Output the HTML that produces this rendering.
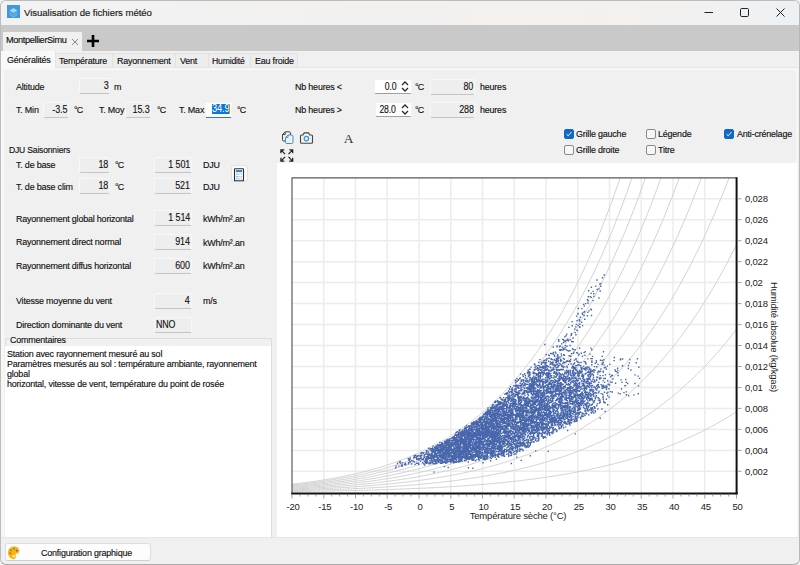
<!DOCTYPE html>
<html><head><meta charset="utf-8">
<style>
html,body{margin:0;padding:0}
body{width:800px;height:565px;overflow:hidden;position:relative;background:#f0f0f0;font-family:"Liberation Sans",sans-serif;color:#1c1c1c}
.a{position:absolute}
.t{position:absolute;font-size:9.5px;line-height:11px;height:11px;letter-spacing:-0.2px;white-space:nowrap;color:#111;-webkit-text-stroke:0.15px #111;transform:scaleX(.94);transform-origin:0 50%}
.ro i,.ed i{display:inline-block;font-style:normal;transform:scaleX(.87);transform-origin:100% 50%}
.ro{position:absolute;box-sizing:border-box;background:#eeeeee;border:1px solid #f8f8f8;border-bottom:1.5px solid #c4c4c4;border-radius:2px;font-size:10.3px;line-height:13px;letter-spacing:-0.1px;text-align:right;padding-right:0.5px;padding-top:0px;white-space:nowrap;color:#111;-webkit-text-stroke:0.12px #111}
.ed{position:absolute;box-sizing:border-box;background:#fff;border:1px solid #f2f2f2;border-bottom:1px solid #a0a0a0;border-radius:2px;font-size:10px;line-height:13.5px;letter-spacing:-0.2px;text-align:right;white-space:nowrap;color:#111;-webkit-text-stroke:0.12px #111}
.tab{position:absolute;top:52.5px;height:15px;box-sizing:border-box;background:#ededed;border:1px solid #e2e2e2;border-bottom:none}
.cb{position:absolute;box-sizing:border-box;width:10px;height:10px;border:1px solid #8a8a8a;border-radius:2px;background:#f6f6f6}
.cbk{background:#0f68c4;border-color:#0f68c4}
</style></head><body>
<!-- window frame -->
<div class="a" style="left:0;top:0;width:800px;height:565px;box-sizing:border-box;border:1px solid #bcbcbc;border-right-color:#b8b8b8;border-bottom-color:#ababab;border-radius:6px 6px 6px 6px"></div>
<!-- title bar -->
<div class="a" style="left:1px;top:1px;width:798px;height:24px;background:linear-gradient(90deg,#f2f2f2 0%,#f2f1f0 40%,#f4f0ed 75%,#f1f1f1 90%,#edf1f4 100%);border-radius:5px 5px 0 0"></div>
<div class="a" style="left:7px;top:5px;width:13px;height:13px;background:#3b9ae0">
<svg width="13" height="13" viewBox="0 0 13 13"><path d="M6.5 2 L10.5 4.5 L6.5 7 L2.5 4.5Z" fill="#a9d3f3"/><path d="M2.5 6.5 L6.5 9 L10.5 6.5 M2.5 8.5 L6.5 11 L10.5 8.5" fill="none" stroke="#8cc4ef" stroke-width="0.8"/></svg>
</div>
<div class="t" style="left:24px;top:7px;font-size:9.6px;letter-spacing:-0.05px;color:#1a1a1a;transform:none">Visualisation de fichiers météo</div>
<!-- caption buttons -->
<svg class="a" style="left:700px;top:5px" width="100" height="16" viewBox="0 0 100 16">
<line x1="4.5" y1="7.5" x2="13" y2="7.5" stroke="#222" stroke-width="1"/>
<rect x="40.5" y="3.5" width="8" height="8" rx="1.2" fill="none" stroke="#222" stroke-width="1"/>
<path d="M76.5 3.5 L84.5 11.5 M84.5 3.5 L76.5 11.5" stroke="#222" stroke-width="1"/>
</svg>
<!-- tab strip -->
<div class="a" style="left:1px;top:25px;width:798px;height:26px;background:#c9c9c9"></div>
<div class="a" style="left:3px;top:32px;width:79px;height:19px;background:#f0f0f0"></div>
<div class="t" style="left:6px;top:35px;font-size:9.2px;letter-spacing:-0.35px;transform:none">MontpellierSimu</div>
<svg class="a" style="left:71px;top:38px" width="8" height="8" viewBox="0 0 8 8"><path d="M1 1 L7 7 M7 1 L1 7" stroke="#7a7a7a" stroke-width="0.9"/></svg>
<svg class="a" style="left:86px;top:34px" width="14" height="14" viewBox="0 0 14 14"><path d="M7 1 V13 M1 7 H13" stroke="#000" stroke-width="2.6"/></svg>
<!-- inner tabs -->
<div class="a" style="left:1px;top:51px;width:798px;height:18px;background:#f0f0f0"></div>
<div class="tab" style="left:55px;width:58px"></div>
<div class="tab" style="left:112px;width:64px"></div>
<div class="tab" style="left:175px;width:34px"></div>
<div class="tab" style="left:208px;width:43px"></div>
<div class="tab" style="left:250px;width:48px"></div>
<div class="a" style="left:1px;top:66.5px;width:798px;height:1px;background:#e6e6e6"></div>
<div class="a" style="left:1px;top:67.5px;width:797px;height:2.5px;background:#f7f7f7"></div>
<div class="a" style="left:1px;top:67.5px;width:3px;height:470px;background:#f7f7f7"></div>
<div class="a" style="left:796px;top:67.5px;width:2px;height:470px;background:#f7f7f7"></div>
<div class="a" style="left:1px;top:51px;width:55px;height:17px;background:#f9f9f9;border-right:1px solid #e4e4e4;box-sizing:border-box"></div>
<div class="t" style="left:7px;top:53.5px">Généralités</div>
<div class="t" style="left:59px;top:55px">Température</div>
<div class="t" style="left:117px;top:55px">Rayonnement</div>
<div class="t" style="left:180px;top:55px">Vent</div>
<div class="t" style="left:212px;top:55px;transform:scaleX(.91)">Humidité</div>
<div class="t" style="left:254.5px;top:55px">Eau froide</div>

<!-- top fields -->
<div class="t" style="left:16px;top:81px">Altitude</div>
<div class="ro" style="left:79px;top:78px;width:31px;height:16px"><i>3</i></div>
<div class="t" style="left:114px;top:81px">m</div>

<div class="t" style="left:16px;top:104px">T. Min</div>
<div class="ro" style="left:43px;top:102px;width:26px;height:16px"><i>-3.5</i></div>
<div class="t" style="left:74px;top:104px"><span style="letter-spacing:-1px">°</span>C</div>
<div class="t" style="left:99px;top:104px">T. Moy</div>
<div class="ro" style="left:125px;top:102px;width:26px;height:16px"><i>15.3</i></div>
<div class="t" style="left:156.5px;top:104px"><span style="letter-spacing:-1px">°</span>C</div>
<div class="t" style="left:178.5px;top:104px">T. Max</div>
<div class="a" style="left:204.5px;top:102px;width:27px;height:16px;box-sizing:border-box;background:#fff;border:1px solid #f4f4f4;border-bottom:1.6px solid #3573b5;border-radius:2px"></div>
<div class="a" style="left:212px;top:103.6px;width:17.3px;height:10.4px;background:#0b77d6"></div>
<div class="t" style="left:211.8px;top:103.3px;color:#fff;-webkit-text-stroke:0;font-size:10.4px;transform:scaleX(.9)">34.9</div>
<div class="a" style="left:229.2px;top:103.6px;width:1px;height:10.4px;background:#d98a3a"></div>
<div class="t" style="left:237px;top:104px"><span style="letter-spacing:-1px">°</span>C</div>

<div class="t" style="left:295px;top:81px">Nb heures &lt;</div>
<div class="ed" style="left:374px;top:79px;width:38px;height:15px;padding-right:15px"><i>0.0</i></div>
<svg class="a" style="left:400px;top:80px" width="10" height="13" viewBox="0 0 10 13"><path d="M2 5 L5 2 L8 5 M2 8 L5 11 L8 8" fill="none" stroke="#2a2a2a" stroke-width="1.25"/></svg>
<div class="t" style="left:415px;top:81px"><span style="letter-spacing:-1px">°</span>C</div>
<div class="ro" style="left:430px;top:79px;width:45px;height:16px"><i>80</i></div>
<div class="t" style="left:479.5px;top:81px">heures</div>

<div class="t" style="left:295px;top:104px">Nb heures &gt;</div>
<div class="ed" style="left:375px;top:102px;width:37px;height:15px;padding-right:15px"><i>28.0</i></div>
<svg class="a" style="left:400px;top:103px" width="10" height="13" viewBox="0 0 10 13"><path d="M2 5 L5 2 L8 5 M2 8 L5 11 L8 8" fill="none" stroke="#2a2a2a" stroke-width="1.25"/></svg>
<div class="t" style="left:415px;top:104px"><span style="letter-spacing:-1px">°</span>C</div>
<div class="ro" style="left:430px;top:102px;width:45px;height:16px"><i>288</i></div>
<div class="t" style="left:479.5px;top:104px">heures</div>

<!-- DJU -->
<div class="t" style="left:9px;top:143.5px;transform:scaleX(.9)">DJU Saisonniers</div>
<div class="t" style="left:16px;top:158.5px">T. de base</div>
<div class="ro" style="left:79px;top:157px;width:31px;height:16px"><i>18</i></div>
<div class="t" style="left:114.5px;top:158.5px"><span style="letter-spacing:-1px">°</span>C</div>
<div class="ro" style="left:153.5px;top:157px;width:38px;height:16px"><i>1 501</i></div>
<div class="t" style="left:203px;top:158.5px">DJU</div>
<div class="t" style="left:16px;top:180.5px">T. de base clim</div>
<div class="ro" style="left:79px;top:178px;width:31px;height:16px"><i>18</i></div>
<div class="t" style="left:114.5px;top:180.5px"><span style="letter-spacing:-1px">°</span>C</div>
<div class="ro" style="left:153.5px;top:178px;width:38px;height:16px"><i>521</i></div>
<div class="t" style="left:203px;top:180.5px">DJU</div>
<div class="a" style="left:230.5px;top:165px;width:17px;height:17px;box-sizing:border-box;background:#fbfbfb;border:1px solid #e2e2e2;border-radius:3px"></div>
<svg class="a" style="left:233px;top:167.5px" width="12" height="14" viewBox="0 0 12 14"><rect x="1.5" y="0.8" width="9" height="12" rx="0.4" fill="#fff" stroke="#2e2e2e" stroke-width="1.1"/><rect x="2.8" y="2" width="6.4" height="2.2" fill="#3b87cc"/><g fill="#8fbde6"><rect x="2.8" y="5.6" width="2" height="1.2"/><rect x="5.3" y="5.6" width="1.3" height="1.2"/><rect x="7.6" y="5.6" width="1.3" height="1.2"/><rect x="2.8" y="8" width="2" height="1.2"/><rect x="5.3" y="8" width="1.3" height="1.2"/><rect x="7.6" y="8" width="1.3" height="1.2"/><rect x="2.8" y="10.2" width="2" height="1.2"/><rect x="5.3" y="10.2" width="1.3" height="1.2"/><rect x="7.6" y="10.2" width="1.3" height="1.2"/></g></svg>

<div class="t" style="left:16px;top:212.5px">Rayonnement global horizontal</div>
<div class="ro" style="left:153.5px;top:210px;width:38px;height:16px"><i>1 514</i></div>
<div class="t" style="left:202.5px;top:212.5px">kWh/m².an</div>
<div class="t" style="left:16px;top:236px">Rayonnement direct normal</div>
<div class="ro" style="left:153.5px;top:234px;width:38px;height:16px"><i>914</i></div>
<div class="t" style="left:202.5px;top:236.5px">kWh/m².an</div>
<div class="t" style="left:16px;top:260px">Rayonnement diffus horizontal</div>
<div class="ro" style="left:153.5px;top:257.5px;width:38px;height:16px"><i>600</i></div>
<div class="t" style="left:202.5px;top:260px">kWh/m².an</div>

<div class="t" style="left:16px;top:295px">Vitesse moyenne du vent</div>
<div class="ro" style="left:153.5px;top:292.5px;width:38px;height:16px"><i>4</i></div>
<div class="t" style="left:202.5px;top:295px">m/s</div>
<div class="t" style="left:16px;top:318.5px">Direction dominante du vent</div>
<div class="ro" style="left:153.5px;top:316.5px;width:38px;height:16px;text-align:left;padding-left:1px"><i style="transform:scaleX(.86);transform-origin:0 50%">NNO</i></div>

<!-- Commentaires group -->
<div class="a" style="left:4.5px;top:337.5px;width:267.5px;height:201px;box-sizing:border-box;border:1px solid #dcdcdc;border-bottom:none;border-radius:2px"></div>
<div class="a" style="left:9px;top:333px;width:56px;height:10px;background:#f0f0f0"></div>
<div class="t" style="left:10px;top:334px">Commentaires</div>
<div class="a" style="left:5px;top:346px;width:265.5px;height:190.5px;background:#fff"></div>
<div class="t" style="left:6.5px;top:348.5px;line-height:10px">Station avec rayonnement mesuré au sol<br>Paramètres mesurés au sol : température ambiante, rayonnement<br>global<br>horizontal, vitesse de vent, température du point de rosée</div>

<!-- chart toolbar -->
<svg class="a" style="left:280px;top:130px" width="80" height="34" viewBox="0 0 80 34">
<path d="M2.5 4.5 L5.2 1.8 H9.3 Q10.5 1.8 10.5 3 V5.5 M5.5 11 H3.7 Q2.5 11 2.5 9.8 V4.5 M5.2 1.8 V4.5 H2.5" fill="none" stroke="#454545" stroke-width="1"/>
<path d="M5.5 7.5 L8 5 H11.8 Q13 5 13 6.2 V12.3 Q13 13.5 11.8 13.5 H6.7 Q5.5 13.5 5.5 12.3 Z" fill="#f0f0f0" stroke="#3a93d3" stroke-width="1"/>
<path d="M8 5 V7.5 H5.5" fill="none" stroke="#3a93d3" stroke-width="0.9"/>
<path d="M20.5 6 Q20.5 5 21.5 5 H23 L24.2 2.9 H28.6 L29.8 5 H31.5 Q32.5 5 32.5 6 V12.3 Q32.5 13.3 31.5 13.3 H21.5 Q20.5 13.3 20.5 12.3 Z" fill="none" stroke="#454545" stroke-width="1.1"/>
<circle cx="26.4" cy="8.6" r="2.2" fill="none" stroke="#3a93d3" stroke-width="1.2"/>
<text x="68.5" y="13.2" font-family="Liberation Serif" font-size="13.5" fill="#333" text-anchor="middle">A</text>
<path d="M0.9 23.3 V19.9 H4.3 M0.9 19.9 L5.1 24.1 M12.7 23.3 V19.9 H9.3 M12.7 19.9 L8.5 24.1 M0.9 27.7 V31.1 H4.3 M0.9 31.1 L5.1 26.9 M12.7 27.7 V31.1 H9.3 M12.7 31.1 L8.5 26.9" fill="none" stroke="#1e1e1e" stroke-width="1.2"/>
</svg>

<!-- checkboxes -->
<div class="cb cbk" style="left:564px;top:128.5px"><svg width="8" height="8" viewBox="0 0 8 8" style="position:absolute;left:0;top:0"><path d="M1.5 4.2 L3.2 5.8 L6.5 2" fill="none" stroke="#fff" stroke-width="0.9"/></svg></div>
<div class="t" style="left:576px;top:128px">Grille gauche</div>
<div class="cb" style="left:564px;top:144.5px"></div>
<div class="t" style="left:576px;top:144px">Grille droite</div>
<div class="cb" style="left:645.5px;top:128.5px"></div>
<div class="t" style="left:657.5px;top:128px">Légende</div>
<div class="cb" style="left:645.5px;top:144.5px"></div>
<div class="t" style="left:657.5px;top:144px">Titre</div>
<div class="cb cbk" style="left:724px;top:128.5px"><svg width="8" height="8" viewBox="0 0 8 8" style="position:absolute;left:0;top:0"><path d="M1.5 4.2 L3.2 5.8 L6.5 2" fill="none" stroke="#fff" stroke-width="0.9"/></svg></div>
<div class="t" style="left:736.5px;top:128px">Anti-crénelage</div>

<svg style="position:absolute;left:277px;top:163px" width="520" height="374" viewBox="277 163 520 374"><defs><clipPath id="fr"><rect x="292" y="177.8" width="444.6" height="315.5"/></clipPath></defs><rect x="277" y="163" width="520" height="374" fill="#fff"/><line x1="323.8" y1="177.8" x2="323.8" y2="493" stroke="#ececec" stroke-width="1.5"/><line x1="355.5" y1="177.8" x2="355.5" y2="493" stroke="#ececec" stroke-width="1.5"/><line x1="387.2" y1="177.8" x2="387.2" y2="493" stroke="#ececec" stroke-width="1.5"/><line x1="419" y1="177.8" x2="419" y2="493" stroke="#ececec" stroke-width="1.5"/><line x1="450.8" y1="177.8" x2="450.8" y2="493" stroke="#ececec" stroke-width="1.5"/><line x1="482.5" y1="177.8" x2="482.5" y2="493" stroke="#ececec" stroke-width="1.5"/><line x1="514.2" y1="177.8" x2="514.2" y2="493" stroke="#ececec" stroke-width="1.5"/><line x1="546" y1="177.8" x2="546" y2="493" stroke="#ececec" stroke-width="1.5"/><line x1="577.8" y1="177.8" x2="577.8" y2="493" stroke="#ececec" stroke-width="1.5"/><line x1="609.5" y1="177.8" x2="609.5" y2="493" stroke="#ececec" stroke-width="1.5"/><line x1="641.2" y1="177.8" x2="641.2" y2="493" stroke="#ececec" stroke-width="1.5"/><line x1="673" y1="177.8" x2="673" y2="493" stroke="#ececec" stroke-width="1.5"/><line x1="704.8" y1="177.8" x2="704.8" y2="493" stroke="#ececec" stroke-width="1.5"/><line x1="292" y1="471.3" x2="736" y2="471.3" stroke="#ececec" stroke-width="1.5"/><line x1="292" y1="450.4" x2="736" y2="450.4" stroke="#ececec" stroke-width="1.5"/><line x1="292" y1="429.4" x2="736" y2="429.4" stroke="#ececec" stroke-width="1.5"/><line x1="292" y1="408.4" x2="736" y2="408.4" stroke="#ececec" stroke-width="1.5"/><line x1="292" y1="387.5" x2="736" y2="387.5" stroke="#ececec" stroke-width="1.5"/><line x1="292" y1="366.5" x2="736" y2="366.5" stroke="#ececec" stroke-width="1.5"/><line x1="292" y1="345.5" x2="736" y2="345.5" stroke="#ececec" stroke-width="1.5"/><line x1="292" y1="324.6" x2="736" y2="324.6" stroke="#ececec" stroke-width="1.5"/><line x1="292" y1="303.6" x2="736" y2="303.6" stroke="#ececec" stroke-width="1.5"/><line x1="292" y1="282.6" x2="736" y2="282.6" stroke="#ececec" stroke-width="1.5"/><line x1="292" y1="261.7" x2="736" y2="261.7" stroke="#ececec" stroke-width="1.5"/><line x1="292" y1="240.7" x2="736" y2="240.7" stroke="#ececec" stroke-width="1.5"/><line x1="292" y1="219.7" x2="736" y2="219.7" stroke="#ececec" stroke-width="1.5"/><line x1="292" y1="198.8" x2="736" y2="198.8" stroke="#ececec" stroke-width="1.5"/><g clip-path="url(#fr)"><path d="M292 491.5 L293.6 491.5 L295.2 491.5 L296.8 491.4 L298.4 491.4 L299.9 491.4 L301.5 491.4 L303.1 491.4 L304.7 491.3 L306.3 491.3 L307.9 491.3 L309.5 491.3 L311.1 491.3 L312.6 491.2 L314.2 491.2 L315.8 491.2 L317.4 491.2 L319 491.1 L320.6 491.1 L322.2 491.1 L323.8 491.1 L325.3 491 L326.9 491 L328.5 491 L330.1 491 L331.7 490.9 L333.3 490.9 L334.9 490.9 L336.4 490.8 L338 490.8 L339.6 490.8 L341.2 490.8 L342.8 490.7 L344.4 490.7 L346 490.7 L347.6 490.6 L349.1 490.6 L350.7 490.6 L352.3 490.5 L353.9 490.5 L355.5 490.5 L357.1 490.4 L358.7 490.4 L360.3 490.3 L361.9 490.3 L363.4 490.3 L365 490.2 L366.6 490.2 L368.2 490.1 L369.8 490.1 L371.4 490.1 L373 490 L374.6 490 L376.1 489.9 L377.7 489.9 L379.3 489.8 L380.9 489.8 L382.5 489.7 L384.1 489.7 L385.7 489.6 L387.2 489.6 L388.8 489.5 L390.4 489.5 L392 489.4 L393.6 489.4 L395.2 489.3 L396.8 489.3 L398.4 489.2 L399.9 489.1 L401.5 489.1 L403.1 489 L404.7 489 L406.3 488.9 L407.9 488.8 L409.5 488.8 L411.1 488.7 L412.6 488.6 L414.2 488.6 L415.8 488.5 L417.4 488.4 L419 488.4 L420.6 488.3 L422.2 488.2 L423.8 488.1 L425.4 488.1 L426.9 488 L428.5 487.9 L430.1 487.8 L431.7 487.8 L433.3 487.7 L434.9 487.6 L436.5 487.5 L438 487.4 L439.6 487.3 L441.2 487.2 L442.8 487.2 L444.4 487.1 L446 487 L447.6 486.9 L449.2 486.8 L450.8 486.7 L452.3 486.6 L453.9 486.5 L455.5 486.4 L457.1 486.3 L458.7 486.2 L460.3 486.1 L461.9 486 L463.4 485.9 L465 485.7 L466.6 485.6 L468.2 485.5 L469.8 485.4 L471.4 485.3 L473 485.2 L474.6 485 L476.1 484.9 L477.7 484.8 L479.3 484.7 L480.9 484.5 L482.5 484.4 L484.1 484.3 L485.7 484.1 L487.3 484 L488.9 483.9 L490.4 483.7 L492 483.6 L493.6 483.4 L495.2 483.3 L496.8 483.1 L498.4 483 L500 482.8 L501.5 482.7 L503.1 482.5 L504.7 482.3 L506.3 482.2 L507.9 482 L509.5 481.8 L511.1 481.7 L512.7 481.5 L514.2 481.3 L515.8 481.2 L517.4 481 L519 480.8 L520.6 480.6 L522.2 480.4 L523.8 480.2 L525.4 480 L527 479.8 L528.5 479.6 L530.1 479.4 L531.7 479.2 L533.3 479 L534.9 478.8 L536.5 478.6 L538.1 478.4 L539.6 478.2 L541.2 477.9 L542.8 477.7 L544.4 477.5 L546 477.2 L547.6 477 L549.2 476.8 L550.8 476.5 L552.3 476.3 L553.9 476 L555.5 475.8 L557.1 475.5 L558.7 475.3 L560.3 475 L561.9 474.7 L563.5 474.5 L565 474.2 L566.6 473.9 L568.2 473.7 L569.8 473.4 L571.4 473.1 L573 472.8 L574.6 472.5 L576.2 472.2 L577.8 471.9 L579.3 471.6 L580.9 471.3 L582.5 471 L584.1 470.6 L585.7 470.3 L587.3 470 L588.9 469.7 L590.5 469.3 L592 469 L593.6 468.6 L595.2 468.3 L596.8 467.9 L598.4 467.6 L600 467.2 L601.6 466.8 L603.1 466.5 L604.7 466.1 L606.3 465.7 L607.9 465.3 L609.5 464.9 L611.1 464.5 L612.7 464.1 L614.3 463.7 L615.8 463.3 L617.4 462.9 L619 462.5 L620.6 462 L622.2 461.6 L623.8 461.2 L625.4 460.7 L627 460.3 L628.5 459.8 L630.1 459.3 L631.7 458.9 L633.3 458.4 L634.9 457.9 L636.5 457.4 L638.1 456.9 L639.7 456.5 L641.2 455.9 L642.8 455.4 L644.4 454.9 L646 454.4 L647.6 453.9 L649.2 453.3 L650.8 452.8 L652.4 452.2 L654 451.7 L655.5 451.1 L657.1 450.6 L658.7 450 L660.3 449.4 L661.9 448.8 L663.5 448.2 L665.1 447.6 L666.6 447 L668.2 446.4 L669.8 445.8 L671.4 445.1 L673 444.5 L674.6 443.8 L676.2 443.2 L677.8 442.5 L679.3 441.9 L680.9 441.2 L682.5 440.5 L684.1 439.8 L685.7 439.1 L687.3 438.4 L688.9 437.7 L690.5 436.9 L692 436.2 L693.6 435.5 L695.2 434.7 L696.8 433.9 L698.4 433.2 L700 432.4 L701.6 431.6 L703.2 430.8 L704.8 430 L706.3 429.2 L707.9 428.4 L709.5 427.5 L711.1 426.7 L712.7 425.8 L714.3 425 L715.9 424.1 L717.5 423.2 L719 422.3 L720.6 421.4 L722.2 420.5 L723.8 419.6 L725.4 418.6 L727 417.7 L728.6 416.7 L730.1 415.8 L731.7 414.8 L733.3 413.8 L734.9 412.8 L736.5 411.8" fill="none" stroke="#cdcdcd" stroke-width="0.9"/><path d="M292 490.7 L293.6 490.6 L295.2 490.6 L296.8 490.6 L298.4 490.5 L299.9 490.5 L301.5 490.5 L303.1 490.4 L304.7 490.4 L306.3 490.3 L307.9 490.3 L309.5 490.3 L311.1 490.2 L312.6 490.2 L314.2 490.1 L315.8 490.1 L317.4 490 L319 490 L320.6 489.9 L322.2 489.9 L323.8 489.8 L325.3 489.8 L326.9 489.7 L328.5 489.7 L330.1 489.6 L331.7 489.6 L333.3 489.5 L334.9 489.5 L336.4 489.4 L338 489.3 L339.6 489.3 L341.2 489.2 L342.8 489.2 L344.4 489.1 L346 489 L347.6 489 L349.1 488.9 L350.7 488.8 L352.3 488.8 L353.9 488.7 L355.5 488.6 L357.1 488.5 L358.7 488.5 L360.3 488.4 L361.9 488.3 L363.4 488.2 L365 488.1 L366.6 488.1 L368.2 488 L369.8 487.9 L371.4 487.8 L373 487.7 L374.6 487.6 L376.1 487.5 L377.7 487.5 L379.3 487.4 L380.9 487.3 L382.5 487.2 L384.1 487.1 L385.7 487 L387.2 486.9 L388.8 486.8 L390.4 486.7 L392 486.5 L393.6 486.4 L395.2 486.3 L396.8 486.2 L398.4 486.1 L399.9 486 L401.5 485.9 L403.1 485.7 L404.7 485.6 L406.3 485.5 L407.9 485.4 L409.5 485.2 L411.1 485.1 L412.6 485 L414.2 484.8 L415.8 484.7 L417.4 484.6 L419 484.4 L420.6 484.3 L422.2 484.1 L423.8 484 L425.4 483.8 L426.9 483.7 L428.5 483.5 L430.1 483.4 L431.7 483.2 L433.3 483 L434.9 482.9 L436.5 482.7 L438 482.5 L439.6 482.4 L441.2 482.2 L442.8 482 L444.4 481.8 L446 481.6 L447.6 481.4 L449.2 481.3 L450.8 481.1 L452.3 480.9 L453.9 480.7 L455.5 480.5 L457.1 480.3 L458.7 480 L460.3 479.8 L461.9 479.6 L463.4 479.4 L465 479.2 L466.6 478.9 L468.2 478.7 L469.8 478.5 L471.4 478.2 L473 478 L474.6 477.8 L476.1 477.5 L477.7 477.3 L479.3 477 L480.9 476.7 L482.5 476.5 L484.1 476.2 L485.7 475.9 L487.3 475.7 L488.9 475.4 L490.4 475.1 L492 474.8 L493.6 474.5 L495.2 474.2 L496.8 473.9 L498.4 473.6 L500 473.3 L501.5 473 L503.1 472.7 L504.7 472.4 L506.3 472 L507.9 471.7 L509.5 471.4 L511.1 471 L512.7 470.7 L514.2 470.3 L515.8 470 L517.4 469.6 L519 469.2 L520.6 468.9 L522.2 468.5 L523.8 468.1 L525.4 467.7 L527 467.3 L528.5 466.9 L530.1 466.5 L531.7 466.1 L533.3 465.7 L534.9 465.3 L536.5 464.8 L538.1 464.4 L539.6 464 L541.2 463.5 L542.8 463.1 L544.4 462.6 L546 462.1 L547.6 461.7 L549.2 461.2 L550.8 460.7 L552.3 460.2 L553.9 459.7 L555.5 459.2 L557.1 458.7 L558.7 458.2 L560.3 457.6 L561.9 457.1 L563.5 456.6 L565 456 L566.6 455.5 L568.2 454.9 L569.8 454.3 L571.4 453.7 L573 453.2 L574.6 452.6 L576.2 452 L577.8 451.4 L579.3 450.7 L580.9 450.1 L582.5 449.5 L584.1 448.8 L585.7 448.2 L587.3 447.5 L588.9 446.8 L590.5 446.2 L592 445.5 L593.6 444.8 L595.2 444.1 L596.8 443.4 L598.4 442.6 L600 441.9 L601.6 441.2 L603.1 440.4 L604.7 439.7 L606.3 438.9 L607.9 438.1 L609.5 437.3 L611.1 436.5 L612.7 435.7 L614.3 434.9 L615.8 434 L617.4 433.2 L619 432.3 L620.6 431.5 L622.2 430.6 L623.8 429.7 L625.4 428.8 L627 427.9 L628.5 427 L630.1 426.1 L631.7 425.1 L633.3 424.2 L634.9 423.2 L636.5 422.2 L638.1 421.2 L639.7 420.2 L641.2 419.2 L642.8 418.2 L644.4 417.1 L646 416.1 L647.6 415 L649.2 413.9 L650.8 412.8 L652.4 411.7 L654 410.6 L655.5 409.4 L657.1 408.3 L658.7 407.1 L660.3 405.9 L661.9 404.8 L663.5 403.5 L665.1 402.3 L666.6 401.1 L668.2 399.8 L669.8 398.6 L671.4 397.3 L673 396 L674.6 394.7 L676.2 393.3 L677.8 392 L679.3 390.6 L680.9 389.3 L682.5 387.9 L684.1 386.4 L685.7 385 L687.3 383.6 L688.9 382.1 L690.5 380.6 L692 379.1 L693.6 377.6 L695.2 376.1 L696.8 374.5 L698.4 373 L700 371.4 L701.6 369.8 L703.2 368.1 L704.8 366.5 L706.3 364.8 L707.9 363.1 L709.5 361.4 L711.1 359.7 L712.7 358 L714.3 356.2 L715.9 354.4 L717.5 352.6 L719 350.8 L720.6 348.9 L722.2 347.1 L723.8 345.2 L725.4 343.3 L727 341.3 L728.6 339.4 L730.1 337.4 L731.7 335.4 L733.3 333.4 L734.9 331.3 L736.5 329.2" fill="none" stroke="#cdcdcd" stroke-width="0.9"/><path d="M292 489.9 L293.6 489.8 L295.2 489.8 L296.8 489.7 L298.4 489.7 L299.9 489.6 L301.5 489.5 L303.1 489.5 L304.7 489.4 L306.3 489.4 L307.9 489.3 L309.5 489.2 L311.1 489.2 L312.6 489.1 L314.2 489 L315.8 489 L317.4 488.9 L319 488.8 L320.6 488.7 L322.2 488.7 L323.8 488.6 L325.3 488.5 L326.9 488.4 L328.5 488.4 L330.1 488.3 L331.7 488.2 L333.3 488.1 L334.9 488 L336.4 487.9 L338 487.9 L339.6 487.8 L341.2 487.7 L342.8 487.6 L344.4 487.5 L346 487.4 L347.6 487.3 L349.1 487.2 L350.7 487.1 L352.3 487 L353.9 486.9 L355.5 486.8 L357.1 486.6 L358.7 486.5 L360.3 486.4 L361.9 486.3 L363.4 486.2 L365 486.1 L366.6 485.9 L368.2 485.8 L369.8 485.7 L371.4 485.6 L373 485.4 L374.6 485.3 L376.1 485.2 L377.7 485 L379.3 484.9 L380.9 484.7 L382.5 484.6 L384.1 484.4 L385.7 484.3 L387.2 484.1 L388.8 484 L390.4 483.8 L392 483.7 L393.6 483.5 L395.2 483.3 L396.8 483.2 L398.4 483 L399.9 482.8 L401.5 482.6 L403.1 482.5 L404.7 482.3 L406.3 482.1 L407.9 481.9 L409.5 481.7 L411.1 481.5 L412.6 481.3 L414.2 481.1 L415.8 480.9 L417.4 480.7 L419 480.5 L420.6 480.3 L422.2 480 L423.8 479.8 L425.4 479.6 L426.9 479.4 L428.5 479.1 L430.1 478.9 L431.7 478.7 L433.3 478.4 L434.9 478.2 L436.5 477.9 L438 477.6 L439.6 477.4 L441.2 477.1 L442.8 476.8 L444.4 476.6 L446 476.3 L447.6 476 L449.2 475.7 L450.8 475.4 L452.3 475.1 L453.9 474.8 L455.5 474.5 L457.1 474.2 L458.7 473.9 L460.3 473.6 L461.9 473.3 L463.4 472.9 L465 472.6 L466.6 472.2 L468.2 471.9 L469.8 471.6 L471.4 471.2 L473 470.8 L474.6 470.5 L476.1 470.1 L477.7 469.7 L479.3 469.3 L480.9 468.9 L482.5 468.5 L484.1 468.1 L485.7 467.7 L487.3 467.3 L488.9 466.9 L490.4 466.5 L492 466 L493.6 465.6 L495.2 465.2 L496.8 464.7 L498.4 464.2 L500 463.8 L501.5 463.3 L503.1 462.8 L504.7 462.3 L506.3 461.9 L507.9 461.4 L509.5 460.8 L511.1 460.3 L512.7 459.8 L514.2 459.3 L515.8 458.7 L517.4 458.2 L519 457.6 L520.6 457.1 L522.2 456.5 L523.8 455.9 L525.4 455.3 L527 454.8 L528.5 454.2 L530.1 453.5 L531.7 452.9 L533.3 452.3 L534.9 451.7 L536.5 451 L538.1 450.4 L539.6 449.7 L541.2 449 L542.8 448.3 L544.4 447.6 L546 446.9 L547.6 446.2 L549.2 445.5 L550.8 444.8 L552.3 444 L553.9 443.3 L555.5 442.5 L557.1 441.7 L558.7 441 L560.3 440.2 L561.9 439.4 L563.5 438.5 L565 437.7 L566.6 436.9 L568.2 436 L569.8 435.2 L571.4 434.3 L573 433.4 L574.6 432.5 L576.2 431.6 L577.8 430.7 L579.3 429.8 L580.9 428.8 L582.5 427.8 L584.1 426.9 L585.7 425.9 L587.3 424.9 L588.9 423.9 L590.5 422.9 L592 421.8 L593.6 420.8 L595.2 419.7 L596.8 418.6 L598.4 417.5 L600 416.4 L601.6 415.3 L603.1 414.2 L604.7 413 L606.3 411.8 L607.9 410.7 L609.5 409.5 L611.1 408.3 L612.7 407 L614.3 405.8 L615.8 404.5 L617.4 403.2 L619 402 L620.6 400.6 L622.2 399.3 L623.8 398 L625.4 396.6 L627 395.2 L628.5 393.8 L630.1 392.4 L631.7 391 L633.3 389.5 L634.9 388.1 L636.5 386.6 L638.1 385.1 L639.7 383.6 L641.2 382 L642.8 380.5 L644.4 378.9 L646 377.3 L647.6 375.6 L649.2 374 L650.8 372.3 L652.4 370.7 L654 368.9 L655.5 367.2 L657.1 365.5 L658.7 363.7 L660.3 361.9 L661.9 360.1 L663.5 358.3 L665.1 356.4 L666.6 354.5 L668.2 352.6 L669.8 350.7 L671.4 348.7 L673 346.7 L674.6 344.7 L676.2 342.7 L677.8 340.7 L679.3 338.6 L680.9 336.5 L682.5 334.4 L684.1 332.2 L685.7 330 L687.3 327.8 L688.9 325.6 L690.5 323.3 L692 321.1 L693.6 318.7 L695.2 316.4 L696.8 314 L698.4 311.6 L700 309.2 L701.6 306.7 L703.2 304.3 L704.8 301.7 L706.3 299.2 L707.9 296.6 L709.5 294 L711.1 291.4 L712.7 288.7 L714.3 286 L715.9 283.3 L717.5 280.5 L719 277.7 L720.6 274.9 L722.2 272 L723.8 269.1 L725.4 266.2 L727 263.2 L728.6 260.2 L730.1 257.1 L731.7 254.1 L733.3 250.9 L734.9 247.8 L736.5 244.6" fill="none" stroke="#cdcdcd" stroke-width="0.9"/><path d="M292 489.1 L293.6 489 L295.2 488.9 L296.8 488.8 L298.4 488.8 L299.9 488.7 L301.5 488.6 L303.1 488.5 L304.7 488.5 L306.3 488.4 L307.9 488.3 L309.5 488.2 L311.1 488.1 L312.6 488 L314.2 487.9 L315.8 487.8 L317.4 487.8 L319 487.7 L320.6 487.6 L322.2 487.5 L323.8 487.4 L325.3 487.3 L326.9 487.2 L328.5 487 L330.1 486.9 L331.7 486.8 L333.3 486.7 L334.9 486.6 L336.4 486.5 L338 486.4 L339.6 486.2 L341.2 486.1 L342.8 486 L344.4 485.9 L346 485.7 L347.6 485.6 L349.1 485.5 L350.7 485.3 L352.3 485.2 L353.9 485.1 L355.5 484.9 L357.1 484.8 L358.7 484.6 L360.3 484.5 L361.9 484.3 L363.4 484.1 L365 484 L366.6 483.8 L368.2 483.7 L369.8 483.5 L371.4 483.3 L373 483.1 L374.6 483 L376.1 482.8 L377.7 482.6 L379.3 482.4 L380.9 482.2 L382.5 482 L384.1 481.8 L385.7 481.6 L387.2 481.4 L388.8 481.2 L390.4 481 L392 480.8 L393.6 480.6 L395.2 480.3 L396.8 480.1 L398.4 479.9 L399.9 479.7 L401.5 479.4 L403.1 479.2 L404.7 478.9 L406.3 478.7 L407.9 478.4 L409.5 478.2 L411.1 477.9 L412.6 477.6 L414.2 477.4 L415.8 477.1 L417.4 476.8 L419 476.5 L420.6 476.2 L422.2 476 L423.8 475.7 L425.4 475.4 L426.9 475 L428.5 474.7 L430.1 474.4 L431.7 474.1 L433.3 473.8 L434.9 473.4 L436.5 473.1 L438 472.7 L439.6 472.4 L441.2 472 L442.8 471.7 L444.4 471.3 L446 470.9 L447.6 470.6 L449.2 470.2 L450.8 469.8 L452.3 469.4 L453.9 469 L455.5 468.6 L457.1 468.2 L458.7 467.7 L460.3 467.3 L461.9 466.9 L463.4 466.4 L465 466 L466.6 465.5 L468.2 465.1 L469.8 464.6 L471.4 464.1 L473 463.6 L474.6 463.2 L476.1 462.7 L477.7 462.2 L479.3 461.6 L480.9 461.1 L482.5 460.6 L484.1 460.1 L485.7 459.5 L487.3 459 L488.9 458.4 L490.4 457.8 L492 457.2 L493.6 456.7 L495.2 456.1 L496.8 455.5 L498.4 454.8 L500 454.2 L501.5 453.6 L503.1 452.9 L504.7 452.3 L506.3 451.6 L507.9 451 L509.5 450.3 L511.1 449.6 L512.7 448.9 L514.2 448.2 L515.8 447.5 L517.4 446.7 L519 446 L520.6 445.3 L522.2 444.5 L523.8 443.7 L525.4 442.9 L527 442.1 L528.5 441.3 L530.1 440.5 L531.7 439.7 L533.3 438.8 L534.9 438 L536.5 437.1 L538.1 436.3 L539.6 435.4 L541.2 434.5 L542.8 433.5 L544.4 432.6 L546 431.7 L547.6 430.7 L549.2 429.8 L550.8 428.8 L552.3 427.8 L553.9 426.8 L555.5 425.8 L557.1 424.7 L558.7 423.7 L560.3 422.6 L561.9 421.5 L563.5 420.4 L565 419.3 L566.6 418.2 L568.2 417.1 L569.8 415.9 L571.4 414.7 L573 413.5 L574.6 412.3 L576.2 411.1 L577.8 409.9 L579.3 408.6 L580.9 407.4 L582.5 406.1 L584.1 404.8 L585.7 403.5 L587.3 402.1 L588.9 400.8 L590.5 399.4 L592 398 L593.6 396.6 L595.2 395.1 L596.8 393.7 L598.4 392.2 L600 390.7 L601.6 389.2 L603.1 387.7 L604.7 386.2 L606.3 384.6 L607.9 383 L609.5 381.4 L611.1 379.8 L612.7 378.1 L614.3 376.4 L615.8 374.7 L617.4 373 L619 371.3 L620.6 369.5 L622.2 367.7 L623.8 365.9 L625.4 364.1 L627 362.2 L628.5 360.4 L630.1 358.5 L631.7 356.5 L633.3 354.6 L634.9 352.6 L636.5 350.6 L638.1 348.6 L639.7 346.5 L641.2 344.4 L642.8 342.3 L644.4 340.2 L646 338 L647.6 335.8 L649.2 333.6 L650.8 331.4 L652.4 329.1 L654 326.8 L655.5 324.5 L657.1 322.1 L658.7 319.7 L660.3 317.3 L661.9 314.8 L663.5 312.3 L665.1 309.8 L666.6 307.3 L668.2 304.7 L669.8 302.1 L671.4 299.5 L673 296.8 L674.6 294.1 L676.2 291.3 L677.8 288.5 L679.3 285.7 L680.9 282.9 L682.5 280 L684.1 277.1 L685.7 274.1 L687.3 271.1 L688.9 268.1 L690.5 265.1 L692 262 L693.6 258.8 L695.2 255.6 L696.8 252.4 L698.4 249.2 L700 245.9 L701.6 242.5 L703.2 239.1 L704.8 235.7 L706.3 232.3 L707.9 228.8 L709.5 225.2 L711.1 221.6 L712.7 218 L714.3 214.3 L715.9 210.6 L717.5 206.8 L719 203 L720.6 199.1 L722.2 195.2 L723.8 191.3 L725.4 187.2 L727 183.2 L728.6 179.1 L729.1 177.8" fill="none" stroke="#cdcdcd" stroke-width="0.9"/><path d="M292 488.3 L293.6 488.2 L295.2 488.1 L296.8 488 L298.4 487.9 L299.9 487.8 L301.5 487.7 L303.1 487.6 L304.7 487.5 L306.3 487.4 L307.9 487.3 L309.5 487.2 L311.1 487.1 L312.6 487 L314.2 486.9 L315.8 486.7 L317.4 486.6 L319 486.5 L320.6 486.4 L322.2 486.3 L323.8 486.1 L325.3 486 L326.9 485.9 L328.5 485.7 L330.1 485.6 L331.7 485.5 L333.3 485.3 L334.9 485.2 L336.4 485 L338 484.9 L339.6 484.7 L341.2 484.6 L342.8 484.4 L344.4 484.3 L346 484.1 L347.6 483.9 L349.1 483.8 L350.7 483.6 L352.3 483.4 L353.9 483.2 L355.5 483.1 L357.1 482.9 L358.7 482.7 L360.3 482.5 L361.9 482.3 L363.4 482.1 L365 481.9 L366.6 481.7 L368.2 481.5 L369.8 481.3 L371.4 481.1 L373 480.8 L374.6 480.6 L376.1 480.4 L377.7 480.2 L379.3 479.9 L380.9 479.7 L382.5 479.5 L384.1 479.2 L385.7 479 L387.2 478.7 L388.8 478.4 L390.4 478.2 L392 477.9 L393.6 477.6 L395.2 477.4 L396.8 477.1 L398.4 476.8 L399.9 476.5 L401.5 476.2 L403.1 475.9 L404.7 475.6 L406.3 475.3 L407.9 475 L409.5 474.6 L411.1 474.3 L412.6 474 L414.2 473.6 L415.8 473.3 L417.4 472.9 L419 472.6 L420.6 472.2 L422.2 471.9 L423.8 471.5 L425.4 471.1 L426.9 470.7 L428.5 470.3 L430.1 469.9 L431.7 469.5 L433.3 469.1 L434.9 468.7 L436.5 468.3 L438 467.8 L439.6 467.4 L441.2 467 L442.8 466.5 L444.4 466 L446 465.6 L447.6 465.1 L449.2 464.6 L450.8 464.1 L452.3 463.6 L453.9 463.1 L455.5 462.6 L457.1 462.1 L458.7 461.6 L460.3 461 L461.9 460.5 L463.4 459.9 L465 459.4 L466.6 458.8 L468.2 458.2 L469.8 457.6 L471.4 457 L473 456.4 L474.6 455.8 L476.1 455.2 L477.7 454.6 L479.3 453.9 L480.9 453.3 L482.5 452.6 L484.1 451.9 L485.7 451.3 L487.3 450.6 L488.9 449.9 L490.4 449.1 L492 448.4 L493.6 447.7 L495.2 446.9 L496.8 446.2 L498.4 445.4 L500 444.6 L501.5 443.8 L503.1 443 L504.7 442.2 L506.3 441.4 L507.9 440.6 L509.5 439.7 L511.1 438.8 L512.7 438 L514.2 437.1 L515.8 436.2 L517.4 435.3 L519 434.3 L520.6 433.4 L522.2 432.4 L523.8 431.5 L525.4 430.5 L527 429.5 L528.5 428.5 L530.1 427.4 L531.7 426.4 L533.3 425.3 L534.9 424.3 L536.5 423.2 L538.1 422.1 L539.6 421 L541.2 419.8 L542.8 418.7 L544.4 417.5 L546 416.3 L547.6 415.1 L549.2 413.9 L550.8 412.7 L552.3 411.5 L553.9 410.2 L555.5 408.9 L557.1 407.6 L558.7 406.3 L560.3 404.9 L561.9 403.6 L563.5 402.2 L565 400.8 L566.6 399.4 L568.2 398 L569.8 396.5 L571.4 395 L573 393.6 L574.6 392 L576.2 390.5 L577.8 389 L579.3 387.4 L580.9 385.8 L582.5 384.2 L584.1 382.5 L585.7 380.9 L587.3 379.2 L588.9 377.5 L590.5 375.7 L592 374 L593.6 372.2 L595.2 370.4 L596.8 368.6 L598.4 366.7 L600 364.9 L601.6 363 L603.1 361 L604.7 359.1 L606.3 357.1 L607.9 355.1 L609.5 353.1 L611.1 351 L612.7 348.9 L614.3 346.8 L615.8 344.7 L617.4 342.5 L619 340.3 L620.6 338.1 L622.2 335.8 L623.8 333.6 L625.4 331.2 L627 328.9 L628.5 326.5 L630.1 324.1 L631.7 321.7 L633.3 319.2 L634.9 316.7 L636.5 314.2 L638.1 311.6 L639.7 309 L641.2 306.4 L642.8 303.7 L644.4 301 L646 298.3 L647.6 295.5 L649.2 292.7 L650.8 289.9 L652.4 287 L654 284.1 L655.5 281.1 L657.1 278.1 L658.7 275.1 L660.3 272 L661.9 268.9 L663.5 265.8 L665.1 262.6 L666.6 259.4 L668.2 256.1 L669.8 252.8 L671.4 249.4 L673 246.1 L674.6 242.6 L676.2 239.1 L677.8 235.6 L679.3 232 L680.9 228.4 L682.5 224.8 L684.1 221.1 L685.7 217.3 L687.3 213.5 L688.9 209.6 L690.5 205.8 L692 201.8 L693.6 197.8 L695.2 193.8 L696.8 189.7 L698.4 185.5 L700 181.3 L701.6 177.1 L701.6 177.8" fill="none" stroke="#cdcdcd" stroke-width="0.9"/><path d="M292 487.4 L293.6 487.3 L295.2 487.2 L296.8 487.1 L298.4 487 L299.9 486.9 L301.5 486.8 L303.1 486.7 L304.7 486.5 L306.3 486.4 L307.9 486.3 L309.5 486.2 L311.1 486 L312.6 485.9 L314.2 485.8 L315.8 485.6 L317.4 485.5 L319 485.3 L320.6 485.2 L322.2 485 L323.8 484.9 L325.3 484.7 L326.9 484.6 L328.5 484.4 L330.1 484.3 L331.7 484.1 L333.3 483.9 L334.9 483.8 L336.4 483.6 L338 483.4 L339.6 483.2 L341.2 483 L342.8 482.8 L344.4 482.7 L346 482.5 L347.6 482.3 L349.1 482.1 L350.7 481.8 L352.3 481.6 L353.9 481.4 L355.5 481.2 L357.1 481 L358.7 480.8 L360.3 480.5 L361.9 480.3 L363.4 480.1 L365 479.8 L366.6 479.6 L368.2 479.3 L369.8 479.1 L371.4 478.8 L373 478.6 L374.6 478.3 L376.1 478 L377.7 477.7 L379.3 477.5 L380.9 477.2 L382.5 476.9 L384.1 476.6 L385.7 476.3 L387.2 476 L388.8 475.7 L390.4 475.3 L392 475 L393.6 474.7 L395.2 474.4 L396.8 474 L398.4 473.7 L399.9 473.3 L401.5 473 L403.1 472.6 L404.7 472.2 L406.3 471.9 L407.9 471.5 L409.5 471.1 L411.1 470.7 L412.6 470.3 L414.2 469.9 L415.8 469.5 L417.4 469.1 L419 468.6 L420.6 468.2 L422.2 467.7 L423.8 467.3 L425.4 466.8 L426.9 466.4 L428.5 465.9 L430.1 465.4 L431.7 464.9 L433.3 464.5 L434.9 464 L436.5 463.4 L438 462.9 L439.6 462.4 L441.2 461.9 L442.8 461.3 L444.4 460.8 L446 460.2 L447.6 459.6 L449.2 459.1 L450.8 458.5 L452.3 457.9 L453.9 457.3 L455.5 456.7 L457.1 456 L458.7 455.4 L460.3 454.8 L461.9 454.1 L463.4 453.4 L465 452.8 L466.6 452.1 L468.2 451.4 L469.8 450.7 L471.4 450 L473 449.2 L474.6 448.5 L476.1 447.7 L477.7 447 L479.3 446.2 L480.9 445.4 L482.5 444.6 L484.1 443.8 L485.7 443 L487.3 442.2 L488.9 441.3 L490.4 440.4 L492 439.6 L493.6 438.7 L495.2 437.8 L496.8 436.9 L498.4 436 L500 435 L501.5 434.1 L503.1 433.1 L504.7 432.1 L506.3 431.1 L507.9 430.1 L509.5 429.1 L511.1 428 L512.7 427 L514.2 425.9 L515.8 424.8 L517.4 423.7 L519 422.6 L520.6 421.5 L522.2 420.3 L523.8 419.2 L525.4 418 L527 416.8 L528.5 415.6 L530.1 414.3 L531.7 413.1 L533.3 411.8 L534.9 410.5 L536.5 409.2 L538.1 407.9 L539.6 406.5 L541.2 405.2 L542.8 403.8 L544.4 402.4 L546 400.9 L547.6 399.5 L549.2 398 L550.8 396.5 L552.3 395 L553.9 393.5 L555.5 392 L557.1 390.4 L558.7 388.8 L560.3 387.2 L561.9 385.6 L563.5 383.9 L565 382.2 L566.6 380.5 L568.2 378.8 L569.8 377 L571.4 375.2 L573 373.4 L574.6 371.6 L576.2 369.8 L577.8 367.9 L579.3 366 L580.9 364.1 L582.5 362.1 L584.1 360.1 L585.7 358.1 L587.3 356.1 L588.9 354 L590.5 351.9 L592 349.8 L593.6 347.7 L595.2 345.5 L596.8 343.3 L598.4 341 L600 338.8 L601.6 336.5 L603.1 334.1 L604.7 331.8 L606.3 329.4 L607.9 327 L609.5 324.5 L611.1 322 L612.7 319.5 L614.3 316.9 L615.8 314.4 L617.4 311.7 L619 309.1 L620.6 306.4 L622.2 303.6 L623.8 300.9 L625.4 298.1 L627 295.2 L628.5 292.4 L630.1 289.4 L631.7 286.5 L633.3 283.5 L634.9 280.5 L636.5 277.4 L638.1 274.3 L639.7 271.1 L641.2 267.9 L642.8 264.7 L644.4 261.4 L646 258.1 L647.6 254.7 L649.2 251.3 L650.8 247.9 L652.4 244.4 L654 240.8 L655.5 237.2 L657.1 233.6 L658.7 229.9 L660.3 226.2 L661.9 222.4 L663.5 218.6 L665.1 214.7 L666.6 210.8 L668.2 206.8 L669.8 202.8 L671.4 198.7 L673 194.6 L674.6 190.4 L676.2 186.1 L677.8 181.8 L679.3 177.5 L679.3 177.8" fill="none" stroke="#cdcdcd" stroke-width="0.9"/><path d="M292 486.6 L293.6 486.5 L295.2 486.4 L296.8 486.3 L298.4 486.1 L299.9 486 L301.5 485.9 L303.1 485.7 L304.7 485.6 L306.3 485.4 L307.9 485.3 L309.5 485.1 L311.1 485 L312.6 484.8 L314.2 484.7 L315.8 484.5 L317.4 484.3 L319 484.2 L320.6 484 L322.2 483.8 L323.8 483.7 L325.3 483.5 L326.9 483.3 L328.5 483.1 L330.1 482.9 L331.7 482.7 L333.3 482.5 L334.9 482.3 L336.4 482.1 L338 481.9 L339.6 481.7 L341.2 481.5 L342.8 481.3 L344.4 481 L346 480.8 L347.6 480.6 L349.1 480.3 L350.7 480.1 L352.3 479.9 L353.9 479.6 L355.5 479.4 L357.1 479.1 L358.7 478.8 L360.3 478.6 L361.9 478.3 L363.4 478 L365 477.7 L366.6 477.5 L368.2 477.2 L369.8 476.9 L371.4 476.6 L373 476.3 L374.6 475.9 L376.1 475.6 L377.7 475.3 L379.3 475 L380.9 474.6 L382.5 474.3 L384.1 473.9 L385.7 473.6 L387.2 473.2 L388.8 472.9 L390.4 472.5 L392 472.1 L393.6 471.7 L395.2 471.4 L396.8 471 L398.4 470.6 L399.9 470.1 L401.5 469.7 L403.1 469.3 L404.7 468.9 L406.3 468.4 L407.9 468 L409.5 467.5 L411.1 467.1 L412.6 466.6 L414.2 466.1 L415.8 465.7 L417.4 465.2 L419 464.7 L420.6 464.2 L422.2 463.6 L423.8 463.1 L425.4 462.6 L426.9 462 L428.5 461.5 L430.1 460.9 L431.7 460.4 L433.3 459.8 L434.9 459.2 L436.5 458.6 L438 458 L439.6 457.4 L441.2 456.8 L442.8 456.1 L444.4 455.5 L446 454.8 L447.6 454.2 L449.2 453.5 L450.8 452.8 L452.3 452.1 L453.9 451.4 L455.5 450.7 L457.1 449.9 L458.7 449.2 L460.3 448.5 L461.9 447.7 L463.4 446.9 L465 446.1 L466.6 445.3 L468.2 444.5 L469.8 443.7 L471.4 442.8 L473 442 L474.6 441.1 L476.1 440.2 L477.7 439.4 L479.3 438.5 L480.9 437.5 L482.5 436.6 L484.1 435.7 L485.7 434.7 L487.3 433.7 L488.9 432.7 L490.4 431.7 L492 430.7 L493.6 429.7 L495.2 428.6 L496.8 427.5 L498.4 426.5 L500 425.4 L501.5 424.3 L503.1 423.1 L504.7 422 L506.3 420.8 L507.9 419.6 L509.5 418.4 L511.1 417.2 L512.7 416 L514.2 414.7 L515.8 413.4 L517.4 412.2 L519 410.8 L520.6 409.5 L522.2 408.2 L523.8 406.8 L525.4 405.4 L527 404 L528.5 402.6 L530.1 401.1 L531.7 399.7 L533.3 398.2 L534.9 396.7 L536.5 395.1 L538.1 393.6 L539.6 392 L541.2 390.4 L542.8 388.8 L544.4 387.1 L546 385.5 L547.6 383.8 L549.2 382.1 L550.8 380.3 L552.3 378.6 L553.9 376.8 L555.5 374.9 L557.1 373.1 L558.7 371.2 L560.3 369.3 L561.9 367.4 L563.5 365.5 L565 363.5 L566.6 361.5 L568.2 359.5 L569.8 357.4 L571.4 355.3 L573 353.2 L574.6 351.1 L576.2 348.9 L577.8 346.7 L579.3 344.5 L580.9 342.2 L582.5 339.9 L584.1 337.6 L585.7 335.2 L587.3 332.8 L588.9 330.4 L590.5 327.9 L592 325.4 L593.6 322.9 L595.2 320.4 L596.8 317.8 L598.4 315.1 L600 312.5 L601.6 309.8 L603.1 307 L604.7 304.3 L606.3 301.4 L607.9 298.6 L609.5 295.7 L611.1 292.8 L612.7 289.8 L614.3 286.8 L615.8 283.7 L617.4 280.7 L619 277.5 L620.6 274.4 L622.2 271.1 L623.8 267.9 L625.4 264.6 L627 261.2 L628.5 257.8 L630.1 254.4 L631.7 250.9 L633.3 247.4 L634.9 243.8 L636.5 240.2 L638.1 236.5 L639.7 232.8 L641.2 229 L642.8 225.2 L644.4 221.3 L646 217.4 L647.6 213.4 L649.2 209.4 L650.8 205.3 L652.4 201.2 L654 197 L655.5 192.8 L657.1 188.5 L658.7 184.1 L660.3 179.7 L661 177.8" fill="none" stroke="#cdcdcd" stroke-width="0.9"/><path d="M292 485.8 L293.6 485.7 L295.2 485.5 L296.8 485.4 L298.4 485.2 L299.9 485.1 L301.5 484.9 L303.1 484.8 L304.7 484.6 L306.3 484.4 L307.9 484.3 L309.5 484.1 L311.1 483.9 L312.6 483.8 L314.2 483.6 L315.8 483.4 L317.4 483.2 L319 483 L320.6 482.8 L322.2 482.6 L323.8 482.4 L325.3 482.2 L326.9 482 L328.5 481.8 L330.1 481.6 L331.7 481.4 L333.3 481.1 L334.9 480.9 L336.4 480.7 L338 480.4 L339.6 480.2 L341.2 479.9 L342.8 479.7 L344.4 479.4 L346 479.2 L347.6 478.9 L349.1 478.6 L350.7 478.4 L352.3 478.1 L353.9 477.8 L355.5 477.5 L357.1 477.2 L358.7 476.9 L360.3 476.6 L361.9 476.3 L363.4 476 L365 475.7 L366.6 475.3 L368.2 475 L369.8 474.7 L371.4 474.3 L373 474 L374.6 473.6 L376.1 473.2 L377.7 472.9 L379.3 472.5 L380.9 472.1 L382.5 471.7 L384.1 471.3 L385.7 470.9 L387.2 470.5 L388.8 470.1 L390.4 469.7 L392 469.2 L393.6 468.8 L395.2 468.4 L396.8 467.9 L398.4 467.4 L399.9 467 L401.5 466.5 L403.1 466 L404.7 465.5 L406.3 465 L407.9 464.5 L409.5 464 L411.1 463.5 L412.6 462.9 L414.2 462.4 L415.8 461.8 L417.4 461.3 L419 460.7 L420.6 460.1 L422.2 459.5 L423.8 458.9 L425.4 458.3 L426.9 457.7 L428.5 457.1 L430.1 456.4 L431.7 455.8 L433.3 455.1 L434.9 454.4 L436.5 453.8 L438 453.1 L439.6 452.4 L441.2 451.7 L442.8 450.9 L444.4 450.2 L446 449.4 L447.6 448.7 L449.2 447.9 L450.8 447.1 L452.3 446.3 L453.9 445.5 L455.5 444.7 L457.1 443.9 L458.7 443 L460.3 442.1 L461.9 441.3 L463.4 440.4 L465 439.5 L466.6 438.6 L468.2 437.6 L469.8 436.7 L471.4 435.7 L473 434.7 L474.6 433.7 L476.1 432.7 L477.7 431.7 L479.3 430.7 L480.9 429.6 L482.5 428.6 L484.1 427.5 L485.7 426.4 L487.3 425.3 L488.9 424.1 L490.4 423 L492 421.8 L493.6 420.6 L495.2 419.4 L496.8 418.2 L498.4 417 L500 415.7 L501.5 414.4 L503.1 413.1 L504.7 411.8 L506.3 410.5 L507.9 409.1 L509.5 407.7 L511.1 406.3 L512.7 404.9 L514.2 403.5 L515.8 402 L517.4 400.5 L519 399 L520.6 397.5 L522.2 396 L523.8 394.4 L525.4 392.8 L527 391.2 L528.5 389.6 L530.1 387.9 L531.7 386.2 L533.3 384.5 L534.9 382.8 L536.5 381 L538.1 379.2 L539.6 377.4 L541.2 375.6 L542.8 373.7 L544.4 371.8 L546 369.9 L547.6 368 L549.2 366 L550.8 364 L552.3 362 L553.9 359.9 L555.5 357.8 L557.1 355.7 L558.7 353.6 L560.3 351.4 L561.9 349.2 L563.5 347 L565 344.7 L566.6 342.4 L568.2 340.1 L569.8 337.7 L571.4 335.3 L573 332.9 L574.6 330.4 L576.2 327.9 L577.8 325.4 L579.3 322.8 L580.9 320.2 L582.5 317.5 L584.1 314.9 L585.7 312.2 L587.3 309.4 L588.9 306.6 L590.5 303.8 L592 300.9 L593.6 298 L595.2 295.1 L596.8 292.1 L598.4 289 L600 286 L601.6 282.9 L603.1 279.7 L604.7 276.5 L606.3 273.3 L607.9 270 L609.5 266.6 L611.1 263.3 L612.7 259.8 L614.3 256.4 L615.8 252.9 L617.4 249.3 L619 245.7 L620.6 242 L622.2 238.3 L623.8 234.6 L625.4 230.7 L627 226.9 L628.5 223 L630.1 219 L631.7 215 L633.3 210.9 L634.9 206.8 L636.5 202.6 L638.1 198.3 L639.7 194 L641.2 189.7 L642.8 185.3 L644.4 180.8 L646 176.3 L646 177.8" fill="none" stroke="#cdcdcd" stroke-width="0.9"/><path d="M292 485 L293.6 484.8 L295.2 484.7 L296.8 484.5 L298.4 484.4 L299.9 484.2 L301.5 484 L303.1 483.8 L304.7 483.6 L306.3 483.5 L307.9 483.3 L309.5 483.1 L311.1 482.9 L312.6 482.7 L314.2 482.5 L315.8 482.3 L317.4 482.1 L319 481.9 L320.6 481.6 L322.2 481.4 L323.8 481.2 L325.3 480.9 L326.9 480.7 L328.5 480.5 L330.1 480.2 L331.7 480 L333.3 479.7 L334.9 479.5 L336.4 479.2 L338 478.9 L339.6 478.7 L341.2 478.4 L342.8 478.1 L344.4 477.8 L346 477.5 L347.6 477.2 L349.1 476.9 L350.7 476.6 L352.3 476.3 L353.9 476 L355.5 475.6 L357.1 475.3 L358.7 475 L360.3 474.6 L361.9 474.3 L363.4 473.9 L365 473.6 L366.6 473.2 L368.2 472.8 L369.8 472.4 L371.4 472.1 L373 471.7 L374.6 471.3 L376.1 470.8 L377.7 470.4 L379.3 470 L380.9 469.6 L382.5 469.1 L384.1 468.7 L385.7 468.2 L387.2 467.8 L388.8 467.3 L390.4 466.8 L392 466.3 L393.6 465.8 L395.2 465.3 L396.8 464.8 L398.4 464.3 L399.9 463.8 L401.5 463.3 L403.1 462.7 L404.7 462.2 L406.3 461.6 L407.9 461 L409.5 460.4 L411.1 459.8 L412.6 459.2 L414.2 458.6 L415.8 458 L417.4 457.4 L419 456.7 L420.6 456.1 L422.2 455.4 L423.8 454.7 L425.4 454 L426.9 453.3 L428.5 452.6 L430.1 451.9 L431.7 451.2 L433.3 450.4 L434.9 449.7 L436.5 448.9 L438 448.1 L439.6 447.3 L441.2 446.5 L442.8 445.7 L444.4 444.9 L446 444 L447.6 443.2 L449.2 442.3 L450.8 441.4 L452.3 440.5 L453.9 439.6 L455.5 438.7 L457.1 437.7 L458.7 436.8 L460.3 435.8 L461.9 434.8 L463.4 433.8 L465 432.8 L466.6 431.8 L468.2 430.7 L469.8 429.7 L471.4 428.6 L473 427.5 L474.6 426.4 L476.1 425.2 L477.7 424.1 L479.3 422.9 L480.9 421.7 L482.5 420.5 L484.1 419.3 L485.7 418 L487.3 416.8 L488.9 415.5 L490.4 414.2 L492 412.9 L493.6 411.6 L495.2 410.2 L496.8 408.8 L498.4 407.4 L500 406 L501.5 404.5 L503.1 403.1 L504.7 401.6 L506.3 400.1 L507.9 398.6 L509.5 397 L511.1 395.4 L512.7 393.8 L514.2 392.2 L515.8 390.6 L517.4 388.9 L519 387.2 L520.6 385.5 L522.2 383.7 L523.8 382 L525.4 380.2 L527 378.3 L528.5 376.5 L530.1 374.6 L531.7 372.7 L533.3 370.8 L534.9 368.8 L536.5 366.8 L538.1 364.8 L539.6 362.8 L541.2 360.7 L542.8 358.6 L544.4 356.5 L546 354.3 L547.6 352.1 L549.2 349.9 L550.8 347.6 L552.3 345.3 L553.9 343 L555.5 340.6 L557.1 338.2 L558.7 335.8 L560.3 333.4 L561.9 330.9 L563.5 328.3 L565 325.8 L566.6 323.2 L568.2 320.5 L569.8 317.8 L571.4 315.1 L573 312.4 L574.6 309.6 L576.2 306.8 L577.8 303.9 L579.3 301 L580.9 298 L582.5 295 L584.1 292 L585.7 288.9 L587.3 285.8 L588.9 282.7 L590.5 279.4 L592 276.2 L593.6 272.9 L595.2 269.6 L596.8 266.2 L598.4 262.7 L600 259.3 L601.6 255.7 L603.1 252.1 L604.7 248.5 L606.3 244.8 L607.9 241.1 L609.5 237.3 L611.1 233.5 L612.7 229.6 L614.3 225.7 L615.8 221.7 L617.4 217.6 L619 213.5 L620.6 209.4 L622.2 205.2 L623.8 200.9 L625.4 196.6 L627 192.2 L628.5 187.7 L630.1 183.2 L631.7 178.6 L632 177.8" fill="none" stroke="#cdcdcd" stroke-width="0.9"/><path d="M292 484.2 L293.6 484 L295.2 483.8 L296.8 483.7 L298.4 483.5 L299.9 483.3 L301.5 483.1 L303.1 482.9 L304.7 482.7 L306.3 482.5 L307.9 482.3 L309.5 482.1 L311.1 481.8 L312.6 481.6 L314.2 481.4 L315.8 481.2 L317.4 480.9 L319 480.7 L320.6 480.4 L322.2 480.2 L323.8 479.9 L325.3 479.7 L326.9 479.4 L328.5 479.2 L330.1 478.9 L331.7 478.6 L333.3 478.3 L334.9 478 L336.4 477.7 L338 477.4 L339.6 477.1 L341.2 476.8 L342.8 476.5 L344.4 476.2 L346 475.9 L347.6 475.5 L349.1 475.2 L350.7 474.9 L352.3 474.5 L353.9 474.2 L355.5 473.8 L357.1 473.4 L358.7 473 L360.3 472.7 L361.9 472.3 L363.4 471.9 L365 471.5 L366.6 471.1 L368.2 470.6 L369.8 470.2 L371.4 469.8 L373 469.4 L374.6 468.9 L376.1 468.5 L377.7 468 L379.3 467.5 L380.9 467 L382.5 466.5 L384.1 466.1 L385.7 465.5 L387.2 465 L388.8 464.5 L390.4 464 L392 463.4 L393.6 462.9 L395.2 462.3 L396.8 461.8 L398.4 461.2 L399.9 460.6 L401.5 460 L403.1 459.4 L404.7 458.8 L406.3 458.2 L407.9 457.5 L409.5 456.9 L411.1 456.2 L412.6 455.5 L414.2 454.9 L415.8 454.2 L417.4 453.5 L419 452.7 L420.6 452 L422.2 451.3 L423.8 450.5 L425.4 449.8 L426.9 449 L428.5 448.2 L430.1 447.4 L431.7 446.6 L433.3 445.8 L434.9 444.9 L436.5 444.1 L438 443.2 L439.6 442.3 L441.2 441.4 L442.8 440.5 L444.4 439.6 L446 438.6 L447.6 437.7 L449.2 436.7 L450.8 435.7 L452.3 434.7 L453.9 433.7 L455.5 432.7 L457.1 431.6 L458.7 430.6 L460.3 429.5 L461.9 428.4 L463.4 427.3 L465 426.1 L466.6 425 L468.2 423.8 L469.8 422.6 L471.4 421.4 L473 420.2 L474.6 418.9 L476.1 417.7 L477.7 416.4 L479.3 415.1 L480.9 413.8 L482.5 412.4 L484.1 411.1 L485.7 409.7 L487.3 408.3 L488.9 406.9 L490.4 405.4 L492 403.9 L493.6 402.5 L495.2 400.9 L496.8 399.4 L498.4 397.8 L500 396.3 L501.5 394.7 L503.1 393 L504.7 391.4 L506.3 389.7 L507.9 388 L509.5 386.3 L511.1 384.5 L512.7 382.7 L514.2 380.9 L515.8 379.1 L517.4 377.2 L519 375.3 L520.6 373.4 L522.2 371.5 L523.8 369.5 L525.4 367.5 L527 365.4 L528.5 363.4 L530.1 361.3 L531.7 359.2 L533.3 357 L534.9 354.8 L536.5 352.6 L538.1 350.3 L539.6 348.1 L541.2 345.7 L542.8 343.4 L544.4 341 L546 338.6 L547.6 336.1 L549.2 333.7 L550.8 331.1 L552.3 328.6 L553.9 326 L555.5 323.3 L557.1 320.7 L558.7 318 L560.3 315.2 L561.9 312.4 L563.5 309.6 L565 306.7 L566.6 303.8 L568.2 300.9 L569.8 297.9 L571.4 294.9 L573 291.8 L574.6 288.7 L576.2 285.5 L577.8 282.3 L579.3 279 L580.9 275.7 L582.5 272.4 L584.1 269 L585.7 265.5 L587.3 262.1 L588.9 258.5 L590.5 254.9 L592 251.3 L593.6 247.6 L595.2 243.9 L596.8 240.1 L598.4 236.2 L600 232.3 L601.6 228.4 L603.1 224.4 L604.7 220.3 L606.3 216.2 L607.9 212 L609.5 207.8 L611.1 203.5 L612.7 199.1 L614.3 194.7 L615.8 190.2 L617.4 185.7 L619 181.1 L620.6 176.4 L620.6 177.8" fill="none" stroke="#cdcdcd" stroke-width="0.9"/></g><path d="M527.3 391.3h1.4v1.4h-1.4zM472.4 434.7h1.4v1.4h-1.4zM446.1 440.2h1.4v1.4h-1.4zM468.9 442.1h1.4v1.4h-1.4zM519.8 414.6h1.4v1.4h-1.4zM503.8 414.1h1.4v1.4h-1.4zM537.2 413.5h1.4v1.4h-1.4zM509.7 437.1h1.4v1.4h-1.4zM535 414.4h1.4v1.4h-1.4zM528 388.7h1.4v1.4h-1.4zM586 397h1.4v1.4h-1.4zM511.9 424.4h1.4v1.4h-1.4zM562.1 365.4h1.4v1.4h-1.4zM482.8 418.9h1.4v1.4h-1.4zM542.8 360.4h1.4v1.4h-1.4zM549.6 383.4h1.4v1.4h-1.4zM472.2 467.6h1.4v1.4h-1.4zM479 442.7h1.4v1.4h-1.4zM544 412h1.4v1.4h-1.4zM481.5 427.6h1.4v1.4h-1.4zM521.5 445.4h1.4v1.4h-1.4zM502.9 455h1.4v1.4h-1.4zM438 450.2h1.4v1.4h-1.4zM474.4 436.3h1.4v1.4h-1.4zM438.8 455.4h1.4v1.4h-1.4zM492 445.8h1.4v1.4h-1.4zM547.3 379.8h1.4v1.4h-1.4zM503.5 405.1h1.4v1.4h-1.4zM451.8 457h1.4v1.4h-1.4zM590 395.4h1.4v1.4h-1.4zM519.4 441.5h1.4v1.4h-1.4zM468.3 432.2h1.4v1.4h-1.4zM424.9 460.3h1.4v1.4h-1.4zM448.7 451.3h1.4v1.4h-1.4zM522.9 399.7h1.4v1.4h-1.4zM433.9 451.5h1.4v1.4h-1.4zM553 409h1.4v1.4h-1.4zM539.5 379.6h1.4v1.4h-1.4zM498.3 433.8h1.4v1.4h-1.4zM524.1 416.1h1.4v1.4h-1.4zM439.3 452.2h1.4v1.4h-1.4zM582.4 383h1.4v1.4h-1.4zM506 406.6h1.4v1.4h-1.4zM487.2 418.8h1.4v1.4h-1.4zM500.2 426.8h1.4v1.4h-1.4zM538.4 384.1h1.4v1.4h-1.4zM536 405.1h1.4v1.4h-1.4zM530.5 439.9h1.4v1.4h-1.4zM604.5 402.1h1.4v1.4h-1.4zM492.2 405.7h1.4v1.4h-1.4zM566 411h1.4v1.4h-1.4zM425.1 457.8h1.4v1.4h-1.4zM546.9 402.1h1.4v1.4h-1.4zM539.8 397.3h1.4v1.4h-1.4zM547.9 390.9h1.4v1.4h-1.4zM436.4 444.7h1.4v1.4h-1.4zM586.7 384.6h1.4v1.4h-1.4zM506 426.6h1.4v1.4h-1.4zM477.8 437.2h1.4v1.4h-1.4zM527.7 419.7h1.4v1.4h-1.4zM455.8 452.9h1.4v1.4h-1.4zM542.7 388.3h1.4v1.4h-1.4zM487.7 433.4h1.4v1.4h-1.4zM520.8 442.1h1.4v1.4h-1.4zM503.7 451.3h1.4v1.4h-1.4zM522.7 416.9h1.4v1.4h-1.4zM578.5 405.1h1.4v1.4h-1.4zM538.5 399.7h1.4v1.4h-1.4zM585.2 367.5h1.4v1.4h-1.4zM504.9 414.9h1.4v1.4h-1.4zM539.5 376.9h1.4v1.4h-1.4zM526.5 381.3h1.4v1.4h-1.4zM566.2 392.2h1.4v1.4h-1.4zM555 406.5h1.4v1.4h-1.4zM465.7 458.9h1.4v1.4h-1.4zM459.7 445.8h1.4v1.4h-1.4zM527.3 386.8h1.4v1.4h-1.4zM493.7 442.6h1.4v1.4h-1.4zM443.7 452.4h1.4v1.4h-1.4zM466.3 444.8h1.4v1.4h-1.4zM558 387.6h1.4v1.4h-1.4zM480.2 447.5h1.4v1.4h-1.4zM518.7 421.5h1.4v1.4h-1.4zM577.3 408.9h1.4v1.4h-1.4zM477.9 424.4h1.4v1.4h-1.4zM534.6 403.7h1.4v1.4h-1.4zM448.2 455.5h1.4v1.4h-1.4zM530.3 378.2h1.4v1.4h-1.4zM538.1 380.9h1.4v1.4h-1.4zM568.9 410.5h1.4v1.4h-1.4zM534.2 363.7h1.4v1.4h-1.4zM558.2 382.7h1.4v1.4h-1.4zM537.8 397h1.4v1.4h-1.4zM556.3 384.5h1.4v1.4h-1.4zM560.5 422.5h1.4v1.4h-1.4zM571.7 391.8h1.4v1.4h-1.4zM487.4 433.3h1.4v1.4h-1.4zM440.8 445.5h1.4v1.4h-1.4zM545.1 363.7h1.4v1.4h-1.4zM519.3 427.1h1.4v1.4h-1.4zM446 441.2h1.4v1.4h-1.4zM514.5 424.2h1.4v1.4h-1.4zM489.5 440.7h1.4v1.4h-1.4zM450.7 448.3h1.4v1.4h-1.4zM488.6 422.9h1.4v1.4h-1.4zM517.6 425h1.4v1.4h-1.4zM476.8 442.9h1.4v1.4h-1.4zM458.8 447.6h1.4v1.4h-1.4zM564.4 392.2h1.4v1.4h-1.4zM531.5 405.4h1.4v1.4h-1.4zM529.3 385.5h1.4v1.4h-1.4zM508.2 413.4h1.4v1.4h-1.4zM588.4 404.9h1.4v1.4h-1.4zM495.5 426.4h1.4v1.4h-1.4zM579.8 411.6h1.4v1.4h-1.4zM552.8 395.7h1.4v1.4h-1.4zM493.9 417h1.4v1.4h-1.4zM521.2 433.1h1.4v1.4h-1.4zM524.1 416.1h1.4v1.4h-1.4zM484.3 431.9h1.4v1.4h-1.4zM544.3 397h1.4v1.4h-1.4zM547.9 398.6h1.4v1.4h-1.4zM481.1 430.4h1.4v1.4h-1.4zM475.1 449.1h1.4v1.4h-1.4zM471.6 457.7h1.4v1.4h-1.4zM482.3 424.7h1.4v1.4h-1.4zM542.9 386.9h1.4v1.4h-1.4zM578.6 375h1.4v1.4h-1.4zM492.3 407.8h1.4v1.4h-1.4zM571.1 410.4h1.4v1.4h-1.4zM500.8 402.2h1.4v1.4h-1.4zM560.9 387.5h1.4v1.4h-1.4zM505.8 420.8h1.4v1.4h-1.4zM602.2 385.2h1.4v1.4h-1.4zM498.6 405.8h1.4v1.4h-1.4zM463.1 438.8h1.4v1.4h-1.4zM434.8 448.7h1.4v1.4h-1.4zM462.7 454.5h1.4v1.4h-1.4zM518.2 387.7h1.4v1.4h-1.4zM471.2 434.5h1.4v1.4h-1.4zM584.3 391.9h1.4v1.4h-1.4zM442.2 446.9h1.4v1.4h-1.4zM544.6 409.6h1.4v1.4h-1.4zM508.8 443h1.4v1.4h-1.4zM445.9 439.7h1.4v1.4h-1.4zM548.5 411.2h1.4v1.4h-1.4zM544.5 414.7h1.4v1.4h-1.4zM554.1 365.4h1.4v1.4h-1.4zM582.7 406.7h1.4v1.4h-1.4zM561.2 392h1.4v1.4h-1.4zM514.8 437.7h1.4v1.4h-1.4zM510 418.1h1.4v1.4h-1.4zM456 450.9h1.4v1.4h-1.4zM559.2 397.8h1.4v1.4h-1.4zM484.5 434.6h1.4v1.4h-1.4zM450 453.1h1.4v1.4h-1.4zM564.9 397.8h1.4v1.4h-1.4zM524.3 445.6h1.4v1.4h-1.4zM549.7 419.7h1.4v1.4h-1.4zM521.3 393.6h1.4v1.4h-1.4zM489.6 434.4h1.4v1.4h-1.4zM596 378.7h1.4v1.4h-1.4zM513.8 403.7h1.4v1.4h-1.4zM514.1 427.5h1.4v1.4h-1.4zM575.7 420.5h1.4v1.4h-1.4zM562.6 379.1h1.4v1.4h-1.4zM482.1 422.8h1.4v1.4h-1.4zM455.9 455.2h1.4v1.4h-1.4zM482.4 444.7h1.4v1.4h-1.4zM493.1 430.8h1.4v1.4h-1.4zM483.5 428.4h1.4v1.4h-1.4zM551.1 384.9h1.4v1.4h-1.4zM526.3 410.8h1.4v1.4h-1.4zM465.7 441h1.4v1.4h-1.4zM467.8 447.6h1.4v1.4h-1.4zM491.8 436.1h1.4v1.4h-1.4zM520.2 396.7h1.4v1.4h-1.4zM501.4 443.5h1.4v1.4h-1.4zM465.6 448.3h1.4v1.4h-1.4zM588.7 382.6h1.4v1.4h-1.4zM540.1 399.6h1.4v1.4h-1.4zM505.8 444.1h1.4v1.4h-1.4zM533.1 422.4h1.4v1.4h-1.4zM491.8 445.8h1.4v1.4h-1.4zM470.8 429.1h1.4v1.4h-1.4zM493.9 439.6h1.4v1.4h-1.4zM536.1 408h1.4v1.4h-1.4zM567.1 411.6h1.4v1.4h-1.4zM567.2 410.9h1.4v1.4h-1.4zM509.9 438.7h1.4v1.4h-1.4zM487.9 432h1.4v1.4h-1.4zM477.8 445.7h1.4v1.4h-1.4zM526.9 411.8h1.4v1.4h-1.4zM523.5 442.4h1.4v1.4h-1.4zM533.8 383.6h1.4v1.4h-1.4zM467.2 446.9h1.4v1.4h-1.4zM569 388.1h1.4v1.4h-1.4zM526.9 386.9h1.4v1.4h-1.4zM485.9 412.7h1.4v1.4h-1.4zM495.4 408.6h1.4v1.4h-1.4zM459.4 446.8h1.4v1.4h-1.4zM494.9 412.3h1.4v1.4h-1.4zM570.8 398.3h1.4v1.4h-1.4zM528.4 402.6h1.4v1.4h-1.4zM568 350.3h1.4v1.4h-1.4zM499.2 413.1h1.4v1.4h-1.4zM541.3 428.4h1.4v1.4h-1.4zM568.2 413.6h1.4v1.4h-1.4zM515.3 428.6h1.4v1.4h-1.4zM497 447.6h1.4v1.4h-1.4zM547 427.8h1.4v1.4h-1.4zM580.2 361.7h1.4v1.4h-1.4zM437.9 447.3h1.4v1.4h-1.4zM514.8 419.5h1.4v1.4h-1.4zM537.4 410.2h1.4v1.4h-1.4zM440.1 450.7h1.4v1.4h-1.4zM485.2 416h1.4v1.4h-1.4zM522.1 442.5h1.4v1.4h-1.4zM495.5 436.2h1.4v1.4h-1.4zM474.5 449.6h1.4v1.4h-1.4zM491.1 420.3h1.4v1.4h-1.4zM548.2 412.6h1.4v1.4h-1.4zM439.5 451.3h1.4v1.4h-1.4zM564.2 406.8h1.4v1.4h-1.4zM518.5 441.8h1.4v1.4h-1.4zM564.8 421h1.4v1.4h-1.4zM439.4 452.5h1.4v1.4h-1.4zM531.7 382.6h1.4v1.4h-1.4zM491 444.2h1.4v1.4h-1.4zM447.5 440.7h1.4v1.4h-1.4zM559.7 373.9h1.4v1.4h-1.4zM445.1 458.7h1.4v1.4h-1.4zM487 438.9h1.4v1.4h-1.4zM518.3 436.5h1.4v1.4h-1.4zM538 401h1.4v1.4h-1.4zM541.1 393.4h1.4v1.4h-1.4zM563.6 418.7h1.4v1.4h-1.4zM538.9 426.3h1.4v1.4h-1.4zM514 428.9h1.4v1.4h-1.4zM455.7 456.8h1.4v1.4h-1.4zM500.9 408.8h1.4v1.4h-1.4zM559 415.1h1.4v1.4h-1.4zM461 439.2h1.4v1.4h-1.4zM531.5 399.7h1.4v1.4h-1.4zM510.6 437.5h1.4v1.4h-1.4zM536.3 392.6h1.4v1.4h-1.4zM552.7 389.2h1.4v1.4h-1.4zM534.8 403.2h1.4v1.4h-1.4zM534.6 393.8h1.4v1.4h-1.4zM539.9 415.7h1.4v1.4h-1.4zM518.9 377.9h1.4v1.4h-1.4zM468.3 442.4h1.4v1.4h-1.4zM527.2 379.7h1.4v1.4h-1.4zM526.7 403.2h1.4v1.4h-1.4zM464.7 444.1h1.4v1.4h-1.4zM527.7 422.3h1.4v1.4h-1.4zM478.4 440.7h1.4v1.4h-1.4zM572.7 352.7h1.4v1.4h-1.4zM423.8 464.3h1.4v1.4h-1.4zM554.9 379.6h1.4v1.4h-1.4zM525.8 412.5h1.4v1.4h-1.4zM498.9 415.5h1.4v1.4h-1.4zM592 391.3h1.4v1.4h-1.4zM514.6 446.3h1.4v1.4h-1.4zM468.6 441h1.4v1.4h-1.4zM549 407.4h1.4v1.4h-1.4zM435.1 454.3h1.4v1.4h-1.4zM531 419.1h1.4v1.4h-1.4zM447.7 439.4h1.4v1.4h-1.4zM543.2 381h1.4v1.4h-1.4zM488.8 437.9h1.4v1.4h-1.4zM585.1 369.7h1.4v1.4h-1.4zM545.9 409.9h1.4v1.4h-1.4zM539.3 387.5h1.4v1.4h-1.4zM485.3 425.9h1.4v1.4h-1.4zM428.7 453.6h1.4v1.4h-1.4zM549.2 431.9h1.4v1.4h-1.4zM479.1 430.5h1.4v1.4h-1.4zM491 414h1.4v1.4h-1.4zM538.7 404.9h1.4v1.4h-1.4zM550.4 400.3h1.4v1.4h-1.4zM467.5 452.1h1.4v1.4h-1.4zM582.9 378.6h1.4v1.4h-1.4zM520.3 405.8h1.4v1.4h-1.4zM564 362h1.4v1.4h-1.4zM533 415.4h1.4v1.4h-1.4zM479.8 431.9h1.4v1.4h-1.4zM542.6 387.3h1.4v1.4h-1.4zM507.5 432.5h1.4v1.4h-1.4zM458.1 433.1h1.4v1.4h-1.4zM464.8 454.9h1.4v1.4h-1.4zM492.6 433.5h1.4v1.4h-1.4zM591.1 388.4h1.4v1.4h-1.4zM521.9 435.9h1.4v1.4h-1.4zM455.5 447.5h1.4v1.4h-1.4zM514.9 425.9h1.4v1.4h-1.4zM603 385h1.4v1.4h-1.4zM460.7 452h1.4v1.4h-1.4zM474.7 453.4h1.4v1.4h-1.4zM504.6 414h1.4v1.4h-1.4zM460.6 438.5h1.4v1.4h-1.4zM590.2 357.9h1.4v1.4h-1.4zM440.3 460.4h1.4v1.4h-1.4zM535.8 401.7h1.4v1.4h-1.4zM490.3 420h1.4v1.4h-1.4zM474.7 442.7h1.4v1.4h-1.4zM472.9 422.4h1.4v1.4h-1.4zM503.6 450.1h1.4v1.4h-1.4zM474.9 440.8h1.4v1.4h-1.4zM487.4 451.6h1.4v1.4h-1.4zM506.3 430.6h1.4v1.4h-1.4zM503.6 436.4h1.4v1.4h-1.4zM525.6 399.1h1.4v1.4h-1.4zM574.4 390.8h1.4v1.4h-1.4zM425.3 462.8h1.4v1.4h-1.4zM453.3 455.9h1.4v1.4h-1.4zM469.7 443h1.4v1.4h-1.4zM516.6 413.4h1.4v1.4h-1.4zM489.5 457h1.4v1.4h-1.4zM500.6 446.3h1.4v1.4h-1.4zM555.6 390.6h1.4v1.4h-1.4zM535.3 368.5h1.4v1.4h-1.4zM436.1 462.7h1.4v1.4h-1.4zM470 429.6h1.4v1.4h-1.4zM507.3 438h1.4v1.4h-1.4zM468.8 432.8h1.4v1.4h-1.4zM532.6 389.4h1.4v1.4h-1.4zM483 436.5h1.4v1.4h-1.4zM497 420.4h1.4v1.4h-1.4zM517.1 450.4h1.4v1.4h-1.4zM465.7 452.8h1.4v1.4h-1.4zM585.3 412.2h1.4v1.4h-1.4zM559.7 392.4h1.4v1.4h-1.4zM472.2 443.7h1.4v1.4h-1.4zM533.1 413.3h1.4v1.4h-1.4zM497 440.9h1.4v1.4h-1.4zM572.4 377.3h1.4v1.4h-1.4zM490.9 426.9h1.4v1.4h-1.4zM458.2 445.4h1.4v1.4h-1.4zM537.7 391.1h1.4v1.4h-1.4zM522.5 397.7h1.4v1.4h-1.4zM562.7 385.9h1.4v1.4h-1.4zM447.5 466.8h1.4v1.4h-1.4zM568.9 400h1.4v1.4h-1.4zM533.2 433h1.4v1.4h-1.4zM479.7 419.5h1.4v1.4h-1.4zM473.7 428.8h1.4v1.4h-1.4zM520.5 426.8h1.4v1.4h-1.4zM564.5 385h1.4v1.4h-1.4zM522.6 424.9h1.4v1.4h-1.4zM516.3 445.4h1.4v1.4h-1.4zM572.4 418.6h1.4v1.4h-1.4zM573 375.3h1.4v1.4h-1.4zM573 372.8h1.4v1.4h-1.4zM543.8 393.6h1.4v1.4h-1.4zM583.7 379.4h1.4v1.4h-1.4zM490.1 451.6h1.4v1.4h-1.4zM567.7 383.1h1.4v1.4h-1.4zM480.9 431.2h1.4v1.4h-1.4zM515.8 426.3h1.4v1.4h-1.4zM479.4 439.1h1.4v1.4h-1.4zM537.8 436.5h1.4v1.4h-1.4zM577.5 385.2h1.4v1.4h-1.4zM507.1 430.6h1.4v1.4h-1.4zM446.5 450.2h1.4v1.4h-1.4zM488.7 426.3h1.4v1.4h-1.4zM557.3 378h1.4v1.4h-1.4zM465.8 453.5h1.4v1.4h-1.4zM499 449.9h1.4v1.4h-1.4zM560.8 376.9h1.4v1.4h-1.4zM539.1 418.6h1.4v1.4h-1.4zM547 432.2h1.4v1.4h-1.4zM444.9 451.7h1.4v1.4h-1.4zM563 391.4h1.4v1.4h-1.4zM616.1 370.9h1.4v1.4h-1.4zM437.3 457.4h1.4v1.4h-1.4zM438.2 446.7h1.4v1.4h-1.4zM505.9 453.7h1.4v1.4h-1.4zM524.3 446.1h1.4v1.4h-1.4zM568.9 397.5h1.4v1.4h-1.4zM459.8 436.7h1.4v1.4h-1.4zM425.8 450.1h1.4v1.4h-1.4zM502.6 452.9h1.4v1.4h-1.4zM520.4 436.8h1.4v1.4h-1.4zM492.4 434.8h1.4v1.4h-1.4zM536.7 386h1.4v1.4h-1.4zM432.3 448.1h1.4v1.4h-1.4zM489.2 436.2h1.4v1.4h-1.4zM586.8 408.8h1.4v1.4h-1.4zM531.4 378.5h1.4v1.4h-1.4zM476.8 453.6h1.4v1.4h-1.4zM520 443.7h1.4v1.4h-1.4zM494.7 430.9h1.4v1.4h-1.4zM558.4 400.9h1.4v1.4h-1.4zM527.1 403.7h1.4v1.4h-1.4zM469 425.6h1.4v1.4h-1.4zM438.9 458.7h1.4v1.4h-1.4zM489 440.5h1.4v1.4h-1.4zM482.8 428.1h1.4v1.4h-1.4zM514.9 453.2h1.4v1.4h-1.4zM497.2 412.7h1.4v1.4h-1.4zM559.8 363.3h1.4v1.4h-1.4zM496.8 447.5h1.4v1.4h-1.4zM499.6 434.7h1.4v1.4h-1.4zM415.1 456.4h1.4v1.4h-1.4zM520 442.8h1.4v1.4h-1.4zM462.6 448.8h1.4v1.4h-1.4zM553.3 413.4h1.4v1.4h-1.4zM544 404.4h1.4v1.4h-1.4zM536.2 431.1h1.4v1.4h-1.4zM591.6 357.9h1.4v1.4h-1.4zM447.9 439.7h1.4v1.4h-1.4zM519.5 410.7h1.4v1.4h-1.4zM465.3 433.8h1.4v1.4h-1.4zM546.5 409.9h1.4v1.4h-1.4zM533.6 388h1.4v1.4h-1.4zM506.4 392h1.4v1.4h-1.4zM445.2 451.3h1.4v1.4h-1.4zM533.2 373.1h1.4v1.4h-1.4zM561.2 397.1h1.4v1.4h-1.4zM521.4 413.1h1.4v1.4h-1.4zM482.3 428.9h1.4v1.4h-1.4zM551.5 421.9h1.4v1.4h-1.4zM440.6 454.8h1.4v1.4h-1.4zM471.1 426.4h1.4v1.4h-1.4zM546 403.1h1.4v1.4h-1.4zM546.2 372.5h1.4v1.4h-1.4zM495.5 428.6h1.4v1.4h-1.4zM542.6 366.9h1.4v1.4h-1.4zM581.2 400.5h1.4v1.4h-1.4zM487.9 444.2h1.4v1.4h-1.4zM455.5 441h1.4v1.4h-1.4zM503.3 410.6h1.4v1.4h-1.4zM468.2 456.2h1.4v1.4h-1.4zM470 448h1.4v1.4h-1.4zM536.9 392.5h1.4v1.4h-1.4zM573.5 408.1h1.4v1.4h-1.4zM555 381.3h1.4v1.4h-1.4zM560.9 420h1.4v1.4h-1.4zM472.2 437.4h1.4v1.4h-1.4zM492.9 432.8h1.4v1.4h-1.4zM501.5 408h1.4v1.4h-1.4zM549.6 388h1.4v1.4h-1.4zM442.8 445.2h1.4v1.4h-1.4zM561.1 398.8h1.4v1.4h-1.4zM537.4 415.8h1.4v1.4h-1.4zM496.1 418.4h1.4v1.4h-1.4zM503.1 453h1.4v1.4h-1.4zM471.4 452h1.4v1.4h-1.4zM461.3 447.4h1.4v1.4h-1.4zM433.5 459.5h1.4v1.4h-1.4zM465.8 438.7h1.4v1.4h-1.4zM574.5 395.7h1.4v1.4h-1.4zM516.3 410.7h1.4v1.4h-1.4zM489.9 453.7h1.4v1.4h-1.4zM566.9 410.3h1.4v1.4h-1.4zM565.9 383.7h1.4v1.4h-1.4zM579.4 394.1h1.4v1.4h-1.4zM454.8 453.7h1.4v1.4h-1.4zM512.1 435.7h1.4v1.4h-1.4zM513.5 406.1h1.4v1.4h-1.4zM518.5 410.5h1.4v1.4h-1.4zM530.6 391.2h1.4v1.4h-1.4zM602.4 397.1h1.4v1.4h-1.4zM542.1 381.9h1.4v1.4h-1.4zM525.2 439.6h1.4v1.4h-1.4zM457.7 450.4h1.4v1.4h-1.4zM602.6 398.7h1.4v1.4h-1.4zM511.6 443.7h1.4v1.4h-1.4zM551 376.9h1.4v1.4h-1.4zM552.5 380.1h1.4v1.4h-1.4zM475.7 448h1.4v1.4h-1.4zM519.1 431.4h1.4v1.4h-1.4zM538.8 404.8h1.4v1.4h-1.4zM470.3 438.4h1.4v1.4h-1.4zM534.2 390.1h1.4v1.4h-1.4zM505.2 405.4h1.4v1.4h-1.4zM514.9 441h1.4v1.4h-1.4zM465.4 440h1.4v1.4h-1.4zM511.3 425.8h1.4v1.4h-1.4zM554.9 387.3h1.4v1.4h-1.4zM513.8 408.2h1.4v1.4h-1.4zM493.3 454.2h1.4v1.4h-1.4zM478.3 431.2h1.4v1.4h-1.4zM491.4 452.1h1.4v1.4h-1.4zM534.7 377.7h1.4v1.4h-1.4zM509.4 431h1.4v1.4h-1.4zM470.8 450.8h1.4v1.4h-1.4zM552.1 430.3h1.4v1.4h-1.4zM426.1 459.8h1.4v1.4h-1.4zM512.8 451.5h1.4v1.4h-1.4zM558.9 348.9h1.4v1.4h-1.4zM486.2 421.6h1.4v1.4h-1.4zM541 397.1h1.4v1.4h-1.4zM543 391.9h1.4v1.4h-1.4zM555.9 419h1.4v1.4h-1.4zM525.3 442.4h1.4v1.4h-1.4zM544.9 362h1.4v1.4h-1.4zM434.7 448.3h1.4v1.4h-1.4zM466.2 433.5h1.4v1.4h-1.4zM465.7 449.6h1.4v1.4h-1.4zM519.5 399h1.4v1.4h-1.4zM479.5 451.4h1.4v1.4h-1.4zM567.9 409.3h1.4v1.4h-1.4zM574.4 420.5h1.4v1.4h-1.4zM584 388.5h1.4v1.4h-1.4zM591.1 370.8h1.4v1.4h-1.4zM576.6 380.4h1.4v1.4h-1.4zM473.8 424.2h1.4v1.4h-1.4zM506.1 428h1.4v1.4h-1.4zM426.8 455.9h1.4v1.4h-1.4zM572.9 400.8h1.4v1.4h-1.4zM511.5 391.6h1.4v1.4h-1.4zM479.3 448.2h1.4v1.4h-1.4zM526.1 380.2h1.4v1.4h-1.4zM454.7 434.6h1.4v1.4h-1.4zM447.1 444.1h1.4v1.4h-1.4zM559.4 379.1h1.4v1.4h-1.4zM555.5 359.8h1.4v1.4h-1.4zM484.8 439.7h1.4v1.4h-1.4zM570 386.8h1.4v1.4h-1.4zM568.4 419h1.4v1.4h-1.4zM486.8 426.8h1.4v1.4h-1.4zM473.3 455.3h1.4v1.4h-1.4zM500.1 421.7h1.4v1.4h-1.4zM514.6 402.6h1.4v1.4h-1.4zM484.9 434.4h1.4v1.4h-1.4zM523.4 389.5h1.4v1.4h-1.4zM590.8 407.2h1.4v1.4h-1.4zM459.9 450.9h1.4v1.4h-1.4zM448.5 438.6h1.4v1.4h-1.4zM504.7 429.8h1.4v1.4h-1.4zM481.2 416.9h1.4v1.4h-1.4zM461.5 453.9h1.4v1.4h-1.4zM441.6 447.3h1.4v1.4h-1.4zM545.1 436.9h1.4v1.4h-1.4zM532.7 387h1.4v1.4h-1.4zM482.2 456.1h1.4v1.4h-1.4zM424.7 461.5h1.4v1.4h-1.4zM458.2 439.6h1.4v1.4h-1.4zM408.1 459h1.4v1.4h-1.4zM489.8 424.7h1.4v1.4h-1.4zM560.5 375.2h1.4v1.4h-1.4zM488.5 412.4h1.4v1.4h-1.4zM492.9 447.6h1.4v1.4h-1.4zM490.6 422.2h1.4v1.4h-1.4zM488.7 409.6h1.4v1.4h-1.4zM603.4 364.2h1.4v1.4h-1.4zM430.4 458.2h1.4v1.4h-1.4zM576.7 388.1h1.4v1.4h-1.4zM515.3 444.3h1.4v1.4h-1.4zM547.9 416.3h1.4v1.4h-1.4zM494 441h1.4v1.4h-1.4zM449.5 437.9h1.4v1.4h-1.4zM559.6 402.8h1.4v1.4h-1.4zM545 381.3h1.4v1.4h-1.4zM478.4 432.9h1.4v1.4h-1.4zM508.6 424.9h1.4v1.4h-1.4zM469.2 455.7h1.4v1.4h-1.4zM582.4 402.1h1.4v1.4h-1.4zM479 417.5h1.4v1.4h-1.4zM524 437.3h1.4v1.4h-1.4zM541.8 384.7h1.4v1.4h-1.4zM540.9 402.2h1.4v1.4h-1.4zM538.8 380.6h1.4v1.4h-1.4zM449.9 451.7h1.4v1.4h-1.4zM528.9 400.8h1.4v1.4h-1.4zM499.1 453.5h1.4v1.4h-1.4zM493.7 437.1h1.4v1.4h-1.4zM503.5 403.3h1.4v1.4h-1.4zM475.3 429.6h1.4v1.4h-1.4zM563.6 378.8h1.4v1.4h-1.4zM511.8 388.9h1.4v1.4h-1.4zM494.3 428.2h1.4v1.4h-1.4zM519.9 408.8h1.4v1.4h-1.4zM465.7 447.4h1.4v1.4h-1.4zM552.7 377.2h1.4v1.4h-1.4zM560.6 388.9h1.4v1.4h-1.4zM536.6 399.5h1.4v1.4h-1.4zM460.4 450.8h1.4v1.4h-1.4zM534.1 406.9h1.4v1.4h-1.4zM444.4 445.4h1.4v1.4h-1.4zM450.5 454.5h1.4v1.4h-1.4zM491.4 442.2h1.4v1.4h-1.4zM469.4 457h1.4v1.4h-1.4zM559.1 377.8h1.4v1.4h-1.4zM591.6 380.4h1.4v1.4h-1.4zM493.7 416.1h1.4v1.4h-1.4zM544.9 406.3h1.4v1.4h-1.4zM503 418.8h1.4v1.4h-1.4zM564.5 403.1h1.4v1.4h-1.4zM567.2 418.6h1.4v1.4h-1.4zM547.7 423h1.4v1.4h-1.4zM451.2 460.7h1.4v1.4h-1.4zM460 446.1h1.4v1.4h-1.4zM498.5 433.6h1.4v1.4h-1.4zM457.8 447.7h1.4v1.4h-1.4zM545.3 424.7h1.4v1.4h-1.4zM572.6 367.1h1.4v1.4h-1.4zM536.9 427.8h1.4v1.4h-1.4zM445.3 449.8h1.4v1.4h-1.4zM477.2 433.5h1.4v1.4h-1.4zM527.8 402.7h1.4v1.4h-1.4zM574 380.7h1.4v1.4h-1.4zM522.7 409.3h1.4v1.4h-1.4zM571.5 395.9h1.4v1.4h-1.4zM516.6 414.4h1.4v1.4h-1.4zM563 373.9h1.4v1.4h-1.4zM496 433h1.4v1.4h-1.4zM463.5 428.8h1.4v1.4h-1.4zM456.7 439.1h1.4v1.4h-1.4zM576 351.9h1.4v1.4h-1.4zM477.1 425.3h1.4v1.4h-1.4zM442.8 446.2h1.4v1.4h-1.4zM530.6 416.3h1.4v1.4h-1.4zM496.7 407.9h1.4v1.4h-1.4zM519.1 414h1.4v1.4h-1.4zM576.7 371.1h1.4v1.4h-1.4zM479.5 421.9h1.4v1.4h-1.4zM490.6 422.4h1.4v1.4h-1.4zM540.6 397.1h1.4v1.4h-1.4zM509.8 425.6h1.4v1.4h-1.4zM495.3 420h1.4v1.4h-1.4zM500.5 414.4h1.4v1.4h-1.4zM543.1 362.1h1.4v1.4h-1.4zM516.6 394.7h1.4v1.4h-1.4zM476.5 423.6h1.4v1.4h-1.4zM451.2 448.6h1.4v1.4h-1.4zM524.2 424.4h1.4v1.4h-1.4zM482.9 437.9h1.4v1.4h-1.4zM498.7 439.5h1.4v1.4h-1.4zM553.3 364.8h1.4v1.4h-1.4zM586.3 379.1h1.4v1.4h-1.4zM463.1 438.6h1.4v1.4h-1.4zM415.8 462.5h1.4v1.4h-1.4zM492.1 431.3h1.4v1.4h-1.4zM519.5 440.9h1.4v1.4h-1.4zM570.3 395.5h1.4v1.4h-1.4zM488.5 422.4h1.4v1.4h-1.4zM480 431.2h1.4v1.4h-1.4zM459.5 452.7h1.4v1.4h-1.4zM455.3 445.4h1.4v1.4h-1.4zM495.7 447.9h1.4v1.4h-1.4zM502.4 431.3h1.4v1.4h-1.4zM594 406.3h1.4v1.4h-1.4zM523.9 420.6h1.4v1.4h-1.4zM487.6 426.2h1.4v1.4h-1.4zM510.2 427.1h1.4v1.4h-1.4zM504.3 404h1.4v1.4h-1.4zM490.3 450.1h1.4v1.4h-1.4zM593.8 380.2h1.4v1.4h-1.4zM478 425.9h1.4v1.4h-1.4zM536.4 401.4h1.4v1.4h-1.4zM466.1 430.1h1.4v1.4h-1.4zM588.4 397.6h1.4v1.4h-1.4zM492.3 413.5h1.4v1.4h-1.4zM504.3 445.4h1.4v1.4h-1.4zM490.1 434.4h1.4v1.4h-1.4zM467.9 453.8h1.4v1.4h-1.4zM573.9 408.9h1.4v1.4h-1.4zM556 393.2h1.4v1.4h-1.4zM590.5 409.3h1.4v1.4h-1.4zM497.7 423.6h1.4v1.4h-1.4zM472.8 448.9h1.4v1.4h-1.4zM596.1 389.3h1.4v1.4h-1.4zM488 417.9h1.4v1.4h-1.4zM552.5 404.8h1.4v1.4h-1.4zM466.5 448h1.4v1.4h-1.4zM505.6 435.5h1.4v1.4h-1.4zM444.2 440.5h1.4v1.4h-1.4zM521.2 428.7h1.4v1.4h-1.4zM507.6 419.9h1.4v1.4h-1.4zM534 369.3h1.4v1.4h-1.4zM547.5 373.4h1.4v1.4h-1.4zM532 425h1.4v1.4h-1.4zM484.9 425.5h1.4v1.4h-1.4zM516.3 413.2h1.4v1.4h-1.4zM510.3 429.8h1.4v1.4h-1.4zM527.9 430.2h1.4v1.4h-1.4zM585.9 403.7h1.4v1.4h-1.4zM463.5 434.4h1.4v1.4h-1.4zM575.4 383.2h1.4v1.4h-1.4zM561.2 416.8h1.4v1.4h-1.4zM521 384.3h1.4v1.4h-1.4zM536.8 400.6h1.4v1.4h-1.4zM546 414.9h1.4v1.4h-1.4zM576.7 384.4h1.4v1.4h-1.4zM486.6 417h1.4v1.4h-1.4zM585.2 362.5h1.4v1.4h-1.4zM515.8 421.9h1.4v1.4h-1.4zM548.3 377.4h1.4v1.4h-1.4zM437.3 452h1.4v1.4h-1.4zM522.9 419.8h1.4v1.4h-1.4zM463.1 447.6h1.4v1.4h-1.4zM533.4 403.1h1.4v1.4h-1.4zM597.1 371.6h1.4v1.4h-1.4zM521.5 434.3h1.4v1.4h-1.4zM467.7 441.6h1.4v1.4h-1.4zM423.2 451.9h1.4v1.4h-1.4zM517.3 437.6h1.4v1.4h-1.4zM546.8 409.3h1.4v1.4h-1.4zM466.5 426.5h1.4v1.4h-1.4zM597 387h1.4v1.4h-1.4zM484.4 435.2h1.4v1.4h-1.4zM570.6 393.3h1.4v1.4h-1.4zM560 390.7h1.4v1.4h-1.4zM454.7 443.8h1.4v1.4h-1.4zM509.7 419.8h1.4v1.4h-1.4zM437.4 452.6h1.4v1.4h-1.4zM498.8 408.4h1.4v1.4h-1.4zM577.1 412.2h1.4v1.4h-1.4zM530 415.1h1.4v1.4h-1.4zM516.4 391.6h1.4v1.4h-1.4zM518.3 399h1.4v1.4h-1.4zM467.9 434.8h1.4v1.4h-1.4zM510.5 451.3h1.4v1.4h-1.4zM498 431.8h1.4v1.4h-1.4zM507.9 402.1h1.4v1.4h-1.4zM584.2 414.9h1.4v1.4h-1.4zM519.6 421.2h1.4v1.4h-1.4zM480.4 433.4h1.4v1.4h-1.4zM465.5 450.7h1.4v1.4h-1.4zM445.6 448.8h1.4v1.4h-1.4zM492.5 453h1.4v1.4h-1.4zM494.4 452.4h1.4v1.4h-1.4zM429.2 462h1.4v1.4h-1.4zM568.1 397.8h1.4v1.4h-1.4zM493.4 444.3h1.4v1.4h-1.4zM431.8 456.4h1.4v1.4h-1.4zM474.5 448h1.4v1.4h-1.4zM564.4 386.3h1.4v1.4h-1.4zM537.1 426.7h1.4v1.4h-1.4zM455.8 447.9h1.4v1.4h-1.4zM542.1 401h1.4v1.4h-1.4zM451.4 455.2h1.4v1.4h-1.4zM462.5 454.9h1.4v1.4h-1.4zM582.3 393.1h1.4v1.4h-1.4zM426.3 457.4h1.4v1.4h-1.4zM499.8 449h1.4v1.4h-1.4zM492 413.4h1.4v1.4h-1.4zM473.4 432.6h1.4v1.4h-1.4zM489 427h1.4v1.4h-1.4zM461.8 435.2h1.4v1.4h-1.4zM535.7 419.5h1.4v1.4h-1.4zM490 434.4h1.4v1.4h-1.4zM585.6 404.7h1.4v1.4h-1.4zM457.4 457.2h1.4v1.4h-1.4zM558.2 418h1.4v1.4h-1.4zM575 381.2h1.4v1.4h-1.4zM455.4 454.2h1.4v1.4h-1.4zM528.7 416.4h1.4v1.4h-1.4zM450.3 439.6h1.4v1.4h-1.4zM524.7 374.7h1.4v1.4h-1.4zM496.5 425.2h1.4v1.4h-1.4zM540.6 401.7h1.4v1.4h-1.4zM532.4 385.3h1.4v1.4h-1.4zM486.8 412h1.4v1.4h-1.4zM543.7 417.4h1.4v1.4h-1.4zM508.2 454.5h1.4v1.4h-1.4zM542.6 391.8h1.4v1.4h-1.4zM587.9 394.4h1.4v1.4h-1.4zM527.8 404.1h1.4v1.4h-1.4zM529.6 443.3h1.4v1.4h-1.4zM535.7 393.9h1.4v1.4h-1.4zM489.3 412.3h1.4v1.4h-1.4zM539.2 358.9h1.4v1.4h-1.4zM594.6 387.2h1.4v1.4h-1.4zM524.3 428.6h1.4v1.4h-1.4zM474 432.8h1.4v1.4h-1.4zM535.7 428.5h1.4v1.4h-1.4zM576.3 369.8h1.4v1.4h-1.4zM501.6 416h1.4v1.4h-1.4zM507.1 418.5h1.4v1.4h-1.4zM489.6 436.4h1.4v1.4h-1.4zM489.3 452.6h1.4v1.4h-1.4zM528.1 417.8h1.4v1.4h-1.4zM524 430.8h1.4v1.4h-1.4zM519.6 419.3h1.4v1.4h-1.4zM484.1 427.1h1.4v1.4h-1.4zM541.4 392.7h1.4v1.4h-1.4zM499.8 431.4h1.4v1.4h-1.4zM454.9 443.1h1.4v1.4h-1.4zM582.6 380.8h1.4v1.4h-1.4zM483.4 428.4h1.4v1.4h-1.4zM528.2 390.7h1.4v1.4h-1.4zM535.6 410.2h1.4v1.4h-1.4zM475.1 422.2h1.4v1.4h-1.4zM529.3 436.3h1.4v1.4h-1.4zM469.1 428.3h1.4v1.4h-1.4zM587.2 402.1h1.4v1.4h-1.4zM428.9 454.4h1.4v1.4h-1.4zM589.4 398h1.4v1.4h-1.4zM498.8 432.5h1.4v1.4h-1.4zM565.6 379.3h1.4v1.4h-1.4zM539.2 383.2h1.4v1.4h-1.4zM470.2 456h1.4v1.4h-1.4zM590.2 390.4h1.4v1.4h-1.4zM537.9 407.5h1.4v1.4h-1.4zM525.5 417.7h1.4v1.4h-1.4zM528.8 386.2h1.4v1.4h-1.4zM480.6 439h1.4v1.4h-1.4zM429.8 461.6h1.4v1.4h-1.4zM514.7 424h1.4v1.4h-1.4zM456.7 431h1.4v1.4h-1.4zM489.8 448.4h1.4v1.4h-1.4zM571.4 396.8h1.4v1.4h-1.4zM570.7 409.5h1.4v1.4h-1.4zM502.3 425.9h1.4v1.4h-1.4zM480.7 425h1.4v1.4h-1.4zM495.5 435h1.4v1.4h-1.4zM558.6 375.2h1.4v1.4h-1.4zM592.5 393.4h1.4v1.4h-1.4zM463.3 433.9h1.4v1.4h-1.4zM485.6 432h1.4v1.4h-1.4zM472 446.9h1.4v1.4h-1.4zM520.9 420.6h1.4v1.4h-1.4zM456.4 460.9h1.4v1.4h-1.4zM506.2 419.3h1.4v1.4h-1.4zM542 391.9h1.4v1.4h-1.4zM470.6 439.6h1.4v1.4h-1.4zM554 371.3h1.4v1.4h-1.4zM481.1 425.1h1.4v1.4h-1.4zM563.3 396.2h1.4v1.4h-1.4zM524.8 409.4h1.4v1.4h-1.4zM515.1 414h1.4v1.4h-1.4zM562.4 415.1h1.4v1.4h-1.4zM474.8 433.4h1.4v1.4h-1.4zM479.4 442.9h1.4v1.4h-1.4zM466.3 453.9h1.4v1.4h-1.4zM458.5 440h1.4v1.4h-1.4zM475.1 454.3h1.4v1.4h-1.4zM475.9 452.5h1.4v1.4h-1.4zM456 435.5h1.4v1.4h-1.4zM573.5 404.9h1.4v1.4h-1.4zM517 391.6h1.4v1.4h-1.4zM493.5 409.9h1.4v1.4h-1.4zM453.9 447.5h1.4v1.4h-1.4zM531.3 428.8h1.4v1.4h-1.4zM553.4 386h1.4v1.4h-1.4zM505.4 436h1.4v1.4h-1.4zM520.7 448.5h1.4v1.4h-1.4zM562.1 406.5h1.4v1.4h-1.4zM458.9 448.9h1.4v1.4h-1.4zM562.4 387h1.4v1.4h-1.4zM580.8 402.6h1.4v1.4h-1.4zM515 409.3h1.4v1.4h-1.4zM490.5 442.1h1.4v1.4h-1.4zM520.1 417.4h1.4v1.4h-1.4zM577.1 361.3h1.4v1.4h-1.4zM549.5 415.1h1.4v1.4h-1.4zM460.2 434.1h1.4v1.4h-1.4zM480.9 430.9h1.4v1.4h-1.4zM550.1 390.3h1.4v1.4h-1.4zM444.2 443h1.4v1.4h-1.4zM561.3 369h1.4v1.4h-1.4zM522.3 374.1h1.4v1.4h-1.4zM542.6 383.9h1.4v1.4h-1.4zM516.3 415.3h1.4v1.4h-1.4zM532.8 401.1h1.4v1.4h-1.4zM557.9 417.7h1.4v1.4h-1.4zM533.6 426.4h1.4v1.4h-1.4zM540.3 366.8h1.4v1.4h-1.4zM436.7 457.3h1.4v1.4h-1.4zM468.9 444h1.4v1.4h-1.4zM459.9 454.3h1.4v1.4h-1.4zM596.8 402.9h1.4v1.4h-1.4zM575 401.4h1.4v1.4h-1.4zM543.6 405.4h1.4v1.4h-1.4zM590.3 374.4h1.4v1.4h-1.4zM547.8 395.9h1.4v1.4h-1.4zM554.9 420.1h1.4v1.4h-1.4zM487.4 434.7h1.4v1.4h-1.4zM554.9 417.2h1.4v1.4h-1.4zM473.4 432.3h1.4v1.4h-1.4zM466.2 446.3h1.4v1.4h-1.4zM492.5 425.9h1.4v1.4h-1.4zM497.5 433.5h1.4v1.4h-1.4zM484.9 422.7h1.4v1.4h-1.4zM530.4 421.2h1.4v1.4h-1.4zM496 440.6h1.4v1.4h-1.4zM559.7 377.7h1.4v1.4h-1.4zM607 380h1.4v1.4h-1.4zM493.1 431.8h1.4v1.4h-1.4zM486.4 449.8h1.4v1.4h-1.4zM543.6 427.2h1.4v1.4h-1.4zM530.3 407.3h1.4v1.4h-1.4zM487.2 439.2h1.4v1.4h-1.4zM454 457h1.4v1.4h-1.4zM484 444.1h1.4v1.4h-1.4zM458.8 452.9h1.4v1.4h-1.4zM433.7 459.6h1.4v1.4h-1.4zM495.6 440.1h1.4v1.4h-1.4zM504.3 404.8h1.4v1.4h-1.4zM478.7 422.1h1.4v1.4h-1.4zM558 420.3h1.4v1.4h-1.4zM451.7 456h1.4v1.4h-1.4zM538 400.5h1.4v1.4h-1.4zM461.4 455.9h1.4v1.4h-1.4zM475.7 437.1h1.4v1.4h-1.4zM463.2 432.8h1.4v1.4h-1.4zM555 412.8h1.4v1.4h-1.4zM492.9 404h1.4v1.4h-1.4zM503.8 410.3h1.4v1.4h-1.4zM584.5 387h1.4v1.4h-1.4zM573 366.1h1.4v1.4h-1.4zM491.6 423.4h1.4v1.4h-1.4zM505.8 449.6h1.4v1.4h-1.4zM489 445.5h1.4v1.4h-1.4zM443.6 442.6h1.4v1.4h-1.4zM445.2 451.5h1.4v1.4h-1.4zM519.7 443h1.4v1.4h-1.4zM476.2 444.6h1.4v1.4h-1.4zM467.1 435.9h1.4v1.4h-1.4zM521.2 442.3h1.4v1.4h-1.4zM509.2 444.6h1.4v1.4h-1.4zM545.4 384.6h1.4v1.4h-1.4zM432.5 457.6h1.4v1.4h-1.4zM543.1 369.9h1.4v1.4h-1.4zM524.8 407.5h1.4v1.4h-1.4zM499.1 450.8h1.4v1.4h-1.4zM521.5 436.3h1.4v1.4h-1.4zM559.1 394.1h1.4v1.4h-1.4zM587.5 375.7h1.4v1.4h-1.4zM520.2 432.7h1.4v1.4h-1.4zM508.5 393.4h1.4v1.4h-1.4zM492.5 413.1h1.4v1.4h-1.4zM445.7 448.3h1.4v1.4h-1.4zM500.5 398.5h1.4v1.4h-1.4zM464.5 439.2h1.4v1.4h-1.4zM534.7 408.4h1.4v1.4h-1.4zM442.9 461.2h1.4v1.4h-1.4zM550.7 385.6h1.4v1.4h-1.4zM482.4 455.7h1.4v1.4h-1.4zM519.4 443.4h1.4v1.4h-1.4zM539.5 375.6h1.4v1.4h-1.4zM541.4 366.5h1.4v1.4h-1.4zM475.4 429h1.4v1.4h-1.4zM501.6 446.9h1.4v1.4h-1.4zM476.7 450.1h1.4v1.4h-1.4zM546 391.4h1.4v1.4h-1.4zM458.3 447.3h1.4v1.4h-1.4zM428.4 457h1.4v1.4h-1.4zM436.5 454.4h1.4v1.4h-1.4zM499 426.1h1.4v1.4h-1.4zM508.9 436.1h1.4v1.4h-1.4zM469.6 453.3h1.4v1.4h-1.4zM574.9 381.2h1.4v1.4h-1.4zM534.2 412.4h1.4v1.4h-1.4zM530.8 426h1.4v1.4h-1.4zM532.5 416h1.4v1.4h-1.4zM467.5 450.6h1.4v1.4h-1.4zM444.4 441.2h1.4v1.4h-1.4zM465.9 456.6h1.4v1.4h-1.4zM493.6 423.7h1.4v1.4h-1.4zM493.5 417.6h1.4v1.4h-1.4zM487 458.1h1.4v1.4h-1.4zM548.2 405.9h1.4v1.4h-1.4zM499 421.2h1.4v1.4h-1.4zM488.3 423.7h1.4v1.4h-1.4zM493.3 408h1.4v1.4h-1.4zM465.6 457.2h1.4v1.4h-1.4zM567 388.7h1.4v1.4h-1.4zM490.8 450.9h1.4v1.4h-1.4zM498.3 439.2h1.4v1.4h-1.4zM603.6 367h1.4v1.4h-1.4zM492.7 412.9h1.4v1.4h-1.4zM527.1 418.2h1.4v1.4h-1.4zM559.3 427.4h1.4v1.4h-1.4zM469.1 453.2h1.4v1.4h-1.4zM515 438.9h1.4v1.4h-1.4zM517.4 416.1h1.4v1.4h-1.4zM579.9 393.1h1.4v1.4h-1.4zM441.5 444.5h1.4v1.4h-1.4zM554 355.6h1.4v1.4h-1.4zM466.8 449.9h1.4v1.4h-1.4zM471.1 423.5h1.4v1.4h-1.4zM569.5 413.5h1.4v1.4h-1.4zM569.5 410.9h1.4v1.4h-1.4zM605.7 387h1.4v1.4h-1.4zM463.8 428h1.4v1.4h-1.4zM592.7 374.5h1.4v1.4h-1.4zM486.4 429.5h1.4v1.4h-1.4zM549.5 380.3h1.4v1.4h-1.4zM507.9 423.7h1.4v1.4h-1.4zM521.9 415.4h1.4v1.4h-1.4zM558.1 418.1h1.4v1.4h-1.4zM436.8 447.3h1.4v1.4h-1.4zM494.5 410.1h1.4v1.4h-1.4zM569.5 422.4h1.4v1.4h-1.4zM569.2 407.2h1.4v1.4h-1.4zM464.8 454.6h1.4v1.4h-1.4zM432.8 454.8h1.4v1.4h-1.4zM535.2 394.2h1.4v1.4h-1.4zM557.5 385.7h1.4v1.4h-1.4zM456.4 439.6h1.4v1.4h-1.4zM581.8 403.4h1.4v1.4h-1.4zM492.2 451.4h1.4v1.4h-1.4zM594.1 386.3h1.4v1.4h-1.4zM463.1 452.2h1.4v1.4h-1.4zM540 412.4h1.4v1.4h-1.4zM606.3 386.2h1.4v1.4h-1.4zM464.6 427.4h1.4v1.4h-1.4zM586.2 403.4h1.4v1.4h-1.4zM490.8 425h1.4v1.4h-1.4zM527.6 403.6h1.4v1.4h-1.4zM525.2 403.7h1.4v1.4h-1.4zM490.1 413.7h1.4v1.4h-1.4zM555 416.9h1.4v1.4h-1.4zM549.9 418h1.4v1.4h-1.4zM522.5 391.8h1.4v1.4h-1.4zM468.2 455.9h1.4v1.4h-1.4zM477 421.9h1.4v1.4h-1.4zM544.5 435.9h1.4v1.4h-1.4zM485.8 431.7h1.4v1.4h-1.4zM511.1 447.8h1.4v1.4h-1.4zM540.4 427.1h1.4v1.4h-1.4zM451.1 452.2h1.4v1.4h-1.4zM532.9 371.6h1.4v1.4h-1.4zM533.5 441.3h1.4v1.4h-1.4zM484.7 428.3h1.4v1.4h-1.4zM576.8 390.4h1.4v1.4h-1.4zM556.2 414.6h1.4v1.4h-1.4zM491.1 440.8h1.4v1.4h-1.4zM472.1 430.4h1.4v1.4h-1.4zM533.9 384.3h1.4v1.4h-1.4zM524 397.7h1.4v1.4h-1.4zM414.4 463.7h1.4v1.4h-1.4zM561.6 409.3h1.4v1.4h-1.4zM539 419.9h1.4v1.4h-1.4zM528.4 411.5h1.4v1.4h-1.4zM475.7 430.9h1.4v1.4h-1.4zM554.5 376.6h1.4v1.4h-1.4zM518 442.3h1.4v1.4h-1.4zM594.2 392.2h1.4v1.4h-1.4zM507 432.7h1.4v1.4h-1.4zM546.2 390.5h1.4v1.4h-1.4zM545.3 427h1.4v1.4h-1.4zM478.4 426.1h1.4v1.4h-1.4zM510.9 439.8h1.4v1.4h-1.4zM487 411.1h1.4v1.4h-1.4zM453.1 455.7h1.4v1.4h-1.4zM556.9 380.2h1.4v1.4h-1.4zM484.2 420.5h1.4v1.4h-1.4zM536.9 404.5h1.4v1.4h-1.4zM549.3 382h1.4v1.4h-1.4zM550.9 384.6h1.4v1.4h-1.4zM555.7 368.8h1.4v1.4h-1.4zM521.1 428.2h1.4v1.4h-1.4zM469.6 446h1.4v1.4h-1.4zM520 432.8h1.4v1.4h-1.4zM551.8 381.9h1.4v1.4h-1.4zM567.4 406.9h1.4v1.4h-1.4zM561.3 388h1.4v1.4h-1.4zM463.8 446.4h1.4v1.4h-1.4zM458.6 457.5h1.4v1.4h-1.4zM545.9 388.9h1.4v1.4h-1.4zM507.2 443.1h1.4v1.4h-1.4zM565.8 377.4h1.4v1.4h-1.4zM519 446.2h1.4v1.4h-1.4zM495.4 419.3h1.4v1.4h-1.4zM567.3 407.7h1.4v1.4h-1.4zM499.3 421.2h1.4v1.4h-1.4zM521.5 439.3h1.4v1.4h-1.4zM439.3 453.4h1.4v1.4h-1.4zM446.9 451.4h1.4v1.4h-1.4zM459.3 443.7h1.4v1.4h-1.4zM535.2 430.4h1.4v1.4h-1.4zM470.4 431.4h1.4v1.4h-1.4zM555.2 405.6h1.4v1.4h-1.4zM535.1 400.3h1.4v1.4h-1.4zM599.2 399.3h1.4v1.4h-1.4zM527.7 439h1.4v1.4h-1.4zM482.7 435.4h1.4v1.4h-1.4zM562.7 391.3h1.4v1.4h-1.4zM527.5 401.6h1.4v1.4h-1.4zM488.1 435.3h1.4v1.4h-1.4zM498.2 428.3h1.4v1.4h-1.4zM501.8 427.8h1.4v1.4h-1.4zM519.4 417.4h1.4v1.4h-1.4zM452.5 436.6h1.4v1.4h-1.4zM436.3 455.3h1.4v1.4h-1.4zM488 439.5h1.4v1.4h-1.4zM545.6 414h1.4v1.4h-1.4zM546.3 358.1h1.4v1.4h-1.4zM538.1 424.8h1.4v1.4h-1.4zM434.8 451.1h1.4v1.4h-1.4zM517.3 444.8h1.4v1.4h-1.4zM482.4 426.8h1.4v1.4h-1.4zM472.3 431.3h1.4v1.4h-1.4zM486.1 421.4h1.4v1.4h-1.4zM465.3 441.5h1.4v1.4h-1.4zM496.3 454.2h1.4v1.4h-1.4zM487.9 447.9h1.4v1.4h-1.4zM460.2 448.2h1.4v1.4h-1.4zM569.1 392.9h1.4v1.4h-1.4zM529 386.3h1.4v1.4h-1.4zM592.2 400.2h1.4v1.4h-1.4zM498.1 422.4h1.4v1.4h-1.4zM574.6 408.3h1.4v1.4h-1.4zM589.8 395.5h1.4v1.4h-1.4zM514.5 421.5h1.4v1.4h-1.4zM535.5 417.2h1.4v1.4h-1.4zM439.9 450h1.4v1.4h-1.4zM535.3 365.5h1.4v1.4h-1.4zM557.4 421.2h1.4v1.4h-1.4zM453 450.9h1.4v1.4h-1.4zM423.8 453.9h1.4v1.4h-1.4zM526.1 391.6h1.4v1.4h-1.4zM545.3 374.2h1.4v1.4h-1.4zM522.7 423.2h1.4v1.4h-1.4zM548.5 391.8h1.4v1.4h-1.4zM592.7 402.2h1.4v1.4h-1.4zM457.5 441.1h1.4v1.4h-1.4zM513.4 414.1h1.4v1.4h-1.4zM515.8 423.5h1.4v1.4h-1.4zM561 397.2h1.4v1.4h-1.4zM565 410h1.4v1.4h-1.4zM515 403.6h1.4v1.4h-1.4zM505.5 396.9h1.4v1.4h-1.4zM537.6 430.2h1.4v1.4h-1.4zM541.3 406.3h1.4v1.4h-1.4zM573.3 400.8h1.4v1.4h-1.4zM488.8 440.2h1.4v1.4h-1.4zM457.9 449.1h1.4v1.4h-1.4zM468.2 431.1h1.4v1.4h-1.4zM519.3 437h1.4v1.4h-1.4zM546.4 426.6h1.4v1.4h-1.4zM465.7 426.6h1.4v1.4h-1.4zM491.4 416.9h1.4v1.4h-1.4zM548.1 412.6h1.4v1.4h-1.4zM518.3 426.3h1.4v1.4h-1.4zM496.3 424.5h1.4v1.4h-1.4zM576.4 379.5h1.4v1.4h-1.4zM505.8 401.6h1.4v1.4h-1.4zM569 393.6h1.4v1.4h-1.4zM526.2 423.3h1.4v1.4h-1.4zM527 442.9h1.4v1.4h-1.4zM500.8 415.9h1.4v1.4h-1.4zM468.6 457.7h1.4v1.4h-1.4zM441.9 458.1h1.4v1.4h-1.4zM574.1 400.6h1.4v1.4h-1.4zM532.1 418.1h1.4v1.4h-1.4zM476.8 422.1h1.4v1.4h-1.4zM477.2 455.1h1.4v1.4h-1.4zM453.2 442h1.4v1.4h-1.4zM515.3 402.6h1.4v1.4h-1.4zM444.6 451.3h1.4v1.4h-1.4zM482.2 433.5h1.4v1.4h-1.4zM521 420.7h1.4v1.4h-1.4zM461 439.1h1.4v1.4h-1.4zM520.8 380.3h1.4v1.4h-1.4zM529.5 416.6h1.4v1.4h-1.4zM515.2 405.6h1.4v1.4h-1.4zM524 400.5h1.4v1.4h-1.4zM449.6 442h1.4v1.4h-1.4zM456.5 445.3h1.4v1.4h-1.4zM504.7 407.9h1.4v1.4h-1.4zM519.4 428.4h1.4v1.4h-1.4zM483.4 424.4h1.4v1.4h-1.4zM568 387.1h1.4v1.4h-1.4zM464.2 449.4h1.4v1.4h-1.4zM485.8 450.7h1.4v1.4h-1.4zM510 419h1.4v1.4h-1.4zM527.9 416.5h1.4v1.4h-1.4zM480.6 456.8h1.4v1.4h-1.4zM510.9 416.8h1.4v1.4h-1.4zM462.7 451.8h1.4v1.4h-1.4zM544 389.3h1.4v1.4h-1.4zM545.8 399.9h1.4v1.4h-1.4zM591.1 397.7h1.4v1.4h-1.4zM483 435.1h1.4v1.4h-1.4zM482.8 436.5h1.4v1.4h-1.4zM503 425.2h1.4v1.4h-1.4zM556.6 415.6h1.4v1.4h-1.4zM494.8 436.9h1.4v1.4h-1.4zM564.1 393h1.4v1.4h-1.4zM461.7 450.7h1.4v1.4h-1.4zM480.6 442.7h1.4v1.4h-1.4zM455.1 452.7h1.4v1.4h-1.4zM487 455.5h1.4v1.4h-1.4zM439.2 455.9h1.4v1.4h-1.4zM562.3 425.2h1.4v1.4h-1.4zM495.3 415.9h1.4v1.4h-1.4zM587.3 396.6h1.4v1.4h-1.4zM470.7 448.5h1.4v1.4h-1.4zM548.9 370.2h1.4v1.4h-1.4zM518.7 414.8h1.4v1.4h-1.4zM479.1 417.4h1.4v1.4h-1.4zM525.7 426h1.4v1.4h-1.4zM487.2 420.4h1.4v1.4h-1.4zM480.3 421.8h1.4v1.4h-1.4zM526.5 386.8h1.4v1.4h-1.4zM481.2 418.7h1.4v1.4h-1.4zM495.4 417.8h1.4v1.4h-1.4zM511.3 396.8h1.4v1.4h-1.4zM446.9 444.4h1.4v1.4h-1.4zM522.2 392.9h1.4v1.4h-1.4zM561.4 395.4h1.4v1.4h-1.4zM459 448.5h1.4v1.4h-1.4zM588.9 391.5h1.4v1.4h-1.4zM569.2 391.6h1.4v1.4h-1.4zM480.2 433.2h1.4v1.4h-1.4zM467.7 442.4h1.4v1.4h-1.4zM492.1 411h1.4v1.4h-1.4zM447.5 448.2h1.4v1.4h-1.4zM566 405.3h1.4v1.4h-1.4zM472.1 433.7h1.4v1.4h-1.4zM568.9 406h1.4v1.4h-1.4zM523.3 426.3h1.4v1.4h-1.4zM513 401.6h1.4v1.4h-1.4zM546 392.1h1.4v1.4h-1.4zM527.6 441.1h1.4v1.4h-1.4zM472.1 436h1.4v1.4h-1.4zM574.3 418.6h1.4v1.4h-1.4zM452.4 444.2h1.4v1.4h-1.4zM493.3 442.5h1.4v1.4h-1.4zM478.2 444.8h1.4v1.4h-1.4zM541.1 400.6h1.4v1.4h-1.4zM514.7 434.5h1.4v1.4h-1.4zM481.5 424.4h1.4v1.4h-1.4zM443.8 454.7h1.4v1.4h-1.4zM441 453.5h1.4v1.4h-1.4zM546.1 424.4h1.4v1.4h-1.4zM524.4 379.5h1.4v1.4h-1.4zM570.9 381h1.4v1.4h-1.4zM434 460.3h1.4v1.4h-1.4zM538 372h1.4v1.4h-1.4zM573.4 388.9h1.4v1.4h-1.4zM448.3 445.6h1.4v1.4h-1.4zM492 433.4h1.4v1.4h-1.4zM514.8 385.6h1.4v1.4h-1.4zM465.2 445.3h1.4v1.4h-1.4zM497.1 439.8h1.4v1.4h-1.4zM458 461.4h1.4v1.4h-1.4zM609.9 381.4h1.4v1.4h-1.4zM447 442.3h1.4v1.4h-1.4zM557.8 425.7h1.4v1.4h-1.4zM506.1 411.7h1.4v1.4h-1.4zM470.9 434.1h1.4v1.4h-1.4zM541.5 361.4h1.4v1.4h-1.4zM435.1 455.9h1.4v1.4h-1.4zM548 428.1h1.4v1.4h-1.4zM503 408h1.4v1.4h-1.4zM527.3 399.2h1.4v1.4h-1.4zM538.3 390.6h1.4v1.4h-1.4zM530.7 424.6h1.4v1.4h-1.4zM439.9 444.4h1.4v1.4h-1.4zM558.9 373.2h1.4v1.4h-1.4zM537.5 414.4h1.4v1.4h-1.4zM489.5 451.3h1.4v1.4h-1.4zM526.5 426h1.4v1.4h-1.4zM575.5 379.6h1.4v1.4h-1.4zM547.7 421.5h1.4v1.4h-1.4zM547.1 384.2h1.4v1.4h-1.4zM517.7 384.8h1.4v1.4h-1.4zM520.9 444.5h1.4v1.4h-1.4zM476.3 428.5h1.4v1.4h-1.4zM451.7 440.4h1.4v1.4h-1.4zM517.3 426.4h1.4v1.4h-1.4zM574.5 416.2h1.4v1.4h-1.4zM501.9 435.3h1.4v1.4h-1.4zM490.4 436.8h1.4v1.4h-1.4zM523.3 428.8h1.4v1.4h-1.4zM551.7 403.5h1.4v1.4h-1.4zM525.7 403.1h1.4v1.4h-1.4zM542.7 423.6h1.4v1.4h-1.4zM586.1 412.7h1.4v1.4h-1.4zM583.5 407.4h1.4v1.4h-1.4zM461.7 455.7h1.4v1.4h-1.4zM478.3 448.5h1.4v1.4h-1.4zM511.1 447.5h1.4v1.4h-1.4zM506.5 407h1.4v1.4h-1.4zM473.4 444.2h1.4v1.4h-1.4zM438.3 454.8h1.4v1.4h-1.4zM544.7 362.4h1.4v1.4h-1.4zM480.7 432.7h1.4v1.4h-1.4zM453.2 457.2h1.4v1.4h-1.4zM546.3 395.5h1.4v1.4h-1.4zM506.3 424.1h1.4v1.4h-1.4zM520.9 400h1.4v1.4h-1.4zM518.9 398.8h1.4v1.4h-1.4zM518.1 433h1.4v1.4h-1.4zM469 439.7h1.4v1.4h-1.4zM491.7 438.7h1.4v1.4h-1.4zM484 457h1.4v1.4h-1.4zM500.1 446.3h1.4v1.4h-1.4zM436 456.3h1.4v1.4h-1.4zM541.5 414.1h1.4v1.4h-1.4zM573.6 363.1h1.4v1.4h-1.4zM504.5 403.9h1.4v1.4h-1.4zM538.6 403.2h1.4v1.4h-1.4zM563.1 387.8h1.4v1.4h-1.4zM549.6 413.3h1.4v1.4h-1.4zM490.7 446.6h1.4v1.4h-1.4zM455.5 451.6h1.4v1.4h-1.4zM485.3 422.9h1.4v1.4h-1.4zM544.6 404.4h1.4v1.4h-1.4zM585.2 363.3h1.4v1.4h-1.4zM533.1 432.1h1.4v1.4h-1.4zM471.4 456.3h1.4v1.4h-1.4zM540.7 433h1.4v1.4h-1.4zM535 387.5h1.4v1.4h-1.4zM435 461.5h1.4v1.4h-1.4zM510.8 414.6h1.4v1.4h-1.4zM533.9 383.4h1.4v1.4h-1.4zM546.2 375.3h1.4v1.4h-1.4zM520.4 432.7h1.4v1.4h-1.4zM546.4 403.9h1.4v1.4h-1.4zM520.9 419.1h1.4v1.4h-1.4zM489 426.7h1.4v1.4h-1.4zM502.5 454.3h1.4v1.4h-1.4zM464.2 452h1.4v1.4h-1.4zM491.5 440.9h1.4v1.4h-1.4zM564.3 379.4h1.4v1.4h-1.4zM494.9 449h1.4v1.4h-1.4zM508.5 399.4h1.4v1.4h-1.4zM500.5 408.6h1.4v1.4h-1.4zM569.3 401.6h1.4v1.4h-1.4zM542.3 382h1.4v1.4h-1.4zM474.4 432.8h1.4v1.4h-1.4zM497.7 441.9h1.4v1.4h-1.4zM545.3 412.1h1.4v1.4h-1.4zM489.5 432.5h1.4v1.4h-1.4zM490.3 441.1h1.4v1.4h-1.4zM577.2 397.4h1.4v1.4h-1.4zM452.7 440.1h1.4v1.4h-1.4zM472.6 436.2h1.4v1.4h-1.4zM573.3 382.4h1.4v1.4h-1.4zM502.9 404.9h1.4v1.4h-1.4zM512.2 414.4h1.4v1.4h-1.4zM518.7 396.6h1.4v1.4h-1.4zM473.1 449.6h1.4v1.4h-1.4zM576.4 415.8h1.4v1.4h-1.4zM520 413.5h1.4v1.4h-1.4zM558.4 428h1.4v1.4h-1.4zM502.6 443.1h1.4v1.4h-1.4zM467.9 433.7h1.4v1.4h-1.4zM504.3 438.3h1.4v1.4h-1.4zM453 444.1h1.4v1.4h-1.4zM493.3 438.6h1.4v1.4h-1.4zM565.1 402.1h1.4v1.4h-1.4zM506.1 447.3h1.4v1.4h-1.4zM526.1 390.5h1.4v1.4h-1.4zM433.7 463.1h1.4v1.4h-1.4zM470.1 439.9h1.4v1.4h-1.4zM522.9 419.4h1.4v1.4h-1.4zM424.3 460.9h1.4v1.4h-1.4zM481.1 423.6h1.4v1.4h-1.4zM481.7 415.7h1.4v1.4h-1.4zM533.4 386.8h1.4v1.4h-1.4zM455.4 451.5h1.4v1.4h-1.4zM514.9 384.6h1.4v1.4h-1.4zM480 426.9h1.4v1.4h-1.4zM476.6 445.2h1.4v1.4h-1.4zM510.9 445.6h1.4v1.4h-1.4zM569.1 407.3h1.4v1.4h-1.4zM538.7 429.2h1.4v1.4h-1.4zM486.6 429.4h1.4v1.4h-1.4zM520.6 433.6h1.4v1.4h-1.4zM525.5 446.8h1.4v1.4h-1.4zM535.5 374.9h1.4v1.4h-1.4zM498.3 428.3h1.4v1.4h-1.4zM475.1 431h1.4v1.4h-1.4zM559.9 408h1.4v1.4h-1.4zM571.1 376.3h1.4v1.4h-1.4zM590.6 397.4h1.4v1.4h-1.4zM464.8 447.6h1.4v1.4h-1.4zM507.4 435.9h1.4v1.4h-1.4zM551.6 419h1.4v1.4h-1.4zM551.5 394.3h1.4v1.4h-1.4zM552.4 392.2h1.4v1.4h-1.4zM574.9 394h1.4v1.4h-1.4zM542.1 403.9h1.4v1.4h-1.4zM556.1 413.8h1.4v1.4h-1.4zM464.9 428.3h1.4v1.4h-1.4zM525.2 407.6h1.4v1.4h-1.4zM491.2 442.2h1.4v1.4h-1.4zM504.1 442.3h1.4v1.4h-1.4zM589.9 404.4h1.4v1.4h-1.4zM528.5 430.9h1.4v1.4h-1.4zM526.5 380h1.4v1.4h-1.4zM461.5 438.2h1.4v1.4h-1.4zM540.4 426.5h1.4v1.4h-1.4zM472.3 438.5h1.4v1.4h-1.4zM552 418.3h1.4v1.4h-1.4zM474.5 442.8h1.4v1.4h-1.4zM515.5 435.7h1.4v1.4h-1.4zM502 406.8h1.4v1.4h-1.4zM461.6 431.5h1.4v1.4h-1.4zM582.7 382.8h1.4v1.4h-1.4zM529.2 442.1h1.4v1.4h-1.4zM509.2 423.7h1.4v1.4h-1.4zM500.4 407.9h1.4v1.4h-1.4zM524.7 422.9h1.4v1.4h-1.4zM487.2 438.3h1.4v1.4h-1.4zM525.1 429.2h1.4v1.4h-1.4zM512 420.1h1.4v1.4h-1.4zM510.6 427.6h1.4v1.4h-1.4zM478.3 425.1h1.4v1.4h-1.4zM472.1 458.7h1.4v1.4h-1.4zM498.1 438.1h1.4v1.4h-1.4zM554.2 376.2h1.4v1.4h-1.4zM524.6 401.9h1.4v1.4h-1.4zM460.1 439.2h1.4v1.4h-1.4zM525.9 445.6h1.4v1.4h-1.4zM505.4 439.3h1.4v1.4h-1.4zM550.4 419.2h1.4v1.4h-1.4zM475.1 443.7h1.4v1.4h-1.4zM562.2 393.3h1.4v1.4h-1.4zM511.6 424.5h1.4v1.4h-1.4zM468.6 437.3h1.4v1.4h-1.4zM432.9 455.9h1.4v1.4h-1.4zM569.4 424.4h1.4v1.4h-1.4zM526.5 405.3h1.4v1.4h-1.4zM564.2 418.7h1.4v1.4h-1.4zM481.9 436.9h1.4v1.4h-1.4zM473.3 439h1.4v1.4h-1.4zM533 420.2h1.4v1.4h-1.4zM518.5 426.2h1.4v1.4h-1.4zM564 379.3h1.4v1.4h-1.4zM574.5 393.9h1.4v1.4h-1.4zM547.2 387.3h1.4v1.4h-1.4zM432.6 458.3h1.4v1.4h-1.4zM488.6 443.6h1.4v1.4h-1.4zM467.7 434.3h1.4v1.4h-1.4zM496.4 434.7h1.4v1.4h-1.4zM512.3 421.2h1.4v1.4h-1.4zM451.1 437.5h1.4v1.4h-1.4zM571.1 374.4h1.4v1.4h-1.4zM432 455.6h1.4v1.4h-1.4zM526 400.6h1.4v1.4h-1.4zM509.8 390.8h1.4v1.4h-1.4zM535.8 415.8h1.4v1.4h-1.4zM498.9 447.8h1.4v1.4h-1.4zM488.1 447.6h1.4v1.4h-1.4zM470.3 443.8h1.4v1.4h-1.4zM486.5 433.5h1.4v1.4h-1.4zM518.7 436.3h1.4v1.4h-1.4zM480.6 454.1h1.4v1.4h-1.4zM501.2 420.7h1.4v1.4h-1.4zM443.4 453.3h1.4v1.4h-1.4zM480.5 423.5h1.4v1.4h-1.4zM484.9 439h1.4v1.4h-1.4zM470.5 435.2h1.4v1.4h-1.4zM535.1 409.7h1.4v1.4h-1.4zM464.3 433.8h1.4v1.4h-1.4zM502.4 443.3h1.4v1.4h-1.4zM603.5 386.5h1.4v1.4h-1.4zM535.5 401.6h1.4v1.4h-1.4zM526.6 383.7h1.4v1.4h-1.4zM467.6 444.1h1.4v1.4h-1.4zM492.5 426.5h1.4v1.4h-1.4zM489.4 455.3h1.4v1.4h-1.4zM524.5 398.1h1.4v1.4h-1.4zM505.4 404.3h1.4v1.4h-1.4zM546.6 417h1.4v1.4h-1.4zM494.8 407.4h1.4v1.4h-1.4zM595.9 388.3h1.4v1.4h-1.4zM526.7 425.1h1.4v1.4h-1.4zM440.7 450.5h1.4v1.4h-1.4zM450.5 443h1.4v1.4h-1.4zM541.5 418.4h1.4v1.4h-1.4zM478.9 420.3h1.4v1.4h-1.4zM562.9 414.2h1.4v1.4h-1.4zM528.1 386.4h1.4v1.4h-1.4zM452.9 450.5h1.4v1.4h-1.4zM494.7 443.6h1.4v1.4h-1.4zM464.3 438.3h1.4v1.4h-1.4zM578.8 383.9h1.4v1.4h-1.4zM441.1 450.1h1.4v1.4h-1.4zM552.3 399.4h1.4v1.4h-1.4zM472.6 445.9h1.4v1.4h-1.4zM558.6 376h1.4v1.4h-1.4zM478.7 452.8h1.4v1.4h-1.4zM587.2 374.3h1.4v1.4h-1.4zM523.4 427.1h1.4v1.4h-1.4zM502.7 437.1h1.4v1.4h-1.4zM488.8 426.2h1.4v1.4h-1.4zM500.6 441.1h1.4v1.4h-1.4zM484.2 455.3h1.4v1.4h-1.4zM479.2 428.4h1.4v1.4h-1.4zM463.3 438.9h1.4v1.4h-1.4zM539.2 400.8h1.4v1.4h-1.4zM440.1 448h1.4v1.4h-1.4zM466.7 448.7h1.4v1.4h-1.4zM460.2 444h1.4v1.4h-1.4zM561.4 401.8h1.4v1.4h-1.4zM555.1 418.9h1.4v1.4h-1.4zM502.4 426.2h1.4v1.4h-1.4zM470.2 454.9h1.4v1.4h-1.4zM491.2 450.1h1.4v1.4h-1.4zM448.9 454h1.4v1.4h-1.4zM455.9 455.1h1.4v1.4h-1.4zM454.1 453.9h1.4v1.4h-1.4zM549.7 363.7h1.4v1.4h-1.4zM514.2 427.1h1.4v1.4h-1.4zM574.1 414.2h1.4v1.4h-1.4zM504.7 412.6h1.4v1.4h-1.4zM556.9 422.1h1.4v1.4h-1.4zM579.3 395.5h1.4v1.4h-1.4zM527.3 446.7h1.4v1.4h-1.4zM536 426.1h1.4v1.4h-1.4zM495.3 446.1h1.4v1.4h-1.4zM420 454.9h1.4v1.4h-1.4zM557.9 360.1h1.4v1.4h-1.4zM466.6 458.3h1.4v1.4h-1.4zM466.2 435.5h1.4v1.4h-1.4zM480.5 457.1h1.4v1.4h-1.4zM522.6 412.9h1.4v1.4h-1.4zM563.4 379.2h1.4v1.4h-1.4zM581.6 391.5h1.4v1.4h-1.4zM459.2 458.1h1.4v1.4h-1.4zM540.3 409.7h1.4v1.4h-1.4zM478.6 439.1h1.4v1.4h-1.4zM480.4 446.6h1.4v1.4h-1.4zM568.3 388.1h1.4v1.4h-1.4zM533.3 422.1h1.4v1.4h-1.4zM485.4 457.6h1.4v1.4h-1.4zM539.1 391.3h1.4v1.4h-1.4zM454.4 452.2h1.4v1.4h-1.4zM587.9 392.6h1.4v1.4h-1.4zM519.3 417.9h1.4v1.4h-1.4zM569 408.4h1.4v1.4h-1.4zM546 372.2h1.4v1.4h-1.4zM456.1 439.9h1.4v1.4h-1.4zM452.2 449h1.4v1.4h-1.4zM536.6 380.2h1.4v1.4h-1.4zM511.2 399.3h1.4v1.4h-1.4zM529.1 437.6h1.4v1.4h-1.4zM577.7 402h1.4v1.4h-1.4zM522.1 426h1.4v1.4h-1.4zM503.9 428.4h1.4v1.4h-1.4zM486.3 410.9h1.4v1.4h-1.4zM578.7 395.1h1.4v1.4h-1.4zM580.6 393.2h1.4v1.4h-1.4zM530.1 433.3h1.4v1.4h-1.4zM566.9 429.8h1.4v1.4h-1.4zM491.9 438.2h1.4v1.4h-1.4zM504.3 425.5h1.4v1.4h-1.4zM577.5 403.5h1.4v1.4h-1.4zM505 401.1h1.4v1.4h-1.4zM567.7 372h1.4v1.4h-1.4zM568 380h1.4v1.4h-1.4zM518.4 411.7h1.4v1.4h-1.4zM563 396.4h1.4v1.4h-1.4zM496 412.4h1.4v1.4h-1.4zM518.6 398h1.4v1.4h-1.4zM512.6 446.3h1.4v1.4h-1.4zM461.1 442.7h1.4v1.4h-1.4zM488.1 432.8h1.4v1.4h-1.4zM478 429.9h1.4v1.4h-1.4zM453.3 454.3h1.4v1.4h-1.4zM587 400.2h1.4v1.4h-1.4zM560.6 353.3h1.4v1.4h-1.4zM578.1 382.7h1.4v1.4h-1.4zM506.8 403.9h1.4v1.4h-1.4zM464.3 457h1.4v1.4h-1.4zM552.2 386h1.4v1.4h-1.4zM444.5 446.6h1.4v1.4h-1.4zM476.6 429.9h1.4v1.4h-1.4zM504.1 404.9h1.4v1.4h-1.4zM431 457.9h1.4v1.4h-1.4zM546 429.1h1.4v1.4h-1.4zM489.6 433.4h1.4v1.4h-1.4zM472.1 455.1h1.4v1.4h-1.4zM484.6 430.6h1.4v1.4h-1.4zM509.1 437.7h1.4v1.4h-1.4zM506.4 424.7h1.4v1.4h-1.4zM546.8 377.1h1.4v1.4h-1.4zM530.5 385.3h1.4v1.4h-1.4zM462 438h1.4v1.4h-1.4zM554.2 416.2h1.4v1.4h-1.4zM542.9 367.7h1.4v1.4h-1.4zM545.6 423.7h1.4v1.4h-1.4zM544.7 362.8h1.4v1.4h-1.4zM519.6 399.9h1.4v1.4h-1.4zM556.1 359.1h1.4v1.4h-1.4zM537.6 411.4h1.4v1.4h-1.4zM560.5 410.3h1.4v1.4h-1.4zM559.8 403.4h1.4v1.4h-1.4zM523.3 419.6h1.4v1.4h-1.4zM442.3 455.8h1.4v1.4h-1.4zM456.5 441h1.4v1.4h-1.4zM500.3 454.1h1.4v1.4h-1.4zM530.8 419.5h1.4v1.4h-1.4zM529.9 427.4h1.4v1.4h-1.4zM448.3 458.7h1.4v1.4h-1.4zM473.3 426h1.4v1.4h-1.4zM478.1 427.9h1.4v1.4h-1.4zM537.2 429.1h1.4v1.4h-1.4zM514.6 439.6h1.4v1.4h-1.4zM491.2 448.1h1.4v1.4h-1.4zM521.2 422.1h1.4v1.4h-1.4zM507.2 446.6h1.4v1.4h-1.4zM551.9 419.9h1.4v1.4h-1.4zM471.2 426.6h1.4v1.4h-1.4zM439.2 455.8h1.4v1.4h-1.4zM514.2 414.5h1.4v1.4h-1.4zM513.6 435.3h1.4v1.4h-1.4zM512.4 431.3h1.4v1.4h-1.4zM537.4 424.1h1.4v1.4h-1.4zM516.1 456.4h1.4v1.4h-1.4zM483.7 438.3h1.4v1.4h-1.4zM585.8 388.3h1.4v1.4h-1.4zM498.9 429.9h1.4v1.4h-1.4zM506.1 435.3h1.4v1.4h-1.4zM485.4 442.6h1.4v1.4h-1.4zM584 391.8h1.4v1.4h-1.4zM494.7 400.5h1.4v1.4h-1.4zM505.4 436.5h1.4v1.4h-1.4zM558.4 372h1.4v1.4h-1.4zM491.5 451h1.4v1.4h-1.4zM588.8 386.9h1.4v1.4h-1.4zM528.1 400.6h1.4v1.4h-1.4zM576.1 419.1h1.4v1.4h-1.4zM513.9 419.4h1.4v1.4h-1.4zM560.9 425.5h1.4v1.4h-1.4zM458.9 450.9h1.4v1.4h-1.4zM560.2 399.1h1.4v1.4h-1.4zM582.1 373.5h1.4v1.4h-1.4zM569.9 412.8h1.4v1.4h-1.4zM487.1 408.9h1.4v1.4h-1.4zM553.1 384h1.4v1.4h-1.4zM496.7 408.2h1.4v1.4h-1.4zM543.6 365.5h1.4v1.4h-1.4zM447.6 455.2h1.4v1.4h-1.4zM489.5 432.5h1.4v1.4h-1.4zM594.3 381.1h1.4v1.4h-1.4zM595.6 395h1.4v1.4h-1.4zM521.9 419.7h1.4v1.4h-1.4zM547 375.3h1.4v1.4h-1.4zM465.8 443.9h1.4v1.4h-1.4zM570.9 415h1.4v1.4h-1.4zM562.8 412.9h1.4v1.4h-1.4zM469 444.5h1.4v1.4h-1.4zM542.8 428.6h1.4v1.4h-1.4zM496.7 414.7h1.4v1.4h-1.4zM461.4 450h1.4v1.4h-1.4zM484.7 417h1.4v1.4h-1.4zM472.7 423.7h1.4v1.4h-1.4zM573.4 367.9h1.4v1.4h-1.4zM431.6 461.5h1.4v1.4h-1.4zM457.8 453h1.4v1.4h-1.4zM519.3 392.5h1.4v1.4h-1.4zM561.6 394.6h1.4v1.4h-1.4zM525.1 422.8h1.4v1.4h-1.4zM557.1 389.7h1.4v1.4h-1.4zM523.1 422.6h1.4v1.4h-1.4zM483.4 419.9h1.4v1.4h-1.4zM509.8 429.7h1.4v1.4h-1.4zM577 410h1.4v1.4h-1.4zM497.1 422.2h1.4v1.4h-1.4zM535.5 423.9h1.4v1.4h-1.4zM469.6 438.6h1.4v1.4h-1.4zM499.2 408.5h1.4v1.4h-1.4zM487.9 426.5h1.4v1.4h-1.4zM468.4 444.8h1.4v1.4h-1.4zM547.8 375h1.4v1.4h-1.4zM475.6 420.9h1.4v1.4h-1.4zM546.6 434h1.4v1.4h-1.4zM582.8 406.4h1.4v1.4h-1.4zM499.7 417.8h1.4v1.4h-1.4zM484.2 434.5h1.4v1.4h-1.4zM484 432.4h1.4v1.4h-1.4zM576.4 411.9h1.4v1.4h-1.4zM503.9 437.1h1.4v1.4h-1.4zM459.3 440.2h1.4v1.4h-1.4zM574.7 388.3h1.4v1.4h-1.4zM533.5 413.2h1.4v1.4h-1.4zM482.3 452.6h1.4v1.4h-1.4zM466.6 432h1.4v1.4h-1.4zM498.7 450.4h1.4v1.4h-1.4zM423.4 455.6h1.4v1.4h-1.4zM470.8 444.6h1.4v1.4h-1.4zM462.2 449.3h1.4v1.4h-1.4zM524.7 434h1.4v1.4h-1.4zM588.2 366.5h1.4v1.4h-1.4zM539.2 409.3h1.4v1.4h-1.4zM463.7 445.3h1.4v1.4h-1.4zM493.5 438.7h1.4v1.4h-1.4zM486.2 450.3h1.4v1.4h-1.4zM469.3 432.8h1.4v1.4h-1.4zM487.3 445.9h1.4v1.4h-1.4zM521.3 404.5h1.4v1.4h-1.4zM487.5 423.5h1.4v1.4h-1.4zM491.8 456.3h1.4v1.4h-1.4zM503.9 434.8h1.4v1.4h-1.4zM476.3 427h1.4v1.4h-1.4zM504.4 431.6h1.4v1.4h-1.4zM556.6 404h1.4v1.4h-1.4zM483.8 450.7h1.4v1.4h-1.4zM552.5 421.2h1.4v1.4h-1.4zM523.2 422.2h1.4v1.4h-1.4zM549.3 422.1h1.4v1.4h-1.4zM485.7 418.8h1.4v1.4h-1.4zM510.8 430.3h1.4v1.4h-1.4zM532.6 438.3h1.4v1.4h-1.4zM512.4 438.7h1.4v1.4h-1.4zM479.1 430.8h1.4v1.4h-1.4zM460.8 452h1.4v1.4h-1.4zM459.4 433.5h1.4v1.4h-1.4zM591.6 403.6h1.4v1.4h-1.4zM574.1 396.1h1.4v1.4h-1.4zM535.8 373.1h1.4v1.4h-1.4zM561.3 384h1.4v1.4h-1.4zM459.4 456.9h1.4v1.4h-1.4zM515 416.6h1.4v1.4h-1.4zM586.1 386.2h1.4v1.4h-1.4zM533.4 429.4h1.4v1.4h-1.4zM477.1 446.1h1.4v1.4h-1.4zM507.7 423.7h1.4v1.4h-1.4zM449.6 449.7h1.4v1.4h-1.4zM534.2 422.2h1.4v1.4h-1.4zM467.5 430.5h1.4v1.4h-1.4zM490.7 407h1.4v1.4h-1.4zM542.9 408.5h1.4v1.4h-1.4zM488.8 414.8h1.4v1.4h-1.4zM563.8 418.4h1.4v1.4h-1.4zM585 393.8h1.4v1.4h-1.4zM430.3 449.2h1.4v1.4h-1.4zM513.9 398.5h1.4v1.4h-1.4zM498.7 448.4h1.4v1.4h-1.4zM574 362.2h1.4v1.4h-1.4zM546.3 397.6h1.4v1.4h-1.4zM573.8 385.4h1.4v1.4h-1.4zM475.9 433h1.4v1.4h-1.4zM466.9 435.3h1.4v1.4h-1.4zM541.2 372.2h1.4v1.4h-1.4zM515.2 399.2h1.4v1.4h-1.4zM494.9 414.3h1.4v1.4h-1.4zM559.5 419.7h1.4v1.4h-1.4zM505.2 417.8h1.4v1.4h-1.4zM503.7 419.5h1.4v1.4h-1.4zM500.4 405.9h1.4v1.4h-1.4zM578.5 389.8h1.4v1.4h-1.4zM531.7 404.6h1.4v1.4h-1.4zM580.3 402.2h1.4v1.4h-1.4zM470.2 425.9h1.4v1.4h-1.4zM574.4 411.9h1.4v1.4h-1.4zM532.8 410.3h1.4v1.4h-1.4zM573.9 366.9h1.4v1.4h-1.4zM611.6 391.3h1.4v1.4h-1.4zM487.2 428.4h1.4v1.4h-1.4zM551.7 386.7h1.4v1.4h-1.4zM424.8 461.1h1.4v1.4h-1.4zM576.4 420.1h1.4v1.4h-1.4zM516.1 417.2h1.4v1.4h-1.4zM466.4 455.2h1.4v1.4h-1.4zM488.1 427.8h1.4v1.4h-1.4zM483.9 446.8h1.4v1.4h-1.4zM501.6 412.9h1.4v1.4h-1.4zM500.4 413.9h1.4v1.4h-1.4zM522.8 443.4h1.4v1.4h-1.4zM543.9 392.1h1.4v1.4h-1.4zM476.9 424.7h1.4v1.4h-1.4zM554.7 388.8h1.4v1.4h-1.4zM484.9 451h1.4v1.4h-1.4zM461.3 453.5h1.4v1.4h-1.4zM464.4 435.7h1.4v1.4h-1.4zM528.1 381.3h1.4v1.4h-1.4zM478.6 443h1.4v1.4h-1.4zM539.7 390.1h1.4v1.4h-1.4zM461.9 440.1h1.4v1.4h-1.4zM569.1 388.2h1.4v1.4h-1.4zM552.5 367.1h1.4v1.4h-1.4zM485.7 430.8h1.4v1.4h-1.4zM478.5 443.9h1.4v1.4h-1.4zM579.7 399.3h1.4v1.4h-1.4zM537.7 367.5h1.4v1.4h-1.4zM539.4 380.1h1.4v1.4h-1.4zM480.1 457.5h1.4v1.4h-1.4zM548 414.2h1.4v1.4h-1.4zM527.9 439.4h1.4v1.4h-1.4zM442.8 447.5h1.4v1.4h-1.4zM533.1 429.3h1.4v1.4h-1.4zM576.6 395.3h1.4v1.4h-1.4zM507 436.2h1.4v1.4h-1.4zM479.6 431.9h1.4v1.4h-1.4zM531.1 405h1.4v1.4h-1.4zM497.7 409.6h1.4v1.4h-1.4zM444.9 460.4h1.4v1.4h-1.4zM471.2 436.7h1.4v1.4h-1.4zM574.8 416.5h1.4v1.4h-1.4zM489.3 418.7h1.4v1.4h-1.4zM485.4 411.6h1.4v1.4h-1.4zM570.1 382.9h1.4v1.4h-1.4zM455 441.2h1.4v1.4h-1.4zM578.4 361.9h1.4v1.4h-1.4zM573.9 409.4h1.4v1.4h-1.4zM475.9 444h1.4v1.4h-1.4zM508.2 397.6h1.4v1.4h-1.4zM488.6 442.2h1.4v1.4h-1.4zM517.9 402.6h1.4v1.4h-1.4zM597.9 370.6h1.4v1.4h-1.4zM427.1 455.7h1.4v1.4h-1.4zM431.3 453.5h1.4v1.4h-1.4zM546.5 426.6h1.4v1.4h-1.4zM477 421.4h1.4v1.4h-1.4zM460 436.4h1.4v1.4h-1.4zM532.9 434.2h1.4v1.4h-1.4zM493.4 450.3h1.4v1.4h-1.4zM515.3 445.9h1.4v1.4h-1.4zM512.6 438.7h1.4v1.4h-1.4zM466.1 447.7h1.4v1.4h-1.4zM447.6 445.8h1.4v1.4h-1.4zM525.3 403.3h1.4v1.4h-1.4zM542.4 393.6h1.4v1.4h-1.4zM425.4 461.4h1.4v1.4h-1.4zM574.7 368.2h1.4v1.4h-1.4zM431.5 453.8h1.4v1.4h-1.4zM484.1 454.6h1.4v1.4h-1.4zM566.8 412.2h1.4v1.4h-1.4zM558.9 369h1.4v1.4h-1.4zM603.1 377.8h1.4v1.4h-1.4zM531.4 430.8h1.4v1.4h-1.4zM491.8 445.3h1.4v1.4h-1.4zM574 400.9h1.4v1.4h-1.4zM497.6 454.8h1.4v1.4h-1.4zM512.1 411.3h1.4v1.4h-1.4zM571.7 396h1.4v1.4h-1.4zM498.8 421.9h1.4v1.4h-1.4zM428.9 454.3h1.4v1.4h-1.4zM476.3 431.1h1.4v1.4h-1.4zM515 425.2h1.4v1.4h-1.4zM559.9 396.1h1.4v1.4h-1.4zM506.4 431.4h1.4v1.4h-1.4zM539.5 415.8h1.4v1.4h-1.4zM557.6 407.1h1.4v1.4h-1.4zM500.1 427.3h1.4v1.4h-1.4zM519.1 415.5h1.4v1.4h-1.4zM541.1 386h1.4v1.4h-1.4zM440 446.7h1.4v1.4h-1.4zM546.4 413.4h1.4v1.4h-1.4zM477.9 421.9h1.4v1.4h-1.4zM477.7 451.6h1.4v1.4h-1.4zM492.2 404h1.4v1.4h-1.4zM453.9 451.6h1.4v1.4h-1.4zM423.9 460.4h1.4v1.4h-1.4zM497.7 424.2h1.4v1.4h-1.4zM563.6 406.5h1.4v1.4h-1.4zM515 382h1.4v1.4h-1.4zM563.8 422.7h1.4v1.4h-1.4zM578.3 411.9h1.4v1.4h-1.4zM462.1 440.6h1.4v1.4h-1.4zM569.6 388.2h1.4v1.4h-1.4zM433.6 454.8h1.4v1.4h-1.4zM484.1 421.1h1.4v1.4h-1.4zM539.6 392.4h1.4v1.4h-1.4zM452.6 436h1.4v1.4h-1.4zM534.4 401.9h1.4v1.4h-1.4zM504.9 405h1.4v1.4h-1.4zM526.3 409.4h1.4v1.4h-1.4zM555 419h1.4v1.4h-1.4zM478.1 434.5h1.4v1.4h-1.4zM547.7 424.9h1.4v1.4h-1.4zM533.7 393.6h1.4v1.4h-1.4zM475.8 434.4h1.4v1.4h-1.4zM554.5 428.3h1.4v1.4h-1.4zM545.7 412.6h1.4v1.4h-1.4zM502.7 404.8h1.4v1.4h-1.4zM551.4 432.8h1.4v1.4h-1.4zM508.8 414.3h1.4v1.4h-1.4zM535.1 407.6h1.4v1.4h-1.4zM484.3 434.8h1.4v1.4h-1.4zM480.6 441.8h1.4v1.4h-1.4zM476.2 428.3h1.4v1.4h-1.4zM434 452.8h1.4v1.4h-1.4zM477.6 423.5h1.4v1.4h-1.4zM543 372.2h1.4v1.4h-1.4zM537.5 385h1.4v1.4h-1.4zM486.6 454.1h1.4v1.4h-1.4zM500.8 438.5h1.4v1.4h-1.4zM472.1 448h1.4v1.4h-1.4zM472.9 448.6h1.4v1.4h-1.4zM505.6 427.8h1.4v1.4h-1.4zM466.9 453h1.4v1.4h-1.4zM529.4 385.1h1.4v1.4h-1.4zM562.5 413.1h1.4v1.4h-1.4zM513.1 385.1h1.4v1.4h-1.4zM431.9 455.5h1.4v1.4h-1.4zM517.9 438.6h1.4v1.4h-1.4zM486.6 410.4h1.4v1.4h-1.4zM461.4 440.4h1.4v1.4h-1.4zM472.8 431.6h1.4v1.4h-1.4zM459.2 443h1.4v1.4h-1.4zM462.6 453.9h1.4v1.4h-1.4zM587.5 380.6h1.4v1.4h-1.4zM528.3 419.3h1.4v1.4h-1.4zM443.1 448.5h1.4v1.4h-1.4zM568 403.4h1.4v1.4h-1.4zM533.7 432.6h1.4v1.4h-1.4zM501.7 406.2h1.4v1.4h-1.4zM525.9 424.5h1.4v1.4h-1.4zM576.1 392.3h1.4v1.4h-1.4zM472.1 447.1h1.4v1.4h-1.4zM513.5 425.9h1.4v1.4h-1.4zM501.8 418.1h1.4v1.4h-1.4zM490.1 436.1h1.4v1.4h-1.4zM540.3 426.3h1.4v1.4h-1.4zM458 446.2h1.4v1.4h-1.4zM501.7 409.6h1.4v1.4h-1.4zM435.3 455.2h1.4v1.4h-1.4zM481.4 434.3h1.4v1.4h-1.4zM494.5 443.6h1.4v1.4h-1.4zM492.1 453.1h1.4v1.4h-1.4zM532.1 437.7h1.4v1.4h-1.4zM508.7 408.7h1.4v1.4h-1.4zM582.9 365.7h1.4v1.4h-1.4zM467 446.3h1.4v1.4h-1.4zM594.1 369.6h1.4v1.4h-1.4zM517.6 435h1.4v1.4h-1.4zM551.5 422.8h1.4v1.4h-1.4zM518.2 409.9h1.4v1.4h-1.4zM432 455.2h1.4v1.4h-1.4zM504.6 399.6h1.4v1.4h-1.4zM563.8 420.4h1.4v1.4h-1.4zM487.8 422h1.4v1.4h-1.4zM526.7 428.2h1.4v1.4h-1.4zM507.5 399.9h1.4v1.4h-1.4zM521.9 431h1.4v1.4h-1.4zM527.4 440.2h1.4v1.4h-1.4zM541.7 408.3h1.4v1.4h-1.4zM585.1 387.7h1.4v1.4h-1.4zM500 429h1.4v1.4h-1.4zM526.7 396.4h1.4v1.4h-1.4zM503.4 422.5h1.4v1.4h-1.4zM458.2 457.8h1.4v1.4h-1.4zM486.2 425.5h1.4v1.4h-1.4zM479.5 442.1h1.4v1.4h-1.4zM507.7 418.7h1.4v1.4h-1.4zM529.1 379.1h1.4v1.4h-1.4zM507.1 422.9h1.4v1.4h-1.4zM530.4 422.7h1.4v1.4h-1.4zM522.8 418.4h1.4v1.4h-1.4zM522.6 438h1.4v1.4h-1.4zM450 452.8h1.4v1.4h-1.4zM534.1 364.1h1.4v1.4h-1.4zM456.7 442.9h1.4v1.4h-1.4zM547.2 391.6h1.4v1.4h-1.4zM464.3 436h1.4v1.4h-1.4zM475.7 440.4h1.4v1.4h-1.4zM455.5 453.7h1.4v1.4h-1.4zM467.1 437.8h1.4v1.4h-1.4zM521.1 404.4h1.4v1.4h-1.4zM564.9 423.1h1.4v1.4h-1.4zM500 407.2h1.4v1.4h-1.4zM480.4 443.1h1.4v1.4h-1.4zM536.1 416.6h1.4v1.4h-1.4zM484.3 433.8h1.4v1.4h-1.4zM507.1 416.8h1.4v1.4h-1.4zM532.2 384.5h1.4v1.4h-1.4zM609.8 390.9h1.4v1.4h-1.4zM495.9 409h1.4v1.4h-1.4zM548.6 432h1.4v1.4h-1.4zM517.6 413h1.4v1.4h-1.4zM545.1 381.4h1.4v1.4h-1.4zM551.7 406.8h1.4v1.4h-1.4zM514.3 438.3h1.4v1.4h-1.4zM456.5 451h1.4v1.4h-1.4zM435.4 453.9h1.4v1.4h-1.4zM483.5 424.5h1.4v1.4h-1.4zM523.8 411.1h1.4v1.4h-1.4zM512.9 400.9h1.4v1.4h-1.4zM516.9 405.8h1.4v1.4h-1.4zM483.8 458.7h1.4v1.4h-1.4zM520.5 380.8h1.4v1.4h-1.4zM578.8 381.8h1.4v1.4h-1.4zM540.6 392.3h1.4v1.4h-1.4zM543.2 393.8h1.4v1.4h-1.4zM500 414.6h1.4v1.4h-1.4zM492.1 431.9h1.4v1.4h-1.4zM562.3 416.6h1.4v1.4h-1.4zM500 401.4h1.4v1.4h-1.4zM516.2 418.5h1.4v1.4h-1.4zM482.4 421.3h1.4v1.4h-1.4zM458.4 431.2h1.4v1.4h-1.4zM456.7 450.4h1.4v1.4h-1.4zM568.4 355.1h1.4v1.4h-1.4zM526.3 404.6h1.4v1.4h-1.4zM489.2 452.4h1.4v1.4h-1.4zM536.2 408.7h1.4v1.4h-1.4zM514.6 431.7h1.4v1.4h-1.4zM581.4 400.5h1.4v1.4h-1.4zM502 410.2h1.4v1.4h-1.4zM544.4 368.5h1.4v1.4h-1.4zM498.1 431.4h1.4v1.4h-1.4zM485.4 418.1h1.4v1.4h-1.4zM566.4 423.6h1.4v1.4h-1.4zM443.7 448.7h1.4v1.4h-1.4zM512.8 393.1h1.4v1.4h-1.4zM528.2 384.4h1.4v1.4h-1.4zM548.6 372.6h1.4v1.4h-1.4zM471.3 453.4h1.4v1.4h-1.4zM528.5 398.4h1.4v1.4h-1.4zM479.5 452.6h1.4v1.4h-1.4zM581.1 399.4h1.4v1.4h-1.4zM477.3 421.4h1.4v1.4h-1.4zM515.2 449.9h1.4v1.4h-1.4zM511.9 407.2h1.4v1.4h-1.4zM499.1 417.2h1.4v1.4h-1.4zM436.3 445.9h1.4v1.4h-1.4zM568.2 421.8h1.4v1.4h-1.4zM589.6 378.9h1.4v1.4h-1.4zM523 406.9h1.4v1.4h-1.4zM510.6 440.9h1.4v1.4h-1.4zM530.5 403.7h1.4v1.4h-1.4zM587.6 382.6h1.4v1.4h-1.4zM535.7 380.7h1.4v1.4h-1.4zM485.7 427.3h1.4v1.4h-1.4zM509.6 429.8h1.4v1.4h-1.4zM465.2 459.8h1.4v1.4h-1.4zM539.6 393.2h1.4v1.4h-1.4zM488 442.7h1.4v1.4h-1.4zM481.7 443.3h1.4v1.4h-1.4zM457.7 444.3h1.4v1.4h-1.4zM538.1 414.2h1.4v1.4h-1.4zM504.7 434.6h1.4v1.4h-1.4zM588.5 384h1.4v1.4h-1.4zM541.3 394h1.4v1.4h-1.4zM469.1 427.9h1.4v1.4h-1.4zM470.9 436.3h1.4v1.4h-1.4zM491.4 405.5h1.4v1.4h-1.4zM486.7 416.6h1.4v1.4h-1.4zM507.7 449.8h1.4v1.4h-1.4zM510.1 426.2h1.4v1.4h-1.4zM576.5 389.8h1.4v1.4h-1.4zM549.1 416.5h1.4v1.4h-1.4zM560.6 419.8h1.4v1.4h-1.4zM476.9 454.8h1.4v1.4h-1.4zM471.9 434.1h1.4v1.4h-1.4zM455.1 443.5h1.4v1.4h-1.4zM514.5 420.7h1.4v1.4h-1.4zM532.6 419.3h1.4v1.4h-1.4zM535.2 390.6h1.4v1.4h-1.4zM501.9 407.9h1.4v1.4h-1.4zM574.3 389.5h1.4v1.4h-1.4zM575.2 379.4h1.4v1.4h-1.4zM505.7 422.8h1.4v1.4h-1.4zM472 442.7h1.4v1.4h-1.4zM543.4 398.5h1.4v1.4h-1.4zM519.6 444.4h1.4v1.4h-1.4zM490.7 424.7h1.4v1.4h-1.4zM482.4 421h1.4v1.4h-1.4zM498.4 422.6h1.4v1.4h-1.4zM499.4 397.2h1.4v1.4h-1.4zM465.1 437.3h1.4v1.4h-1.4zM548.7 378.3h1.4v1.4h-1.4zM517.8 430.3h1.4v1.4h-1.4zM462.8 440.7h1.4v1.4h-1.4zM526.6 402h1.4v1.4h-1.4zM459.8 432.5h1.4v1.4h-1.4zM454 458.9h1.4v1.4h-1.4zM477.1 429.6h1.4v1.4h-1.4zM518 413.7h1.4v1.4h-1.4zM607.4 383.9h1.4v1.4h-1.4zM543.3 386.8h1.4v1.4h-1.4zM542.7 419.4h1.4v1.4h-1.4zM529.6 424.4h1.4v1.4h-1.4zM590.8 380.5h1.4v1.4h-1.4zM464.2 454.5h1.4v1.4h-1.4zM516.1 442.9h1.4v1.4h-1.4zM521.4 427.2h1.4v1.4h-1.4zM461.7 453.1h1.4v1.4h-1.4zM480.1 442.4h1.4v1.4h-1.4zM583 404.7h1.4v1.4h-1.4zM507.1 416.3h1.4v1.4h-1.4zM584.6 367.2h1.4v1.4h-1.4zM586.9 371.6h1.4v1.4h-1.4zM543 372.6h1.4v1.4h-1.4zM557.2 387.8h1.4v1.4h-1.4zM466.5 448.1h1.4v1.4h-1.4zM536.7 389h1.4v1.4h-1.4zM528.5 429.1h1.4v1.4h-1.4zM439.3 444.9h1.4v1.4h-1.4zM529.3 372.1h1.4v1.4h-1.4zM453.2 458.4h1.4v1.4h-1.4zM509.7 432h1.4v1.4h-1.4zM497.4 414.6h1.4v1.4h-1.4zM510.8 390.9h1.4v1.4h-1.4zM476.1 440.9h1.4v1.4h-1.4zM494.4 437.7h1.4v1.4h-1.4zM616.9 367.6h1.4v1.4h-1.4zM536.5 394.9h1.4v1.4h-1.4zM518.6 435h1.4v1.4h-1.4zM488.1 425.2h1.4v1.4h-1.4zM447.2 441.2h1.4v1.4h-1.4zM522.1 405.4h1.4v1.4h-1.4zM462.2 439.5h1.4v1.4h-1.4zM518 415.8h1.4v1.4h-1.4zM475.8 459.2h1.4v1.4h-1.4zM544.5 408.4h1.4v1.4h-1.4zM541.1 393.3h1.4v1.4h-1.4zM494.4 414h1.4v1.4h-1.4zM445 457.3h1.4v1.4h-1.4zM473.5 435.3h1.4v1.4h-1.4zM481.4 449.6h1.4v1.4h-1.4zM573.6 402.2h1.4v1.4h-1.4zM476.2 433.5h1.4v1.4h-1.4zM446.8 448.3h1.4v1.4h-1.4zM441.7 444.4h1.4v1.4h-1.4zM574.8 395.6h1.4v1.4h-1.4zM543.3 395.3h1.4v1.4h-1.4zM565.5 361h1.4v1.4h-1.4zM489.1 414.9h1.4v1.4h-1.4zM514.8 438h1.4v1.4h-1.4zM472.1 426.9h1.4v1.4h-1.4zM553 385.1h1.4v1.4h-1.4zM583.8 386.1h1.4v1.4h-1.4zM516.5 441.8h1.4v1.4h-1.4zM542.5 427.7h1.4v1.4h-1.4zM547.3 408h1.4v1.4h-1.4zM484.5 423.7h1.4v1.4h-1.4zM542.5 399.6h1.4v1.4h-1.4zM521.3 383.6h1.4v1.4h-1.4zM477.6 441.4h1.4v1.4h-1.4zM495.5 406.9h1.4v1.4h-1.4zM561.4 395.6h1.4v1.4h-1.4zM513.8 433.1h1.4v1.4h-1.4zM497.7 428.3h1.4v1.4h-1.4zM597 384.8h1.4v1.4h-1.4zM426.2 449.9h1.4v1.4h-1.4zM516.7 408.7h1.4v1.4h-1.4zM560 423.7h1.4v1.4h-1.4zM556.2 369.6h1.4v1.4h-1.4zM513.8 422.9h1.4v1.4h-1.4zM542.9 425.6h1.4v1.4h-1.4zM468 430.5h1.4v1.4h-1.4zM498.6 439.6h1.4v1.4h-1.4zM535.2 421h1.4v1.4h-1.4zM542.4 378.6h1.4v1.4h-1.4zM489.8 442.8h1.4v1.4h-1.4zM540.5 415.4h1.4v1.4h-1.4zM501.3 451.6h1.4v1.4h-1.4zM524 384.2h1.4v1.4h-1.4zM487.2 416.8h1.4v1.4h-1.4zM538.8 406h1.4v1.4h-1.4zM464.6 449h1.4v1.4h-1.4zM529.8 385.1h1.4v1.4h-1.4zM456.6 434h1.4v1.4h-1.4zM467.6 449h1.4v1.4h-1.4zM446.7 459.2h1.4v1.4h-1.4zM548.2 411.4h1.4v1.4h-1.4zM518.8 415.2h1.4v1.4h-1.4zM548.6 372.2h1.4v1.4h-1.4zM495 415.8h1.4v1.4h-1.4zM464.1 431.7h1.4v1.4h-1.4zM582.5 415.5h1.4v1.4h-1.4zM550.1 372.7h1.4v1.4h-1.4zM523.4 425.3h1.4v1.4h-1.4zM581.5 383h1.4v1.4h-1.4zM572.4 413.3h1.4v1.4h-1.4zM516.8 409h1.4v1.4h-1.4zM533.2 396.2h1.4v1.4h-1.4zM485.8 440.9h1.4v1.4h-1.4zM533.4 387.6h1.4v1.4h-1.4zM530.7 429.4h1.4v1.4h-1.4zM566 415.3h1.4v1.4h-1.4zM488.6 449.3h1.4v1.4h-1.4zM439.2 443.5h1.4v1.4h-1.4zM558.4 375.4h1.4v1.4h-1.4zM528.7 417.5h1.4v1.4h-1.4zM499.6 401.4h1.4v1.4h-1.4zM578.9 347.6h1.4v1.4h-1.4zM522.9 438.6h1.4v1.4h-1.4zM541.7 423.9h1.4v1.4h-1.4zM497.3 433.8h1.4v1.4h-1.4zM593.8 400h1.4v1.4h-1.4zM515.2 435.8h1.4v1.4h-1.4zM542.7 400.4h1.4v1.4h-1.4zM468.6 435.4h1.4v1.4h-1.4zM500.9 414.3h1.4v1.4h-1.4zM455.9 447.7h1.4v1.4h-1.4zM504.5 417.1h1.4v1.4h-1.4zM489.6 418.7h1.4v1.4h-1.4zM497 399.9h1.4v1.4h-1.4zM497 448.5h1.4v1.4h-1.4zM495 433.8h1.4v1.4h-1.4zM522.5 408h1.4v1.4h-1.4zM462.4 443.6h1.4v1.4h-1.4zM590.7 409.5h1.4v1.4h-1.4zM607.2 391.6h1.4v1.4h-1.4zM479.3 445.6h1.4v1.4h-1.4zM446.2 453.4h1.4v1.4h-1.4zM596.1 404.8h1.4v1.4h-1.4zM528.7 371.9h1.4v1.4h-1.4zM537.8 378.3h1.4v1.4h-1.4zM479.6 430.8h1.4v1.4h-1.4zM524.1 407.2h1.4v1.4h-1.4zM552.1 419.8h1.4v1.4h-1.4zM452.8 438.4h1.4v1.4h-1.4zM491.4 439h1.4v1.4h-1.4zM552.7 408.4h1.4v1.4h-1.4zM544.9 399.9h1.4v1.4h-1.4zM506.2 443.1h1.4v1.4h-1.4zM485.6 451h1.4v1.4h-1.4zM511.3 408.1h1.4v1.4h-1.4zM503.3 437h1.4v1.4h-1.4zM517.8 408.3h1.4v1.4h-1.4zM549.7 383.6h1.4v1.4h-1.4zM564.3 381.8h1.4v1.4h-1.4zM527.4 391.7h1.4v1.4h-1.4zM502.3 410.8h1.4v1.4h-1.4zM531.2 421.5h1.4v1.4h-1.4zM532.6 437.4h1.4v1.4h-1.4zM482.7 425.5h1.4v1.4h-1.4zM508.2 415.8h1.4v1.4h-1.4zM536.7 410.1h1.4v1.4h-1.4zM548.7 392.3h1.4v1.4h-1.4zM597.4 397h1.4v1.4h-1.4zM564.5 415.6h1.4v1.4h-1.4zM482.4 448.7h1.4v1.4h-1.4zM533.6 369.1h1.4v1.4h-1.4zM529.4 389.2h1.4v1.4h-1.4zM521.7 416.7h1.4v1.4h-1.4zM500.9 441.3h1.4v1.4h-1.4zM525.1 407.3h1.4v1.4h-1.4zM531.9 408.4h1.4v1.4h-1.4zM427.3 457.5h1.4v1.4h-1.4zM514.8 448.1h1.4v1.4h-1.4zM570.9 416.7h1.4v1.4h-1.4zM433.1 448.9h1.4v1.4h-1.4zM518.9 396h1.4v1.4h-1.4zM504.7 436.8h1.4v1.4h-1.4zM586.4 368.3h1.4v1.4h-1.4zM525.1 423.4h1.4v1.4h-1.4zM579.7 386.6h1.4v1.4h-1.4zM457.5 441.9h1.4v1.4h-1.4zM546.1 381.8h1.4v1.4h-1.4zM447.1 446.6h1.4v1.4h-1.4zM516 412.4h1.4v1.4h-1.4zM487.7 409.7h1.4v1.4h-1.4zM529.9 391.3h1.4v1.4h-1.4zM477.4 451.8h1.4v1.4h-1.4zM438.1 461.5h1.4v1.4h-1.4zM437.9 461.4h1.4v1.4h-1.4zM562.6 366.8h1.4v1.4h-1.4zM464.5 435.6h1.4v1.4h-1.4zM587.3 380.7h1.4v1.4h-1.4zM459.5 440.9h1.4v1.4h-1.4zM456.2 451.5h1.4v1.4h-1.4zM572.8 384.4h1.4v1.4h-1.4zM501.4 427.1h1.4v1.4h-1.4zM533.5 411.7h1.4v1.4h-1.4zM493.4 422.9h1.4v1.4h-1.4zM519.5 382.6h1.4v1.4h-1.4zM557.9 423.3h1.4v1.4h-1.4zM481.7 437.9h1.4v1.4h-1.4zM446.2 439.9h1.4v1.4h-1.4zM535.5 406.7h1.4v1.4h-1.4zM558.2 420.1h1.4v1.4h-1.4zM457.6 435.2h1.4v1.4h-1.4zM451 443.7h1.4v1.4h-1.4zM435.7 452.8h1.4v1.4h-1.4zM456.7 450.8h1.4v1.4h-1.4zM538.6 422.6h1.4v1.4h-1.4zM531.7 381.9h1.4v1.4h-1.4zM527.7 375.5h1.4v1.4h-1.4zM495.9 409.8h1.4v1.4h-1.4zM468.7 439.5h1.4v1.4h-1.4zM471.2 422.2h1.4v1.4h-1.4zM541 370h1.4v1.4h-1.4zM470.6 437.4h1.4v1.4h-1.4zM579 406.5h1.4v1.4h-1.4zM486.3 443.4h1.4v1.4h-1.4zM450.2 461.9h1.4v1.4h-1.4zM456.1 440.6h1.4v1.4h-1.4zM481.9 431.5h1.4v1.4h-1.4zM462.5 431.6h1.4v1.4h-1.4zM561.2 404.8h1.4v1.4h-1.4zM519.8 424.3h1.4v1.4h-1.4zM581.6 413.1h1.4v1.4h-1.4zM549.5 411.1h1.4v1.4h-1.4zM445.8 450.6h1.4v1.4h-1.4zM551.1 415.6h1.4v1.4h-1.4zM436 447.5h1.4v1.4h-1.4zM445.2 460.3h1.4v1.4h-1.4zM442.6 455.2h1.4v1.4h-1.4zM441.8 460.5h1.4v1.4h-1.4zM509.8 433.2h1.4v1.4h-1.4zM590.5 389.6h1.4v1.4h-1.4zM524.4 428.6h1.4v1.4h-1.4zM455.1 437.1h1.4v1.4h-1.4zM536.8 381.3h1.4v1.4h-1.4zM594.6 391.7h1.4v1.4h-1.4zM509.2 425.3h1.4v1.4h-1.4zM544.5 426.4h1.4v1.4h-1.4zM497.1 426h1.4v1.4h-1.4zM599.3 377.5h1.4v1.4h-1.4zM531.7 427.4h1.4v1.4h-1.4zM434.5 447.3h1.4v1.4h-1.4zM472.4 433.2h1.4v1.4h-1.4zM499.7 431h1.4v1.4h-1.4zM543.5 406.2h1.4v1.4h-1.4zM453.8 441.8h1.4v1.4h-1.4zM502.4 440.4h1.4v1.4h-1.4zM477.6 432.8h1.4v1.4h-1.4zM424 454.1h1.4v1.4h-1.4zM477.7 440.5h1.4v1.4h-1.4zM484.7 431.7h1.4v1.4h-1.4zM582.2 412.9h1.4v1.4h-1.4zM542.9 390.4h1.4v1.4h-1.4zM567 371.7h1.4v1.4h-1.4zM507.4 445.7h1.4v1.4h-1.4zM531.9 387.3h1.4v1.4h-1.4zM522.6 379.5h1.4v1.4h-1.4zM490.7 422.9h1.4v1.4h-1.4zM504.6 429.2h1.4v1.4h-1.4zM476.4 450.6h1.4v1.4h-1.4zM578.9 382.5h1.4v1.4h-1.4zM429.7 447.9h1.4v1.4h-1.4zM521.1 442.5h1.4v1.4h-1.4zM567.2 397.5h1.4v1.4h-1.4zM508.6 407.8h1.4v1.4h-1.4zM514.4 426.3h1.4v1.4h-1.4zM425.5 456h1.4v1.4h-1.4zM469.3 427.9h1.4v1.4h-1.4zM443.2 452.9h1.4v1.4h-1.4zM498.3 416.1h1.4v1.4h-1.4zM520.2 386.1h1.4v1.4h-1.4zM503.2 402.2h1.4v1.4h-1.4zM583.2 367.9h1.4v1.4h-1.4zM527.4 427.3h1.4v1.4h-1.4zM591 404.3h1.4v1.4h-1.4zM561 355.2h1.4v1.4h-1.4zM418 462.8h1.4v1.4h-1.4zM463.7 443.3h1.4v1.4h-1.4zM438.7 444.4h1.4v1.4h-1.4zM573 390.2h1.4v1.4h-1.4zM461.6 453.1h1.4v1.4h-1.4zM480.8 438.9h1.4v1.4h-1.4zM453.9 441.6h1.4v1.4h-1.4zM493.1 443.3h1.4v1.4h-1.4zM484.4 449.7h1.4v1.4h-1.4zM511.2 388.3h1.4v1.4h-1.4zM527 435.6h1.4v1.4h-1.4zM590.7 382.4h1.4v1.4h-1.4zM583.7 397.1h1.4v1.4h-1.4zM474.9 446.9h1.4v1.4h-1.4zM522.3 414.7h1.4v1.4h-1.4zM480.7 454.7h1.4v1.4h-1.4zM548.5 377.9h1.4v1.4h-1.4zM533.9 403.5h1.4v1.4h-1.4zM470.3 439.4h1.4v1.4h-1.4zM538.9 411.6h1.4v1.4h-1.4zM557.1 385.3h1.4v1.4h-1.4zM489 435.9h1.4v1.4h-1.4zM566 369.6h1.4v1.4h-1.4zM577.5 373.4h1.4v1.4h-1.4zM531.8 403.5h1.4v1.4h-1.4zM443.6 446.7h1.4v1.4h-1.4zM564 406.8h1.4v1.4h-1.4zM559.1 401.6h1.4v1.4h-1.4zM449.3 452.3h1.4v1.4h-1.4zM584.5 409.4h1.4v1.4h-1.4zM549.9 420.6h1.4v1.4h-1.4zM454.3 449.2h1.4v1.4h-1.4zM550.5 358h1.4v1.4h-1.4zM498.7 409.6h1.4v1.4h-1.4zM505.8 392.8h1.4v1.4h-1.4zM546.5 415.7h1.4v1.4h-1.4zM501.7 409.3h1.4v1.4h-1.4zM464.6 450.1h1.4v1.4h-1.4zM597 384h1.4v1.4h-1.4zM522.8 381.3h1.4v1.4h-1.4zM522.4 449.8h1.4v1.4h-1.4zM582.4 395.2h1.4v1.4h-1.4zM554.1 384.9h1.4v1.4h-1.4zM490.4 407.2h1.4v1.4h-1.4zM580.5 371.8h1.4v1.4h-1.4zM522.5 428.3h1.4v1.4h-1.4zM444.9 461h1.4v1.4h-1.4zM509.2 396.1h1.4v1.4h-1.4zM600.5 392.9h1.4v1.4h-1.4zM512.4 413.2h1.4v1.4h-1.4zM416.3 458.9h1.4v1.4h-1.4zM521.9 412.2h1.4v1.4h-1.4zM522.7 396.3h1.4v1.4h-1.4zM511.6 449.3h1.4v1.4h-1.4zM540.6 420.6h1.4v1.4h-1.4zM530.1 439.5h1.4v1.4h-1.4zM588 405.6h1.4v1.4h-1.4zM473.7 458.2h1.4v1.4h-1.4zM479.2 456.9h1.4v1.4h-1.4zM519.6 385.2h1.4v1.4h-1.4zM445.1 440.9h1.4v1.4h-1.4zM459.5 440.8h1.4v1.4h-1.4zM547.9 369.3h1.4v1.4h-1.4zM451.8 450.8h1.4v1.4h-1.4zM590.3 347.4h1.4v1.4h-1.4zM480.6 430.8h1.4v1.4h-1.4zM580.7 393.8h1.4v1.4h-1.4zM569.7 386h1.4v1.4h-1.4zM509.5 403.1h1.4v1.4h-1.4zM504.6 418.6h1.4v1.4h-1.4zM498.7 437.9h1.4v1.4h-1.4zM461.5 460.7h1.4v1.4h-1.4zM543 382.3h1.4v1.4h-1.4zM471.5 423.7h1.4v1.4h-1.4zM586.1 381.4h1.4v1.4h-1.4zM511.6 393.8h1.4v1.4h-1.4zM498.2 436.7h1.4v1.4h-1.4zM458.5 456.3h1.4v1.4h-1.4zM502.5 410.8h1.4v1.4h-1.4zM583.6 381.1h1.4v1.4h-1.4zM487.7 430.5h1.4v1.4h-1.4zM560.5 422.5h1.4v1.4h-1.4zM476.3 430.6h1.4v1.4h-1.4zM488.8 415.5h1.4v1.4h-1.4zM538.5 375.5h1.4v1.4h-1.4zM544.6 382.4h1.4v1.4h-1.4zM535.3 398.4h1.4v1.4h-1.4zM496.3 417.6h1.4v1.4h-1.4zM479.3 439.4h1.4v1.4h-1.4zM562.3 410.2h1.4v1.4h-1.4zM492.9 449.1h1.4v1.4h-1.4zM505.3 425.3h1.4v1.4h-1.4zM549.9 412.7h1.4v1.4h-1.4zM469.2 450.3h1.4v1.4h-1.4zM478.2 445.5h1.4v1.4h-1.4zM576.8 383.4h1.4v1.4h-1.4zM469.1 425.3h1.4v1.4h-1.4zM475 435.9h1.4v1.4h-1.4zM516.5 440.2h1.4v1.4h-1.4zM524.2 426.9h1.4v1.4h-1.4zM534.3 366.8h1.4v1.4h-1.4zM515.3 408.8h1.4v1.4h-1.4zM487.5 442.8h1.4v1.4h-1.4zM546.1 387.1h1.4v1.4h-1.4zM514 432.4h1.4v1.4h-1.4zM523.1 444.3h1.4v1.4h-1.4zM528 418.7h1.4v1.4h-1.4zM475.6 432.9h1.4v1.4h-1.4zM458.8 440.8h1.4v1.4h-1.4zM488.4 452.7h1.4v1.4h-1.4zM581.5 388h1.4v1.4h-1.4zM475.1 442h1.4v1.4h-1.4zM459 461h1.4v1.4h-1.4zM533.3 391h1.4v1.4h-1.4zM494.4 430.9h1.4v1.4h-1.4zM447.6 445.3h1.4v1.4h-1.4zM449.6 452.4h1.4v1.4h-1.4zM523.4 410.4h1.4v1.4h-1.4zM477.3 431.6h1.4v1.4h-1.4zM575.4 403.4h1.4v1.4h-1.4zM515.3 400.1h1.4v1.4h-1.4zM514.5 390.3h1.4v1.4h-1.4zM528.7 445.8h1.4v1.4h-1.4zM489 441.9h1.4v1.4h-1.4zM465.7 448.7h1.4v1.4h-1.4zM512.5 393.9h1.4v1.4h-1.4zM577.2 372.2h1.4v1.4h-1.4zM567.8 363.7h1.4v1.4h-1.4zM544.2 378.7h1.4v1.4h-1.4zM525.3 413.6h1.4v1.4h-1.4zM549.2 410.6h1.4v1.4h-1.4zM507.4 426h1.4v1.4h-1.4zM547.1 400.6h1.4v1.4h-1.4zM461.5 435.3h1.4v1.4h-1.4zM575.2 389h1.4v1.4h-1.4zM459 451.3h1.4v1.4h-1.4zM442.1 446.2h1.4v1.4h-1.4zM485.6 435.7h1.4v1.4h-1.4zM530.8 441.6h1.4v1.4h-1.4zM459.3 440.3h1.4v1.4h-1.4zM533.7 415.6h1.4v1.4h-1.4zM531.4 396.9h1.4v1.4h-1.4zM524.3 403h1.4v1.4h-1.4zM557.7 365.7h1.4v1.4h-1.4zM479.4 451.7h1.4v1.4h-1.4zM519.3 449.2h1.4v1.4h-1.4zM489.5 412.8h1.4v1.4h-1.4zM517.7 425.9h1.4v1.4h-1.4zM577.7 407.6h1.4v1.4h-1.4zM504.5 421.2h1.4v1.4h-1.4zM450.5 446.9h1.4v1.4h-1.4zM589 384.3h1.4v1.4h-1.4zM484.5 424.3h1.4v1.4h-1.4zM500.6 438.9h1.4v1.4h-1.4zM484.4 459.1h1.4v1.4h-1.4zM511.7 422.9h1.4v1.4h-1.4zM557 386.8h1.4v1.4h-1.4zM530.4 396.9h1.4v1.4h-1.4zM518.9 437.9h1.4v1.4h-1.4zM466 429.4h1.4v1.4h-1.4zM563 392.1h1.4v1.4h-1.4zM544.3 394.2h1.4v1.4h-1.4zM485.9 432h1.4v1.4h-1.4zM527.9 422.9h1.4v1.4h-1.4zM529.8 421.1h1.4v1.4h-1.4zM574.1 410.9h1.4v1.4h-1.4zM578.4 385.6h1.4v1.4h-1.4zM569.7 398h1.4v1.4h-1.4zM516.9 436h1.4v1.4h-1.4zM538.1 424.6h1.4v1.4h-1.4zM551.8 390.7h1.4v1.4h-1.4zM533.6 363.2h1.4v1.4h-1.4zM524.2 394.9h1.4v1.4h-1.4zM545.4 418.3h1.4v1.4h-1.4zM537.8 438.8h1.4v1.4h-1.4zM521.4 389.1h1.4v1.4h-1.4zM579.1 406h1.4v1.4h-1.4zM548.4 403.2h1.4v1.4h-1.4zM508.1 430.4h1.4v1.4h-1.4zM521.7 404.6h1.4v1.4h-1.4zM577.3 363.9h1.4v1.4h-1.4zM524.4 431.6h1.4v1.4h-1.4zM450.9 440h1.4v1.4h-1.4zM554.9 412.6h1.4v1.4h-1.4zM531.1 393h1.4v1.4h-1.4zM609 384.4h1.4v1.4h-1.4zM478.8 431.2h1.4v1.4h-1.4zM504.1 393.4h1.4v1.4h-1.4zM513.5 436h1.4v1.4h-1.4zM538.4 424h1.4v1.4h-1.4zM507.3 396.1h1.4v1.4h-1.4zM477 448h1.4v1.4h-1.4zM492.3 435.8h1.4v1.4h-1.4zM543.4 432.1h1.4v1.4h-1.4zM551 417h1.4v1.4h-1.4zM504.7 400.1h1.4v1.4h-1.4zM498.8 445.4h1.4v1.4h-1.4zM543.2 391.7h1.4v1.4h-1.4zM558 394.4h1.4v1.4h-1.4zM453.2 455.7h1.4v1.4h-1.4zM569.3 413.6h1.4v1.4h-1.4zM540.3 427.6h1.4v1.4h-1.4zM485.1 451.6h1.4v1.4h-1.4zM548.6 406.6h1.4v1.4h-1.4zM478.6 434.4h1.4v1.4h-1.4zM480.3 423.1h1.4v1.4h-1.4zM457.5 445.4h1.4v1.4h-1.4zM461.3 452.8h1.4v1.4h-1.4zM543.8 400.7h1.4v1.4h-1.4zM598.9 402.3h1.4v1.4h-1.4zM537.4 440.2h1.4v1.4h-1.4zM577.8 390.3h1.4v1.4h-1.4zM530.4 438.8h1.4v1.4h-1.4zM448.1 450.8h1.4v1.4h-1.4zM489.6 435.5h1.4v1.4h-1.4zM500.2 426.9h1.4v1.4h-1.4zM495.2 420.7h1.4v1.4h-1.4zM486.2 440.8h1.4v1.4h-1.4zM510.8 445h1.4v1.4h-1.4zM491.7 423h1.4v1.4h-1.4zM578.7 397.9h1.4v1.4h-1.4zM493.9 442.5h1.4v1.4h-1.4zM456.9 447.4h1.4v1.4h-1.4zM445.7 444.7h1.4v1.4h-1.4zM492.5 432.4h1.4v1.4h-1.4zM531.2 438.7h1.4v1.4h-1.4zM525.1 380.6h1.4v1.4h-1.4zM506 408.8h1.4v1.4h-1.4zM571.5 403.2h1.4v1.4h-1.4zM508.5 436.1h1.4v1.4h-1.4zM558.1 357.8h1.4v1.4h-1.4zM489.5 415.8h1.4v1.4h-1.4zM544.2 407.3h1.4v1.4h-1.4zM528.7 402h1.4v1.4h-1.4zM520 444.9h1.4v1.4h-1.4zM446.2 449.6h1.4v1.4h-1.4zM563.3 380.6h1.4v1.4h-1.4zM557.3 411.4h1.4v1.4h-1.4zM489.7 422h1.4v1.4h-1.4zM468.3 427.5h1.4v1.4h-1.4zM569.1 361.2h1.4v1.4h-1.4zM485 425.9h1.4v1.4h-1.4zM507.6 396.4h1.4v1.4h-1.4zM488.3 437.8h1.4v1.4h-1.4zM486.4 451.7h1.4v1.4h-1.4zM504.2 412.7h1.4v1.4h-1.4zM484.4 439.1h1.4v1.4h-1.4zM560.3 412.3h1.4v1.4h-1.4zM471.3 429.6h1.4v1.4h-1.4zM486.5 422.9h1.4v1.4h-1.4zM444.6 441.6h1.4v1.4h-1.4zM554.4 402.1h1.4v1.4h-1.4zM445.3 450.9h1.4v1.4h-1.4zM485.1 414.4h1.4v1.4h-1.4zM528.2 387.7h1.4v1.4h-1.4zM536.7 423.3h1.4v1.4h-1.4zM519.1 410.9h1.4v1.4h-1.4zM519.7 442.4h1.4v1.4h-1.4zM484.7 412h1.4v1.4h-1.4zM560.9 378.1h1.4v1.4h-1.4zM487 413.2h1.4v1.4h-1.4zM477.6 454h1.4v1.4h-1.4zM491 424.5h1.4v1.4h-1.4zM439.4 448.4h1.4v1.4h-1.4zM581.9 385.1h1.4v1.4h-1.4zM516.9 421.3h1.4v1.4h-1.4zM527.6 439.7h1.4v1.4h-1.4zM451.5 455.2h1.4v1.4h-1.4zM534.1 378.8h1.4v1.4h-1.4zM468.3 425h1.4v1.4h-1.4zM578.5 412.6h1.4v1.4h-1.4zM578.8 395.5h1.4v1.4h-1.4zM473.6 445h1.4v1.4h-1.4zM489.6 410.6h1.4v1.4h-1.4zM498.7 450.3h1.4v1.4h-1.4zM466 445.1h1.4v1.4h-1.4zM462.2 445.5h1.4v1.4h-1.4zM466.6 431.9h1.4v1.4h-1.4zM482.6 421.4h1.4v1.4h-1.4zM557.4 421.5h1.4v1.4h-1.4zM549.8 388.8h1.4v1.4h-1.4zM439.4 443.8h1.4v1.4h-1.4zM457.7 434.3h1.4v1.4h-1.4zM556.9 417.3h1.4v1.4h-1.4zM522.7 392.7h1.4v1.4h-1.4zM488.4 440.5h1.4v1.4h-1.4zM486.5 449h1.4v1.4h-1.4zM489.8 443.7h1.4v1.4h-1.4zM533.9 418.1h1.4v1.4h-1.4zM519 404h1.4v1.4h-1.4zM541.4 397.1h1.4v1.4h-1.4zM527.9 404.7h1.4v1.4h-1.4zM515.7 385.5h1.4v1.4h-1.4zM513.8 440.7h1.4v1.4h-1.4zM517.6 445.1h1.4v1.4h-1.4zM558.9 403.4h1.4v1.4h-1.4zM547.2 395.7h1.4v1.4h-1.4zM491.2 416.2h1.4v1.4h-1.4zM514.8 398.9h1.4v1.4h-1.4zM547.2 404.5h1.4v1.4h-1.4zM562.5 368.9h1.4v1.4h-1.4zM580.9 375.4h1.4v1.4h-1.4zM532 429.3h1.4v1.4h-1.4zM522.9 416.2h1.4v1.4h-1.4zM451.8 458h1.4v1.4h-1.4zM515.2 410.8h1.4v1.4h-1.4zM555.5 364.2h1.4v1.4h-1.4zM562.1 377.5h1.4v1.4h-1.4zM592 370h1.4v1.4h-1.4zM581.3 379.7h1.4v1.4h-1.4zM576.5 400.8h1.4v1.4h-1.4zM432 447.3h1.4v1.4h-1.4zM530 416.5h1.4v1.4h-1.4zM553.7 421h1.4v1.4h-1.4zM537.9 374.5h1.4v1.4h-1.4zM484.1 444.5h1.4v1.4h-1.4zM509.8 446.8h1.4v1.4h-1.4zM536.8 395h1.4v1.4h-1.4zM478.5 429.3h1.4v1.4h-1.4zM524.9 400.6h1.4v1.4h-1.4zM543 391.2h1.4v1.4h-1.4zM528.1 420.5h1.4v1.4h-1.4zM530.4 391.9h1.4v1.4h-1.4zM468.6 445.3h1.4v1.4h-1.4zM511.1 412.3h1.4v1.4h-1.4zM546.7 407.1h1.4v1.4h-1.4zM494.1 425.6h1.4v1.4h-1.4zM534.4 437.2h1.4v1.4h-1.4zM477.9 437.8h1.4v1.4h-1.4zM430.8 447.9h1.4v1.4h-1.4zM586.9 382.4h1.4v1.4h-1.4zM521.2 408.1h1.4v1.4h-1.4zM598.2 390.8h1.4v1.4h-1.4zM586.2 394.3h1.4v1.4h-1.4zM456.3 442h1.4v1.4h-1.4zM533.4 393.3h1.4v1.4h-1.4zM497.3 407.7h1.4v1.4h-1.4zM452.4 444.9h1.4v1.4h-1.4zM551.2 414.9h1.4v1.4h-1.4zM554.6 394.4h1.4v1.4h-1.4zM480.4 454.8h1.4v1.4h-1.4zM491.1 407.3h1.4v1.4h-1.4zM561.6 412.1h1.4v1.4h-1.4zM493.9 426.1h1.4v1.4h-1.4zM576.6 371.2h1.4v1.4h-1.4zM562.7 392.1h1.4v1.4h-1.4zM470.4 429.3h1.4v1.4h-1.4zM505.3 425.2h1.4v1.4h-1.4zM493.3 439.6h1.4v1.4h-1.4zM509.7 416.8h1.4v1.4h-1.4zM514 436.6h1.4v1.4h-1.4zM522.4 416.9h1.4v1.4h-1.4zM471.7 423.2h1.4v1.4h-1.4zM567.4 390h1.4v1.4h-1.4zM438.3 460h1.4v1.4h-1.4zM466.5 430.1h1.4v1.4h-1.4zM548.6 413.5h1.4v1.4h-1.4zM585.6 406h1.4v1.4h-1.4zM461.8 453.2h1.4v1.4h-1.4zM507.3 437.4h1.4v1.4h-1.4zM517.9 439.7h1.4v1.4h-1.4zM551.4 420.5h1.4v1.4h-1.4zM563.7 354.6h1.4v1.4h-1.4zM505.6 451.1h1.4v1.4h-1.4zM538 413.3h1.4v1.4h-1.4zM505.5 411.1h1.4v1.4h-1.4zM547.4 424.4h1.4v1.4h-1.4zM486.8 426.9h1.4v1.4h-1.4zM514.8 416.2h1.4v1.4h-1.4zM563.8 407h1.4v1.4h-1.4zM495.1 439.7h1.4v1.4h-1.4zM456.6 448.3h1.4v1.4h-1.4zM476.1 455.6h1.4v1.4h-1.4zM515.1 408.8h1.4v1.4h-1.4zM505 448.9h1.4v1.4h-1.4zM545.1 420.8h1.4v1.4h-1.4zM532.2 400.8h1.4v1.4h-1.4zM488 418h1.4v1.4h-1.4zM559 422h1.4v1.4h-1.4zM557.5 414.3h1.4v1.4h-1.4zM525.5 430.9h1.4v1.4h-1.4zM491.6 434.5h1.4v1.4h-1.4zM575.5 399h1.4v1.4h-1.4zM518.9 414.4h1.4v1.4h-1.4zM549.1 419.3h1.4v1.4h-1.4zM555.1 364.5h1.4v1.4h-1.4zM531.3 413.2h1.4v1.4h-1.4zM507.3 449.7h1.4v1.4h-1.4zM531.9 432.6h1.4v1.4h-1.4zM588.7 403.3h1.4v1.4h-1.4zM517 439.5h1.4v1.4h-1.4zM549.9 420.2h1.4v1.4h-1.4zM484.3 413.6h1.4v1.4h-1.4zM478.3 448.3h1.4v1.4h-1.4zM543.6 414.4h1.4v1.4h-1.4zM470.8 426.5h1.4v1.4h-1.4zM478.7 446h1.4v1.4h-1.4zM460.6 459.9h1.4v1.4h-1.4zM489.8 440.5h1.4v1.4h-1.4zM524.4 382.7h1.4v1.4h-1.4zM535.8 431.5h1.4v1.4h-1.4zM552.8 420.3h1.4v1.4h-1.4zM584.7 393.6h1.4v1.4h-1.4zM570.8 422.1h1.4v1.4h-1.4zM493.9 434.4h1.4v1.4h-1.4zM550.5 386.6h1.4v1.4h-1.4zM545 377h1.4v1.4h-1.4zM529.9 419.1h1.4v1.4h-1.4zM474.1 454.6h1.4v1.4h-1.4zM528.1 409.3h1.4v1.4h-1.4zM558.7 380h1.4v1.4h-1.4zM450.5 455.1h1.4v1.4h-1.4zM555.9 360.7h1.4v1.4h-1.4zM505.7 431.9h1.4v1.4h-1.4zM509.7 429.4h1.4v1.4h-1.4zM459.6 450h1.4v1.4h-1.4zM502.4 431.2h1.4v1.4h-1.4zM547.4 375.5h1.4v1.4h-1.4zM508.4 409.6h1.4v1.4h-1.4zM458.6 431.4h1.4v1.4h-1.4zM508.3 422.4h1.4v1.4h-1.4zM537 409.3h1.4v1.4h-1.4zM496.2 428.6h1.4v1.4h-1.4zM532.8 402h1.4v1.4h-1.4zM530.5 425.8h1.4v1.4h-1.4zM542.9 416.7h1.4v1.4h-1.4zM548.3 370.1h1.4v1.4h-1.4zM525.3 401h1.4v1.4h-1.4zM530.9 404.6h1.4v1.4h-1.4zM433.1 457.9h1.4v1.4h-1.4zM567 414.4h1.4v1.4h-1.4zM474.6 425.9h1.4v1.4h-1.4zM575.4 391.2h1.4v1.4h-1.4zM490.5 415.3h1.4v1.4h-1.4zM562.9 396h1.4v1.4h-1.4zM451.3 441h1.4v1.4h-1.4zM542.7 437.7h1.4v1.4h-1.4zM552.7 410.7h1.4v1.4h-1.4zM462.3 434.1h1.4v1.4h-1.4zM437.5 451.6h1.4v1.4h-1.4zM523.7 423.3h1.4v1.4h-1.4zM483.9 441.2h1.4v1.4h-1.4zM590.1 393h1.4v1.4h-1.4zM509.2 413.9h1.4v1.4h-1.4zM498.6 427.2h1.4v1.4h-1.4zM559.6 404.5h1.4v1.4h-1.4zM442.3 452.4h1.4v1.4h-1.4zM526.1 438.5h1.4v1.4h-1.4zM541.9 430.7h1.4v1.4h-1.4zM461 459.1h1.4v1.4h-1.4zM583.1 401.2h1.4v1.4h-1.4zM551.4 397h1.4v1.4h-1.4zM524.4 409.6h1.4v1.4h-1.4zM477.7 435.2h1.4v1.4h-1.4zM454.8 444.5h1.4v1.4h-1.4zM467.7 452.5h1.4v1.4h-1.4zM500.7 441.3h1.4v1.4h-1.4zM541.9 382.5h1.4v1.4h-1.4zM462.9 430.7h1.4v1.4h-1.4zM485.4 455.5h1.4v1.4h-1.4zM550 407.9h1.4v1.4h-1.4zM552.1 380h1.4v1.4h-1.4zM532.2 380.6h1.4v1.4h-1.4zM504.1 415h1.4v1.4h-1.4zM551.6 420.7h1.4v1.4h-1.4zM474.5 453.7h1.4v1.4h-1.4zM513.1 428.9h1.4v1.4h-1.4zM441.6 444h1.4v1.4h-1.4zM474.1 444h1.4v1.4h-1.4zM539.3 396.6h1.4v1.4h-1.4zM588.3 371.9h1.4v1.4h-1.4zM489.9 409.2h1.4v1.4h-1.4zM478.3 424.4h1.4v1.4h-1.4zM471.4 425.1h1.4v1.4h-1.4zM555 392.3h1.4v1.4h-1.4zM463.9 436.1h1.4v1.4h-1.4zM502.9 396.9h1.4v1.4h-1.4zM516.1 424.3h1.4v1.4h-1.4zM556.5 369.9h1.4v1.4h-1.4zM502.6 452.3h1.4v1.4h-1.4zM493.1 414.2h1.4v1.4h-1.4zM544 419.8h1.4v1.4h-1.4zM597.2 373.4h1.4v1.4h-1.4zM554.5 380.2h1.4v1.4h-1.4zM531.8 417.6h1.4v1.4h-1.4zM432.4 460.6h1.4v1.4h-1.4zM508.4 451.6h1.4v1.4h-1.4zM512.3 426.6h1.4v1.4h-1.4zM482 434.9h1.4v1.4h-1.4zM494.3 414.5h1.4v1.4h-1.4zM492.1 417.7h1.4v1.4h-1.4zM498 452.5h1.4v1.4h-1.4zM495 422h1.4v1.4h-1.4zM508.7 405.3h1.4v1.4h-1.4zM528.1 405.7h1.4v1.4h-1.4zM443.1 449.1h1.4v1.4h-1.4zM443.6 443.1h1.4v1.4h-1.4zM548.2 399.5h1.4v1.4h-1.4zM453.7 442h1.4v1.4h-1.4zM510.6 454.3h1.4v1.4h-1.4zM536.9 429.4h1.4v1.4h-1.4zM524.3 426h1.4v1.4h-1.4zM432.4 462.8h1.4v1.4h-1.4zM513.9 407.2h1.4v1.4h-1.4zM445.3 444.2h1.4v1.4h-1.4zM457.6 454.7h1.4v1.4h-1.4zM511.7 428h1.4v1.4h-1.4zM468.4 431.5h1.4v1.4h-1.4zM472.4 440.6h1.4v1.4h-1.4zM531.6 435.9h1.4v1.4h-1.4zM473.8 423.7h1.4v1.4h-1.4zM467.3 442.3h1.4v1.4h-1.4zM505.5 423h1.4v1.4h-1.4zM528.4 414.3h1.4v1.4h-1.4zM565.4 394.9h1.4v1.4h-1.4zM531.7 377h1.4v1.4h-1.4zM462.4 449.1h1.4v1.4h-1.4zM460.7 453.9h1.4v1.4h-1.4zM519.4 412.9h1.4v1.4h-1.4zM523.9 426.6h1.4v1.4h-1.4zM486.8 446.4h1.4v1.4h-1.4zM559.3 419.4h1.4v1.4h-1.4zM507.4 397h1.4v1.4h-1.4zM569.8 409.9h1.4v1.4h-1.4zM529.5 376.8h1.4v1.4h-1.4zM578.7 394.3h1.4v1.4h-1.4zM530.1 408h1.4v1.4h-1.4zM502.3 443h1.4v1.4h-1.4zM428.3 454h1.4v1.4h-1.4zM461.5 433.9h1.4v1.4h-1.4zM599.1 400h1.4v1.4h-1.4zM566.1 414h1.4v1.4h-1.4zM454.2 443h1.4v1.4h-1.4zM531 388h1.4v1.4h-1.4zM514.9 394.1h1.4v1.4h-1.4zM475.6 449.6h1.4v1.4h-1.4zM493 410.4h1.4v1.4h-1.4zM531.5 391.2h1.4v1.4h-1.4zM511.9 411h1.4v1.4h-1.4zM569.7 414.4h1.4v1.4h-1.4zM529.4 408.2h1.4v1.4h-1.4zM546.7 416.9h1.4v1.4h-1.4zM573.6 359.4h1.4v1.4h-1.4zM531 415.7h1.4v1.4h-1.4zM535.9 391.5h1.4v1.4h-1.4zM482.3 448.1h1.4v1.4h-1.4zM479.7 419.6h1.4v1.4h-1.4zM499.7 438.2h1.4v1.4h-1.4zM466.9 453.4h1.4v1.4h-1.4zM462.1 433.4h1.4v1.4h-1.4zM454.8 437.5h1.4v1.4h-1.4zM493.9 446.4h1.4v1.4h-1.4zM459.5 451.7h1.4v1.4h-1.4zM518 412.9h1.4v1.4h-1.4zM522.5 436.1h1.4v1.4h-1.4zM453.2 454.2h1.4v1.4h-1.4zM475.3 420.9h1.4v1.4h-1.4zM441.8 460.2h1.4v1.4h-1.4zM452.4 452.7h1.4v1.4h-1.4zM514.7 384.9h1.4v1.4h-1.4zM531.9 413.1h1.4v1.4h-1.4zM439.7 462.5h1.4v1.4h-1.4zM570.4 411.7h1.4v1.4h-1.4zM456.5 447.5h1.4v1.4h-1.4zM573.9 420.2h1.4v1.4h-1.4zM567.8 372.5h1.4v1.4h-1.4zM465.7 441h1.4v1.4h-1.4zM449.3 446.8h1.4v1.4h-1.4zM520.9 411.3h1.4v1.4h-1.4zM526.6 427.9h1.4v1.4h-1.4zM588 378h1.4v1.4h-1.4zM502.7 438.7h1.4v1.4h-1.4zM511.2 412.6h1.4v1.4h-1.4zM569 416.6h1.4v1.4h-1.4zM543.5 436.6h1.4v1.4h-1.4zM507 441.5h1.4v1.4h-1.4zM475 433.2h1.4v1.4h-1.4zM590.1 371.4h1.4v1.4h-1.4zM450.8 451.2h1.4v1.4h-1.4zM497 430.2h1.4v1.4h-1.4zM483.6 458.5h1.4v1.4h-1.4zM605.1 386.2h1.4v1.4h-1.4zM446.9 450.2h1.4v1.4h-1.4zM557.8 393.5h1.4v1.4h-1.4zM505.2 435.2h1.4v1.4h-1.4zM492.2 415h1.4v1.4h-1.4zM580.4 386.1h1.4v1.4h-1.4zM447.4 451.2h1.4v1.4h-1.4zM495.6 439.8h1.4v1.4h-1.4zM545.7 426.3h1.4v1.4h-1.4zM441.3 449h1.4v1.4h-1.4zM476 441.9h1.4v1.4h-1.4zM524 427.9h1.4v1.4h-1.4zM459.4 447.7h1.4v1.4h-1.4zM572 401.5h1.4v1.4h-1.4zM522.9 424.9h1.4v1.4h-1.4zM455.5 441h1.4v1.4h-1.4zM554.5 359.7h1.4v1.4h-1.4zM512.2 417.5h1.4v1.4h-1.4zM525.2 411.3h1.4v1.4h-1.4zM442.2 444.2h1.4v1.4h-1.4zM518.2 430.7h1.4v1.4h-1.4zM471.2 434h1.4v1.4h-1.4zM495.7 430.6h1.4v1.4h-1.4zM470.4 447.6h1.4v1.4h-1.4zM540.1 401.7h1.4v1.4h-1.4zM594.3 407.3h1.4v1.4h-1.4zM555.7 362h1.4v1.4h-1.4zM562.3 394.9h1.4v1.4h-1.4zM469.9 455.7h1.4v1.4h-1.4zM498.1 456.6h1.4v1.4h-1.4zM518.7 427.4h1.4v1.4h-1.4zM501 450.7h1.4v1.4h-1.4zM492.5 444.7h1.4v1.4h-1.4zM529 423.6h1.4v1.4h-1.4zM578.1 394.8h1.4v1.4h-1.4zM528 391.7h1.4v1.4h-1.4zM518.9 428.7h1.4v1.4h-1.4zM449.1 443.7h1.4v1.4h-1.4zM507.2 394.8h1.4v1.4h-1.4zM530.9 381.2h1.4v1.4h-1.4zM459.7 460.4h1.4v1.4h-1.4zM560.9 407.2h1.4v1.4h-1.4zM486.4 452.9h1.4v1.4h-1.4zM504 421.4h1.4v1.4h-1.4zM520.6 427.9h1.4v1.4h-1.4zM460.1 442.4h1.4v1.4h-1.4zM479.9 448.6h1.4v1.4h-1.4zM522.3 405.8h1.4v1.4h-1.4zM533.3 428.8h1.4v1.4h-1.4zM459.3 429.3h1.4v1.4h-1.4zM577.7 400.1h1.4v1.4h-1.4zM448.4 447.7h1.4v1.4h-1.4zM554.6 365.3h1.4v1.4h-1.4zM455.9 458.6h1.4v1.4h-1.4zM451.7 437h1.4v1.4h-1.4zM577.5 375.7h1.4v1.4h-1.4zM512.5 405.8h1.4v1.4h-1.4zM573.2 396.5h1.4v1.4h-1.4zM444.6 450.1h1.4v1.4h-1.4zM505.8 409.8h1.4v1.4h-1.4zM434.5 459h1.4v1.4h-1.4zM531.5 431.8h1.4v1.4h-1.4zM570.5 395.7h1.4v1.4h-1.4zM496.3 431.8h1.4v1.4h-1.4zM522.9 413.3h1.4v1.4h-1.4zM538.4 379.1h1.4v1.4h-1.4zM467.7 438.3h1.4v1.4h-1.4zM532.9 385.5h1.4v1.4h-1.4zM569.7 403.1h1.4v1.4h-1.4zM570.2 355.5h1.4v1.4h-1.4zM589.9 372.6h1.4v1.4h-1.4zM546.7 432.7h1.4v1.4h-1.4zM503.1 445.8h1.4v1.4h-1.4zM499.1 445.8h1.4v1.4h-1.4zM478.2 444.3h1.4v1.4h-1.4zM452.4 459.6h1.4v1.4h-1.4zM537.4 412.5h1.4v1.4h-1.4zM510.6 462.8h1.4v1.4h-1.4zM490.8 438.9h1.4v1.4h-1.4zM540.2 407h1.4v1.4h-1.4zM416.1 462.6h1.4v1.4h-1.4zM475.4 420.4h1.4v1.4h-1.4zM432.9 448.6h1.4v1.4h-1.4zM423.6 456.7h1.4v1.4h-1.4zM541.5 429.3h1.4v1.4h-1.4zM553.5 421.3h1.4v1.4h-1.4zM474.1 439h1.4v1.4h-1.4zM558.1 392.9h1.4v1.4h-1.4zM454.5 454h1.4v1.4h-1.4zM556.4 366.9h1.4v1.4h-1.4zM523.6 443.4h1.4v1.4h-1.4zM555.3 380.2h1.4v1.4h-1.4zM493.4 440.5h1.4v1.4h-1.4zM543.9 409.3h1.4v1.4h-1.4zM505.7 434.7h1.4v1.4h-1.4zM571.8 348.1h1.4v1.4h-1.4zM588 405.4h1.4v1.4h-1.4zM543.8 405.7h1.4v1.4h-1.4zM453.9 453.4h1.4v1.4h-1.4zM551.4 391h1.4v1.4h-1.4zM529.7 455.1h1.4v1.4h-1.4zM447 452.7h1.4v1.4h-1.4zM493.2 424.4h1.4v1.4h-1.4zM467.1 440.5h1.4v1.4h-1.4zM557.9 405.4h1.4v1.4h-1.4zM468.4 441.9h1.4v1.4h-1.4zM491.9 441.3h1.4v1.4h-1.4zM513 392.9h1.4v1.4h-1.4zM562.5 418.1h1.4v1.4h-1.4zM495.7 458.5h1.4v1.4h-1.4zM556 372.9h1.4v1.4h-1.4zM456 458.6h1.4v1.4h-1.4zM464.8 442.6h1.4v1.4h-1.4zM587.6 406.9h1.4v1.4h-1.4zM489.8 441.5h1.4v1.4h-1.4zM517.4 444.3h1.4v1.4h-1.4zM537.3 425.6h1.4v1.4h-1.4zM557.1 408.3h1.4v1.4h-1.4zM556.5 390.4h1.4v1.4h-1.4zM466.5 457.2h1.4v1.4h-1.4zM545.5 399.3h1.4v1.4h-1.4zM540.4 395.1h1.4v1.4h-1.4zM554.9 418.7h1.4v1.4h-1.4zM570 374.7h1.4v1.4h-1.4zM436 447.5h1.4v1.4h-1.4zM525 404.7h1.4v1.4h-1.4zM586.1 398.5h1.4v1.4h-1.4zM532.4 387.6h1.4v1.4h-1.4zM536.9 432.6h1.4v1.4h-1.4zM500 402.3h1.4v1.4h-1.4zM476.8 455.7h1.4v1.4h-1.4zM469.1 437.9h1.4v1.4h-1.4zM454.9 441.5h1.4v1.4h-1.4zM516.7 433.7h1.4v1.4h-1.4zM579.8 378.4h1.4v1.4h-1.4zM491.5 419.9h1.4v1.4h-1.4zM509.9 436.8h1.4v1.4h-1.4zM430.7 453.5h1.4v1.4h-1.4zM549.5 420.2h1.4v1.4h-1.4zM493.1 448.3h1.4v1.4h-1.4zM515.8 446.7h1.4v1.4h-1.4zM538 409.1h1.4v1.4h-1.4zM562.7 410.8h1.4v1.4h-1.4zM491.5 441.3h1.4v1.4h-1.4zM597.2 363.7h1.4v1.4h-1.4zM454.2 451.6h1.4v1.4h-1.4zM544.6 359.4h1.4v1.4h-1.4zM539.5 390.4h1.4v1.4h-1.4zM520.2 409.8h1.4v1.4h-1.4zM555.8 430.9h1.4v1.4h-1.4zM546.4 378.8h1.4v1.4h-1.4zM449.9 446h1.4v1.4h-1.4zM564 372.7h1.4v1.4h-1.4zM510 436.7h1.4v1.4h-1.4zM479.9 440h1.4v1.4h-1.4zM488.4 411.9h1.4v1.4h-1.4zM546.4 405.5h1.4v1.4h-1.4zM520.6 404.5h1.4v1.4h-1.4zM493 420.1h1.4v1.4h-1.4zM509 416.2h1.4v1.4h-1.4zM526.1 401.3h1.4v1.4h-1.4zM461.7 429.8h1.4v1.4h-1.4zM509.9 409.6h1.4v1.4h-1.4zM454.7 439.3h1.4v1.4h-1.4zM487.7 430.2h1.4v1.4h-1.4zM467.6 436.2h1.4v1.4h-1.4zM542 416.5h1.4v1.4h-1.4zM513.1 420.3h1.4v1.4h-1.4zM444.4 454.2h1.4v1.4h-1.4zM569.5 415.5h1.4v1.4h-1.4zM481.4 431.5h1.4v1.4h-1.4zM542.5 395.6h1.4v1.4h-1.4zM574.2 383.8h1.4v1.4h-1.4zM529 399h1.4v1.4h-1.4zM596.1 405h1.4v1.4h-1.4zM447.7 458.9h1.4v1.4h-1.4zM511.7 387.2h1.4v1.4h-1.4zM568.7 398.3h1.4v1.4h-1.4zM519.9 373.4h1.4v1.4h-1.4zM437.4 445.1h1.4v1.4h-1.4zM473 432.8h1.4v1.4h-1.4zM518.3 436.6h1.4v1.4h-1.4zM482 434.2h1.4v1.4h-1.4zM592.2 408.4h1.4v1.4h-1.4zM464.9 427.9h1.4v1.4h-1.4zM533.9 381.5h1.4v1.4h-1.4zM466.6 446h1.4v1.4h-1.4zM469.9 429.4h1.4v1.4h-1.4zM564.4 412.4h1.4v1.4h-1.4zM577.4 407.7h1.4v1.4h-1.4zM558.5 364.7h1.4v1.4h-1.4zM543 399.5h1.4v1.4h-1.4zM553.8 418.8h1.4v1.4h-1.4zM497.6 434.6h1.4v1.4h-1.4zM548.4 396.7h1.4v1.4h-1.4zM549.7 374.4h1.4v1.4h-1.4zM549.2 401.9h1.4v1.4h-1.4zM491.2 431.5h1.4v1.4h-1.4zM459.9 449.8h1.4v1.4h-1.4zM498 430.6h1.4v1.4h-1.4zM561.3 374.2h1.4v1.4h-1.4zM440.3 456.5h1.4v1.4h-1.4zM510.1 400.3h1.4v1.4h-1.4zM590.1 369.2h1.4v1.4h-1.4zM506.3 434.4h1.4v1.4h-1.4zM482 424h1.4v1.4h-1.4zM449.5 459.8h1.4v1.4h-1.4zM485.8 420.4h1.4v1.4h-1.4zM507.2 421.2h1.4v1.4h-1.4zM487 432.4h1.4v1.4h-1.4zM589.8 370.5h1.4v1.4h-1.4zM558.4 369.5h1.4v1.4h-1.4zM520.5 384.6h1.4v1.4h-1.4zM540.6 387h1.4v1.4h-1.4zM522.6 412.6h1.4v1.4h-1.4zM506.2 408.2h1.4v1.4h-1.4zM451.9 442.4h1.4v1.4h-1.4zM501.7 444.2h1.4v1.4h-1.4zM511.9 393.4h1.4v1.4h-1.4zM556.6 415h1.4v1.4h-1.4zM590.2 395.4h1.4v1.4h-1.4zM484.3 433.2h1.4v1.4h-1.4zM509.4 396.9h1.4v1.4h-1.4zM476.4 455.9h1.4v1.4h-1.4zM445.1 462.5h1.4v1.4h-1.4zM553.8 405.8h1.4v1.4h-1.4zM462.1 451h1.4v1.4h-1.4zM453 458.5h1.4v1.4h-1.4zM584 360.9h1.4v1.4h-1.4zM449.2 460.6h1.4v1.4h-1.4zM479.6 449h1.4v1.4h-1.4zM425.3 453h1.4v1.4h-1.4zM443.9 460.7h1.4v1.4h-1.4zM466.8 438.5h1.4v1.4h-1.4zM425.7 451.9h1.4v1.4h-1.4zM451.4 459.6h1.4v1.4h-1.4zM574.2 406.4h1.4v1.4h-1.4zM487 422h1.4v1.4h-1.4zM511.3 420.5h1.4v1.4h-1.4zM451 456.6h1.4v1.4h-1.4zM545.9 416.1h1.4v1.4h-1.4zM527.2 423.5h1.4v1.4h-1.4zM559.8 386.6h1.4v1.4h-1.4zM455.2 437.8h1.4v1.4h-1.4zM491.5 441.2h1.4v1.4h-1.4zM569.3 402h1.4v1.4h-1.4zM558.7 422h1.4v1.4h-1.4zM482.1 429.5h1.4v1.4h-1.4zM503.1 407.4h1.4v1.4h-1.4zM507.7 406.9h1.4v1.4h-1.4zM479.2 424.3h1.4v1.4h-1.4zM530.7 400.8h1.4v1.4h-1.4zM590.7 407.6h1.4v1.4h-1.4zM601.3 408.3h1.4v1.4h-1.4zM483.6 424.5h1.4v1.4h-1.4zM473.2 443.9h1.4v1.4h-1.4zM446.7 442.7h1.4v1.4h-1.4zM594.4 397.4h1.4v1.4h-1.4zM608.2 383.5h1.4v1.4h-1.4zM543.9 412.8h1.4v1.4h-1.4zM537.6 373.3h1.4v1.4h-1.4zM415.8 456.9h1.4v1.4h-1.4zM503.5 442.3h1.4v1.4h-1.4zM543.7 409.3h1.4v1.4h-1.4zM548.3 357.7h1.4v1.4h-1.4zM586.3 377.7h1.4v1.4h-1.4zM433.2 457.6h1.4v1.4h-1.4zM496.4 413.3h1.4v1.4h-1.4zM463.4 449.7h1.4v1.4h-1.4zM508.9 408.9h1.4v1.4h-1.4zM558.1 404.3h1.4v1.4h-1.4zM592.6 394.4h1.4v1.4h-1.4zM523.6 423.9h1.4v1.4h-1.4zM533.5 399.3h1.4v1.4h-1.4zM562.6 412.1h1.4v1.4h-1.4zM493.2 429.1h1.4v1.4h-1.4zM508.5 445h1.4v1.4h-1.4zM541.5 368.4h1.4v1.4h-1.4zM572.1 390.5h1.4v1.4h-1.4zM536 420.8h1.4v1.4h-1.4zM478.8 440.8h1.4v1.4h-1.4zM473.3 431.7h1.4v1.4h-1.4zM436.2 454.9h1.4v1.4h-1.4zM532.3 426.3h1.4v1.4h-1.4zM442.4 453.4h1.4v1.4h-1.4zM555.8 407.5h1.4v1.4h-1.4zM448 448.7h1.4v1.4h-1.4zM497.9 403.8h1.4v1.4h-1.4zM472 429.4h1.4v1.4h-1.4zM582.7 384.8h1.4v1.4h-1.4zM439.5 459.4h1.4v1.4h-1.4zM486.8 430.5h1.4v1.4h-1.4zM574.9 406.3h1.4v1.4h-1.4zM536.4 430.3h1.4v1.4h-1.4zM548.4 418.3h1.4v1.4h-1.4zM539.8 394.8h1.4v1.4h-1.4zM486 451.2h1.4v1.4h-1.4zM544.9 365.3h1.4v1.4h-1.4zM593.8 365.9h1.4v1.4h-1.4zM576.2 386.7h1.4v1.4h-1.4zM462.7 456.6h1.4v1.4h-1.4zM420.6 454.8h1.4v1.4h-1.4zM534 420.9h1.4v1.4h-1.4zM517.6 401.2h1.4v1.4h-1.4zM563.1 361.3h1.4v1.4h-1.4zM516.3 431.4h1.4v1.4h-1.4zM579 394.3h1.4v1.4h-1.4zM507.9 411.7h1.4v1.4h-1.4zM494.2 432.6h1.4v1.4h-1.4zM500.2 402.5h1.4v1.4h-1.4zM524.1 400h1.4v1.4h-1.4zM431.6 449.9h1.4v1.4h-1.4zM588 396.8h1.4v1.4h-1.4zM581.6 370.8h1.4v1.4h-1.4zM500.9 406.6h1.4v1.4h-1.4zM428.2 462.6h1.4v1.4h-1.4zM543.6 402.9h1.4v1.4h-1.4zM557.4 413.1h1.4v1.4h-1.4zM529.2 424.1h1.4v1.4h-1.4zM464.5 451.9h1.4v1.4h-1.4zM515 445.1h1.4v1.4h-1.4zM553.6 429.1h1.4v1.4h-1.4zM514.8 420.4h1.4v1.4h-1.4zM482.6 443.3h1.4v1.4h-1.4zM587.6 397.9h1.4v1.4h-1.4zM458.5 447.9h1.4v1.4h-1.4zM551.2 369.1h1.4v1.4h-1.4zM475.2 445.7h1.4v1.4h-1.4zM576.2 360.5h1.4v1.4h-1.4zM509.7 405.8h1.4v1.4h-1.4zM575.6 388.2h1.4v1.4h-1.4zM521.8 430.1h1.4v1.4h-1.4zM547.2 390.7h1.4v1.4h-1.4zM507.4 422.1h1.4v1.4h-1.4zM548.2 376.5h1.4v1.4h-1.4zM569.8 360.7h1.4v1.4h-1.4zM499.3 407.6h1.4v1.4h-1.4zM568.9 395.4h1.4v1.4h-1.4zM586 388h1.4v1.4h-1.4zM469.2 433.4h1.4v1.4h-1.4zM530.8 379h1.4v1.4h-1.4zM584.1 378.8h1.4v1.4h-1.4zM580.7 367.9h1.4v1.4h-1.4zM549 407.9h1.4v1.4h-1.4zM501.7 407.6h1.4v1.4h-1.4zM547.6 430.5h1.4v1.4h-1.4zM512.8 418.7h1.4v1.4h-1.4zM422.5 452.6h1.4v1.4h-1.4zM558.3 391h1.4v1.4h-1.4zM515.2 388.7h1.4v1.4h-1.4zM574.5 416.1h1.4v1.4h-1.4zM459.2 433.6h1.4v1.4h-1.4zM472.4 436.3h1.4v1.4h-1.4zM465.4 452h1.4v1.4h-1.4zM528.1 387.2h1.4v1.4h-1.4zM516.8 416h1.4v1.4h-1.4zM510.3 416.9h1.4v1.4h-1.4zM537.5 374.5h1.4v1.4h-1.4zM513.1 436.7h1.4v1.4h-1.4zM542.4 414.6h1.4v1.4h-1.4zM498.5 446.2h1.4v1.4h-1.4zM475.6 435.7h1.4v1.4h-1.4zM489.5 442.8h1.4v1.4h-1.4zM472.9 438h1.4v1.4h-1.4zM484.1 427.1h1.4v1.4h-1.4zM465.9 431.6h1.4v1.4h-1.4zM504.6 442.7h1.4v1.4h-1.4zM488.5 412.3h1.4v1.4h-1.4zM574.8 410.3h1.4v1.4h-1.4zM547.1 375.7h1.4v1.4h-1.4zM431.1 452.6h1.4v1.4h-1.4zM517.8 408.1h1.4v1.4h-1.4zM459.6 437.7h1.4v1.4h-1.4zM442.7 450.1h1.4v1.4h-1.4zM515.4 408h1.4v1.4h-1.4zM508.6 410.1h1.4v1.4h-1.4zM511.7 441.7h1.4v1.4h-1.4zM540 372.5h1.4v1.4h-1.4zM452.2 444.8h1.4v1.4h-1.4zM560.4 417.6h1.4v1.4h-1.4zM491.1 454h1.4v1.4h-1.4zM503.5 399.1h1.4v1.4h-1.4zM444.4 452.1h1.4v1.4h-1.4zM521.9 392.8h1.4v1.4h-1.4zM441.9 449.8h1.4v1.4h-1.4zM573.8 419.6h1.4v1.4h-1.4zM489 425.5h1.4v1.4h-1.4zM439.3 445.6h1.4v1.4h-1.4zM494.6 447.8h1.4v1.4h-1.4zM505.5 435h1.4v1.4h-1.4zM486.4 444.3h1.4v1.4h-1.4zM501.4 403.1h1.4v1.4h-1.4zM455.4 452.2h1.4v1.4h-1.4zM530.5 410.7h1.4v1.4h-1.4zM488.1 431.6h1.4v1.4h-1.4zM479.4 439.9h1.4v1.4h-1.4zM508.3 437.2h1.4v1.4h-1.4zM460.4 454.2h1.4v1.4h-1.4zM487.7 445.4h1.4v1.4h-1.4zM548.2 422.3h1.4v1.4h-1.4zM430.1 454.4h1.4v1.4h-1.4zM518.2 445.6h1.4v1.4h-1.4zM503.1 440.9h1.4v1.4h-1.4zM429.9 454.7h1.4v1.4h-1.4zM583.1 383.3h1.4v1.4h-1.4zM483.9 413.5h1.4v1.4h-1.4zM519.4 397.9h1.4v1.4h-1.4zM593.4 371.4h1.4v1.4h-1.4zM478.8 427.7h1.4v1.4h-1.4zM433 454.8h1.4v1.4h-1.4zM465.7 431.3h1.4v1.4h-1.4zM484.6 421.7h1.4v1.4h-1.4zM554.9 373.3h1.4v1.4h-1.4zM562.5 405.5h1.4v1.4h-1.4zM531.9 408.5h1.4v1.4h-1.4zM469.8 428.2h1.4v1.4h-1.4zM536.7 410.2h1.4v1.4h-1.4zM536.2 394.1h1.4v1.4h-1.4zM599.6 401.4h1.4v1.4h-1.4zM524.1 444h1.4v1.4h-1.4zM522.9 431.4h1.4v1.4h-1.4zM591.8 407h1.4v1.4h-1.4zM507.4 436h1.4v1.4h-1.4zM468.5 441.7h1.4v1.4h-1.4zM530.8 385.5h1.4v1.4h-1.4zM472.7 458.8h1.4v1.4h-1.4zM528.1 412.4h1.4v1.4h-1.4zM488.8 444h1.4v1.4h-1.4zM431.9 449.6h1.4v1.4h-1.4zM548.2 405.7h1.4v1.4h-1.4zM548.3 407.9h1.4v1.4h-1.4zM547.6 450.7h1.4v1.4h-1.4zM441.6 442.3h1.4v1.4h-1.4zM498.9 406.7h1.4v1.4h-1.4zM433.2 471.4h1.4v1.4h-1.4zM548.9 390.8h1.4v1.4h-1.4zM491.5 442.9h1.4v1.4h-1.4zM461.1 437.1h1.4v1.4h-1.4zM538.4 414.6h1.4v1.4h-1.4zM519.1 447.9h1.4v1.4h-1.4zM583.4 413.3h1.4v1.4h-1.4zM536.6 435.5h1.4v1.4h-1.4zM517.6 378.9h1.4v1.4h-1.4zM484.3 444.4h1.4v1.4h-1.4zM500.5 417.3h1.4v1.4h-1.4zM510.6 437.3h1.4v1.4h-1.4zM578.3 408.2h1.4v1.4h-1.4zM446.8 443.5h1.4v1.4h-1.4zM554.1 391.2h1.4v1.4h-1.4zM560.7 388h1.4v1.4h-1.4zM560.6 420.6h1.4v1.4h-1.4zM468.2 428h1.4v1.4h-1.4zM553.3 375.2h1.4v1.4h-1.4zM511.7 423.1h1.4v1.4h-1.4zM557.1 366.3h1.4v1.4h-1.4zM448.5 441.5h1.4v1.4h-1.4zM448.1 450h1.4v1.4h-1.4zM543.3 400.3h1.4v1.4h-1.4zM522.5 396.7h1.4v1.4h-1.4zM459 454h1.4v1.4h-1.4zM503.3 443.9h1.4v1.4h-1.4zM577.7 405.6h1.4v1.4h-1.4zM507.3 414.7h1.4v1.4h-1.4zM464.9 426.8h1.4v1.4h-1.4zM547.1 403.3h1.4v1.4h-1.4zM586.4 393.7h1.4v1.4h-1.4zM549.9 381.4h1.4v1.4h-1.4zM529 389.6h1.4v1.4h-1.4zM523 429.3h1.4v1.4h-1.4zM459.6 455.8h1.4v1.4h-1.4zM549.8 406.2h1.4v1.4h-1.4zM536.7 427.6h1.4v1.4h-1.4zM457.5 433h1.4v1.4h-1.4zM504.8 436.5h1.4v1.4h-1.4zM554.2 394.7h1.4v1.4h-1.4zM530.4 410h1.4v1.4h-1.4zM501.6 419.3h1.4v1.4h-1.4zM512.4 432.9h1.4v1.4h-1.4zM588.9 399.1h1.4v1.4h-1.4zM523.4 409.2h1.4v1.4h-1.4zM536.5 394h1.4v1.4h-1.4zM495.8 454.2h1.4v1.4h-1.4zM556.5 398.4h1.4v1.4h-1.4zM538.7 384.6h1.4v1.4h-1.4zM517.3 386.9h1.4v1.4h-1.4zM498.1 401h1.4v1.4h-1.4zM472.6 451.9h1.4v1.4h-1.4zM523 384.5h1.4v1.4h-1.4zM541.7 432.1h1.4v1.4h-1.4zM558.2 389.2h1.4v1.4h-1.4zM475.3 440.7h1.4v1.4h-1.4zM495.2 415h1.4v1.4h-1.4zM574.9 395.2h1.4v1.4h-1.4zM535.8 427.1h1.4v1.4h-1.4zM515.1 385.3h1.4v1.4h-1.4zM550.6 423.6h1.4v1.4h-1.4zM488.7 415.5h1.4v1.4h-1.4zM479.6 416.9h1.4v1.4h-1.4zM564.8 398.7h1.4v1.4h-1.4zM543.5 393.1h1.4v1.4h-1.4zM587.8 395.9h1.4v1.4h-1.4zM554.3 424.6h1.4v1.4h-1.4zM510.9 408.1h1.4v1.4h-1.4zM562.2 379.7h1.4v1.4h-1.4zM491.9 450.2h1.4v1.4h-1.4zM502.8 426.1h1.4v1.4h-1.4zM438.5 450.8h1.4v1.4h-1.4zM501 426.1h1.4v1.4h-1.4zM526.8 393.4h1.4v1.4h-1.4zM427.7 451.3h1.4v1.4h-1.4zM434.3 448.2h1.4v1.4h-1.4zM486.4 456.3h1.4v1.4h-1.4zM562.5 383.7h1.4v1.4h-1.4zM517.6 422.3h1.4v1.4h-1.4zM494 409.8h1.4v1.4h-1.4zM546.3 432.8h1.4v1.4h-1.4zM461.8 434.6h1.4v1.4h-1.4zM463.9 435.8h1.4v1.4h-1.4zM516.1 415.6h1.4v1.4h-1.4zM460.3 442.4h1.4v1.4h-1.4zM519.5 439.3h1.4v1.4h-1.4zM481.6 447.1h1.4v1.4h-1.4zM506.8 423.5h1.4v1.4h-1.4zM489.4 435.2h1.4v1.4h-1.4zM569.8 391.9h1.4v1.4h-1.4zM479.2 441.6h1.4v1.4h-1.4zM485.9 428.2h1.4v1.4h-1.4zM462.8 444.6h1.4v1.4h-1.4zM503.9 455.5h1.4v1.4h-1.4zM514.1 405.2h1.4v1.4h-1.4zM436.8 458.9h1.4v1.4h-1.4zM487 435h1.4v1.4h-1.4zM464.4 426.6h1.4v1.4h-1.4zM466.5 435.1h1.4v1.4h-1.4zM545.7 398.4h1.4v1.4h-1.4zM444.3 455.4h1.4v1.4h-1.4zM516.5 427.1h1.4v1.4h-1.4zM560 396.3h1.4v1.4h-1.4zM490.2 431h1.4v1.4h-1.4zM462.2 453.3h1.4v1.4h-1.4zM497 445.8h1.4v1.4h-1.4zM496.1 422.4h1.4v1.4h-1.4zM491.8 424.5h1.4v1.4h-1.4zM496 423.9h1.4v1.4h-1.4zM474.4 434.2h1.4v1.4h-1.4zM447.9 453h1.4v1.4h-1.4zM437.8 450h1.4v1.4h-1.4zM463.7 440.3h1.4v1.4h-1.4zM474 434.8h1.4v1.4h-1.4zM461.6 430.8h1.4v1.4h-1.4zM546.5 413.3h1.4v1.4h-1.4zM546.6 368h1.4v1.4h-1.4zM492.8 430.6h1.4v1.4h-1.4zM533.2 436.7h1.4v1.4h-1.4zM493.7 429.1h1.4v1.4h-1.4zM520 425.3h1.4v1.4h-1.4zM478.9 442.2h1.4v1.4h-1.4zM492.8 447.2h1.4v1.4h-1.4zM455.2 434.6h1.4v1.4h-1.4zM460 444.6h1.4v1.4h-1.4zM467.2 446.7h1.4v1.4h-1.4zM451.7 436.9h1.4v1.4h-1.4zM513.8 388.4h1.4v1.4h-1.4zM547.4 416.2h1.4v1.4h-1.4zM497.1 404.6h1.4v1.4h-1.4zM505.9 410.8h1.4v1.4h-1.4zM518.9 390h1.4v1.4h-1.4zM485.7 414.3h1.4v1.4h-1.4zM550.2 395h1.4v1.4h-1.4zM519.6 384.6h1.4v1.4h-1.4zM508 414.5h1.4v1.4h-1.4zM485.9 429.4h1.4v1.4h-1.4zM559.9 418.2h1.4v1.4h-1.4zM531.1 404.2h1.4v1.4h-1.4zM480.1 420.4h1.4v1.4h-1.4zM561.5 415.8h1.4v1.4h-1.4zM543.8 418.8h1.4v1.4h-1.4zM542.5 435.9h1.4v1.4h-1.4zM484.2 427.6h1.4v1.4h-1.4zM537.5 398.6h1.4v1.4h-1.4zM485.3 413.7h1.4v1.4h-1.4zM516 435.8h1.4v1.4h-1.4zM585.6 391.7h1.4v1.4h-1.4zM528.2 374.7h1.4v1.4h-1.4zM458.3 450.8h1.4v1.4h-1.4zM499.7 406.2h1.4v1.4h-1.4zM576.3 417.8h1.4v1.4h-1.4zM434.3 456h1.4v1.4h-1.4zM409.4 457.3h1.4v1.4h-1.4zM478.3 419.9h1.4v1.4h-1.4zM539.8 408.1h1.4v1.4h-1.4zM539 411.9h1.4v1.4h-1.4zM522.1 427.4h1.4v1.4h-1.4zM528.8 412.2h1.4v1.4h-1.4zM459.5 454.1h1.4v1.4h-1.4zM498.8 441.6h1.4v1.4h-1.4zM446.7 455.3h1.4v1.4h-1.4zM445.6 445.1h1.4v1.4h-1.4zM574.6 414.1h1.4v1.4h-1.4zM464.6 440.2h1.4v1.4h-1.4zM490.2 417h1.4v1.4h-1.4zM494.1 438.2h1.4v1.4h-1.4zM501.1 405.9h1.4v1.4h-1.4zM430.2 456.3h1.4v1.4h-1.4zM464.5 448.9h1.4v1.4h-1.4zM500 430.4h1.4v1.4h-1.4zM449.4 444.4h1.4v1.4h-1.4zM557.9 401h1.4v1.4h-1.4zM525.4 387.2h1.4v1.4h-1.4zM545.3 396h1.4v1.4h-1.4zM566.5 371.3h1.4v1.4h-1.4zM529.1 374.7h1.4v1.4h-1.4zM516.2 403.5h1.4v1.4h-1.4zM497.7 401.7h1.4v1.4h-1.4zM579.2 401.9h1.4v1.4h-1.4zM512.1 447.7h1.4v1.4h-1.4zM525.4 413.7h1.4v1.4h-1.4zM457 449.4h1.4v1.4h-1.4zM512.6 399h1.4v1.4h-1.4zM455.8 443.1h1.4v1.4h-1.4zM437.1 444.1h1.4v1.4h-1.4zM476.4 444.9h1.4v1.4h-1.4zM507.7 449h1.4v1.4h-1.4zM583.4 351.9h1.4v1.4h-1.4zM505.2 426.5h1.4v1.4h-1.4zM498.9 441.9h1.4v1.4h-1.4zM463 448.2h1.4v1.4h-1.4zM544.1 392.2h1.4v1.4h-1.4zM531.4 431.9h1.4v1.4h-1.4zM518.2 397.3h1.4v1.4h-1.4zM592.1 411h1.4v1.4h-1.4zM518 399.1h1.4v1.4h-1.4zM473.4 438.7h1.4v1.4h-1.4zM444.3 458.9h1.4v1.4h-1.4zM538 416.7h1.4v1.4h-1.4zM555.8 371.5h1.4v1.4h-1.4zM435 447.8h1.4v1.4h-1.4zM438.6 454.8h1.4v1.4h-1.4zM479.1 443.1h1.4v1.4h-1.4zM438.9 451.1h1.4v1.4h-1.4zM576.2 364.9h1.4v1.4h-1.4zM542.2 365.6h1.4v1.4h-1.4zM490.6 457.8h1.4v1.4h-1.4zM535.9 400.6h1.4v1.4h-1.4zM561.6 420.9h1.4v1.4h-1.4zM459.2 455.4h1.4v1.4h-1.4zM488 432.4h1.4v1.4h-1.4zM536.5 427.8h1.4v1.4h-1.4zM486.7 432h1.4v1.4h-1.4zM479.7 430.6h1.4v1.4h-1.4zM482.2 447.4h1.4v1.4h-1.4zM489.6 441.6h1.4v1.4h-1.4zM490.6 429h1.4v1.4h-1.4zM557 397.3h1.4v1.4h-1.4zM497.3 429.9h1.4v1.4h-1.4zM565 426.2h1.4v1.4h-1.4zM490.7 407.8h1.4v1.4h-1.4zM468.7 439.5h1.4v1.4h-1.4zM538 392.4h1.4v1.4h-1.4zM527.5 371.3h1.4v1.4h-1.4zM544.7 390.3h1.4v1.4h-1.4zM556.4 420.2h1.4v1.4h-1.4zM509.3 420.6h1.4v1.4h-1.4zM555.7 393.2h1.4v1.4h-1.4zM581.5 374.5h1.4v1.4h-1.4zM431.6 451.8h1.4v1.4h-1.4zM486 458.2h1.4v1.4h-1.4zM507.2 399.2h1.4v1.4h-1.4zM525.5 419.9h1.4v1.4h-1.4zM546.2 409.1h1.4v1.4h-1.4zM495.3 419.3h1.4v1.4h-1.4zM471.7 459.4h1.4v1.4h-1.4zM557.9 383h1.4v1.4h-1.4zM523.6 392h1.4v1.4h-1.4zM603.3 359h1.4v1.4h-1.4zM563.6 358.6h1.4v1.4h-1.4zM541.8 407.7h1.4v1.4h-1.4zM581.6 393.4h1.4v1.4h-1.4zM508 455.6h1.4v1.4h-1.4zM420.3 455.4h1.4v1.4h-1.4zM477.8 440.1h1.4v1.4h-1.4zM529.1 436.9h1.4v1.4h-1.4zM539.7 401.4h1.4v1.4h-1.4zM545.7 359.5h1.4v1.4h-1.4zM596 366h1.4v1.4h-1.4zM520.6 379.9h1.4v1.4h-1.4zM567 376.2h1.4v1.4h-1.4zM487.9 431.4h1.4v1.4h-1.4zM457.9 433.8h1.4v1.4h-1.4zM536.3 393.1h1.4v1.4h-1.4zM515.1 424.4h1.4v1.4h-1.4zM447.1 451.6h1.4v1.4h-1.4zM518 387.5h1.4v1.4h-1.4zM477.1 442.8h1.4v1.4h-1.4zM524.9 407.3h1.4v1.4h-1.4zM555.3 372.7h1.4v1.4h-1.4zM478.6 456h1.4v1.4h-1.4zM542.8 372.6h1.4v1.4h-1.4zM548.4 391.4h1.4v1.4h-1.4zM481.6 427.3h1.4v1.4h-1.4zM549.5 427.4h1.4v1.4h-1.4zM490.3 450.6h1.4v1.4h-1.4zM482.3 416.5h1.4v1.4h-1.4zM575.2 384.8h1.4v1.4h-1.4zM536.6 390.1h1.4v1.4h-1.4zM555.8 380.5h1.4v1.4h-1.4zM513.8 444.1h1.4v1.4h-1.4zM468.3 432.1h1.4v1.4h-1.4zM564.9 408.5h1.4v1.4h-1.4zM471.8 431.3h1.4v1.4h-1.4zM583.4 390h1.4v1.4h-1.4zM589 378h1.4v1.4h-1.4zM513 427.7h1.4v1.4h-1.4zM495.2 438.2h1.4v1.4h-1.4zM527.7 439.7h1.4v1.4h-1.4zM534.9 392.6h1.4v1.4h-1.4zM501.5 448.1h1.4v1.4h-1.4zM542.9 385.8h1.4v1.4h-1.4zM538.9 412.5h1.4v1.4h-1.4zM528.3 371.1h1.4v1.4h-1.4zM541.8 418.5h1.4v1.4h-1.4zM503.9 400.2h1.4v1.4h-1.4zM528.6 383.3h1.4v1.4h-1.4zM475.3 432.3h1.4v1.4h-1.4zM535.6 378.2h1.4v1.4h-1.4zM569.2 421.3h1.4v1.4h-1.4zM544.8 432h1.4v1.4h-1.4zM524.1 393h1.4v1.4h-1.4zM492 434.1h1.4v1.4h-1.4zM494.2 401.8h1.4v1.4h-1.4zM478.9 451h1.4v1.4h-1.4zM550 389.6h1.4v1.4h-1.4zM551.6 400.3h1.4v1.4h-1.4zM521.6 431.4h1.4v1.4h-1.4zM459.7 443.3h1.4v1.4h-1.4zM498.6 440.1h1.4v1.4h-1.4zM530.5 396.8h1.4v1.4h-1.4zM574.9 404.3h1.4v1.4h-1.4zM499 453h1.4v1.4h-1.4zM504.7 436.5h1.4v1.4h-1.4zM549 434.5h1.4v1.4h-1.4zM509.3 444.4h1.4v1.4h-1.4zM499.2 425.3h1.4v1.4h-1.4zM526.1 401.8h1.4v1.4h-1.4zM561.9 407.3h1.4v1.4h-1.4zM519.6 408.5h1.4v1.4h-1.4zM470.6 448.3h1.4v1.4h-1.4zM539.3 366.9h1.4v1.4h-1.4zM447.9 454.4h1.4v1.4h-1.4zM575.1 417.4h1.4v1.4h-1.4zM534.1 403.3h1.4v1.4h-1.4zM462.4 447.8h1.4v1.4h-1.4zM519.5 412.8h1.4v1.4h-1.4zM490.1 443h1.4v1.4h-1.4zM480.4 427.3h1.4v1.4h-1.4zM563 415.2h1.4v1.4h-1.4zM514.1 395.5h1.4v1.4h-1.4zM508.3 418h1.4v1.4h-1.4zM454.8 447.6h1.4v1.4h-1.4zM490.4 419h1.4v1.4h-1.4zM436.4 452.8h1.4v1.4h-1.4zM497.3 445.8h1.4v1.4h-1.4zM520.7 442.2h1.4v1.4h-1.4zM537.4 375.6h1.4v1.4h-1.4zM581.7 412.7h1.4v1.4h-1.4zM604.8 366.8h1.4v1.4h-1.4zM555.8 398.8h1.4v1.4h-1.4zM513.9 402h1.4v1.4h-1.4zM583.3 395.4h1.4v1.4h-1.4zM514.9 430.4h1.4v1.4h-1.4zM475.8 438.6h1.4v1.4h-1.4zM436 446.4h1.4v1.4h-1.4zM522.6 411.1h1.4v1.4h-1.4zM557.4 373.4h1.4v1.4h-1.4zM545.7 407.6h1.4v1.4h-1.4zM495.2 409.2h1.4v1.4h-1.4zM454.1 439.9h1.4v1.4h-1.4zM506.6 415.9h1.4v1.4h-1.4zM495.2 416.5h1.4v1.4h-1.4zM488.9 447.6h1.4v1.4h-1.4zM492.5 437.1h1.4v1.4h-1.4zM428.2 458.2h1.4v1.4h-1.4zM453.7 435.9h1.4v1.4h-1.4zM445.6 453.4h1.4v1.4h-1.4zM544.6 380.4h1.4v1.4h-1.4zM494.6 456.5h1.4v1.4h-1.4zM478.4 431.4h1.4v1.4h-1.4zM445.5 451.9h1.4v1.4h-1.4zM431.8 455.2h1.4v1.4h-1.4zM543.2 426.6h1.4v1.4h-1.4zM440 455.1h1.4v1.4h-1.4zM587.4 386.2h1.4v1.4h-1.4zM478.1 434.9h1.4v1.4h-1.4zM437.1 457.9h1.4v1.4h-1.4zM469.6 434.1h1.4v1.4h-1.4zM561 414.2h1.4v1.4h-1.4zM576.5 395.4h1.4v1.4h-1.4zM541.7 416.9h1.4v1.4h-1.4zM522.8 407.4h1.4v1.4h-1.4zM562.6 417.5h1.4v1.4h-1.4zM530.9 422h1.4v1.4h-1.4zM535.8 427h1.4v1.4h-1.4zM488.2 421.8h1.4v1.4h-1.4zM576.7 389.7h1.4v1.4h-1.4zM480.3 417h1.4v1.4h-1.4zM425.7 450.7h1.4v1.4h-1.4zM563.4 389.4h1.4v1.4h-1.4zM467.1 448.2h1.4v1.4h-1.4zM462.2 439h1.4v1.4h-1.4zM569.2 377.9h1.4v1.4h-1.4zM549.3 415.6h1.4v1.4h-1.4zM439.1 453.5h1.4v1.4h-1.4zM555.5 420.5h1.4v1.4h-1.4zM565.2 417.2h1.4v1.4h-1.4zM442.3 451.7h1.4v1.4h-1.4zM579.5 403.5h1.4v1.4h-1.4zM439.1 459.8h1.4v1.4h-1.4zM494.8 410.7h1.4v1.4h-1.4zM440.5 447.3h1.4v1.4h-1.4zM543.4 408.6h1.4v1.4h-1.4zM573.6 408.9h1.4v1.4h-1.4zM556.9 387.1h1.4v1.4h-1.4zM571.2 374.6h1.4v1.4h-1.4zM481.7 443.8h1.4v1.4h-1.4zM452.7 445.2h1.4v1.4h-1.4zM432.3 462.9h1.4v1.4h-1.4zM444.2 451h1.4v1.4h-1.4zM465.9 442.9h1.4v1.4h-1.4zM475 426.2h1.4v1.4h-1.4zM576.1 378.1h1.4v1.4h-1.4zM530.9 412.2h1.4v1.4h-1.4zM538.2 409.9h1.4v1.4h-1.4zM592.4 378.5h1.4v1.4h-1.4zM526.2 420.6h1.4v1.4h-1.4zM483.6 449h1.4v1.4h-1.4zM512.3 430.7h1.4v1.4h-1.4zM558.2 403.9h1.4v1.4h-1.4zM588.1 394.2h1.4v1.4h-1.4zM540.7 410.8h1.4v1.4h-1.4zM583.5 407.4h1.4v1.4h-1.4zM519.4 417.4h1.4v1.4h-1.4zM499.7 447.9h1.4v1.4h-1.4zM575.8 398.5h1.4v1.4h-1.4zM473.2 432h1.4v1.4h-1.4zM558.4 418.3h1.4v1.4h-1.4zM520.8 399.4h1.4v1.4h-1.4zM561.2 408.5h1.4v1.4h-1.4zM552.3 409.1h1.4v1.4h-1.4zM524.3 425.7h1.4v1.4h-1.4zM479.8 435.8h1.4v1.4h-1.4zM458.2 436.3h1.4v1.4h-1.4zM541.5 378.9h1.4v1.4h-1.4zM457.8 447h1.4v1.4h-1.4zM483.4 436.9h1.4v1.4h-1.4zM428.4 449.2h1.4v1.4h-1.4zM515.1 414.8h1.4v1.4h-1.4zM502.8 415.7h1.4v1.4h-1.4zM462.7 448.2h1.4v1.4h-1.4zM494.3 415.9h1.4v1.4h-1.4zM499.6 403.7h1.4v1.4h-1.4zM460.4 454.9h1.4v1.4h-1.4zM492.5 431.4h1.4v1.4h-1.4zM534.3 416.7h1.4v1.4h-1.4zM560.8 377.1h1.4v1.4h-1.4zM570.7 419.1h1.4v1.4h-1.4zM572.6 363.4h1.4v1.4h-1.4zM469.6 438h1.4v1.4h-1.4zM559.8 413.1h1.4v1.4h-1.4zM594.6 398h1.4v1.4h-1.4zM510.8 392h1.4v1.4h-1.4zM467.7 467h1.4v1.4h-1.4zM480.2 416.5h1.4v1.4h-1.4zM493.8 401.4h1.4v1.4h-1.4zM550.3 421.7h1.4v1.4h-1.4zM559.5 401.9h1.4v1.4h-1.4zM511.9 436.4h1.4v1.4h-1.4zM558.4 397.7h1.4v1.4h-1.4zM558.2 388.4h1.4v1.4h-1.4zM578.2 373.7h1.4v1.4h-1.4zM519.6 417.5h1.4v1.4h-1.4zM594.4 409.9h1.4v1.4h-1.4zM475.9 448.2h1.4v1.4h-1.4zM560.1 402.5h1.4v1.4h-1.4zM529.8 406.9h1.4v1.4h-1.4zM527.7 425.2h1.4v1.4h-1.4zM556.4 382.9h1.4v1.4h-1.4zM460.8 438.8h1.4v1.4h-1.4zM520.1 406.7h1.4v1.4h-1.4zM561.7 395.9h1.4v1.4h-1.4zM479.2 456.8h1.4v1.4h-1.4zM500.7 448.8h1.4v1.4h-1.4zM490.5 455.3h1.4v1.4h-1.4zM512.3 395.9h1.4v1.4h-1.4zM471.8 455.7h1.4v1.4h-1.4zM537.9 410.2h1.4v1.4h-1.4zM541.1 397.3h1.4v1.4h-1.4zM468.8 433.4h1.4v1.4h-1.4zM577.6 386h1.4v1.4h-1.4zM559.7 388.2h1.4v1.4h-1.4zM557.1 410.7h1.4v1.4h-1.4zM541.4 434.8h1.4v1.4h-1.4zM427 458.3h1.4v1.4h-1.4zM574.5 349h1.4v1.4h-1.4zM505.8 414.3h1.4v1.4h-1.4zM552.7 429.3h1.4v1.4h-1.4zM531.6 414.9h1.4v1.4h-1.4zM551 386.9h1.4v1.4h-1.4zM470.9 437.3h1.4v1.4h-1.4zM519.5 377.3h1.4v1.4h-1.4zM555.5 379.9h1.4v1.4h-1.4zM597.7 399.4h1.4v1.4h-1.4zM544.2 403.8h1.4v1.4h-1.4zM566.2 408.4h1.4v1.4h-1.4zM477.7 424.1h1.4v1.4h-1.4zM476.3 420.6h1.4v1.4h-1.4zM467.7 446.4h1.4v1.4h-1.4zM494 405.7h1.4v1.4h-1.4zM581.5 375.6h1.4v1.4h-1.4zM590.9 394.3h1.4v1.4h-1.4zM516.1 422.3h1.4v1.4h-1.4zM510.5 443.6h1.4v1.4h-1.4zM543.3 422.8h1.4v1.4h-1.4zM548.1 395.9h1.4v1.4h-1.4zM527.6 387h1.4v1.4h-1.4zM546.7 405.4h1.4v1.4h-1.4zM563.9 414.4h1.4v1.4h-1.4zM553.9 406.5h1.4v1.4h-1.4zM523.8 415.3h1.4v1.4h-1.4zM483.2 416.1h1.4v1.4h-1.4zM461.4 441.4h1.4v1.4h-1.4zM500.8 419.8h1.4v1.4h-1.4zM481.3 443.7h1.4v1.4h-1.4zM538.8 382.6h1.4v1.4h-1.4zM487.5 429.7h1.4v1.4h-1.4zM563 354h1.4v1.4h-1.4zM450.7 442.3h1.4v1.4h-1.4zM491.2 426.2h1.4v1.4h-1.4zM458.1 446.3h1.4v1.4h-1.4zM583.1 388.1h1.4v1.4h-1.4zM551 426.6h1.4v1.4h-1.4zM523.3 404.1h1.4v1.4h-1.4zM478.7 427.8h1.4v1.4h-1.4zM501.4 447.8h1.4v1.4h-1.4zM442.4 458.6h1.4v1.4h-1.4zM555.3 376.5h1.4v1.4h-1.4zM552.2 369.4h1.4v1.4h-1.4zM453.9 437.9h1.4v1.4h-1.4zM463.9 439h1.4v1.4h-1.4zM478.2 456.9h1.4v1.4h-1.4zM505.1 431.7h1.4v1.4h-1.4zM596.3 384.8h1.4v1.4h-1.4zM465 443.1h1.4v1.4h-1.4zM525.6 429h1.4v1.4h-1.4zM514.5 432.3h1.4v1.4h-1.4zM589.9 407.3h1.4v1.4h-1.4zM525 417.2h1.4v1.4h-1.4zM510.9 399.8h1.4v1.4h-1.4zM448.5 440.6h1.4v1.4h-1.4zM571.8 396.7h1.4v1.4h-1.4zM531.5 422.4h1.4v1.4h-1.4zM454.3 443.3h1.4v1.4h-1.4zM552.6 427h1.4v1.4h-1.4zM503.1 437h1.4v1.4h-1.4zM490.1 436.4h1.4v1.4h-1.4zM578.5 372.4h1.4v1.4h-1.4zM436.1 459h1.4v1.4h-1.4zM579.9 401.6h1.4v1.4h-1.4zM456.2 434.6h1.4v1.4h-1.4zM573.4 395.8h1.4v1.4h-1.4zM489.5 411.9h1.4v1.4h-1.4zM551.4 393.5h1.4v1.4h-1.4zM478.9 434.6h1.4v1.4h-1.4zM570.5 363.3h1.4v1.4h-1.4zM521.6 413.8h1.4v1.4h-1.4zM505.8 393.7h1.4v1.4h-1.4zM461 436.2h1.4v1.4h-1.4zM522.6 441.1h1.4v1.4h-1.4zM491.6 409.9h1.4v1.4h-1.4zM583.7 368.5h1.4v1.4h-1.4zM439.2 441.7h1.4v1.4h-1.4zM531.7 394.4h1.4v1.4h-1.4zM503.8 411.3h1.4v1.4h-1.4zM506.7 434.7h1.4v1.4h-1.4zM566.5 415.6h1.4v1.4h-1.4zM524 383.9h1.4v1.4h-1.4zM462.9 431h1.4v1.4h-1.4zM490.5 434.4h1.4v1.4h-1.4zM513.8 436.1h1.4v1.4h-1.4zM487.3 413.6h1.4v1.4h-1.4zM486.9 452.5h1.4v1.4h-1.4zM449.1 455.3h1.4v1.4h-1.4zM586.1 402.5h1.4v1.4h-1.4zM466.8 449h1.4v1.4h-1.4zM534.9 415.2h1.4v1.4h-1.4zM486.6 446.6h1.4v1.4h-1.4zM591.1 364.1h1.4v1.4h-1.4zM533.6 380.8h1.4v1.4h-1.4zM481.1 432.5h1.4v1.4h-1.4zM473.8 435.8h1.4v1.4h-1.4zM572.8 388.8h1.4v1.4h-1.4zM470.2 431.5h1.4v1.4h-1.4zM540.8 404h1.4v1.4h-1.4zM572.1 371.3h1.4v1.4h-1.4zM512.7 441.8h1.4v1.4h-1.4zM469.4 452.3h1.4v1.4h-1.4zM479.7 437.6h1.4v1.4h-1.4zM527 403.7h1.4v1.4h-1.4zM533.4 371.7h1.4v1.4h-1.4zM558.8 399.8h1.4v1.4h-1.4zM499.1 445.6h1.4v1.4h-1.4zM439.4 455h1.4v1.4h-1.4zM496.4 422.1h1.4v1.4h-1.4zM479 449.8h1.4v1.4h-1.4zM446.7 451.3h1.4v1.4h-1.4zM524.2 423.1h1.4v1.4h-1.4zM532.3 437.3h1.4v1.4h-1.4zM475.4 430.3h1.4v1.4h-1.4zM552.1 362h1.4v1.4h-1.4zM542.5 415.7h1.4v1.4h-1.4zM491.7 438.5h1.4v1.4h-1.4zM492.5 412.4h1.4v1.4h-1.4zM475.7 419.8h1.4v1.4h-1.4zM564.5 390.5h1.4v1.4h-1.4zM567.2 411.6h1.4v1.4h-1.4zM446.9 442.3h1.4v1.4h-1.4zM542.1 429.4h1.4v1.4h-1.4zM528.9 432.9h1.4v1.4h-1.4zM533.2 426.2h1.4v1.4h-1.4zM489.2 420.7h1.4v1.4h-1.4zM498.3 413.3h1.4v1.4h-1.4zM420.4 457.8h1.4v1.4h-1.4zM539.6 377.3h1.4v1.4h-1.4zM425.2 462.4h1.4v1.4h-1.4zM528.4 380.7h1.4v1.4h-1.4zM524 416.9h1.4v1.4h-1.4zM568.3 423h1.4v1.4h-1.4zM546.9 385.7h1.4v1.4h-1.4zM538.7 424.3h1.4v1.4h-1.4zM519.5 408.6h1.4v1.4h-1.4zM534.7 432h1.4v1.4h-1.4zM541.3 421.7h1.4v1.4h-1.4zM569.4 391.5h1.4v1.4h-1.4zM454.6 454.8h1.4v1.4h-1.4zM550.8 392.9h1.4v1.4h-1.4zM478.6 420.8h1.4v1.4h-1.4zM475.4 440.7h1.4v1.4h-1.4zM545.7 369.1h1.4v1.4h-1.4zM467.5 425.8h1.4v1.4h-1.4zM569.6 394.5h1.4v1.4h-1.4zM517.8 430.1h1.4v1.4h-1.4zM525.2 414.6h1.4v1.4h-1.4zM476.7 452h1.4v1.4h-1.4zM544.9 379.9h1.4v1.4h-1.4zM515.8 430.4h1.4v1.4h-1.4zM462.8 453.4h1.4v1.4h-1.4zM478.1 418.4h1.4v1.4h-1.4zM572.4 415.8h1.4v1.4h-1.4zM506.9 428.1h1.4v1.4h-1.4zM566.6 412.4h1.4v1.4h-1.4zM487.1 430.4h1.4v1.4h-1.4zM494.7 454.6h1.4v1.4h-1.4zM522.8 444.3h1.4v1.4h-1.4zM430.1 449.8h1.4v1.4h-1.4zM498.2 450.4h1.4v1.4h-1.4zM492.4 451.7h1.4v1.4h-1.4zM534.3 396.3h1.4v1.4h-1.4zM559.4 384.1h1.4v1.4h-1.4zM586.7 391.6h1.4v1.4h-1.4zM453.5 438.5h1.4v1.4h-1.4zM495.9 450.8h1.4v1.4h-1.4zM509.5 397.4h1.4v1.4h-1.4zM482 440.5h1.4v1.4h-1.4zM502.3 431.9h1.4v1.4h-1.4zM506.9 406.9h1.4v1.4h-1.4zM531.5 407.7h1.4v1.4h-1.4zM515.6 434.6h1.4v1.4h-1.4zM559.9 385h1.4v1.4h-1.4zM551 380h1.4v1.4h-1.4zM541.4 415.1h1.4v1.4h-1.4zM592.3 389.2h1.4v1.4h-1.4zM518.5 446.1h1.4v1.4h-1.4zM508.2 436.3h1.4v1.4h-1.4zM505 440.2h1.4v1.4h-1.4zM524.6 420.5h1.4v1.4h-1.4zM531.7 398.2h1.4v1.4h-1.4zM527.2 404h1.4v1.4h-1.4zM558 390.4h1.4v1.4h-1.4zM462.8 452.4h1.4v1.4h-1.4zM558.1 401.3h1.4v1.4h-1.4zM497.9 411.6h1.4v1.4h-1.4zM506.6 430.5h1.4v1.4h-1.4zM495.1 431.1h1.4v1.4h-1.4zM529.8 390.3h1.4v1.4h-1.4zM585.1 404.6h1.4v1.4h-1.4zM501.5 416.1h1.4v1.4h-1.4zM495.4 423.3h1.4v1.4h-1.4zM514.6 401.1h1.4v1.4h-1.4zM487.1 438.6h1.4v1.4h-1.4zM512.3 438.7h1.4v1.4h-1.4zM457.2 439.6h1.4v1.4h-1.4zM593.4 405.9h1.4v1.4h-1.4zM536.9 416.3h1.4v1.4h-1.4zM581.9 373.4h1.4v1.4h-1.4zM552.9 396.6h1.4v1.4h-1.4zM482.2 426.6h1.4v1.4h-1.4zM556.7 403.3h1.4v1.4h-1.4zM553.4 419.5h1.4v1.4h-1.4zM473.5 426.9h1.4v1.4h-1.4zM484.7 433.4h1.4v1.4h-1.4zM578.7 413.5h1.4v1.4h-1.4zM567.5 370.9h1.4v1.4h-1.4zM457.8 450.5h1.4v1.4h-1.4zM584.4 373.4h1.4v1.4h-1.4zM510.7 433h1.4v1.4h-1.4zM532.3 421.1h1.4v1.4h-1.4zM481 428.7h1.4v1.4h-1.4zM470.5 438.6h1.4v1.4h-1.4zM449.2 454.4h1.4v1.4h-1.4zM477.5 428.5h1.4v1.4h-1.4zM506.8 450.1h1.4v1.4h-1.4zM467.9 444h1.4v1.4h-1.4zM486 456.2h1.4v1.4h-1.4zM553.7 370.8h1.4v1.4h-1.4zM465.2 454.5h1.4v1.4h-1.4zM503.5 422.8h1.4v1.4h-1.4zM515.8 431.2h1.4v1.4h-1.4zM527.9 405.7h1.4v1.4h-1.4zM491.7 427.5h1.4v1.4h-1.4zM442.7 453.2h1.4v1.4h-1.4zM477.6 430h1.4v1.4h-1.4zM493 442.3h1.4v1.4h-1.4zM558.6 379.9h1.4v1.4h-1.4zM489.7 406.9h1.4v1.4h-1.4zM534.9 403.5h1.4v1.4h-1.4zM438.7 454.1h1.4v1.4h-1.4zM527.4 398.4h1.4v1.4h-1.4zM604.7 374.2h1.4v1.4h-1.4zM493.4 415.1h1.4v1.4h-1.4zM523.9 383.7h1.4v1.4h-1.4zM550.3 386h1.4v1.4h-1.4zM485.5 434.1h1.4v1.4h-1.4zM478.3 431.9h1.4v1.4h-1.4zM560 359.8h1.4v1.4h-1.4zM588.6 376.5h1.4v1.4h-1.4zM577.2 373h1.4v1.4h-1.4zM433.4 450.3h1.4v1.4h-1.4zM470.4 433h1.4v1.4h-1.4zM502.7 408.2h1.4v1.4h-1.4zM568.5 385h1.4v1.4h-1.4zM450.5 443.4h1.4v1.4h-1.4zM538 411.9h1.4v1.4h-1.4zM494.5 437.5h1.4v1.4h-1.4zM512.2 449.5h1.4v1.4h-1.4zM497.9 436.7h1.4v1.4h-1.4zM523.5 430.8h1.4v1.4h-1.4zM440.2 444.1h1.4v1.4h-1.4zM442.2 447.6h1.4v1.4h-1.4zM530.7 417.5h1.4v1.4h-1.4zM602.4 395.5h1.4v1.4h-1.4zM570.8 396.5h1.4v1.4h-1.4zM519.7 436.6h1.4v1.4h-1.4zM467.3 443h1.4v1.4h-1.4zM549.4 415.6h1.4v1.4h-1.4zM501.1 418.2h1.4v1.4h-1.4zM537.3 364.9h1.4v1.4h-1.4zM564.3 397.6h1.4v1.4h-1.4zM567.8 377.5h1.4v1.4h-1.4zM468.6 432.9h1.4v1.4h-1.4zM486.3 420h1.4v1.4h-1.4zM533.8 379.5h1.4v1.4h-1.4zM464.2 460.1h1.4v1.4h-1.4zM507.6 420.5h1.4v1.4h-1.4zM486.9 434.3h1.4v1.4h-1.4zM519.9 403.2h1.4v1.4h-1.4zM494.2 425.3h1.4v1.4h-1.4zM465.3 442.3h1.4v1.4h-1.4zM455.2 445.6h1.4v1.4h-1.4zM467 452.4h1.4v1.4h-1.4zM449.7 458.3h1.4v1.4h-1.4zM542 402h1.4v1.4h-1.4zM592.9 381.4h1.4v1.4h-1.4zM494.4 415.7h1.4v1.4h-1.4zM569.6 387.4h1.4v1.4h-1.4zM428 447.6h1.4v1.4h-1.4zM578.3 407.9h1.4v1.4h-1.4zM482.2 442.1h1.4v1.4h-1.4zM487.6 418.5h1.4v1.4h-1.4zM539.8 381.2h1.4v1.4h-1.4zM514.7 419.7h1.4v1.4h-1.4zM435 449h1.4v1.4h-1.4zM552 400.7h1.4v1.4h-1.4zM555.2 393.4h1.4v1.4h-1.4zM436.4 449.4h1.4v1.4h-1.4zM484.4 413.4h1.4v1.4h-1.4zM482 452.3h1.4v1.4h-1.4zM566.9 413.1h1.4v1.4h-1.4zM589.3 399.9h1.4v1.4h-1.4zM520.8 424.1h1.4v1.4h-1.4zM595.9 379.5h1.4v1.4h-1.4zM495.2 409.5h1.4v1.4h-1.4zM547.5 372h1.4v1.4h-1.4zM506.5 403.7h1.4v1.4h-1.4zM505.4 435.6h1.4v1.4h-1.4zM450.6 459.1h1.4v1.4h-1.4zM457.9 440.8h1.4v1.4h-1.4zM494.7 405.7h1.4v1.4h-1.4zM452.4 461.2h1.4v1.4h-1.4zM484.5 416.4h1.4v1.4h-1.4zM562.2 405.6h1.4v1.4h-1.4zM449 441.7h1.4v1.4h-1.4zM500.4 432.7h1.4v1.4h-1.4zM440.6 454.7h1.4v1.4h-1.4zM523.4 431.9h1.4v1.4h-1.4zM544.2 413.8h1.4v1.4h-1.4zM532.6 427.2h1.4v1.4h-1.4zM517.4 404.2h1.4v1.4h-1.4zM499.6 436.2h1.4v1.4h-1.4zM519.6 407h1.4v1.4h-1.4zM594.8 411.1h1.4v1.4h-1.4zM544.7 417.2h1.4v1.4h-1.4zM503.2 454.2h1.4v1.4h-1.4zM512.1 409.6h1.4v1.4h-1.4zM528.7 430.1h1.4v1.4h-1.4zM542.5 432.2h1.4v1.4h-1.4zM508.2 431.7h1.4v1.4h-1.4zM556 420.6h1.4v1.4h-1.4zM528.7 386.2h1.4v1.4h-1.4zM481.2 425.2h1.4v1.4h-1.4zM544.6 386.1h1.4v1.4h-1.4zM519.1 411.1h1.4v1.4h-1.4zM499 401.1h1.4v1.4h-1.4zM528.1 427.2h1.4v1.4h-1.4zM507.8 390.3h1.4v1.4h-1.4zM499.6 424.4h1.4v1.4h-1.4zM496.7 424.1h1.4v1.4h-1.4zM446.1 462h1.4v1.4h-1.4zM478.4 447h1.4v1.4h-1.4zM554.6 428.4h1.4v1.4h-1.4zM533.3 416.2h1.4v1.4h-1.4zM519 410.2h1.4v1.4h-1.4zM478.8 431.4h1.4v1.4h-1.4zM537.3 428.9h1.4v1.4h-1.4zM484.9 420.4h1.4v1.4h-1.4zM553.8 412.4h1.4v1.4h-1.4zM444 445h1.4v1.4h-1.4zM533.6 417.2h1.4v1.4h-1.4zM460.9 439.1h1.4v1.4h-1.4zM496.2 411.4h1.4v1.4h-1.4zM427.3 455.6h1.4v1.4h-1.4zM525.1 410.5h1.4v1.4h-1.4zM467.2 432.3h1.4v1.4h-1.4zM585.9 407.8h1.4v1.4h-1.4zM581.9 367.3h1.4v1.4h-1.4zM521.5 430.8h1.4v1.4h-1.4zM528.7 436.2h1.4v1.4h-1.4zM508.8 396.4h1.4v1.4h-1.4zM446.5 448.6h1.4v1.4h-1.4zM466 428.6h1.4v1.4h-1.4zM507.6 424.7h1.4v1.4h-1.4zM555.3 393.2h1.4v1.4h-1.4zM512.6 424.3h1.4v1.4h-1.4zM486.9 441.1h1.4v1.4h-1.4zM571.7 412.9h1.4v1.4h-1.4zM477.3 437h1.4v1.4h-1.4zM501.1 401.8h1.4v1.4h-1.4zM558.4 415.8h1.4v1.4h-1.4zM469.2 441.8h1.4v1.4h-1.4zM541.6 372h1.4v1.4h-1.4zM575.1 398.7h1.4v1.4h-1.4zM479.3 445.2h1.4v1.4h-1.4zM432.3 448.6h1.4v1.4h-1.4zM471.8 457.4h1.4v1.4h-1.4zM558.7 399.5h1.4v1.4h-1.4zM556.9 413.2h1.4v1.4h-1.4zM569.9 355.6h1.4v1.4h-1.4zM518.9 417.1h1.4v1.4h-1.4zM439.2 445.7h1.4v1.4h-1.4zM504.9 398.3h1.4v1.4h-1.4zM549 426.1h1.4v1.4h-1.4zM481.8 453.9h1.4v1.4h-1.4zM556.3 430.1h1.4v1.4h-1.4zM541.3 423.2h1.4v1.4h-1.4zM434.5 452.1h1.4v1.4h-1.4zM574.8 399.7h1.4v1.4h-1.4zM557.7 385.5h1.4v1.4h-1.4zM540.7 427.2h1.4v1.4h-1.4zM535.1 409.4h1.4v1.4h-1.4zM496.3 417.1h1.4v1.4h-1.4zM462 457.4h1.4v1.4h-1.4zM452.4 456.2h1.4v1.4h-1.4zM472.6 447.1h1.4v1.4h-1.4zM446.2 452.5h1.4v1.4h-1.4zM446.2 454.3h1.4v1.4h-1.4zM431.2 459.8h1.4v1.4h-1.4zM512.5 412.8h1.4v1.4h-1.4zM516.2 428.1h1.4v1.4h-1.4zM513.1 394.3h1.4v1.4h-1.4zM584.2 403.1h1.4v1.4h-1.4zM494.2 453.5h1.4v1.4h-1.4zM458.9 453.2h1.4v1.4h-1.4zM467.6 461.3h1.4v1.4h-1.4zM426.8 456.6h1.4v1.4h-1.4zM529.4 416.4h1.4v1.4h-1.4zM577.3 416.5h1.4v1.4h-1.4zM475 447.7h1.4v1.4h-1.4zM523.4 397.2h1.4v1.4h-1.4zM536.6 416.2h1.4v1.4h-1.4zM533.3 428.1h1.4v1.4h-1.4zM445.1 454.2h1.4v1.4h-1.4zM477 433.9h1.4v1.4h-1.4zM510.4 410.7h1.4v1.4h-1.4zM560.2 381.9h1.4v1.4h-1.4zM510.5 425.8h1.4v1.4h-1.4zM517 396.7h1.4v1.4h-1.4zM506.7 400.8h1.4v1.4h-1.4zM478.6 450.6h1.4v1.4h-1.4zM507.5 437.7h1.4v1.4h-1.4zM581.1 416h1.4v1.4h-1.4zM509.1 407.3h1.4v1.4h-1.4zM613.6 356.8h1.4v1.4h-1.4zM459.5 441.3h1.4v1.4h-1.4zM508.9 435.6h1.4v1.4h-1.4zM506.1 414h1.4v1.4h-1.4zM488.2 437.3h1.4v1.4h-1.4zM532.1 401.7h1.4v1.4h-1.4zM502.1 399.7h1.4v1.4h-1.4zM552.5 387.4h1.4v1.4h-1.4zM511.2 422h1.4v1.4h-1.4zM503.2 405.9h1.4v1.4h-1.4zM465.2 445.9h1.4v1.4h-1.4zM463.1 442.1h1.4v1.4h-1.4zM462.8 442.3h1.4v1.4h-1.4zM572.2 365.2h1.4v1.4h-1.4zM521 409h1.4v1.4h-1.4zM485.5 436h1.4v1.4h-1.4zM444.2 451.6h1.4v1.4h-1.4zM482.8 445.5h1.4v1.4h-1.4zM541.1 380.6h1.4v1.4h-1.4zM551.1 411.8h1.4v1.4h-1.4zM572.9 374.4h1.4v1.4h-1.4zM565.7 413.3h1.4v1.4h-1.4zM534.4 420.9h1.4v1.4h-1.4zM470.7 423.7h1.4v1.4h-1.4zM592.2 378.4h1.4v1.4h-1.4zM503.1 428.2h1.4v1.4h-1.4zM517.1 409.4h1.4v1.4h-1.4zM479.3 417.4h1.4v1.4h-1.4zM520 434.6h1.4v1.4h-1.4zM467.4 430h1.4v1.4h-1.4zM587.2 393.8h1.4v1.4h-1.4zM474.7 451.6h1.4v1.4h-1.4zM571.9 372.7h1.4v1.4h-1.4zM468.8 433.5h1.4v1.4h-1.4zM499.2 440.9h1.4v1.4h-1.4zM476.2 434.1h1.4v1.4h-1.4zM588.6 368.9h1.4v1.4h-1.4zM468.2 447.3h1.4v1.4h-1.4zM494.6 434h1.4v1.4h-1.4zM559.6 416.6h1.4v1.4h-1.4zM542.8 390.1h1.4v1.4h-1.4zM532.8 434.9h1.4v1.4h-1.4zM511.2 399.7h1.4v1.4h-1.4zM514 434.5h1.4v1.4h-1.4zM512.4 417.2h1.4v1.4h-1.4zM443.7 440.7h1.4v1.4h-1.4zM528.3 417h1.4v1.4h-1.4zM538 394h1.4v1.4h-1.4zM476.1 423.4h1.4v1.4h-1.4zM510.3 394.7h1.4v1.4h-1.4zM487.5 421.5h1.4v1.4h-1.4zM487.8 450.6h1.4v1.4h-1.4zM533.5 409.8h1.4v1.4h-1.4zM522.7 429.9h1.4v1.4h-1.4zM499.8 405.8h1.4v1.4h-1.4zM526.9 432.3h1.4v1.4h-1.4zM485 434.8h1.4v1.4h-1.4zM534.5 401.1h1.4v1.4h-1.4zM485.9 421.6h1.4v1.4h-1.4zM470.6 440.3h1.4v1.4h-1.4zM535.6 374.5h1.4v1.4h-1.4zM494.4 427.1h1.4v1.4h-1.4zM498.4 430.7h1.4v1.4h-1.4zM455.5 431.8h1.4v1.4h-1.4zM514.3 428.6h1.4v1.4h-1.4zM453.4 435.9h1.4v1.4h-1.4zM455 450h1.4v1.4h-1.4zM581.5 397.8h1.4v1.4h-1.4zM532.6 402.7h1.4v1.4h-1.4zM549.8 410.5h1.4v1.4h-1.4zM473.8 443.3h1.4v1.4h-1.4zM447.8 447.4h1.4v1.4h-1.4zM553.1 406.2h1.4v1.4h-1.4zM563.2 378.6h1.4v1.4h-1.4zM501.5 402.3h1.4v1.4h-1.4zM531.7 407.1h1.4v1.4h-1.4zM460.6 452.3h1.4v1.4h-1.4zM471.6 437.2h1.4v1.4h-1.4zM517.1 405.8h1.4v1.4h-1.4zM485.3 415.9h1.4v1.4h-1.4zM495.9 436.1h1.4v1.4h-1.4zM526.5 387.3h1.4v1.4h-1.4zM476.5 432.7h1.4v1.4h-1.4zM538.4 403.8h1.4v1.4h-1.4zM495.2 421.6h1.4v1.4h-1.4zM470 454.3h1.4v1.4h-1.4zM531.6 422.3h1.4v1.4h-1.4zM529.9 422.4h1.4v1.4h-1.4zM516.1 377.9h1.4v1.4h-1.4zM494.1 420.3h1.4v1.4h-1.4zM529.4 388.6h1.4v1.4h-1.4zM491.1 420h1.4v1.4h-1.4zM541.9 409.2h1.4v1.4h-1.4zM492.6 440.1h1.4v1.4h-1.4zM529.2 388.3h1.4v1.4h-1.4zM458 435.1h1.4v1.4h-1.4zM485.7 448.4h1.4v1.4h-1.4zM494.1 443.2h1.4v1.4h-1.4zM472.1 428.4h1.4v1.4h-1.4zM571.5 377.8h1.4v1.4h-1.4zM519.6 417.1h1.4v1.4h-1.4zM536.2 418.5h1.4v1.4h-1.4zM581.3 412.2h1.4v1.4h-1.4zM519.8 445h1.4v1.4h-1.4zM458.8 452.8h1.4v1.4h-1.4zM451.8 445.4h1.4v1.4h-1.4zM468.7 458.5h1.4v1.4h-1.4zM516.1 384.4h1.4v1.4h-1.4zM527.3 440.9h1.4v1.4h-1.4zM540.4 423.3h1.4v1.4h-1.4zM551.8 403.2h1.4v1.4h-1.4zM516 407.2h1.4v1.4h-1.4zM612.2 378.3h1.4v1.4h-1.4zM497.2 415.7h1.4v1.4h-1.4zM558.5 398.4h1.4v1.4h-1.4zM571.8 387.5h1.4v1.4h-1.4zM441.9 460.1h1.4v1.4h-1.4zM465.7 431.8h1.4v1.4h-1.4zM564.3 409.4h1.4v1.4h-1.4zM491.2 447h1.4v1.4h-1.4zM580.6 352.5h1.4v1.4h-1.4zM474.6 456.6h1.4v1.4h-1.4zM468.9 426.5h1.4v1.4h-1.4zM496.3 423.5h1.4v1.4h-1.4zM499.6 442.8h1.4v1.4h-1.4zM488.2 444.3h1.4v1.4h-1.4zM567.9 369.7h1.4v1.4h-1.4zM572.8 369.5h1.4v1.4h-1.4zM602.4 370.6h1.4v1.4h-1.4zM456.1 441.3h1.4v1.4h-1.4zM510.7 405.1h1.4v1.4h-1.4zM608.4 396.5h1.4v1.4h-1.4zM553.1 381.5h1.4v1.4h-1.4zM534.5 388.3h1.4v1.4h-1.4zM537.4 424.9h1.4v1.4h-1.4zM511.9 405.6h1.4v1.4h-1.4zM499.7 396.8h1.4v1.4h-1.4zM454.4 461.3h1.4v1.4h-1.4zM515 439h1.4v1.4h-1.4zM528.1 424.5h1.4v1.4h-1.4zM486.3 447.3h1.4v1.4h-1.4zM419.8 456.4h1.4v1.4h-1.4zM512.9 443.1h1.4v1.4h-1.4zM491.7 418.7h1.4v1.4h-1.4zM452.5 455.3h1.4v1.4h-1.4zM482.8 416h1.4v1.4h-1.4zM476.2 427.3h1.4v1.4h-1.4zM571.4 408.1h1.4v1.4h-1.4zM566.6 413.3h1.4v1.4h-1.4zM540 412.7h1.4v1.4h-1.4zM538.7 380.7h1.4v1.4h-1.4zM551.5 363.5h1.4v1.4h-1.4zM489.8 422h1.4v1.4h-1.4zM591.9 370.2h1.4v1.4h-1.4zM532.3 409.8h1.4v1.4h-1.4zM538.3 438h1.4v1.4h-1.4zM523.6 445.3h1.4v1.4h-1.4zM474.3 428.5h1.4v1.4h-1.4zM565 381.3h1.4v1.4h-1.4zM552.3 416.8h1.4v1.4h-1.4zM556.4 388.4h1.4v1.4h-1.4zM432.9 448.6h1.4v1.4h-1.4zM442.3 461.9h1.4v1.4h-1.4zM453.4 451.2h1.4v1.4h-1.4zM535.6 383.1h1.4v1.4h-1.4zM514.2 446.9h1.4v1.4h-1.4zM500.4 447.8h1.4v1.4h-1.4zM482 443.6h1.4v1.4h-1.4zM571.5 390.5h1.4v1.4h-1.4zM536.3 424.4h1.4v1.4h-1.4zM478.6 443.5h1.4v1.4h-1.4zM524.9 444.7h1.4v1.4h-1.4zM610.1 376h1.4v1.4h-1.4zM548.7 401.4h1.4v1.4h-1.4zM488.7 415.6h1.4v1.4h-1.4zM549.9 397.7h1.4v1.4h-1.4zM569.7 381.9h1.4v1.4h-1.4zM477.4 446.8h1.4v1.4h-1.4zM502.4 421.2h1.4v1.4h-1.4zM582.7 376.6h1.4v1.4h-1.4zM548.1 373.9h1.4v1.4h-1.4zM499.9 410.9h1.4v1.4h-1.4zM581.1 368.9h1.4v1.4h-1.4zM545.7 392.9h1.4v1.4h-1.4zM589.1 381.8h1.4v1.4h-1.4zM562.9 377.9h1.4v1.4h-1.4zM535.3 395.5h1.4v1.4h-1.4zM507 392.6h1.4v1.4h-1.4zM499.2 441.6h1.4v1.4h-1.4zM552.8 394.4h1.4v1.4h-1.4zM476.3 424.3h1.4v1.4h-1.4zM536.3 396.4h1.4v1.4h-1.4zM487.1 440h1.4v1.4h-1.4zM566.2 365.5h1.4v1.4h-1.4zM556.6 409h1.4v1.4h-1.4zM544 414.6h1.4v1.4h-1.4zM531.9 381h1.4v1.4h-1.4zM581.3 402.9h1.4v1.4h-1.4zM463.5 440.2h1.4v1.4h-1.4zM483.9 421.1h1.4v1.4h-1.4zM507.7 423h1.4v1.4h-1.4zM600.4 383.9h1.4v1.4h-1.4zM571.6 366.4h1.4v1.4h-1.4zM505.5 403.1h1.4v1.4h-1.4zM446.1 446.9h1.4v1.4h-1.4zM464.2 457.6h1.4v1.4h-1.4zM582.7 400.9h1.4v1.4h-1.4zM599 377.5h1.4v1.4h-1.4zM559.4 386.2h1.4v1.4h-1.4zM479.1 451.3h1.4v1.4h-1.4zM535.3 401.4h1.4v1.4h-1.4zM469.3 440.1h1.4v1.4h-1.4zM575.3 386.7h1.4v1.4h-1.4zM452.7 451.3h1.4v1.4h-1.4zM442.8 445.3h1.4v1.4h-1.4zM459.8 436.9h1.4v1.4h-1.4zM566.5 408.1h1.4v1.4h-1.4zM449.9 453.3h1.4v1.4h-1.4zM573 373.4h1.4v1.4h-1.4zM432.3 450.5h1.4v1.4h-1.4zM496.1 436.2h1.4v1.4h-1.4zM489.5 434.1h1.4v1.4h-1.4zM553.5 359.1h1.4v1.4h-1.4zM569.3 392.3h1.4v1.4h-1.4zM522.3 379.1h1.4v1.4h-1.4zM543.8 414.7h1.4v1.4h-1.4zM442.1 447.1h1.4v1.4h-1.4zM457.4 446h1.4v1.4h-1.4zM536.4 390.9h1.4v1.4h-1.4zM544.6 397.5h1.4v1.4h-1.4zM493.1 444.8h1.4v1.4h-1.4zM489.2 421.4h1.4v1.4h-1.4zM547.9 360.5h1.4v1.4h-1.4zM495 440.1h1.4v1.4h-1.4zM559.3 424h1.4v1.4h-1.4zM482.6 457.1h1.4v1.4h-1.4zM502.4 404h1.4v1.4h-1.4zM495.9 419.3h1.4v1.4h-1.4zM491.1 411.8h1.4v1.4h-1.4zM469.5 443.5h1.4v1.4h-1.4zM560.5 385.8h1.4v1.4h-1.4zM468.6 440.8h1.4v1.4h-1.4zM528.8 371.8h1.4v1.4h-1.4zM423.1 463.1h1.4v1.4h-1.4zM531.7 408.1h1.4v1.4h-1.4zM578.2 377.6h1.4v1.4h-1.4zM497.6 420.1h1.4v1.4h-1.4zM499.5 406.3h1.4v1.4h-1.4zM566.7 387h1.4v1.4h-1.4zM552.3 406.6h1.4v1.4h-1.4zM546.2 365.1h1.4v1.4h-1.4zM528.6 371.4h1.4v1.4h-1.4zM492.5 434.2h1.4v1.4h-1.4zM497 415.4h1.4v1.4h-1.4zM481.4 441h1.4v1.4h-1.4zM513.3 428.7h1.4v1.4h-1.4zM537.1 422.2h1.4v1.4h-1.4zM512.5 441h1.4v1.4h-1.4zM548.1 413.2h1.4v1.4h-1.4zM506.4 425.3h1.4v1.4h-1.4zM509.4 423.7h1.4v1.4h-1.4zM477 454.8h1.4v1.4h-1.4zM505.9 411.2h1.4v1.4h-1.4zM489.7 411h1.4v1.4h-1.4zM572.6 402.9h1.4v1.4h-1.4zM567 420.8h1.4v1.4h-1.4zM541.2 422.3h1.4v1.4h-1.4zM558.6 362.7h1.4v1.4h-1.4zM481.4 446.5h1.4v1.4h-1.4zM438.2 449.1h1.4v1.4h-1.4zM465.9 434.2h1.4v1.4h-1.4zM447.8 456.3h1.4v1.4h-1.4zM509.2 423.2h1.4v1.4h-1.4zM453.3 435.7h1.4v1.4h-1.4zM577.9 371.4h1.4v1.4h-1.4zM447.6 446.6h1.4v1.4h-1.4zM581 396.6h1.4v1.4h-1.4zM475.9 451.2h1.4v1.4h-1.4zM536.9 432.5h1.4v1.4h-1.4zM479.6 433.9h1.4v1.4h-1.4zM544.5 402.2h1.4v1.4h-1.4zM566.8 417.3h1.4v1.4h-1.4zM460.4 435.3h1.4v1.4h-1.4zM500.6 435.8h1.4v1.4h-1.4zM593.2 392.5h1.4v1.4h-1.4zM492.6 414.2h1.4v1.4h-1.4zM505 411.9h1.4v1.4h-1.4zM471.6 456.7h1.4v1.4h-1.4zM570.2 387.9h1.4v1.4h-1.4zM467.2 436.1h1.4v1.4h-1.4zM493.1 450.7h1.4v1.4h-1.4zM548.2 430h1.4v1.4h-1.4zM524.3 433.3h1.4v1.4h-1.4zM534.7 439.6h1.4v1.4h-1.4zM497.1 416h1.4v1.4h-1.4zM578.7 370.6h1.4v1.4h-1.4zM514.6 418.2h1.4v1.4h-1.4zM545.7 414.5h1.4v1.4h-1.4zM507.8 415.6h1.4v1.4h-1.4zM578.2 408.7h1.4v1.4h-1.4zM437.8 448h1.4v1.4h-1.4zM505.8 431h1.4v1.4h-1.4zM584.4 400.2h1.4v1.4h-1.4zM497.8 417.9h1.4v1.4h-1.4zM509.6 451.4h1.4v1.4h-1.4zM439.2 443.7h1.4v1.4h-1.4zM525.5 417.8h1.4v1.4h-1.4zM476.6 430.5h1.4v1.4h-1.4zM467.9 438.3h1.4v1.4h-1.4zM446.8 438.9h1.4v1.4h-1.4zM511.2 423.3h1.4v1.4h-1.4zM563.1 413.6h1.4v1.4h-1.4zM430.5 458.5h1.4v1.4h-1.4zM477.5 424.1h1.4v1.4h-1.4zM476.2 440.7h1.4v1.4h-1.4zM461.4 437.8h1.4v1.4h-1.4zM572.3 418.6h1.4v1.4h-1.4zM480.3 438.1h1.4v1.4h-1.4zM561.8 408h1.4v1.4h-1.4zM543.9 422.8h1.4v1.4h-1.4zM474.6 460h1.4v1.4h-1.4zM491.5 435.5h1.4v1.4h-1.4zM430.2 456.2h1.4v1.4h-1.4zM520.8 415.5h1.4v1.4h-1.4zM521.9 443.2h1.4v1.4h-1.4zM507.8 419.4h1.4v1.4h-1.4zM476 436.6h1.4v1.4h-1.4zM485.6 423.6h1.4v1.4h-1.4zM425.8 458.9h1.4v1.4h-1.4zM523.4 429.2h1.4v1.4h-1.4zM519.5 417.3h1.4v1.4h-1.4zM582.1 377.5h1.4v1.4h-1.4zM433.3 456.5h1.4v1.4h-1.4zM440.5 458.9h1.4v1.4h-1.4zM452.7 444.5h1.4v1.4h-1.4zM445.1 453h1.4v1.4h-1.4zM456.1 452h1.4v1.4h-1.4zM574.9 372.5h1.4v1.4h-1.4zM471.3 430.6h1.4v1.4h-1.4zM486.2 428.9h1.4v1.4h-1.4zM552.3 410.1h1.4v1.4h-1.4zM539.4 374.9h1.4v1.4h-1.4zM561.5 409.7h1.4v1.4h-1.4zM556 419.4h1.4v1.4h-1.4zM498.4 448.9h1.4v1.4h-1.4zM445.4 450.5h1.4v1.4h-1.4zM538.8 407.4h1.4v1.4h-1.4zM540.8 379.6h1.4v1.4h-1.4zM501.2 424.3h1.4v1.4h-1.4zM454.9 451.7h1.4v1.4h-1.4zM486.2 444.2h1.4v1.4h-1.4zM444.3 459.1h1.4v1.4h-1.4zM526.6 426.9h1.4v1.4h-1.4zM444.3 451h1.4v1.4h-1.4zM552.7 431.2h1.4v1.4h-1.4zM600.4 377.3h1.4v1.4h-1.4zM475.7 431.2h1.4v1.4h-1.4zM484.7 448.1h1.4v1.4h-1.4zM460 439h1.4v1.4h-1.4zM571.8 370.3h1.4v1.4h-1.4zM578 354.4h1.4v1.4h-1.4zM453 453.1h1.4v1.4h-1.4zM546.7 433.5h1.4v1.4h-1.4zM524.8 433.7h1.4v1.4h-1.4zM540 402.5h1.4v1.4h-1.4zM539.4 383.7h1.4v1.4h-1.4zM475.6 438.9h1.4v1.4h-1.4zM533.9 422h1.4v1.4h-1.4zM551.5 386.4h1.4v1.4h-1.4zM533.1 400.4h1.4v1.4h-1.4zM485.8 431.1h1.4v1.4h-1.4zM460.9 440.6h1.4v1.4h-1.4zM493.8 418.5h1.4v1.4h-1.4zM550.5 358.8h1.4v1.4h-1.4zM529.3 391.1h1.4v1.4h-1.4zM553.6 419.3h1.4v1.4h-1.4zM572.4 386.4h1.4v1.4h-1.4zM458.3 439.2h1.4v1.4h-1.4zM440.3 448.7h1.4v1.4h-1.4zM490 449.1h1.4v1.4h-1.4zM573.5 421h1.4v1.4h-1.4zM538.7 395.7h1.4v1.4h-1.4zM549.4 377.9h1.4v1.4h-1.4zM576.9 374.7h1.4v1.4h-1.4zM563.5 409.1h1.4v1.4h-1.4zM550.3 411.3h1.4v1.4h-1.4zM515.4 453.4h1.4v1.4h-1.4zM580.7 395.9h1.4v1.4h-1.4zM537.8 434.8h1.4v1.4h-1.4zM490.2 452.6h1.4v1.4h-1.4zM581.1 370.4h1.4v1.4h-1.4zM516.2 385.4h1.4v1.4h-1.4zM530 388.8h1.4v1.4h-1.4zM524.9 428.1h1.4v1.4h-1.4zM560.4 421.6h1.4v1.4h-1.4zM566.7 407.4h1.4v1.4h-1.4zM534.8 395.4h1.4v1.4h-1.4zM482 422.8h1.4v1.4h-1.4zM443.6 451.9h1.4v1.4h-1.4zM521.9 424.9h1.4v1.4h-1.4zM476.2 436.5h1.4v1.4h-1.4zM468.1 442.5h1.4v1.4h-1.4zM442.3 446.2h1.4v1.4h-1.4zM445.3 444.8h1.4v1.4h-1.4zM437.8 449.2h1.4v1.4h-1.4zM608.2 388.1h1.4v1.4h-1.4zM567.6 374h1.4v1.4h-1.4zM543.4 416.6h1.4v1.4h-1.4zM501.4 446.3h1.4v1.4h-1.4zM469.3 434.2h1.4v1.4h-1.4zM455.2 448.2h1.4v1.4h-1.4zM569.6 395.7h1.4v1.4h-1.4zM514.7 395.3h1.4v1.4h-1.4zM436.2 461.4h1.4v1.4h-1.4zM464 436.6h1.4v1.4h-1.4zM547.5 413.6h1.4v1.4h-1.4zM505 421.5h1.4v1.4h-1.4zM526 397.2h1.4v1.4h-1.4zM549.4 427h1.4v1.4h-1.4zM582.1 396.9h1.4v1.4h-1.4zM557 422.2h1.4v1.4h-1.4zM517.6 421.9h1.4v1.4h-1.4zM524.1 426.4h1.4v1.4h-1.4zM503 402.4h1.4v1.4h-1.4zM491 416.6h1.4v1.4h-1.4zM548.1 396.4h1.4v1.4h-1.4zM541 398.8h1.4v1.4h-1.4zM572.1 365.7h1.4v1.4h-1.4zM473.6 449.4h1.4v1.4h-1.4zM445.4 442h1.4v1.4h-1.4zM482 415.2h1.4v1.4h-1.4zM487.8 433.5h1.4v1.4h-1.4zM575.2 358.9h1.4v1.4h-1.4zM530.5 366.4h1.4v1.4h-1.4zM523.3 407.1h1.4v1.4h-1.4zM490.2 432.6h1.4v1.4h-1.4zM565.5 395.6h1.4v1.4h-1.4zM593 369h1.4v1.4h-1.4zM496.7 453.5h1.4v1.4h-1.4zM495 430.7h1.4v1.4h-1.4zM567 403.9h1.4v1.4h-1.4zM559.1 376.2h1.4v1.4h-1.4zM456.7 449.7h1.4v1.4h-1.4zM460 459.5h1.4v1.4h-1.4zM431.3 452.3h1.4v1.4h-1.4zM492 437.2h1.4v1.4h-1.4zM531.4 425.7h1.4v1.4h-1.4zM475.7 455.4h1.4v1.4h-1.4zM468.6 427.6h1.4v1.4h-1.4zM503.6 408.1h1.4v1.4h-1.4zM465.5 443.1h1.4v1.4h-1.4zM468 445.4h1.4v1.4h-1.4zM435.8 462.7h1.4v1.4h-1.4zM452.3 455.9h1.4v1.4h-1.4zM575.3 367.2h1.4v1.4h-1.4zM535.1 401.3h1.4v1.4h-1.4zM473.8 443.1h1.4v1.4h-1.4zM481 428.9h1.4v1.4h-1.4zM523.2 416.6h1.4v1.4h-1.4zM569.8 400.5h1.4v1.4h-1.4zM558.4 384.7h1.4v1.4h-1.4zM513.9 440.4h1.4v1.4h-1.4zM445.4 445.3h1.4v1.4h-1.4zM584.8 367.1h1.4v1.4h-1.4zM571.3 367.3h1.4v1.4h-1.4zM532.8 415.1h1.4v1.4h-1.4zM508.1 407.3h1.4v1.4h-1.4zM602.6 371.4h1.4v1.4h-1.4zM486 457.5h1.4v1.4h-1.4zM559.6 417.9h1.4v1.4h-1.4zM490.3 421.2h1.4v1.4h-1.4zM560.7 364.5h1.4v1.4h-1.4zM495.4 431.3h1.4v1.4h-1.4zM501.7 411h1.4v1.4h-1.4zM466.2 445h1.4v1.4h-1.4zM433.2 451.8h1.4v1.4h-1.4zM447.2 441h1.4v1.4h-1.4zM547 392.4h1.4v1.4h-1.4zM486 436.7h1.4v1.4h-1.4zM535.9 384.7h1.4v1.4h-1.4zM534.5 372.7h1.4v1.4h-1.4zM486.4 435.6h1.4v1.4h-1.4zM554.3 385.1h1.4v1.4h-1.4zM587 410.2h1.4v1.4h-1.4zM587.1 366.4h1.4v1.4h-1.4zM481.3 452h1.4v1.4h-1.4zM511.4 393.8h1.4v1.4h-1.4zM577 394.8h1.4v1.4h-1.4zM457.5 441.2h1.4v1.4h-1.4zM565.6 373.2h1.4v1.4h-1.4zM559 378.1h1.4v1.4h-1.4zM536 407.9h1.4v1.4h-1.4zM487.6 432.3h1.4v1.4h-1.4zM485.7 430.9h1.4v1.4h-1.4zM542.3 401.3h1.4v1.4h-1.4zM433.7 451.7h1.4v1.4h-1.4zM542.5 437.3h1.4v1.4h-1.4zM579.7 394.8h1.4v1.4h-1.4zM585.4 372.5h1.4v1.4h-1.4zM528.1 431.1h1.4v1.4h-1.4zM443 455.5h1.4v1.4h-1.4zM469.4 425.6h1.4v1.4h-1.4zM455.6 447h1.4v1.4h-1.4zM581.5 395.2h1.4v1.4h-1.4zM575.2 413h1.4v1.4h-1.4zM525.4 411.4h1.4v1.4h-1.4zM565.4 381.9h1.4v1.4h-1.4zM530.6 387.4h1.4v1.4h-1.4zM511.7 445.8h1.4v1.4h-1.4zM555 400h1.4v1.4h-1.4zM547.5 400.8h1.4v1.4h-1.4zM529.6 443.5h1.4v1.4h-1.4zM510.2 413.3h1.4v1.4h-1.4zM532.6 441.1h1.4v1.4h-1.4zM534.7 383.3h1.4v1.4h-1.4zM491.9 431.9h1.4v1.4h-1.4zM485.5 447.6h1.4v1.4h-1.4zM468 446.6h1.4v1.4h-1.4zM475.4 450.8h1.4v1.4h-1.4zM547.8 386.4h1.4v1.4h-1.4zM443.6 461.7h1.4v1.4h-1.4zM470.8 427.9h1.4v1.4h-1.4zM522.7 408.4h1.4v1.4h-1.4zM457.7 436.8h1.4v1.4h-1.4zM462.5 447.4h1.4v1.4h-1.4zM495.1 419.2h1.4v1.4h-1.4zM506.6 444.1h1.4v1.4h-1.4zM434.9 447.1h1.4v1.4h-1.4zM491.1 417.4h1.4v1.4h-1.4zM498.6 437.1h1.4v1.4h-1.4zM509 437.1h1.4v1.4h-1.4zM522.4 443.6h1.4v1.4h-1.4zM549 388.2h1.4v1.4h-1.4zM497.8 455.5h1.4v1.4h-1.4zM538 380.8h1.4v1.4h-1.4zM470.9 429.4h1.4v1.4h-1.4zM517.2 442.5h1.4v1.4h-1.4zM467.8 440.5h1.4v1.4h-1.4zM561 400.1h1.4v1.4h-1.4zM568.7 385.1h1.4v1.4h-1.4zM496.4 421.1h1.4v1.4h-1.4zM474.1 432.1h1.4v1.4h-1.4zM556.8 384.9h1.4v1.4h-1.4zM481.5 440.7h1.4v1.4h-1.4zM489.5 425.9h1.4v1.4h-1.4zM518 384.8h1.4v1.4h-1.4zM524.6 376.5h1.4v1.4h-1.4zM591.5 398.6h1.4v1.4h-1.4zM470.5 436.3h1.4v1.4h-1.4zM496.2 420.3h1.4v1.4h-1.4zM559.6 397.5h1.4v1.4h-1.4zM512.4 401.5h1.4v1.4h-1.4zM451.5 449.5h1.4v1.4h-1.4zM442.8 443.2h1.4v1.4h-1.4zM577.3 404h1.4v1.4h-1.4zM450.9 455.6h1.4v1.4h-1.4zM507.5 425.5h1.4v1.4h-1.4zM573.9 396.3h1.4v1.4h-1.4zM496.6 403.9h1.4v1.4h-1.4zM515.1 420.5h1.4v1.4h-1.4zM426.7 461.5h1.4v1.4h-1.4zM459.3 436.4h1.4v1.4h-1.4zM551.7 398h1.4v1.4h-1.4zM499.2 409h1.4v1.4h-1.4zM480.1 424h1.4v1.4h-1.4zM551.8 405.2h1.4v1.4h-1.4zM552.7 386.1h1.4v1.4h-1.4zM574.6 388.7h1.4v1.4h-1.4zM511.1 434.2h1.4v1.4h-1.4zM566.5 366.8h1.4v1.4h-1.4zM526.5 429.8h1.4v1.4h-1.4zM567.2 375h1.4v1.4h-1.4zM551.5 363.9h1.4v1.4h-1.4zM458.4 445.2h1.4v1.4h-1.4zM565.1 405.7h1.4v1.4h-1.4zM518.7 419h1.4v1.4h-1.4zM478.2 421.6h1.4v1.4h-1.4zM573.2 351.4h1.4v1.4h-1.4zM567.3 401.5h1.4v1.4h-1.4zM561.1 401.9h1.4v1.4h-1.4zM467.2 454.8h1.4v1.4h-1.4zM475.5 447.2h1.4v1.4h-1.4zM584.5 396.3h1.4v1.4h-1.4zM526.8 423.8h1.4v1.4h-1.4zM504 412.9h1.4v1.4h-1.4zM459.9 452.7h1.4v1.4h-1.4zM454.5 458.3h1.4v1.4h-1.4zM491.1 408.6h1.4v1.4h-1.4zM454 457.7h1.4v1.4h-1.4zM478.5 443.2h1.4v1.4h-1.4zM474.6 434.4h1.4v1.4h-1.4zM587 394.2h1.4v1.4h-1.4zM523.4 417.7h1.4v1.4h-1.4zM553.7 354.6h1.4v1.4h-1.4zM556 388.3h1.4v1.4h-1.4zM474.9 450.7h1.4v1.4h-1.4zM466.4 457.9h1.4v1.4h-1.4zM512.2 419.7h1.4v1.4h-1.4zM482.9 440.5h1.4v1.4h-1.4zM539.7 418h1.4v1.4h-1.4zM538 439.9h1.4v1.4h-1.4zM458 440.9h1.4v1.4h-1.4zM568 419.8h1.4v1.4h-1.4zM476.7 454.4h1.4v1.4h-1.4zM512.1 412h1.4v1.4h-1.4zM564.3 375.8h1.4v1.4h-1.4zM497.9 424.2h1.4v1.4h-1.4zM517.6 394.2h1.4v1.4h-1.4zM477.9 439.8h1.4v1.4h-1.4zM544.1 343.8h1.4v1.4h-1.4zM463.7 449.6h1.4v1.4h-1.4zM498.5 443.1h1.4v1.4h-1.4zM447.4 441.1h1.4v1.4h-1.4zM442.7 445.3h1.4v1.4h-1.4zM463.6 442h1.4v1.4h-1.4zM507.4 432.8h1.4v1.4h-1.4zM433 458h1.4v1.4h-1.4zM476.7 438.1h1.4v1.4h-1.4zM544.5 385.4h1.4v1.4h-1.4zM511.6 432.9h1.4v1.4h-1.4zM507.6 413.7h1.4v1.4h-1.4zM440 456h1.4v1.4h-1.4zM482.7 448h1.4v1.4h-1.4zM525.4 419.4h1.4v1.4h-1.4zM553.2 397.5h1.4v1.4h-1.4zM516 393.6h1.4v1.4h-1.4zM466.6 449.3h1.4v1.4h-1.4zM517.3 425.3h1.4v1.4h-1.4zM499.8 408.2h1.4v1.4h-1.4zM491.1 433.4h1.4v1.4h-1.4zM461.8 429.5h1.4v1.4h-1.4zM592.2 390.6h1.4v1.4h-1.4zM467.1 452.9h1.4v1.4h-1.4zM480.9 454.4h1.4v1.4h-1.4zM536.9 412.4h1.4v1.4h-1.4zM443.5 453.7h1.4v1.4h-1.4zM426.6 461.6h1.4v1.4h-1.4zM553.8 422.8h1.4v1.4h-1.4zM512 431.4h1.4v1.4h-1.4zM462.8 452.8h1.4v1.4h-1.4zM585.9 393.3h1.4v1.4h-1.4zM434.7 460h1.4v1.4h-1.4zM547.6 408.2h1.4v1.4h-1.4zM448.2 454.9h1.4v1.4h-1.4zM530.5 403.4h1.4v1.4h-1.4zM461.7 456.9h1.4v1.4h-1.4zM527.7 394.8h1.4v1.4h-1.4zM501.6 450.5h1.4v1.4h-1.4zM480.9 432.5h1.4v1.4h-1.4zM457.8 437.3h1.4v1.4h-1.4zM532.1 394.7h1.4v1.4h-1.4zM584.9 390.3h1.4v1.4h-1.4zM503.4 422.5h1.4v1.4h-1.4zM478.6 424.8h1.4v1.4h-1.4zM455.7 455.4h1.4v1.4h-1.4zM434 446.6h1.4v1.4h-1.4zM542 426.4h1.4v1.4h-1.4zM495.9 432.4h1.4v1.4h-1.4zM478.9 419.1h1.4v1.4h-1.4zM457.4 441.4h1.4v1.4h-1.4zM435.5 449h1.4v1.4h-1.4zM530 421.9h1.4v1.4h-1.4zM536.1 408.9h1.4v1.4h-1.4zM494.7 440.8h1.4v1.4h-1.4zM576.4 416h1.4v1.4h-1.4zM479 451.4h1.4v1.4h-1.4zM460 458.2h1.4v1.4h-1.4zM550.1 385.9h1.4v1.4h-1.4zM519.3 443.6h1.4v1.4h-1.4zM576.1 385.8h1.4v1.4h-1.4zM604.4 410.8h1.4v1.4h-1.4zM537 369.4h1.4v1.4h-1.4zM448.4 444h1.4v1.4h-1.4zM486.7 416.5h1.4v1.4h-1.4zM473.1 456h1.4v1.4h-1.4zM562.2 362.7h1.4v1.4h-1.4zM546.4 413.7h1.4v1.4h-1.4zM507.3 395.3h1.4v1.4h-1.4zM480.9 423.4h1.4v1.4h-1.4zM492.8 423.5h1.4v1.4h-1.4zM488.3 452.7h1.4v1.4h-1.4zM497.6 447.6h1.4v1.4h-1.4zM538.2 427.9h1.4v1.4h-1.4zM463.4 439h1.4v1.4h-1.4zM516.2 451.7h1.4v1.4h-1.4zM475 435.9h1.4v1.4h-1.4zM537.4 403.2h1.4v1.4h-1.4zM526 423h1.4v1.4h-1.4zM478.8 454.3h1.4v1.4h-1.4zM497.7 413.3h1.4v1.4h-1.4zM569.4 349.9h1.4v1.4h-1.4zM453.8 451.5h1.4v1.4h-1.4zM458.2 448.6h1.4v1.4h-1.4zM595 388.3h1.4v1.4h-1.4zM477.5 446.8h1.4v1.4h-1.4zM563.5 385.8h1.4v1.4h-1.4zM513.7 434.5h1.4v1.4h-1.4zM565.5 383.4h1.4v1.4h-1.4zM446.1 449.1h1.4v1.4h-1.4zM553.6 416.3h1.4v1.4h-1.4zM463.2 452h1.4v1.4h-1.4zM471.3 437.4h1.4v1.4h-1.4zM493 446.5h1.4v1.4h-1.4zM434.2 463.1h1.4v1.4h-1.4zM456 443.5h1.4v1.4h-1.4zM473.3 436.3h1.4v1.4h-1.4zM501 453.2h1.4v1.4h-1.4zM552.2 432.4h1.4v1.4h-1.4zM527.2 388.8h1.4v1.4h-1.4zM564.2 398.7h1.4v1.4h-1.4zM495.1 421.9h1.4v1.4h-1.4zM531.2 387.8h1.4v1.4h-1.4zM468.1 429.6h1.4v1.4h-1.4zM520.3 405h1.4v1.4h-1.4zM558.9 390.8h1.4v1.4h-1.4zM509.6 434.9h1.4v1.4h-1.4zM456 456.4h1.4v1.4h-1.4zM529.6 383.1h1.4v1.4h-1.4zM559.3 413h1.4v1.4h-1.4zM513.8 422.3h1.4v1.4h-1.4zM484.3 413.9h1.4v1.4h-1.4zM513.4 408.2h1.4v1.4h-1.4zM449.7 446.5h1.4v1.4h-1.4zM512.4 414.9h1.4v1.4h-1.4zM517.3 384.9h1.4v1.4h-1.4zM516.5 412.3h1.4v1.4h-1.4zM505 432.5h1.4v1.4h-1.4zM505.7 411.3h1.4v1.4h-1.4zM572.8 379.6h1.4v1.4h-1.4zM450.4 443h1.4v1.4h-1.4zM533.2 405.8h1.4v1.4h-1.4zM510.7 409.3h1.4v1.4h-1.4zM537.3 415.2h1.4v1.4h-1.4zM460.7 438.7h1.4v1.4h-1.4zM524.1 430.1h1.4v1.4h-1.4zM592.9 389.6h1.4v1.4h-1.4zM565.4 417.5h1.4v1.4h-1.4zM568.1 413.8h1.4v1.4h-1.4zM556.2 393.8h1.4v1.4h-1.4zM518 404.4h1.4v1.4h-1.4zM465.6 431.3h1.4v1.4h-1.4zM444.4 448.7h1.4v1.4h-1.4zM437.9 458.6h1.4v1.4h-1.4zM534.1 425.7h1.4v1.4h-1.4zM529.4 400.9h1.4v1.4h-1.4zM426.1 450.8h1.4v1.4h-1.4zM503 449.8h1.4v1.4h-1.4zM535.2 392.7h1.4v1.4h-1.4zM488.6 442.6h1.4v1.4h-1.4zM471.3 438.5h1.4v1.4h-1.4zM462.6 448.5h1.4v1.4h-1.4zM548.7 354.9h1.4v1.4h-1.4zM430.9 460.2h1.4v1.4h-1.4zM488.9 440.2h1.4v1.4h-1.4zM513.7 420.1h1.4v1.4h-1.4zM570 358.8h1.4v1.4h-1.4zM435.5 455.9h1.4v1.4h-1.4zM519.5 431.5h1.4v1.4h-1.4zM444.8 447h1.4v1.4h-1.4zM530.3 383.9h1.4v1.4h-1.4zM453.1 460h1.4v1.4h-1.4zM542.9 414.5h1.4v1.4h-1.4zM440.5 450.4h1.4v1.4h-1.4zM605.7 398.6h1.4v1.4h-1.4zM507.8 410h1.4v1.4h-1.4zM593.3 401.3h1.4v1.4h-1.4zM463.1 450.7h1.4v1.4h-1.4zM498.2 447.9h1.4v1.4h-1.4zM450.1 452.2h1.4v1.4h-1.4zM528.7 383.5h1.4v1.4h-1.4zM493.2 423.3h1.4v1.4h-1.4zM500.1 418.7h1.4v1.4h-1.4zM461.9 432.4h1.4v1.4h-1.4zM537.7 411.3h1.4v1.4h-1.4zM526.5 401.1h1.4v1.4h-1.4zM444.7 447.1h1.4v1.4h-1.4zM523.4 431.4h1.4v1.4h-1.4zM564.3 412.5h1.4v1.4h-1.4zM493.7 407h1.4v1.4h-1.4zM592.2 373.6h1.4v1.4h-1.4zM455 439.1h1.4v1.4h-1.4zM492.8 427.1h1.4v1.4h-1.4zM477.7 450.3h1.4v1.4h-1.4zM575.4 369.3h1.4v1.4h-1.4zM561.8 373.3h1.4v1.4h-1.4zM556.9 386.2h1.4v1.4h-1.4zM463.1 431.8h1.4v1.4h-1.4zM562 399.4h1.4v1.4h-1.4zM570.6 390h1.4v1.4h-1.4zM528.4 416h1.4v1.4h-1.4zM504.4 404.8h1.4v1.4h-1.4zM579.6 402.8h1.4v1.4h-1.4zM533.3 426.7h1.4v1.4h-1.4zM586.4 366.3h1.4v1.4h-1.4zM521.1 384.8h1.4v1.4h-1.4zM554.2 415h1.4v1.4h-1.4zM536.4 408.7h1.4v1.4h-1.4zM557.4 368.9h1.4v1.4h-1.4zM503.9 415.3h1.4v1.4h-1.4zM492.8 434.6h1.4v1.4h-1.4zM482.8 444.6h1.4v1.4h-1.4zM554.4 407h1.4v1.4h-1.4zM562.7 361.5h1.4v1.4h-1.4zM477.3 455.7h1.4v1.4h-1.4zM577.7 396.7h1.4v1.4h-1.4zM452 460.7h1.4v1.4h-1.4zM565.6 414.1h1.4v1.4h-1.4zM501.8 410.2h1.4v1.4h-1.4zM510.2 447.2h1.4v1.4h-1.4zM437 449.2h1.4v1.4h-1.4zM529 377.2h1.4v1.4h-1.4zM483 446.4h1.4v1.4h-1.4zM580.3 366.8h1.4v1.4h-1.4zM512.3 427.6h1.4v1.4h-1.4zM524.5 409.6h1.4v1.4h-1.4zM454.9 433.6h1.4v1.4h-1.4zM530.1 405.4h1.4v1.4h-1.4zM451.6 455.7h1.4v1.4h-1.4zM557.4 383.1h1.4v1.4h-1.4zM495.5 425.2h1.4v1.4h-1.4zM464.7 456.9h1.4v1.4h-1.4zM551.9 424.3h1.4v1.4h-1.4zM497.4 450.9h1.4v1.4h-1.4zM508.8 448.6h1.4v1.4h-1.4zM499.5 414.7h1.4v1.4h-1.4zM494 410.8h1.4v1.4h-1.4zM488.8 431.9h1.4v1.4h-1.4zM558.4 377h1.4v1.4h-1.4zM581.8 355.6h1.4v1.4h-1.4zM441.7 450.4h1.4v1.4h-1.4zM422.7 459h1.4v1.4h-1.4zM450.7 444.1h1.4v1.4h-1.4zM571.3 374.4h1.4v1.4h-1.4zM470.8 444.5h1.4v1.4h-1.4zM471.9 434.9h1.4v1.4h-1.4zM482.4 458.4h1.4v1.4h-1.4zM606.2 392.6h1.4v1.4h-1.4zM495 425.7h1.4v1.4h-1.4zM546.3 410.2h1.4v1.4h-1.4zM548.4 383.5h1.4v1.4h-1.4zM523.4 382.2h1.4v1.4h-1.4zM489.2 434.7h1.4v1.4h-1.4zM460.3 432.5h1.4v1.4h-1.4zM561.7 408.3h1.4v1.4h-1.4zM484.8 426.3h1.4v1.4h-1.4zM459.1 438.7h1.4v1.4h-1.4zM478 457.5h1.4v1.4h-1.4zM570.1 398h1.4v1.4h-1.4zM540.6 419.8h1.4v1.4h-1.4zM502.8 420.3h1.4v1.4h-1.4zM456 439.4h1.4v1.4h-1.4zM464.2 438h1.4v1.4h-1.4zM471.9 454.5h1.4v1.4h-1.4zM466 438.6h1.4v1.4h-1.4zM470.7 449h1.4v1.4h-1.4zM521.4 431.4h1.4v1.4h-1.4zM510.2 419.9h1.4v1.4h-1.4zM555.8 418.1h1.4v1.4h-1.4zM529.3 444.7h1.4v1.4h-1.4zM510.6 438.9h1.4v1.4h-1.4zM523.1 443.4h1.4v1.4h-1.4zM494.3 412.5h1.4v1.4h-1.4zM509.6 411.9h1.4v1.4h-1.4zM428.3 463h1.4v1.4h-1.4zM483.2 419.6h1.4v1.4h-1.4zM487.8 410.5h1.4v1.4h-1.4zM455.1 443.3h1.4v1.4h-1.4zM492.5 422.5h1.4v1.4h-1.4zM517 386.6h1.4v1.4h-1.4zM504.2 403.6h1.4v1.4h-1.4zM530.9 400.4h1.4v1.4h-1.4zM493.9 424.8h1.4v1.4h-1.4zM558.8 392.3h1.4v1.4h-1.4zM560.5 393.1h1.4v1.4h-1.4zM460.7 438.9h1.4v1.4h-1.4zM503.3 445.8h1.4v1.4h-1.4zM585 386.5h1.4v1.4h-1.4zM500.1 448.1h1.4v1.4h-1.4zM596 376.4h1.4v1.4h-1.4zM448.7 460.7h1.4v1.4h-1.4zM564.1 422.1h1.4v1.4h-1.4zM463.8 459.8h1.4v1.4h-1.4zM543.3 398.1h1.4v1.4h-1.4zM564.5 377.5h1.4v1.4h-1.4zM598.2 381.7h1.4v1.4h-1.4zM504.3 416.9h1.4v1.4h-1.4zM588.7 398.4h1.4v1.4h-1.4zM460.8 434.8h1.4v1.4h-1.4zM540.8 398.9h1.4v1.4h-1.4zM545.1 428.1h1.4v1.4h-1.4zM463.9 447.9h1.4v1.4h-1.4zM560.8 398.4h1.4v1.4h-1.4zM567.9 383.5h1.4v1.4h-1.4zM536.1 422.5h1.4v1.4h-1.4zM469.9 429.4h1.4v1.4h-1.4zM525.1 431.1h1.4v1.4h-1.4zM474.2 429.1h1.4v1.4h-1.4zM484.6 417.1h1.4v1.4h-1.4zM548.4 382.6h1.4v1.4h-1.4zM485.5 440.7h1.4v1.4h-1.4zM572.7 397h1.4v1.4h-1.4zM529.3 424h1.4v1.4h-1.4zM540.3 403.8h1.4v1.4h-1.4zM578 394h1.4v1.4h-1.4zM482.6 445.9h1.4v1.4h-1.4zM571.6 391.4h1.4v1.4h-1.4zM551.4 397.1h1.4v1.4h-1.4zM465.7 447.1h1.4v1.4h-1.4zM505.6 409.9h1.4v1.4h-1.4zM465.8 424.7h1.4v1.4h-1.4zM536.6 383.9h1.4v1.4h-1.4zM483.2 454.5h1.4v1.4h-1.4zM581.2 370.4h1.4v1.4h-1.4zM501.4 455.1h1.4v1.4h-1.4zM488.2 413h1.4v1.4h-1.4zM475.7 442.6h1.4v1.4h-1.4zM489.3 420.2h1.4v1.4h-1.4zM527.5 369.6h1.4v1.4h-1.4zM573.5 363.2h1.4v1.4h-1.4zM605.9 388.7h1.4v1.4h-1.4zM559.8 414h1.4v1.4h-1.4zM494.6 416.2h1.4v1.4h-1.4zM480 434.2h1.4v1.4h-1.4zM436 450h1.4v1.4h-1.4zM478 439.5h1.4v1.4h-1.4zM498.8 448.1h1.4v1.4h-1.4zM492.9 418.8h1.4v1.4h-1.4zM550.3 375.6h1.4v1.4h-1.4zM523.2 409.4h1.4v1.4h-1.4zM497.6 444.9h1.4v1.4h-1.4zM429.3 457.6h1.4v1.4h-1.4zM450.5 455.3h1.4v1.4h-1.4zM529.8 406.4h1.4v1.4h-1.4zM484 423.7h1.4v1.4h-1.4zM487 442.8h1.4v1.4h-1.4zM533.7 386.6h1.4v1.4h-1.4zM556.2 415.6h1.4v1.4h-1.4zM428.6 453.2h1.4v1.4h-1.4zM498.5 436.4h1.4v1.4h-1.4zM475.9 427.9h1.4v1.4h-1.4zM525.9 421h1.4v1.4h-1.4zM506.6 433.4h1.4v1.4h-1.4zM547.6 412.8h1.4v1.4h-1.4zM492.3 420.7h1.4v1.4h-1.4zM511.2 416h1.4v1.4h-1.4zM479.7 451h1.4v1.4h-1.4zM516.4 380.5h1.4v1.4h-1.4zM568.8 419.4h1.4v1.4h-1.4zM502.8 412.7h1.4v1.4h-1.4zM496.6 400.9h1.4v1.4h-1.4zM569.2 393h1.4v1.4h-1.4zM515 391.2h1.4v1.4h-1.4zM478.3 455.8h1.4v1.4h-1.4zM459.9 456.3h1.4v1.4h-1.4zM470.7 422.9h1.4v1.4h-1.4zM501.8 418h1.4v1.4h-1.4zM457.2 450.8h1.4v1.4h-1.4zM490.9 428.4h1.4v1.4h-1.4zM465.5 457.8h1.4v1.4h-1.4zM578.3 403h1.4v1.4h-1.4zM538.8 389.2h1.4v1.4h-1.4zM520.7 415.1h1.4v1.4h-1.4zM529.5 368.4h1.4v1.4h-1.4zM444.9 457.4h1.4v1.4h-1.4zM537.6 417.7h1.4v1.4h-1.4zM458.5 450h1.4v1.4h-1.4zM485.2 417.9h1.4v1.4h-1.4zM561.2 364.5h1.4v1.4h-1.4zM554.5 387.8h1.4v1.4h-1.4zM465.8 436.9h1.4v1.4h-1.4zM444.3 445.4h1.4v1.4h-1.4zM443.2 456.3h1.4v1.4h-1.4zM473 421.4h1.4v1.4h-1.4zM478.4 427.9h1.4v1.4h-1.4zM560.7 390.3h1.4v1.4h-1.4zM529.9 417h1.4v1.4h-1.4zM547.2 395.5h1.4v1.4h-1.4zM469 431.8h1.4v1.4h-1.4zM545.7 359.4h1.4v1.4h-1.4zM517.6 415.1h1.4v1.4h-1.4zM554.5 372.5h1.4v1.4h-1.4zM572.1 389.6h1.4v1.4h-1.4zM520.7 379.3h1.4v1.4h-1.4zM430.4 453.3h1.4v1.4h-1.4zM575.4 372.4h1.4v1.4h-1.4zM486.1 453.6h1.4v1.4h-1.4zM507.5 432.6h1.4v1.4h-1.4zM493.4 420.8h1.4v1.4h-1.4zM580.7 367.7h1.4v1.4h-1.4zM447.7 452.2h1.4v1.4h-1.4zM548.2 415.8h1.4v1.4h-1.4zM491.3 447.3h1.4v1.4h-1.4zM548 386.1h1.4v1.4h-1.4zM551.2 396h1.4v1.4h-1.4zM555.4 395.5h1.4v1.4h-1.4zM532.5 411.1h1.4v1.4h-1.4zM451.4 449.1h1.4v1.4h-1.4zM539.7 377.7h1.4v1.4h-1.4zM548.6 429.7h1.4v1.4h-1.4zM527.7 441.9h1.4v1.4h-1.4zM562.7 380.4h1.4v1.4h-1.4zM523.8 392.3h1.4v1.4h-1.4zM490.1 423.7h1.4v1.4h-1.4zM467.4 458.7h1.4v1.4h-1.4zM464.2 451.4h1.4v1.4h-1.4zM495.2 412.5h1.4v1.4h-1.4zM562.1 402.8h1.4v1.4h-1.4zM455.7 440h1.4v1.4h-1.4zM523.7 404h1.4v1.4h-1.4zM564.3 370.4h1.4v1.4h-1.4zM584.9 403.8h1.4v1.4h-1.4zM520.4 390h1.4v1.4h-1.4zM577.6 364.1h1.4v1.4h-1.4zM433.9 454.1h1.4v1.4h-1.4zM484.6 452.7h1.4v1.4h-1.4zM590 388.7h1.4v1.4h-1.4zM548.1 385.4h1.4v1.4h-1.4zM577.4 393.7h1.4v1.4h-1.4zM431.4 450.5h1.4v1.4h-1.4zM530.3 391.3h1.4v1.4h-1.4zM560.2 386.8h1.4v1.4h-1.4zM519.9 422.6h1.4v1.4h-1.4zM519.2 429.7h1.4v1.4h-1.4zM517.3 435.9h1.4v1.4h-1.4zM573.7 393.2h1.4v1.4h-1.4zM566.4 360h1.4v1.4h-1.4zM575.3 358.1h1.4v1.4h-1.4zM545.2 425h1.4v1.4h-1.4zM465.7 440.5h1.4v1.4h-1.4zM474.2 426.9h1.4v1.4h-1.4zM595.6 361.6h1.4v1.4h-1.4zM432.9 462.7h1.4v1.4h-1.4zM495.6 431.8h1.4v1.4h-1.4zM512.2 404.1h1.4v1.4h-1.4zM540.3 390.1h1.4v1.4h-1.4zM451.2 451h1.4v1.4h-1.4zM468.5 440.1h1.4v1.4h-1.4zM489.5 431.4h1.4v1.4h-1.4zM500.1 419.8h1.4v1.4h-1.4zM550.2 391.5h1.4v1.4h-1.4zM517.9 408.7h1.4v1.4h-1.4zM532.7 426.6h1.4v1.4h-1.4zM507.7 440.9h1.4v1.4h-1.4zM540.2 422.2h1.4v1.4h-1.4zM441.5 448.3h1.4v1.4h-1.4zM467.7 453.5h1.4v1.4h-1.4zM471 429.3h1.4v1.4h-1.4zM491.3 421.6h1.4v1.4h-1.4zM516.8 447h1.4v1.4h-1.4zM490.4 412h1.4v1.4h-1.4zM517.1 391.7h1.4v1.4h-1.4zM591.2 360.3h1.4v1.4h-1.4zM478.9 416.9h1.4v1.4h-1.4zM458.6 446.2h1.4v1.4h-1.4zM453.4 448.5h1.4v1.4h-1.4zM485.7 420.6h1.4v1.4h-1.4zM474.8 442h1.4v1.4h-1.4zM493.1 434.1h1.4v1.4h-1.4zM559.4 397.1h1.4v1.4h-1.4zM509.6 413.5h1.4v1.4h-1.4zM565 402.2h1.4v1.4h-1.4zM467.9 457.1h1.4v1.4h-1.4zM491.9 438.2h1.4v1.4h-1.4zM488.3 419.3h1.4v1.4h-1.4zM571.3 400.5h1.4v1.4h-1.4zM502.5 414.9h1.4v1.4h-1.4zM539.3 385.9h1.4v1.4h-1.4zM567.6 380.9h1.4v1.4h-1.4zM579.9 371.7h1.4v1.4h-1.4zM446.6 443h1.4v1.4h-1.4zM478.4 453.8h1.4v1.4h-1.4zM491.8 447.1h1.4v1.4h-1.4zM488.3 432.6h1.4v1.4h-1.4zM525.1 434.2h1.4v1.4h-1.4zM477.4 435h1.4v1.4h-1.4zM517.9 408.1h1.4v1.4h-1.4zM458.2 449.4h1.4v1.4h-1.4zM542.7 408.6h1.4v1.4h-1.4zM554.6 395.1h1.4v1.4h-1.4zM521.5 404.6h1.4v1.4h-1.4zM522.1 414.2h1.4v1.4h-1.4zM527.3 443.9h1.4v1.4h-1.4zM509.8 405.6h1.4v1.4h-1.4zM545.7 389.4h1.4v1.4h-1.4zM487.9 449.9h1.4v1.4h-1.4zM484.2 436.7h1.4v1.4h-1.4zM515.2 432h1.4v1.4h-1.4zM441.2 455.5h1.4v1.4h-1.4zM589.3 373.2h1.4v1.4h-1.4zM520.1 409.3h1.4v1.4h-1.4zM457.5 436.8h1.4v1.4h-1.4zM519 450.6h1.4v1.4h-1.4zM496.6 413.1h1.4v1.4h-1.4zM525.9 412.9h1.4v1.4h-1.4zM519.1 429.3h1.4v1.4h-1.4zM471.3 432.9h1.4v1.4h-1.4zM560.1 387.8h1.4v1.4h-1.4zM503.3 418.2h1.4v1.4h-1.4zM557.7 380.3h1.4v1.4h-1.4zM493.7 442.9h1.4v1.4h-1.4zM543.5 395.7h1.4v1.4h-1.4zM500.6 445.7h1.4v1.4h-1.4zM514.7 379.5h1.4v1.4h-1.4zM555.7 385.6h1.4v1.4h-1.4zM543.4 417.4h1.4v1.4h-1.4zM454.6 438.9h1.4v1.4h-1.4zM516.7 410.2h1.4v1.4h-1.4zM484.1 428.6h1.4v1.4h-1.4zM532.6 430h1.4v1.4h-1.4zM459.5 446.7h1.4v1.4h-1.4zM503.8 401.3h1.4v1.4h-1.4zM492.1 423.1h1.4v1.4h-1.4zM565.5 396.7h1.4v1.4h-1.4zM557.5 361.1h1.4v1.4h-1.4zM535.5 418.7h1.4v1.4h-1.4zM444.9 442.7h1.4v1.4h-1.4zM544 417.7h1.4v1.4h-1.4zM502.7 417.9h1.4v1.4h-1.4zM447.6 449h1.4v1.4h-1.4zM511.7 399.9h1.4v1.4h-1.4zM491.3 409.9h1.4v1.4h-1.4zM478.9 436.6h1.4v1.4h-1.4zM496.4 400.6h1.4v1.4h-1.4zM462.5 442.2h1.4v1.4h-1.4zM469 433.5h1.4v1.4h-1.4zM538.8 402.2h1.4v1.4h-1.4zM505.9 430.3h1.4v1.4h-1.4zM471.1 450.3h1.4v1.4h-1.4zM502.3 409h1.4v1.4h-1.4zM508.3 422.8h1.4v1.4h-1.4zM498.5 443.8h1.4v1.4h-1.4zM518 425.1h1.4v1.4h-1.4zM489 411h1.4v1.4h-1.4zM472.5 445.4h1.4v1.4h-1.4zM591.1 349h1.4v1.4h-1.4zM478.1 428.3h1.4v1.4h-1.4zM544.7 407.4h1.4v1.4h-1.4zM577 402.9h1.4v1.4h-1.4zM503.3 416.6h1.4v1.4h-1.4zM475.3 447.2h1.4v1.4h-1.4zM525.9 390.1h1.4v1.4h-1.4zM580.8 380.8h1.4v1.4h-1.4zM487.9 411.3h1.4v1.4h-1.4zM478.9 434.7h1.4v1.4h-1.4zM451.1 439.9h1.4v1.4h-1.4zM443.7 465.9h1.4v1.4h-1.4zM543.7 407h1.4v1.4h-1.4zM580 388.6h1.4v1.4h-1.4zM443.4 454.9h1.4v1.4h-1.4zM586 381.6h1.4v1.4h-1.4zM514.6 404.3h1.4v1.4h-1.4zM560.5 425h1.4v1.4h-1.4zM501.6 421.8h1.4v1.4h-1.4zM533.1 392.5h1.4v1.4h-1.4zM433.7 459.6h1.4v1.4h-1.4zM467 438.6h1.4v1.4h-1.4zM481.9 438.5h1.4v1.4h-1.4zM509.9 430.9h1.4v1.4h-1.4zM452.7 443h1.4v1.4h-1.4zM480.6 442.8h1.4v1.4h-1.4zM518.2 406.8h1.4v1.4h-1.4zM510.7 437.1h1.4v1.4h-1.4zM558.1 425.2h1.4v1.4h-1.4zM506.3 417.7h1.4v1.4h-1.4zM472 455.2h1.4v1.4h-1.4zM533.5 409.4h1.4v1.4h-1.4zM426.8 456.6h1.4v1.4h-1.4zM482 423.9h1.4v1.4h-1.4zM527.4 397.6h1.4v1.4h-1.4zM547.8 414h1.4v1.4h-1.4zM450.4 455.1h1.4v1.4h-1.4zM477.5 456.8h1.4v1.4h-1.4zM492.4 440h1.4v1.4h-1.4zM486.9 425.5h1.4v1.4h-1.4zM457.1 444.6h1.4v1.4h-1.4zM493.5 425.5h1.4v1.4h-1.4zM540.1 427.2h1.4v1.4h-1.4zM500.5 438.4h1.4v1.4h-1.4zM513.4 453.5h1.4v1.4h-1.4zM465.5 426.8h1.4v1.4h-1.4zM551.3 404.8h1.4v1.4h-1.4zM427.4 453.2h1.4v1.4h-1.4zM497.1 437h1.4v1.4h-1.4zM552.5 404.9h1.4v1.4h-1.4zM536.4 399.1h1.4v1.4h-1.4zM454.2 457.1h1.4v1.4h-1.4zM559.7 382.2h1.4v1.4h-1.4zM493.4 407.1h1.4v1.4h-1.4zM579.5 403.7h1.4v1.4h-1.4zM474.2 456.2h1.4v1.4h-1.4zM588.8 373.4h1.4v1.4h-1.4zM524.8 406.6h1.4v1.4h-1.4zM504.8 428.1h1.4v1.4h-1.4zM486.6 414.8h1.4v1.4h-1.4zM579.6 407.9h1.4v1.4h-1.4zM441 449.2h1.4v1.4h-1.4zM488.3 452.4h1.4v1.4h-1.4zM493.3 412.4h1.4v1.4h-1.4zM482.2 445.3h1.4v1.4h-1.4zM473 424.6h1.4v1.4h-1.4zM510.9 414.3h1.4v1.4h-1.4zM499 436.3h1.4v1.4h-1.4zM495.7 432.4h1.4v1.4h-1.4zM487.4 435.3h1.4v1.4h-1.4zM429.2 459.9h1.4v1.4h-1.4zM464 433.6h1.4v1.4h-1.4zM584.6 403.5h1.4v1.4h-1.4zM466.5 456.1h1.4v1.4h-1.4zM508.5 422.7h1.4v1.4h-1.4zM459.6 431.7h1.4v1.4h-1.4zM578.6 364.4h1.4v1.4h-1.4zM463.1 447.6h1.4v1.4h-1.4zM460.4 432.7h1.4v1.4h-1.4zM468.1 433.8h1.4v1.4h-1.4zM573.3 403.3h1.4v1.4h-1.4zM526.3 409.2h1.4v1.4h-1.4zM475.5 448.4h1.4v1.4h-1.4zM458 454.6h1.4v1.4h-1.4zM545.8 426.4h1.4v1.4h-1.4zM528.3 423.2h1.4v1.4h-1.4zM535.2 426.5h1.4v1.4h-1.4zM506.7 406.1h1.4v1.4h-1.4zM450.4 443.7h1.4v1.4h-1.4zM499 443.9h1.4v1.4h-1.4zM560.9 417.8h1.4v1.4h-1.4zM493.2 444h1.4v1.4h-1.4zM540.6 404.5h1.4v1.4h-1.4zM540.7 429.2h1.4v1.4h-1.4zM545.5 423.4h1.4v1.4h-1.4zM551.1 383h1.4v1.4h-1.4zM449.8 460.6h1.4v1.4h-1.4zM506.9 415.3h1.4v1.4h-1.4zM451.2 449.2h1.4v1.4h-1.4zM461.3 451.9h1.4v1.4h-1.4zM554.4 389.4h1.4v1.4h-1.4zM556.6 357.6h1.4v1.4h-1.4zM455.1 440.4h1.4v1.4h-1.4zM478.7 424.9h1.4v1.4h-1.4zM562.4 395.6h1.4v1.4h-1.4zM443.9 453.6h1.4v1.4h-1.4zM565 376.3h1.4v1.4h-1.4zM509.9 431.5h1.4v1.4h-1.4zM515.2 392.1h1.4v1.4h-1.4zM418 463.7h1.4v1.4h-1.4zM559.3 356.3h1.4v1.4h-1.4zM568.4 405.8h1.4v1.4h-1.4zM469.7 447.4h1.4v1.4h-1.4zM550.2 370.3h1.4v1.4h-1.4zM491.6 418.6h1.4v1.4h-1.4zM544.7 430.6h1.4v1.4h-1.4zM540.4 417.6h1.4v1.4h-1.4zM513.5 408.4h1.4v1.4h-1.4zM555.9 387.2h1.4v1.4h-1.4zM550 392.8h1.4v1.4h-1.4zM526.1 378h1.4v1.4h-1.4zM548 383.3h1.4v1.4h-1.4zM446.2 455.4h1.4v1.4h-1.4zM578.4 409.3h1.4v1.4h-1.4zM485.5 455h1.4v1.4h-1.4zM563.4 404.9h1.4v1.4h-1.4zM470.9 428.2h1.4v1.4h-1.4zM542.3 373.7h1.4v1.4h-1.4zM522.3 433.3h1.4v1.4h-1.4zM491.6 433.8h1.4v1.4h-1.4zM568 371.5h1.4v1.4h-1.4zM543.9 423.6h1.4v1.4h-1.4zM471.4 429.3h1.4v1.4h-1.4zM503.2 439.7h1.4v1.4h-1.4zM518 393.6h1.4v1.4h-1.4zM517.7 436.5h1.4v1.4h-1.4zM503.6 431.9h1.4v1.4h-1.4zM465.8 446.7h1.4v1.4h-1.4zM522.5 407.2h1.4v1.4h-1.4zM508.8 405.8h1.4v1.4h-1.4zM509 388.5h1.4v1.4h-1.4zM447.5 451.8h1.4v1.4h-1.4zM473 446.9h1.4v1.4h-1.4zM440.8 460.7h1.4v1.4h-1.4zM479.3 438h1.4v1.4h-1.4zM526.2 412.6h1.4v1.4h-1.4zM511.7 418.9h1.4v1.4h-1.4zM532.6 426.5h1.4v1.4h-1.4zM588.1 414.1h1.4v1.4h-1.4zM527 410h1.4v1.4h-1.4zM478.1 450.8h1.4v1.4h-1.4zM483.4 440.4h1.4v1.4h-1.4zM515.9 450.3h1.4v1.4h-1.4zM487.4 422.3h1.4v1.4h-1.4zM494 454.8h1.4v1.4h-1.4zM487.1 411.2h1.4v1.4h-1.4zM463.4 435.7h1.4v1.4h-1.4zM526.7 419.4h1.4v1.4h-1.4zM480.7 456.6h1.4v1.4h-1.4zM528 428.9h1.4v1.4h-1.4zM512.2 413.9h1.4v1.4h-1.4zM586.2 385.8h1.4v1.4h-1.4zM490.7 438.9h1.4v1.4h-1.4zM494.8 445.2h1.4v1.4h-1.4zM536.8 413.9h1.4v1.4h-1.4zM495.3 413.4h1.4v1.4h-1.4zM601.6 355.7h1.4v1.4h-1.4zM530.4 427.1h1.4v1.4h-1.4zM506.3 430.6h1.4v1.4h-1.4zM526.1 418.3h1.4v1.4h-1.4zM504.7 436.6h1.4v1.4h-1.4zM496.7 448.1h1.4v1.4h-1.4zM531.6 403.6h1.4v1.4h-1.4zM533.2 404h1.4v1.4h-1.4zM447.9 439.3h1.4v1.4h-1.4zM504.3 413.9h1.4v1.4h-1.4zM440.4 461.5h1.4v1.4h-1.4zM502.9 451.9h1.4v1.4h-1.4zM523.9 435.7h1.4v1.4h-1.4zM474.2 435.1h1.4v1.4h-1.4zM469.8 435.8h1.4v1.4h-1.4zM463.8 443.4h1.4v1.4h-1.4zM566.2 422.5h1.4v1.4h-1.4zM454.9 450.3h1.4v1.4h-1.4zM540.6 418.1h1.4v1.4h-1.4zM470.7 453.5h1.4v1.4h-1.4zM477.4 442.8h1.4v1.4h-1.4zM518.2 392h1.4v1.4h-1.4zM522.9 404.5h1.4v1.4h-1.4zM546.4 373.9h1.4v1.4h-1.4zM554.5 380.2h1.4v1.4h-1.4zM447.6 450h1.4v1.4h-1.4zM602.8 351.1h1.4v1.4h-1.4zM571.8 407.9h1.4v1.4h-1.4zM463.2 447.8h1.4v1.4h-1.4zM513.3 396.4h1.4v1.4h-1.4zM579.9 402.5h1.4v1.4h-1.4zM539.4 412.6h1.4v1.4h-1.4zM550.2 392.7h1.4v1.4h-1.4zM537.2 416.9h1.4v1.4h-1.4zM525.4 397.4h1.4v1.4h-1.4zM444.1 458.1h1.4v1.4h-1.4zM457.8 436h1.4v1.4h-1.4zM529.7 432.3h1.4v1.4h-1.4zM542.2 400.9h1.4v1.4h-1.4zM459.1 453.6h1.4v1.4h-1.4zM486.3 410.6h1.4v1.4h-1.4zM537.5 386.7h1.4v1.4h-1.4zM441.7 454.2h1.4v1.4h-1.4zM524.5 419.7h1.4v1.4h-1.4zM509.9 407.2h1.4v1.4h-1.4zM457 453.5h1.4v1.4h-1.4zM487.9 430.9h1.4v1.4h-1.4zM527.7 434.6h1.4v1.4h-1.4zM538.1 422h1.4v1.4h-1.4zM580.4 397.7h1.4v1.4h-1.4zM576.9 406.3h1.4v1.4h-1.4zM440.7 462.6h1.4v1.4h-1.4zM484.9 438.7h1.4v1.4h-1.4zM475.3 453.1h1.4v1.4h-1.4zM461.2 450.6h1.4v1.4h-1.4zM478.8 448.7h1.4v1.4h-1.4zM495.4 420.2h1.4v1.4h-1.4zM597.7 383.8h1.4v1.4h-1.4zM537.2 414.7h1.4v1.4h-1.4zM485.6 417.5h1.4v1.4h-1.4zM580.6 404.5h1.4v1.4h-1.4zM598 385.7h1.4v1.4h-1.4zM571.8 387.3h1.4v1.4h-1.4zM497.2 403.5h1.4v1.4h-1.4zM454.8 442.6h1.4v1.4h-1.4zM458.5 450.2h1.4v1.4h-1.4zM561.1 365.5h1.4v1.4h-1.4zM529.9 410.2h1.4v1.4h-1.4zM448.1 442.5h1.4v1.4h-1.4zM560.8 401.5h1.4v1.4h-1.4zM502 427.5h1.4v1.4h-1.4zM555.7 387.9h1.4v1.4h-1.4zM455 454.5h1.4v1.4h-1.4zM541.1 419.6h1.4v1.4h-1.4zM508 432h1.4v1.4h-1.4zM542.7 373.1h1.4v1.4h-1.4zM476.8 420.9h1.4v1.4h-1.4zM474 423.1h1.4v1.4h-1.4zM487.9 429.1h1.4v1.4h-1.4zM465.1 455.8h1.4v1.4h-1.4zM472.2 435.6h1.4v1.4h-1.4zM568.6 395h1.4v1.4h-1.4zM519.8 420h1.4v1.4h-1.4zM458.2 439.5h1.4v1.4h-1.4zM445.2 446.3h1.4v1.4h-1.4zM531.1 397.3h1.4v1.4h-1.4zM554.8 380h1.4v1.4h-1.4zM490.7 423.3h1.4v1.4h-1.4zM486.4 429.9h1.4v1.4h-1.4zM561.9 411.7h1.4v1.4h-1.4zM495.6 435h1.4v1.4h-1.4zM505.3 411.3h1.4v1.4h-1.4zM474.4 442.8h1.4v1.4h-1.4zM489.8 424.5h1.4v1.4h-1.4zM527.7 410.7h1.4v1.4h-1.4zM509.4 404.5h1.4v1.4h-1.4zM502 411.4h1.4v1.4h-1.4zM503.9 441.1h1.4v1.4h-1.4zM453.3 457.1h1.4v1.4h-1.4zM562.8 357.7h1.4v1.4h-1.4zM486.8 444.6h1.4v1.4h-1.4zM555.3 421.9h1.4v1.4h-1.4zM507.2 434.4h1.4v1.4h-1.4zM464.5 439.6h1.4v1.4h-1.4zM530.5 387.1h1.4v1.4h-1.4zM534.1 401.7h1.4v1.4h-1.4zM545.5 354.1h1.4v1.4h-1.4zM538.8 408.5h1.4v1.4h-1.4zM503.2 401.3h1.4v1.4h-1.4zM428.7 454h1.4v1.4h-1.4zM491 445.9h1.4v1.4h-1.4zM465.4 445.4h1.4v1.4h-1.4zM518.3 427.5h1.4v1.4h-1.4zM548 431.7h1.4v1.4h-1.4zM454 443h1.4v1.4h-1.4zM590.4 411.6h1.4v1.4h-1.4zM533.7 380.3h1.4v1.4h-1.4zM575.7 402.1h1.4v1.4h-1.4zM590.1 398.7h1.4v1.4h-1.4zM399.8 462.4h1.4v1.4h-1.4zM522.4 444.4h1.4v1.4h-1.4zM495 439.8h1.4v1.4h-1.4zM538.8 371.5h1.4v1.4h-1.4zM602.3 384.4h1.4v1.4h-1.4zM488.3 410.2h1.4v1.4h-1.4zM559.8 369h1.4v1.4h-1.4zM535 450.2h1.4v1.4h-1.4zM538.1 403.1h1.4v1.4h-1.4zM568.5 380.1h1.4v1.4h-1.4zM493.8 446.8h1.4v1.4h-1.4zM570.5 392h1.4v1.4h-1.4zM514.1 450.8h1.4v1.4h-1.4zM528.6 398.4h1.4v1.4h-1.4zM450.1 461.6h1.4v1.4h-1.4zM481.5 433h1.4v1.4h-1.4zM474.2 421.7h1.4v1.4h-1.4zM488.2 426h1.4v1.4h-1.4zM437.2 450.9h1.4v1.4h-1.4zM452.9 448.7h1.4v1.4h-1.4zM493.3 451.5h1.4v1.4h-1.4zM499 439.1h1.4v1.4h-1.4zM561 394.5h1.4v1.4h-1.4zM502.1 421.6h1.4v1.4h-1.4zM536.8 400.1h1.4v1.4h-1.4zM480.4 441.3h1.4v1.4h-1.4zM548.1 411.4h1.4v1.4h-1.4zM464 441.6h1.4v1.4h-1.4zM560.7 404.8h1.4v1.4h-1.4zM495.9 420.5h1.4v1.4h-1.4zM483 414.4h1.4v1.4h-1.4zM496.8 436.9h1.4v1.4h-1.4zM453.1 453.4h1.4v1.4h-1.4zM529.7 433.6h1.4v1.4h-1.4zM458.3 460.1h1.4v1.4h-1.4zM549 399.4h1.4v1.4h-1.4zM467.1 431.1h1.4v1.4h-1.4zM546 406.5h1.4v1.4h-1.4zM517.8 379.7h1.4v1.4h-1.4zM490.7 434.8h1.4v1.4h-1.4zM452.7 454.8h1.4v1.4h-1.4zM466.6 458.2h1.4v1.4h-1.4zM461.4 436.9h1.4v1.4h-1.4zM492.6 433.9h1.4v1.4h-1.4zM554.4 381.5h1.4v1.4h-1.4zM485.6 424.2h1.4v1.4h-1.4zM530 404.6h1.4v1.4h-1.4zM493.4 424.3h1.4v1.4h-1.4zM456.5 449.9h1.4v1.4h-1.4zM493.1 415.7h1.4v1.4h-1.4zM529.9 433.2h1.4v1.4h-1.4zM507 416.3h1.4v1.4h-1.4zM511.1 402.9h1.4v1.4h-1.4zM531.3 410.9h1.4v1.4h-1.4zM453.3 446h1.4v1.4h-1.4zM467.8 435.7h1.4v1.4h-1.4zM503.7 417.4h1.4v1.4h-1.4zM548.2 370.3h1.4v1.4h-1.4zM464.3 440.2h1.4v1.4h-1.4zM506.5 415.6h1.4v1.4h-1.4zM409.2 461.2h1.4v1.4h-1.4zM496.3 423.9h1.4v1.4h-1.4zM569.8 369.7h1.4v1.4h-1.4zM509 441.3h1.4v1.4h-1.4zM475.8 442.5h1.4v1.4h-1.4zM547 365.6h1.4v1.4h-1.4zM468 440.6h1.4v1.4h-1.4zM442.8 446.9h1.4v1.4h-1.4zM519.7 406.2h1.4v1.4h-1.4zM565.3 375.7h1.4v1.4h-1.4zM566.1 371.9h1.4v1.4h-1.4zM504 438.5h1.4v1.4h-1.4zM472.6 459.7h1.4v1.4h-1.4zM617.6 392.4h1.4v1.4h-1.4zM498.4 418.4h1.4v1.4h-1.4zM538.6 375.7h1.4v1.4h-1.4zM589.4 353.4h1.4v1.4h-1.4zM522.5 375.8h1.4v1.4h-1.4zM520.1 395.4h1.4v1.4h-1.4zM516.8 406.7h1.4v1.4h-1.4zM590.6 408.9h1.4v1.4h-1.4zM489.6 448.2h1.4v1.4h-1.4zM539.6 421.5h1.4v1.4h-1.4zM490.6 434.9h1.4v1.4h-1.4zM540.1 408.9h1.4v1.4h-1.4zM470.8 434.9h1.4v1.4h-1.4zM520.4 409h1.4v1.4h-1.4zM545.2 412.8h1.4v1.4h-1.4zM445.5 440.8h1.4v1.4h-1.4zM511 422.5h1.4v1.4h-1.4zM563 421.7h1.4v1.4h-1.4zM501.6 450.9h1.4v1.4h-1.4zM468.1 428.6h1.4v1.4h-1.4zM526.9 423.4h1.4v1.4h-1.4zM450.5 452.1h1.4v1.4h-1.4zM457.2 455.8h1.4v1.4h-1.4zM496.3 441.5h1.4v1.4h-1.4zM565.6 395.1h1.4v1.4h-1.4zM473.1 435.3h1.4v1.4h-1.4zM447.3 456.6h1.4v1.4h-1.4zM593.9 379.6h1.4v1.4h-1.4zM481.9 425.8h1.4v1.4h-1.4zM485.1 422.6h1.4v1.4h-1.4zM511 389.1h1.4v1.4h-1.4zM541.8 383.9h1.4v1.4h-1.4zM552.5 414.6h1.4v1.4h-1.4zM449.4 446.9h1.4v1.4h-1.4zM533.1 421.6h1.4v1.4h-1.4zM485.6 430.6h1.4v1.4h-1.4zM587.7 370.6h1.4v1.4h-1.4zM466.7 446.9h1.4v1.4h-1.4zM531.5 420h1.4v1.4h-1.4zM437.6 458.3h1.4v1.4h-1.4zM596.9 376.5h1.4v1.4h-1.4zM525.4 390.8h1.4v1.4h-1.4zM505.9 417.5h1.4v1.4h-1.4zM475.9 442.5h1.4v1.4h-1.4zM457.9 437.1h1.4v1.4h-1.4zM569.4 373.6h1.4v1.4h-1.4zM446.9 453.2h1.4v1.4h-1.4zM539.5 414.7h1.4v1.4h-1.4zM446.1 441.8h1.4v1.4h-1.4zM565.8 393h1.4v1.4h-1.4zM569.6 390.5h1.4v1.4h-1.4zM579.6 416.5h1.4v1.4h-1.4zM582.3 394.7h1.4v1.4h-1.4zM536.7 367.1h1.4v1.4h-1.4zM496.7 435.9h1.4v1.4h-1.4zM588.9 408.9h1.4v1.4h-1.4zM481.2 423.2h1.4v1.4h-1.4zM511.9 403.1h1.4v1.4h-1.4zM482.4 442.4h1.4v1.4h-1.4zM527.1 372.8h1.4v1.4h-1.4zM560.6 397.3h1.4v1.4h-1.4zM510.9 433h1.4v1.4h-1.4zM561.2 377.5h1.4v1.4h-1.4zM585.3 382.4h1.4v1.4h-1.4zM584.4 395.3h1.4v1.4h-1.4zM473.4 421.1h1.4v1.4h-1.4zM454.4 438h1.4v1.4h-1.4zM473.1 454.1h1.4v1.4h-1.4zM501.9 437.6h1.4v1.4h-1.4zM474.1 423.6h1.4v1.4h-1.4zM548.6 374h1.4v1.4h-1.4zM438.4 446.3h1.4v1.4h-1.4zM519.7 399.2h1.4v1.4h-1.4zM568.6 390.5h1.4v1.4h-1.4zM532.4 393.8h1.4v1.4h-1.4zM445.5 456.7h1.4v1.4h-1.4zM473.2 447.2h1.4v1.4h-1.4zM538 411.5h1.4v1.4h-1.4zM450.8 452.3h1.4v1.4h-1.4zM589.1 399.3h1.4v1.4h-1.4zM541.6 433.9h1.4v1.4h-1.4zM543.3 432.2h1.4v1.4h-1.4zM509.3 444.8h1.4v1.4h-1.4zM458.1 452.2h1.4v1.4h-1.4zM507.3 397.5h1.4v1.4h-1.4zM534.8 424.5h1.4v1.4h-1.4zM560 401.9h1.4v1.4h-1.4zM427.2 453.8h1.4v1.4h-1.4zM480.5 440.7h1.4v1.4h-1.4zM504.1 432.9h1.4v1.4h-1.4zM441 443.2h1.4v1.4h-1.4zM570.8 352.9h1.4v1.4h-1.4zM526.7 410.1h1.4v1.4h-1.4zM513.1 392.7h1.4v1.4h-1.4zM469.4 429.3h1.4v1.4h-1.4zM533.1 435.4h1.4v1.4h-1.4zM507.8 441.7h1.4v1.4h-1.4zM472.3 448.7h1.4v1.4h-1.4zM468.3 449.7h1.4v1.4h-1.4zM460.6 431h1.4v1.4h-1.4zM523.4 404.5h1.4v1.4h-1.4zM506.3 405.5h1.4v1.4h-1.4zM469 450.1h1.4v1.4h-1.4zM518.9 411h1.4v1.4h-1.4zM557.8 380.8h1.4v1.4h-1.4zM546.5 430.3h1.4v1.4h-1.4zM471.2 436.8h1.4v1.4h-1.4zM441.5 456.8h1.4v1.4h-1.4zM532.3 411.3h1.4v1.4h-1.4zM506.4 440.1h1.4v1.4h-1.4zM586.8 378.1h1.4v1.4h-1.4zM564.2 394.1h1.4v1.4h-1.4zM469 446.9h1.4v1.4h-1.4zM540.4 428.9h1.4v1.4h-1.4zM498.7 420.4h1.4v1.4h-1.4zM489.5 434.7h1.4v1.4h-1.4zM453.5 442.2h1.4v1.4h-1.4zM540.5 422.7h1.4v1.4h-1.4zM549.1 409.6h1.4v1.4h-1.4zM470.4 441.8h1.4v1.4h-1.4zM537.5 427.3h1.4v1.4h-1.4zM411 459.9h1.4v1.4h-1.4zM461.9 433.4h1.4v1.4h-1.4zM554.5 420.5h1.4v1.4h-1.4zM543 431.8h1.4v1.4h-1.4zM535.3 425.4h1.4v1.4h-1.4zM549.1 382h1.4v1.4h-1.4zM501.9 403.9h1.4v1.4h-1.4zM547.8 388.5h1.4v1.4h-1.4zM525.9 407h1.4v1.4h-1.4zM553.3 383.2h1.4v1.4h-1.4zM586.3 385.3h1.4v1.4h-1.4zM521.3 389h1.4v1.4h-1.4zM417.4 462.4h1.4v1.4h-1.4zM526.5 401.6h1.4v1.4h-1.4zM503 420.7h1.4v1.4h-1.4zM494.9 408.5h1.4v1.4h-1.4zM487.8 443.6h1.4v1.4h-1.4zM416.2 455.5h1.4v1.4h-1.4zM553.4 420h1.4v1.4h-1.4zM521.2 406.4h1.4v1.4h-1.4zM595.2 396.5h1.4v1.4h-1.4zM510.3 402.4h1.4v1.4h-1.4zM574.5 384h1.4v1.4h-1.4zM541.1 423.7h1.4v1.4h-1.4zM527.4 402h1.4v1.4h-1.4zM583.5 400.9h1.4v1.4h-1.4zM485.6 433.3h1.4v1.4h-1.4zM456.4 441.1h1.4v1.4h-1.4zM545.9 380.1h1.4v1.4h-1.4zM530.5 435.6h1.4v1.4h-1.4zM492.5 430.9h1.4v1.4h-1.4zM469.4 458.1h1.4v1.4h-1.4zM429.4 454.6h1.4v1.4h-1.4zM576.1 382.6h1.4v1.4h-1.4zM547.2 390h1.4v1.4h-1.4zM588.5 368h1.4v1.4h-1.4zM515.6 431.5h1.4v1.4h-1.4zM503.7 450.7h1.4v1.4h-1.4zM496.9 423.3h1.4v1.4h-1.4zM524.6 422.1h1.4v1.4h-1.4zM487.8 418.4h1.4v1.4h-1.4zM558.5 427.1h1.4v1.4h-1.4zM531.3 382.2h1.4v1.4h-1.4zM572.1 380.3h1.4v1.4h-1.4zM530 441.8h1.4v1.4h-1.4zM529.1 406.3h1.4v1.4h-1.4zM496.5 432.1h1.4v1.4h-1.4zM459.6 446.6h1.4v1.4h-1.4zM494.6 446.1h1.4v1.4h-1.4zM472.4 439.7h1.4v1.4h-1.4zM552 428.1h1.4v1.4h-1.4zM430.4 454.2h1.4v1.4h-1.4zM501.5 398.6h1.4v1.4h-1.4zM540.8 429.4h1.4v1.4h-1.4zM508.3 410.5h1.4v1.4h-1.4zM575.3 390.8h1.4v1.4h-1.4zM512.6 439.2h1.4v1.4h-1.4zM531.5 432h1.4v1.4h-1.4zM530.4 417.1h1.4v1.4h-1.4zM519.3 415.1h1.4v1.4h-1.4zM587.1 405.5h1.4v1.4h-1.4zM532.4 413.9h1.4v1.4h-1.4zM509.5 421.9h1.4v1.4h-1.4zM464.6 455.9h1.4v1.4h-1.4zM508.9 410.9h1.4v1.4h-1.4zM556.9 385.6h1.4v1.4h-1.4zM503.2 452.5h1.4v1.4h-1.4zM541.5 394h1.4v1.4h-1.4zM527.5 404.2h1.4v1.4h-1.4zM489.7 440.1h1.4v1.4h-1.4zM530.3 412.3h1.4v1.4h-1.4zM478.6 433.6h1.4v1.4h-1.4zM436.8 448.1h1.4v1.4h-1.4zM494 445.9h1.4v1.4h-1.4zM435.9 462.9h1.4v1.4h-1.4zM492.5 455.7h1.4v1.4h-1.4zM567.3 394.4h1.4v1.4h-1.4zM526 387.7h1.4v1.4h-1.4zM514.1 442.9h1.4v1.4h-1.4zM493.5 436.1h1.4v1.4h-1.4zM496.6 438h1.4v1.4h-1.4zM439.4 453.8h1.4v1.4h-1.4zM472.7 449.3h1.4v1.4h-1.4zM433.2 449.3h1.4v1.4h-1.4zM575.8 402h1.4v1.4h-1.4zM562.3 417.6h1.4v1.4h-1.4zM430.9 457.8h1.4v1.4h-1.4zM566.3 391.6h1.4v1.4h-1.4zM498.3 416.3h1.4v1.4h-1.4zM585.3 381.1h1.4v1.4h-1.4zM516.6 448.4h1.4v1.4h-1.4zM470.8 450.2h1.4v1.4h-1.4zM500.9 421.7h1.4v1.4h-1.4zM533.1 435.6h1.4v1.4h-1.4zM464.5 433.3h1.4v1.4h-1.4zM446.5 439h1.4v1.4h-1.4zM500.7 405.6h1.4v1.4h-1.4zM580 365h1.4v1.4h-1.4zM469.2 429.1h1.4v1.4h-1.4zM482.7 441.3h1.4v1.4h-1.4zM550.4 414.6h1.4v1.4h-1.4zM449.4 454.2h1.4v1.4h-1.4zM446.8 449.5h1.4v1.4h-1.4zM508 434.6h1.4v1.4h-1.4zM492 451.7h1.4v1.4h-1.4zM518.3 397.5h1.4v1.4h-1.4zM545.9 361.7h1.4v1.4h-1.4zM441.5 456.3h1.4v1.4h-1.4zM558.4 389.1h1.4v1.4h-1.4zM599.5 374.9h1.4v1.4h-1.4zM508.9 415.4h1.4v1.4h-1.4zM494.8 435.7h1.4v1.4h-1.4zM475.5 421.5h1.4v1.4h-1.4zM531.7 384.2h1.4v1.4h-1.4zM503.8 448.5h1.4v1.4h-1.4zM502.2 450.5h1.4v1.4h-1.4zM536.6 395.9h1.4v1.4h-1.4zM494.7 434.9h1.4v1.4h-1.4zM486.4 445.5h1.4v1.4h-1.4zM599.5 417.5h1.4v1.4h-1.4zM575 382.3h1.4v1.4h-1.4zM500.4 440.6h1.4v1.4h-1.4zM531.8 379.6h1.4v1.4h-1.4zM550.4 401.6h1.4v1.4h-1.4zM555.6 367.2h1.4v1.4h-1.4zM516.1 428.6h1.4v1.4h-1.4zM572.8 370.3h1.4v1.4h-1.4zM508.7 435.8h1.4v1.4h-1.4zM537.8 392.9h1.4v1.4h-1.4zM491 416.3h1.4v1.4h-1.4zM464.5 450h1.4v1.4h-1.4zM498.4 410.9h1.4v1.4h-1.4zM589.9 375.7h1.4v1.4h-1.4zM480.7 424.7h1.4v1.4h-1.4zM542.9 405.6h1.4v1.4h-1.4zM487.5 432.3h1.4v1.4h-1.4zM508.9 436.6h1.4v1.4h-1.4zM545.1 380.8h1.4v1.4h-1.4zM551.3 380h1.4v1.4h-1.4zM472.3 435.2h1.4v1.4h-1.4zM502 405.6h1.4v1.4h-1.4zM525.3 397.5h1.4v1.4h-1.4zM571.8 401.9h1.4v1.4h-1.4zM595.9 385.7h1.4v1.4h-1.4zM453.8 461.5h1.4v1.4h-1.4zM482.4 462h1.4v1.4h-1.4zM522.6 440.6h1.4v1.4h-1.4zM493.7 450.8h1.4v1.4h-1.4zM566.2 370.4h1.4v1.4h-1.4zM573.3 393.2h1.4v1.4h-1.4zM491.7 405.3h1.4v1.4h-1.4zM591 385.1h1.4v1.4h-1.4zM555.6 410.2h1.4v1.4h-1.4zM572.6 381.5h1.4v1.4h-1.4zM599.7 370.5h1.4v1.4h-1.4zM514.9 407.8h1.4v1.4h-1.4zM476.7 427.6h1.4v1.4h-1.4zM579.4 369.4h1.4v1.4h-1.4zM450.5 448.5h1.4v1.4h-1.4zM450.1 449.7h1.4v1.4h-1.4zM571 376.2h1.4v1.4h-1.4zM504.3 401.2h1.4v1.4h-1.4zM480.4 444.4h1.4v1.4h-1.4zM521.7 422.6h1.4v1.4h-1.4zM576 417.9h1.4v1.4h-1.4zM523.9 417.1h1.4v1.4h-1.4zM451 437.6h1.4v1.4h-1.4zM459.7 443h1.4v1.4h-1.4zM518.5 392.6h1.4v1.4h-1.4zM494.5 432.9h1.4v1.4h-1.4zM451 455.6h1.4v1.4h-1.4zM528.4 418.4h1.4v1.4h-1.4zM490.4 422.3h1.4v1.4h-1.4zM532.8 406.6h1.4v1.4h-1.4zM480.8 422.1h1.4v1.4h-1.4zM541.9 408.1h1.4v1.4h-1.4zM537.6 389.9h1.4v1.4h-1.4zM504.5 436.4h1.4v1.4h-1.4zM570.7 386.1h1.4v1.4h-1.4zM579 397.4h1.4v1.4h-1.4zM512.3 437.9h1.4v1.4h-1.4zM565.1 406.5h1.4v1.4h-1.4zM507.9 452.9h1.4v1.4h-1.4zM541.3 419.9h1.4v1.4h-1.4zM468.3 436.5h1.4v1.4h-1.4zM579.5 377.8h1.4v1.4h-1.4zM587.8 378.7h1.4v1.4h-1.4zM552.6 351.7h1.4v1.4h-1.4zM521.9 410.8h1.4v1.4h-1.4zM478.2 430.2h1.4v1.4h-1.4zM519.5 437.1h1.4v1.4h-1.4zM553.2 390.8h1.4v1.4h-1.4zM490 409h1.4v1.4h-1.4zM560.9 417h1.4v1.4h-1.4zM550.3 395.5h1.4v1.4h-1.4zM519.1 431.8h1.4v1.4h-1.4zM488.8 410.1h1.4v1.4h-1.4zM539.7 398.8h1.4v1.4h-1.4zM456.2 439.3h1.4v1.4h-1.4zM497.2 409.4h1.4v1.4h-1.4zM501.9 408.1h1.4v1.4h-1.4zM551.9 399.6h1.4v1.4h-1.4zM450.5 447.9h1.4v1.4h-1.4zM483.9 440.9h1.4v1.4h-1.4zM563.5 402.5h1.4v1.4h-1.4zM507.3 444.2h1.4v1.4h-1.4zM553.5 409.3h1.4v1.4h-1.4zM580.2 401h1.4v1.4h-1.4zM521 416.6h1.4v1.4h-1.4zM503.9 418.4h1.4v1.4h-1.4zM507.7 436.1h1.4v1.4h-1.4zM471.6 430.1h1.4v1.4h-1.4zM548.8 432.4h1.4v1.4h-1.4zM474.9 440.5h1.4v1.4h-1.4zM461.1 442.2h1.4v1.4h-1.4zM577.3 399.6h1.4v1.4h-1.4zM566.6 399.9h1.4v1.4h-1.4zM572.3 400.9h1.4v1.4h-1.4zM438.9 456.2h1.4v1.4h-1.4zM467.3 435.3h1.4v1.4h-1.4zM541.5 417.8h1.4v1.4h-1.4zM522.9 433.3h1.4v1.4h-1.4zM561 384.2h1.4v1.4h-1.4zM433 457.5h1.4v1.4h-1.4zM435.1 453.5h1.4v1.4h-1.4zM516.5 406.5h1.4v1.4h-1.4zM547.3 395.3h1.4v1.4h-1.4zM573.5 377.3h1.4v1.4h-1.4zM489.3 413.3h1.4v1.4h-1.4zM553.8 412.2h1.4v1.4h-1.4zM519.9 435.5h1.4v1.4h-1.4zM555 412.2h1.4v1.4h-1.4zM482.5 432.7h1.4v1.4h-1.4zM565.9 404.9h1.4v1.4h-1.4zM573.6 375h1.4v1.4h-1.4zM551 418.5h1.4v1.4h-1.4zM477.4 450.4h1.4v1.4h-1.4zM483.5 419.6h1.4v1.4h-1.4zM444 454.4h1.4v1.4h-1.4zM549.9 399.3h1.4v1.4h-1.4zM566 378.7h1.4v1.4h-1.4zM585.2 413.3h1.4v1.4h-1.4zM587.3 402.4h1.4v1.4h-1.4zM475.2 455.3h1.4v1.4h-1.4zM465.9 449.4h1.4v1.4h-1.4zM478.5 419.6h1.4v1.4h-1.4zM442.2 453.8h1.4v1.4h-1.4zM439.9 459.5h1.4v1.4h-1.4zM493.9 418.3h1.4v1.4h-1.4zM483.3 431.4h1.4v1.4h-1.4zM532.9 420.3h1.4v1.4h-1.4zM427.1 455.2h1.4v1.4h-1.4zM486.4 414.6h1.4v1.4h-1.4zM438.5 454.5h1.4v1.4h-1.4zM455.1 445.3h1.4v1.4h-1.4zM532.3 387.7h1.4v1.4h-1.4zM508.2 398.2h1.4v1.4h-1.4zM484.1 423.2h1.4v1.4h-1.4zM510.1 454.8h1.4v1.4h-1.4zM512.5 399.7h1.4v1.4h-1.4zM453.5 458.5h1.4v1.4h-1.4zM542.4 398.9h1.4v1.4h-1.4zM534.7 438.8h1.4v1.4h-1.4zM512.5 432.5h1.4v1.4h-1.4zM478.7 457.1h1.4v1.4h-1.4zM556.8 383.2h1.4v1.4h-1.4zM488.8 425.1h1.4v1.4h-1.4zM499.1 421.8h1.4v1.4h-1.4zM571.2 420.1h1.4v1.4h-1.4zM526.6 445.3h1.4v1.4h-1.4zM530 383.2h1.4v1.4h-1.4zM492.4 406.6h1.4v1.4h-1.4zM501.7 407.7h1.4v1.4h-1.4zM508.9 406.8h1.4v1.4h-1.4zM511.8 435.7h1.4v1.4h-1.4zM523.8 389.4h1.4v1.4h-1.4zM516.6 405.9h1.4v1.4h-1.4zM556 375.3h1.4v1.4h-1.4zM455.4 453.7h1.4v1.4h-1.4zM490.2 430.8h1.4v1.4h-1.4zM503.2 435.2h1.4v1.4h-1.4zM520.8 396.6h1.4v1.4h-1.4zM552.3 388.2h1.4v1.4h-1.4zM561.5 396.4h1.4v1.4h-1.4zM574.6 377.5h1.4v1.4h-1.4zM589.2 376.6h1.4v1.4h-1.4zM475.8 435.1h1.4v1.4h-1.4zM471.5 434.1h1.4v1.4h-1.4zM537.9 395.2h1.4v1.4h-1.4zM545.8 427.4h1.4v1.4h-1.4zM476.9 450.1h1.4v1.4h-1.4zM525.8 397.5h1.4v1.4h-1.4zM531.3 412.3h1.4v1.4h-1.4zM457.6 451.1h1.4v1.4h-1.4zM470.9 447.3h1.4v1.4h-1.4zM541.4 371.1h1.4v1.4h-1.4zM456.7 456.1h1.4v1.4h-1.4zM527.8 424.2h1.4v1.4h-1.4zM487.9 422.1h1.4v1.4h-1.4zM580.1 418.1h1.4v1.4h-1.4zM458.8 429.6h1.4v1.4h-1.4zM557.4 412.6h1.4v1.4h-1.4zM487 448h1.4v1.4h-1.4zM480.3 423.3h1.4v1.4h-1.4zM598.4 397.7h1.4v1.4h-1.4zM562.5 367.1h1.4v1.4h-1.4zM575.3 392.3h1.4v1.4h-1.4zM564.7 422.3h1.4v1.4h-1.4zM555.1 361.6h1.4v1.4h-1.4zM445.7 443.6h1.4v1.4h-1.4zM554.7 410.6h1.4v1.4h-1.4zM487.3 407.3h1.4v1.4h-1.4zM496.3 409.6h1.4v1.4h-1.4zM489.4 429.5h1.4v1.4h-1.4zM473.3 439.1h1.4v1.4h-1.4zM461.9 450h1.4v1.4h-1.4zM499.7 426h1.4v1.4h-1.4zM560.1 375.8h1.4v1.4h-1.4zM553.9 394.3h1.4v1.4h-1.4zM440 460.1h1.4v1.4h-1.4zM448.5 451.9h1.4v1.4h-1.4zM481.9 435h1.4v1.4h-1.4zM495.5 420h1.4v1.4h-1.4zM492.3 455.1h1.4v1.4h-1.4zM511.1 433.7h1.4v1.4h-1.4zM559.8 383.3h1.4v1.4h-1.4zM469.1 439.2h1.4v1.4h-1.4zM548.7 405.2h1.4v1.4h-1.4zM530.1 432h1.4v1.4h-1.4zM490.1 415.6h1.4v1.4h-1.4zM535.4 377.2h1.4v1.4h-1.4zM495.7 408.7h1.4v1.4h-1.4zM564 366.2h1.4v1.4h-1.4zM441.2 443.7h1.4v1.4h-1.4zM571.7 366.3h1.4v1.4h-1.4zM473.9 441.5h1.4v1.4h-1.4zM567.5 419.1h1.4v1.4h-1.4zM602.2 374.9h1.4v1.4h-1.4zM471.8 426.8h1.4v1.4h-1.4zM493.9 415.2h1.4v1.4h-1.4zM546.5 375.9h1.4v1.4h-1.4zM481.6 417.9h1.4v1.4h-1.4zM574.2 374.1h1.4v1.4h-1.4zM583.2 397.7h1.4v1.4h-1.4zM512.2 397.9h1.4v1.4h-1.4zM493.8 437.2h1.4v1.4h-1.4zM445.5 441.4h1.4v1.4h-1.4zM434.3 451.5h1.4v1.4h-1.4zM544 432.8h1.4v1.4h-1.4zM525.3 405.8h1.4v1.4h-1.4zM589.9 370.6h1.4v1.4h-1.4zM567 416.6h1.4v1.4h-1.4zM473.3 434.4h1.4v1.4h-1.4zM456.2 437.3h1.4v1.4h-1.4zM460.9 441.5h1.4v1.4h-1.4zM482.6 435.9h1.4v1.4h-1.4zM456.7 460.9h1.4v1.4h-1.4zM572.5 411h1.4v1.4h-1.4zM543.5 428.7h1.4v1.4h-1.4zM452.9 462.1h1.4v1.4h-1.4zM440.1 449h1.4v1.4h-1.4zM589.7 385.4h1.4v1.4h-1.4zM521.6 421.9h1.4v1.4h-1.4zM459.5 437.6h1.4v1.4h-1.4zM610.9 374.8h1.4v1.4h-1.4zM529.3 411.5h1.4v1.4h-1.4zM488.4 418.7h1.4v1.4h-1.4zM554.2 423.4h1.4v1.4h-1.4zM475.4 444.6h1.4v1.4h-1.4zM489.8 424.6h1.4v1.4h-1.4zM505.3 404h1.4v1.4h-1.4zM449.5 448.4h1.4v1.4h-1.4zM511.7 416.4h1.4v1.4h-1.4zM524.4 424.4h1.4v1.4h-1.4zM561 378.2h1.4v1.4h-1.4zM477.7 458.8h1.4v1.4h-1.4zM551 401h1.4v1.4h-1.4zM468.2 438.2h1.4v1.4h-1.4zM478.9 431.6h1.4v1.4h-1.4zM430 456.4h1.4v1.4h-1.4zM497.4 454h1.4v1.4h-1.4zM453.6 436.5h1.4v1.4h-1.4zM507.8 434h1.4v1.4h-1.4zM517.5 396.4h1.4v1.4h-1.4zM530.1 422.9h1.4v1.4h-1.4zM516.5 422.5h1.4v1.4h-1.4zM541.3 412.2h1.4v1.4h-1.4zM448.3 446.1h1.4v1.4h-1.4zM549.5 363.4h1.4v1.4h-1.4zM554 372.1h1.4v1.4h-1.4zM497 411.3h1.4v1.4h-1.4zM497.7 431.9h1.4v1.4h-1.4zM535.7 428h1.4v1.4h-1.4zM493.5 429.1h1.4v1.4h-1.4zM512.9 424.1h1.4v1.4h-1.4zM570.3 418.2h1.4v1.4h-1.4zM508.7 434.6h1.4v1.4h-1.4zM511.8 403.5h1.4v1.4h-1.4zM546.3 403.5h1.4v1.4h-1.4zM542.5 411.9h1.4v1.4h-1.4zM421.4 458.9h1.4v1.4h-1.4zM566.7 384.1h1.4v1.4h-1.4zM478.9 431h1.4v1.4h-1.4zM471.4 445h1.4v1.4h-1.4zM517.2 392.7h1.4v1.4h-1.4zM552.1 424.8h1.4v1.4h-1.4zM553.5 422h1.4v1.4h-1.4zM505.7 436.9h1.4v1.4h-1.4zM465.3 448.7h1.4v1.4h-1.4zM523.5 427.3h1.4v1.4h-1.4zM522.3 423.5h1.4v1.4h-1.4zM507.7 400.3h1.4v1.4h-1.4zM515.2 387.6h1.4v1.4h-1.4zM436.2 455.4h1.4v1.4h-1.4zM455.3 446.6h1.4v1.4h-1.4zM460.1 450.4h1.4v1.4h-1.4zM493.3 416.1h1.4v1.4h-1.4zM449.6 446.2h1.4v1.4h-1.4zM521.5 414.9h1.4v1.4h-1.4zM541.7 396.3h1.4v1.4h-1.4zM446.3 448.9h1.4v1.4h-1.4zM573.2 368h1.4v1.4h-1.4zM545.6 405.1h1.4v1.4h-1.4zM463.6 430.8h1.4v1.4h-1.4zM527.3 445.2h1.4v1.4h-1.4zM448.8 440.1h1.4v1.4h-1.4zM585.4 393.3h1.4v1.4h-1.4zM494.2 450.8h1.4v1.4h-1.4zM448.1 449.4h1.4v1.4h-1.4zM481.2 417.5h1.4v1.4h-1.4zM532.3 411.8h1.4v1.4h-1.4zM495.9 443h1.4v1.4h-1.4zM470.8 450.3h1.4v1.4h-1.4zM430.7 454.6h1.4v1.4h-1.4zM534.7 430.1h1.4v1.4h-1.4zM483.7 425.2h1.4v1.4h-1.4zM498.9 414.1h1.4v1.4h-1.4zM567.2 360.7h1.4v1.4h-1.4zM448.7 451.1h1.4v1.4h-1.4zM560.5 382.5h1.4v1.4h-1.4zM525.1 404.1h1.4v1.4h-1.4zM495.4 405.6h1.4v1.4h-1.4zM425.4 459.1h1.4v1.4h-1.4zM557.5 366.1h1.4v1.4h-1.4zM565.2 411h1.4v1.4h-1.4zM515.6 387.5h1.4v1.4h-1.4zM569.9 406h1.4v1.4h-1.4zM520.4 387.6h1.4v1.4h-1.4zM449.9 444.7h1.4v1.4h-1.4zM464.3 444.2h1.4v1.4h-1.4zM460.6 441.1h1.4v1.4h-1.4zM476 437.4h1.4v1.4h-1.4zM560.1 360.5h1.4v1.4h-1.4zM538.1 361.5h1.4v1.4h-1.4zM483.5 433h1.4v1.4h-1.4zM497.8 402.2h1.4v1.4h-1.4zM543 410.9h1.4v1.4h-1.4zM562.9 406.5h1.4v1.4h-1.4zM456.8 439h1.4v1.4h-1.4zM550.6 424.2h1.4v1.4h-1.4zM446 460.2h1.4v1.4h-1.4zM472.9 435.3h1.4v1.4h-1.4zM500.9 432.8h1.4v1.4h-1.4zM499 402.1h1.4v1.4h-1.4zM474 446.8h1.4v1.4h-1.4zM463.1 449.4h1.4v1.4h-1.4zM560 358.5h1.4v1.4h-1.4zM531.3 431.8h1.4v1.4h-1.4zM588.8 399.9h1.4v1.4h-1.4zM518.7 411.5h1.4v1.4h-1.4zM557.5 365h1.4v1.4h-1.4zM548.7 433h1.4v1.4h-1.4zM525.2 428.8h1.4v1.4h-1.4zM489.1 421.7h1.4v1.4h-1.4zM450.4 452.3h1.4v1.4h-1.4zM547.1 416h1.4v1.4h-1.4zM575.2 376.6h1.4v1.4h-1.4zM448 454.5h1.4v1.4h-1.4zM546.7 420.4h1.4v1.4h-1.4zM581.8 393.5h1.4v1.4h-1.4zM461.2 440.9h1.4v1.4h-1.4zM436.8 458h1.4v1.4h-1.4zM525.5 387.4h1.4v1.4h-1.4zM474.4 455.4h1.4v1.4h-1.4zM556.3 410.3h1.4v1.4h-1.4zM478.6 453.2h1.4v1.4h-1.4zM466.7 450.4h1.4v1.4h-1.4zM570.2 399.2h1.4v1.4h-1.4zM502.2 428.7h1.4v1.4h-1.4zM489 413.1h1.4v1.4h-1.4zM485.3 435.4h1.4v1.4h-1.4zM460.3 453.8h1.4v1.4h-1.4zM435.3 445.6h1.4v1.4h-1.4zM508.5 436.9h1.4v1.4h-1.4zM463.7 456.1h1.4v1.4h-1.4zM468.5 453.5h1.4v1.4h-1.4zM520 389.2h1.4v1.4h-1.4zM523.6 391h1.4v1.4h-1.4zM592.7 390.3h1.4v1.4h-1.4zM573.3 394.5h1.4v1.4h-1.4zM551.9 364.1h1.4v1.4h-1.4zM503.6 410.8h1.4v1.4h-1.4zM505.7 410.4h1.4v1.4h-1.4zM499.2 442.7h1.4v1.4h-1.4zM499.3 414.4h1.4v1.4h-1.4zM476 453.7h1.4v1.4h-1.4zM433.6 460.1h1.4v1.4h-1.4zM588 410h1.4v1.4h-1.4zM441.1 444.3h1.4v1.4h-1.4zM440.5 448.6h1.4v1.4h-1.4zM521 400.8h1.4v1.4h-1.4zM551.4 420h1.4v1.4h-1.4zM500.3 447.7h1.4v1.4h-1.4zM538.3 430h1.4v1.4h-1.4zM516.4 444.9h1.4v1.4h-1.4zM611.3 381.6h1.4v1.4h-1.4zM501.6 444.2h1.4v1.4h-1.4zM542 423h1.4v1.4h-1.4zM530.8 415.6h1.4v1.4h-1.4zM569.3 409.4h1.4v1.4h-1.4zM493.2 435.2h1.4v1.4h-1.4zM563.3 374.6h1.4v1.4h-1.4zM472.2 436.2h1.4v1.4h-1.4zM442.9 456.9h1.4v1.4h-1.4zM586.8 382.6h1.4v1.4h-1.4zM455.3 437.5h1.4v1.4h-1.4zM576.3 385.9h1.4v1.4h-1.4zM469.2 439.6h1.4v1.4h-1.4zM494.1 439.8h1.4v1.4h-1.4zM556.3 392.9h1.4v1.4h-1.4zM512.2 402h1.4v1.4h-1.4zM479.5 442.2h1.4v1.4h-1.4zM550.5 383.1h1.4v1.4h-1.4zM503 413.5h1.4v1.4h-1.4zM457.7 450.9h1.4v1.4h-1.4zM429.9 462.9h1.4v1.4h-1.4zM454.5 439.3h1.4v1.4h-1.4zM576.3 394.2h1.4v1.4h-1.4zM481.2 452.3h1.4v1.4h-1.4zM469.6 444.6h1.4v1.4h-1.4zM453.6 439.3h1.4v1.4h-1.4zM510.8 454.5h1.4v1.4h-1.4zM532.4 372.3h1.4v1.4h-1.4zM445.7 444.1h1.4v1.4h-1.4zM470.7 457.5h1.4v1.4h-1.4zM545.6 423.1h1.4v1.4h-1.4zM508.4 450.5h1.4v1.4h-1.4zM551 369.5h1.4v1.4h-1.4zM540.9 426.2h1.4v1.4h-1.4zM434.1 451h1.4v1.4h-1.4zM504.1 399h1.4v1.4h-1.4zM548.4 387.4h1.4v1.4h-1.4zM512.4 393.5h1.4v1.4h-1.4zM569 389.9h1.4v1.4h-1.4zM523.7 402.6h1.4v1.4h-1.4zM559.3 382.8h1.4v1.4h-1.4zM451.5 454.7h1.4v1.4h-1.4zM484.3 429.4h1.4v1.4h-1.4zM512.9 420.5h1.4v1.4h-1.4zM496.5 439.9h1.4v1.4h-1.4zM448.4 447.5h1.4v1.4h-1.4zM488.6 429.3h1.4v1.4h-1.4zM583.4 385.8h1.4v1.4h-1.4zM460.1 432h1.4v1.4h-1.4zM532.8 424.7h1.4v1.4h-1.4zM430.9 453.3h1.4v1.4h-1.4zM519.3 402.8h1.4v1.4h-1.4zM475.2 422.5h1.4v1.4h-1.4zM535.2 399.2h1.4v1.4h-1.4zM488.5 430.2h1.4v1.4h-1.4zM509.3 416.1h1.4v1.4h-1.4zM497.8 433.6h1.4v1.4h-1.4zM482.6 435.4h1.4v1.4h-1.4zM476.2 421.5h1.4v1.4h-1.4zM484.6 430.9h1.4v1.4h-1.4zM569.8 372.1h1.4v1.4h-1.4zM496.6 437.1h1.4v1.4h-1.4zM592 384.7h1.4v1.4h-1.4zM439.6 449.3h1.4v1.4h-1.4zM552.9 383.7h1.4v1.4h-1.4zM537.1 410.1h1.4v1.4h-1.4zM578.2 404.8h1.4v1.4h-1.4zM522.8 406.4h1.4v1.4h-1.4zM516.3 433.5h1.4v1.4h-1.4zM452.3 458.4h1.4v1.4h-1.4zM466.6 450.5h1.4v1.4h-1.4zM532 411.6h1.4v1.4h-1.4zM467.2 454.3h1.4v1.4h-1.4zM505.2 414.4h1.4v1.4h-1.4zM561.4 406.5h1.4v1.4h-1.4zM461.3 458.1h1.4v1.4h-1.4zM564.5 380.6h1.4v1.4h-1.4zM538 391.5h1.4v1.4h-1.4zM439.2 450.6h1.4v1.4h-1.4zM514.8 400.8h1.4v1.4h-1.4zM517.8 441.5h1.4v1.4h-1.4zM569.5 370.7h1.4v1.4h-1.4zM464.2 435.8h1.4v1.4h-1.4zM465.4 436.9h1.4v1.4h-1.4zM579 390.6h1.4v1.4h-1.4zM453.5 436.6h1.4v1.4h-1.4zM499.1 449.1h1.4v1.4h-1.4zM576.3 413h1.4v1.4h-1.4zM519.7 435.8h1.4v1.4h-1.4zM502.3 423h1.4v1.4h-1.4zM484.8 416.8h1.4v1.4h-1.4zM470.4 425.2h1.4v1.4h-1.4zM591 399.2h1.4v1.4h-1.4zM441.4 455.8h1.4v1.4h-1.4zM593 395.7h1.4v1.4h-1.4zM550.7 424.9h1.4v1.4h-1.4zM508.3 410.9h1.4v1.4h-1.4zM537.1 422h1.4v1.4h-1.4zM487.3 444.3h1.4v1.4h-1.4zM486 440h1.4v1.4h-1.4zM483.4 433.9h1.4v1.4h-1.4zM481 419h1.4v1.4h-1.4zM495.1 431.7h1.4v1.4h-1.4zM550.5 401.2h1.4v1.4h-1.4zM439.4 451.3h1.4v1.4h-1.4zM512 404.7h1.4v1.4h-1.4zM561 395.3h1.4v1.4h-1.4zM531.1 396.2h1.4v1.4h-1.4zM598.7 377.2h1.4v1.4h-1.4zM568.9 400.1h1.4v1.4h-1.4zM564.9 404.8h1.4v1.4h-1.4zM532.9 415.7h1.4v1.4h-1.4zM495.6 419.2h1.4v1.4h-1.4zM439.2 453.6h1.4v1.4h-1.4zM448.3 454.4h1.4v1.4h-1.4zM537.4 412h1.4v1.4h-1.4zM592.4 409.4h1.4v1.4h-1.4zM555.9 375.3h1.4v1.4h-1.4zM542.2 378.4h1.4v1.4h-1.4zM586.8 407.4h1.4v1.4h-1.4zM582.3 402.6h1.4v1.4h-1.4zM456.6 450.6h1.4v1.4h-1.4zM499.8 450.2h1.4v1.4h-1.4zM523.4 390.4h1.4v1.4h-1.4zM521.7 383.1h1.4v1.4h-1.4zM502.4 422.2h1.4v1.4h-1.4zM568 420.9h1.4v1.4h-1.4zM526.3 408.4h1.4v1.4h-1.4zM576.7 352.4h1.4v1.4h-1.4zM542.7 429h1.4v1.4h-1.4zM453.9 461.1h1.4v1.4h-1.4zM466.1 436.4h1.4v1.4h-1.4zM498.6 450.2h1.4v1.4h-1.4zM455.4 461h1.4v1.4h-1.4zM447.9 456.5h1.4v1.4h-1.4zM571 397.7h1.4v1.4h-1.4zM568 391.7h1.4v1.4h-1.4zM552.8 417.9h1.4v1.4h-1.4zM560.9 359.7h1.4v1.4h-1.4zM521.2 437h1.4v1.4h-1.4zM503 429h1.4v1.4h-1.4zM511.8 445.8h1.4v1.4h-1.4zM509.4 429.6h1.4v1.4h-1.4zM551.2 414.7h1.4v1.4h-1.4zM506.8 414.4h1.4v1.4h-1.4zM464.7 446.9h1.4v1.4h-1.4zM498.4 423.4h1.4v1.4h-1.4zM550.7 393.4h1.4v1.4h-1.4zM548.4 357.6h1.4v1.4h-1.4zM598.5 386.5h1.4v1.4h-1.4zM524.9 428.6h1.4v1.4h-1.4zM534.8 421.7h1.4v1.4h-1.4zM471.4 448.5h1.4v1.4h-1.4zM533.7 408.5h1.4v1.4h-1.4zM486.6 422.4h1.4v1.4h-1.4zM436.3 459.8h1.4v1.4h-1.4zM436.6 444.8h1.4v1.4h-1.4zM553.7 368.7h1.4v1.4h-1.4zM449.9 451.7h1.4v1.4h-1.4zM521.4 398h1.4v1.4h-1.4zM532.1 383.2h1.4v1.4h-1.4zM553.4 417.9h1.4v1.4h-1.4zM513.4 427.4h1.4v1.4h-1.4zM440 452.4h1.4v1.4h-1.4zM579.9 372.3h1.4v1.4h-1.4zM497.1 415.7h1.4v1.4h-1.4zM565.8 398.2h1.4v1.4h-1.4zM475.7 451.4h1.4v1.4h-1.4zM524.7 377.2h1.4v1.4h-1.4zM566.5 406.3h1.4v1.4h-1.4zM514.8 429.6h1.4v1.4h-1.4zM602.1 393.6h1.4v1.4h-1.4zM530.4 431.1h1.4v1.4h-1.4zM483.7 419h1.4v1.4h-1.4zM564.5 386.8h1.4v1.4h-1.4zM477.3 438.7h1.4v1.4h-1.4zM479.7 418.6h1.4v1.4h-1.4zM444.3 456.1h1.4v1.4h-1.4zM463.1 435.3h1.4v1.4h-1.4zM499.2 445.1h1.4v1.4h-1.4zM487.8 438.9h1.4v1.4h-1.4zM491 427.4h1.4v1.4h-1.4zM550.9 374.9h1.4v1.4h-1.4zM589.1 389.5h1.4v1.4h-1.4zM464.5 453h1.4v1.4h-1.4zM455.1 438.1h1.4v1.4h-1.4zM508.1 420h1.4v1.4h-1.4zM597.9 392h1.4v1.4h-1.4zM537.7 396.8h1.4v1.4h-1.4zM548.9 426.6h1.4v1.4h-1.4zM446.5 458.4h1.4v1.4h-1.4zM501.8 446.6h1.4v1.4h-1.4zM531.2 416.5h1.4v1.4h-1.4zM556 421.7h1.4v1.4h-1.4zM483.7 428h1.4v1.4h-1.4zM573 411.6h1.4v1.4h-1.4zM524.7 419h1.4v1.4h-1.4zM529 368.5h1.4v1.4h-1.4zM509.1 434.7h1.4v1.4h-1.4zM492.3 452.4h1.4v1.4h-1.4zM482.6 419h1.4v1.4h-1.4zM476.5 440.6h1.4v1.4h-1.4zM566.7 386.9h1.4v1.4h-1.4zM543.4 359.8h1.4v1.4h-1.4zM513.7 390.3h1.4v1.4h-1.4zM535.3 426.4h1.4v1.4h-1.4zM511.2 408.7h1.4v1.4h-1.4zM470.2 438.3h1.4v1.4h-1.4zM554.3 404.1h1.4v1.4h-1.4zM539 372.7h1.4v1.4h-1.4zM540.7 425.1h1.4v1.4h-1.4zM491.4 430.5h1.4v1.4h-1.4zM459.7 451.7h1.4v1.4h-1.4zM517 441.8h1.4v1.4h-1.4zM529.9 403.4h1.4v1.4h-1.4zM561.1 388.8h1.4v1.4h-1.4zM534.1 411.3h1.4v1.4h-1.4zM483.9 413.2h1.4v1.4h-1.4zM540.7 390.2h1.4v1.4h-1.4zM506.6 397h1.4v1.4h-1.4zM509.5 450.5h1.4v1.4h-1.4zM472.9 433.6h1.4v1.4h-1.4zM558.8 379.5h1.4v1.4h-1.4zM499.4 444.5h1.4v1.4h-1.4zM507.6 416.9h1.4v1.4h-1.4zM472.7 448.2h1.4v1.4h-1.4zM500.6 437.4h1.4v1.4h-1.4zM595.6 392.3h1.4v1.4h-1.4zM537.9 389.4h1.4v1.4h-1.4zM442.4 454.7h1.4v1.4h-1.4zM503.3 430.1h1.4v1.4h-1.4zM611.8 374.8h1.4v1.4h-1.4zM575.4 400.4h1.4v1.4h-1.4zM517.3 445.7h1.4v1.4h-1.4zM574.1 394h1.4v1.4h-1.4zM510.9 438h1.4v1.4h-1.4zM525.1 414.6h1.4v1.4h-1.4zM467.5 443.3h1.4v1.4h-1.4zM484.5 446.2h1.4v1.4h-1.4zM438.7 458.7h1.4v1.4h-1.4zM436.3 456.6h1.4v1.4h-1.4zM537 408.8h1.4v1.4h-1.4zM541.5 366.3h1.4v1.4h-1.4zM461.1 456.5h1.4v1.4h-1.4zM515.2 402.7h1.4v1.4h-1.4zM465.4 429.7h1.4v1.4h-1.4zM494.9 401.6h1.4v1.4h-1.4zM454.8 457.6h1.4v1.4h-1.4zM510.6 412.1h1.4v1.4h-1.4zM563.2 375.5h1.4v1.4h-1.4zM515.5 443.6h1.4v1.4h-1.4zM588.9 377.6h1.4v1.4h-1.4zM556.9 398.6h1.4v1.4h-1.4zM620.8 388.3h1.4v1.4h-1.4zM517.9 399.8h1.4v1.4h-1.4zM511.2 447.4h1.4v1.4h-1.4zM526.8 426.9h1.4v1.4h-1.4zM529.1 416.1h1.4v1.4h-1.4zM446.5 444.2h1.4v1.4h-1.4zM510.5 398.4h1.4v1.4h-1.4zM457.4 440.3h1.4v1.4h-1.4zM603.3 401.6h1.4v1.4h-1.4zM468.8 451.3h1.4v1.4h-1.4zM473.3 429.2h1.4v1.4h-1.4zM571 409.6h1.4v1.4h-1.4zM546.4 403.3h1.4v1.4h-1.4zM455.7 448.4h1.4v1.4h-1.4zM491.5 407.6h1.4v1.4h-1.4zM493 413.6h1.4v1.4h-1.4zM433.3 462.4h1.4v1.4h-1.4zM469.3 447.1h1.4v1.4h-1.4zM532.2 386.2h1.4v1.4h-1.4zM485.9 442.7h1.4v1.4h-1.4zM593.2 412.3h1.4v1.4h-1.4zM473.7 441.6h1.4v1.4h-1.4zM553.2 395.7h1.4v1.4h-1.4zM510.6 448.6h1.4v1.4h-1.4zM543.7 402.3h1.4v1.4h-1.4zM496.8 404.9h1.4v1.4h-1.4zM550.8 379.9h1.4v1.4h-1.4zM545.4 413.1h1.4v1.4h-1.4zM503.7 451h1.4v1.4h-1.4zM594.2 407.7h1.4v1.4h-1.4zM579.5 371h1.4v1.4h-1.4zM438.4 459.2h1.4v1.4h-1.4zM504.5 439h1.4v1.4h-1.4zM509.6 415.6h1.4v1.4h-1.4zM555.3 429.1h1.4v1.4h-1.4zM499.9 444.8h1.4v1.4h-1.4zM502.6 443.3h1.4v1.4h-1.4zM539.8 385.3h1.4v1.4h-1.4zM555.6 380.5h1.4v1.4h-1.4zM556.5 424.1h1.4v1.4h-1.4zM482.8 435.3h1.4v1.4h-1.4zM487.9 418.7h1.4v1.4h-1.4zM491.5 454.2h1.4v1.4h-1.4zM449.9 453.6h1.4v1.4h-1.4zM583.5 380.3h1.4v1.4h-1.4zM461.4 437.9h1.4v1.4h-1.4zM565.9 402h1.4v1.4h-1.4zM486.8 412.8h1.4v1.4h-1.4zM536.2 437.9h1.4v1.4h-1.4zM532 386.6h1.4v1.4h-1.4zM472.5 422.1h1.4v1.4h-1.4zM490.4 449.3h1.4v1.4h-1.4zM567.2 410.7h1.4v1.4h-1.4zM589.5 389h1.4v1.4h-1.4zM447.5 461.1h1.4v1.4h-1.4zM445.8 451.4h1.4v1.4h-1.4zM469 428.3h1.4v1.4h-1.4zM458.1 449.3h1.4v1.4h-1.4zM529 373.6h1.4v1.4h-1.4zM463.1 448.9h1.4v1.4h-1.4zM419.9 460.5h1.4v1.4h-1.4zM535.7 393h1.4v1.4h-1.4zM484.6 458.7h1.4v1.4h-1.4zM509 417.7h1.4v1.4h-1.4zM500.8 417.9h1.4v1.4h-1.4zM476.3 450h1.4v1.4h-1.4zM455.7 443.1h1.4v1.4h-1.4zM551.6 406.6h1.4v1.4h-1.4zM554.3 366.1h1.4v1.4h-1.4zM566.6 402.2h1.4v1.4h-1.4zM444.6 451h1.4v1.4h-1.4zM484.2 421.7h1.4v1.4h-1.4zM531.9 390.6h1.4v1.4h-1.4zM546.5 414h1.4v1.4h-1.4zM584.7 361.4h1.4v1.4h-1.4zM582.4 398.8h1.4v1.4h-1.4zM437.9 460.2h1.4v1.4h-1.4zM509.5 416h1.4v1.4h-1.4zM507.5 428.5h1.4v1.4h-1.4zM455.6 460.2h1.4v1.4h-1.4zM483.6 430.8h1.4v1.4h-1.4zM507.1 417.7h1.4v1.4h-1.4zM560.8 425.9h1.4v1.4h-1.4zM410.9 463.3h1.4v1.4h-1.4zM434.8 453.8h1.4v1.4h-1.4zM558.2 395.3h1.4v1.4h-1.4zM564.1 416.1h1.4v1.4h-1.4zM529.7 387.5h1.4v1.4h-1.4zM505.1 403.9h1.4v1.4h-1.4zM559.9 400.7h1.4v1.4h-1.4zM566.9 378.4h1.4v1.4h-1.4zM533.8 390.8h1.4v1.4h-1.4zM457.7 459.7h1.4v1.4h-1.4zM573.5 407.4h1.4v1.4h-1.4zM571.7 403.8h1.4v1.4h-1.4zM491.3 433h1.4v1.4h-1.4zM559.9 390.1h1.4v1.4h-1.4zM461.2 452.6h1.4v1.4h-1.4zM573.3 379.7h1.4v1.4h-1.4zM571.7 372.6h1.4v1.4h-1.4zM458.5 452.6h1.4v1.4h-1.4zM490 416.8h1.4v1.4h-1.4zM515.2 425.7h1.4v1.4h-1.4zM537.5 396.1h1.4v1.4h-1.4zM515.7 413.1h1.4v1.4h-1.4zM583.9 386.6h1.4v1.4h-1.4zM548.7 412.9h1.4v1.4h-1.4zM484.1 456.4h1.4v1.4h-1.4zM441.2 448h1.4v1.4h-1.4zM564.5 372h1.4v1.4h-1.4zM467 438.9h1.4v1.4h-1.4zM422 461.8h1.4v1.4h-1.4zM521.8 448.8h1.4v1.4h-1.4zM589.8 394.8h1.4v1.4h-1.4zM503.6 420.1h1.4v1.4h-1.4zM494.2 434.7h1.4v1.4h-1.4zM511 452.6h1.4v1.4h-1.4zM552 407.7h1.4v1.4h-1.4zM518 386.7h1.4v1.4h-1.4zM577.3 402.1h1.4v1.4h-1.4zM538 390.6h1.4v1.4h-1.4zM502.1 414.9h1.4v1.4h-1.4zM508.8 391.6h1.4v1.4h-1.4zM560.2 403.5h1.4v1.4h-1.4zM507.5 453.2h1.4v1.4h-1.4zM552.9 402.6h1.4v1.4h-1.4zM454.3 434.5h1.4v1.4h-1.4zM496.6 422.3h1.4v1.4h-1.4zM462.2 433h1.4v1.4h-1.4zM433.3 455h1.4v1.4h-1.4zM468.6 442.2h1.4v1.4h-1.4zM526.3 416.3h1.4v1.4h-1.4zM566 402.6h1.4v1.4h-1.4zM563.1 411.1h1.4v1.4h-1.4zM501.3 428.3h1.4v1.4h-1.4zM526.6 418.6h1.4v1.4h-1.4zM482.6 426h1.4v1.4h-1.4zM565.4 394.7h1.4v1.4h-1.4zM585.2 410h1.4v1.4h-1.4zM470.3 429.5h1.4v1.4h-1.4zM446.8 458.1h1.4v1.4h-1.4zM525.5 387.3h1.4v1.4h-1.4zM439.9 448.7h1.4v1.4h-1.4zM453.4 437.2h1.4v1.4h-1.4zM449.6 444.7h1.4v1.4h-1.4zM439.8 443.9h1.4v1.4h-1.4zM535.3 394h1.4v1.4h-1.4zM486.5 443.5h1.4v1.4h-1.4zM547.1 387.8h1.4v1.4h-1.4zM469.3 435.4h1.4v1.4h-1.4zM435.5 455.7h1.4v1.4h-1.4zM515.9 439.6h1.4v1.4h-1.4zM455.2 439.8h1.4v1.4h-1.4zM524.8 418.9h1.4v1.4h-1.4zM418.1 455h1.4v1.4h-1.4zM476.3 434.5h1.4v1.4h-1.4zM493.2 422.8h1.4v1.4h-1.4zM568.3 415.8h1.4v1.4h-1.4zM464.2 445.4h1.4v1.4h-1.4zM457.6 443.2h1.4v1.4h-1.4zM562.7 416.2h1.4v1.4h-1.4zM573.7 389.5h1.4v1.4h-1.4zM457.3 447.9h1.4v1.4h-1.4zM457.7 432h1.4v1.4h-1.4zM518.2 390.3h1.4v1.4h-1.4zM461.5 441h1.4v1.4h-1.4zM434.2 456.6h1.4v1.4h-1.4zM496.3 406h1.4v1.4h-1.4zM544.3 423.7h1.4v1.4h-1.4zM525.5 383.5h1.4v1.4h-1.4zM523.8 397.3h1.4v1.4h-1.4zM575.9 418.9h1.4v1.4h-1.4zM510.3 398h1.4v1.4h-1.4zM492.8 428.6h1.4v1.4h-1.4zM471.7 448.3h1.4v1.4h-1.4zM542.3 421.7h1.4v1.4h-1.4zM575.2 397.1h1.4v1.4h-1.4zM462.8 455.7h1.4v1.4h-1.4zM426.7 462.2h1.4v1.4h-1.4zM546.2 425.9h1.4v1.4h-1.4zM499.7 434.4h1.4v1.4h-1.4zM548.1 399.6h1.4v1.4h-1.4zM466 456.5h1.4v1.4h-1.4zM484.5 434.5h1.4v1.4h-1.4zM577.6 412.5h1.4v1.4h-1.4zM543.6 416.6h1.4v1.4h-1.4zM497.7 407.1h1.4v1.4h-1.4zM477.5 418.5h1.4v1.4h-1.4zM540.3 397h1.4v1.4h-1.4zM484.3 451.9h1.4v1.4h-1.4zM463.9 436.2h1.4v1.4h-1.4zM525 409.8h1.4v1.4h-1.4zM494.4 453.4h1.4v1.4h-1.4zM584.1 384.8h1.4v1.4h-1.4zM509 447.4h1.4v1.4h-1.4zM557 381.8h1.4v1.4h-1.4zM529.7 387.4h1.4v1.4h-1.4zM501.1 444.8h1.4v1.4h-1.4zM424.9 458.9h1.4v1.4h-1.4zM599.4 370.7h1.4v1.4h-1.4zM498.9 435.8h1.4v1.4h-1.4zM486.3 447.5h1.4v1.4h-1.4zM464.2 446.7h1.4v1.4h-1.4zM455.4 456.7h1.4v1.4h-1.4zM524.7 398.4h1.4v1.4h-1.4zM567.6 396.7h1.4v1.4h-1.4zM480.2 452.1h1.4v1.4h-1.4zM478.6 445.8h1.4v1.4h-1.4zM538 395.9h1.4v1.4h-1.4zM435.2 449.5h1.4v1.4h-1.4zM519.7 402.1h1.4v1.4h-1.4zM491.4 448.1h1.4v1.4h-1.4zM443.2 461.2h1.4v1.4h-1.4zM429.5 457.7h1.4v1.4h-1.4zM504 424.9h1.4v1.4h-1.4zM477 424.1h1.4v1.4h-1.4zM587.9 385.8h1.4v1.4h-1.4zM447 460h1.4v1.4h-1.4zM533.5 381.5h1.4v1.4h-1.4zM449.3 456.4h1.4v1.4h-1.4zM510 452.4h1.4v1.4h-1.4zM584.4 410.7h1.4v1.4h-1.4zM550.4 369.8h1.4v1.4h-1.4zM566.5 387.3h1.4v1.4h-1.4zM474.9 447.2h1.4v1.4h-1.4zM470 438.7h1.4v1.4h-1.4zM496.4 433.3h1.4v1.4h-1.4zM490.6 437.1h1.4v1.4h-1.4zM536.6 408.4h1.4v1.4h-1.4zM478.6 441.7h1.4v1.4h-1.4zM572.5 406.6h1.4v1.4h-1.4zM448.5 454.2h1.4v1.4h-1.4zM512.8 438.8h1.4v1.4h-1.4zM517.3 432.3h1.4v1.4h-1.4zM441.2 451.3h1.4v1.4h-1.4zM515.1 381.8h1.4v1.4h-1.4zM540.7 363.7h1.4v1.4h-1.4zM569.3 387h1.4v1.4h-1.4zM588 409.7h1.4v1.4h-1.4zM459.7 437.1h1.4v1.4h-1.4zM558.3 416.5h1.4v1.4h-1.4zM428.3 456.6h1.4v1.4h-1.4zM483.2 413.2h1.4v1.4h-1.4zM547.9 421.1h1.4v1.4h-1.4zM555.5 402.8h1.4v1.4h-1.4zM542.9 391.4h1.4v1.4h-1.4zM542.2 380.5h1.4v1.4h-1.4zM551.7 400.6h1.4v1.4h-1.4zM533.6 383.8h1.4v1.4h-1.4zM590 368.6h1.4v1.4h-1.4zM505.1 393h1.4v1.4h-1.4zM570.6 417.2h1.4v1.4h-1.4zM579.5 408.6h1.4v1.4h-1.4zM494.5 435.7h1.4v1.4h-1.4zM458.4 458.5h1.4v1.4h-1.4zM500.8 401.4h1.4v1.4h-1.4zM477.3 434.9h1.4v1.4h-1.4zM529.5 411.5h1.4v1.4h-1.4zM462 452.2h1.4v1.4h-1.4zM569.4 421.9h1.4v1.4h-1.4zM515.7 380.6h1.4v1.4h-1.4zM453.5 449.4h1.4v1.4h-1.4zM454.8 443.2h1.4v1.4h-1.4zM504.6 444.8h1.4v1.4h-1.4zM540.9 435.6h1.4v1.4h-1.4zM541.5 386.2h1.4v1.4h-1.4zM491.7 439.6h1.4v1.4h-1.4zM468.6 449.8h1.4v1.4h-1.4zM461 453.1h1.4v1.4h-1.4zM551 391.9h1.4v1.4h-1.4zM425.9 462.7h1.4v1.4h-1.4zM530.6 393.2h1.4v1.4h-1.4zM517.4 434.7h1.4v1.4h-1.4zM451 458h1.4v1.4h-1.4zM456.4 446.8h1.4v1.4h-1.4zM569.8 379.1h1.4v1.4h-1.4zM494.8 416h1.4v1.4h-1.4zM480 455.8h1.4v1.4h-1.4zM568.9 378.4h1.4v1.4h-1.4zM512.5 400.8h1.4v1.4h-1.4zM442.7 448.2h1.4v1.4h-1.4zM491.4 415.1h1.4v1.4h-1.4zM537.4 415.8h1.4v1.4h-1.4zM534 430.1h1.4v1.4h-1.4zM465.8 436.5h1.4v1.4h-1.4zM569.2 412h1.4v1.4h-1.4zM566.8 403.3h1.4v1.4h-1.4zM448.8 445.2h1.4v1.4h-1.4zM483.8 418.1h1.4v1.4h-1.4zM597.1 408.3h1.4v1.4h-1.4zM447.8 439.4h1.4v1.4h-1.4zM476.1 422.8h1.4v1.4h-1.4zM486.6 435.9h1.4v1.4h-1.4zM440 460.1h1.4v1.4h-1.4zM533.5 390.7h1.4v1.4h-1.4zM569.3 384h1.4v1.4h-1.4zM499 409.3h1.4v1.4h-1.4zM569.8 419.5h1.4v1.4h-1.4zM503 414.8h1.4v1.4h-1.4zM564.5 391.7h1.4v1.4h-1.4zM509.8 386.1h1.4v1.4h-1.4zM530.6 409.1h1.4v1.4h-1.4zM562.9 427h1.4v1.4h-1.4zM465.4 457.5h1.4v1.4h-1.4zM496.7 426.6h1.4v1.4h-1.4zM509.1 424.5h1.4v1.4h-1.4zM453.2 451.4h1.4v1.4h-1.4zM540.4 406.1h1.4v1.4h-1.4zM531.2 379.9h1.4v1.4h-1.4zM574.5 417.3h1.4v1.4h-1.4zM568.1 392h1.4v1.4h-1.4zM580.4 372.4h1.4v1.4h-1.4zM483.1 419.9h1.4v1.4h-1.4zM540.1 381.1h1.4v1.4h-1.4zM549.2 418.2h1.4v1.4h-1.4zM500.4 440.7h1.4v1.4h-1.4zM501.3 399.1h1.4v1.4h-1.4zM448.4 458.5h1.4v1.4h-1.4zM448.6 453.9h1.4v1.4h-1.4zM586.8 380.4h1.4v1.4h-1.4zM603.9 381.7h1.4v1.4h-1.4zM563.3 418.5h1.4v1.4h-1.4zM474 455.8h1.4v1.4h-1.4zM478.2 444.3h1.4v1.4h-1.4zM578.9 370h1.4v1.4h-1.4zM468.5 440.6h1.4v1.4h-1.4zM561.3 406.6h1.4v1.4h-1.4zM481.5 436.6h1.4v1.4h-1.4zM518.1 430.6h1.4v1.4h-1.4zM497.3 426.8h1.4v1.4h-1.4zM526 441.8h1.4v1.4h-1.4zM556.8 415.2h1.4v1.4h-1.4zM564.8 421.1h1.4v1.4h-1.4zM548.4 414.2h1.4v1.4h-1.4zM519 442.9h1.4v1.4h-1.4zM560.2 414.5h1.4v1.4h-1.4zM511 394.9h1.4v1.4h-1.4zM552.9 372.3h1.4v1.4h-1.4zM441.2 442.1h1.4v1.4h-1.4zM457.1 442.7h1.4v1.4h-1.4zM542.4 419h1.4v1.4h-1.4zM488.3 421.8h1.4v1.4h-1.4zM480.2 421.8h1.4v1.4h-1.4zM588.7 393.6h1.4v1.4h-1.4zM572.9 410.2h1.4v1.4h-1.4zM508.9 398h1.4v1.4h-1.4zM591.8 355.7h1.4v1.4h-1.4zM510.5 448.3h1.4v1.4h-1.4zM602.7 361.8h1.4v1.4h-1.4zM509 405.6h1.4v1.4h-1.4zM469.1 434.7h1.4v1.4h-1.4zM518.8 415.3h1.4v1.4h-1.4zM463.2 446h1.4v1.4h-1.4zM497.6 408.6h1.4v1.4h-1.4zM583.3 389.9h1.4v1.4h-1.4zM599 378.3h1.4v1.4h-1.4zM537.8 392.2h1.4v1.4h-1.4zM526.7 436.4h1.4v1.4h-1.4zM471 433.8h1.4v1.4h-1.4zM486.3 433.3h1.4v1.4h-1.4zM578.5 411.4h1.4v1.4h-1.4zM510.2 442.8h1.4v1.4h-1.4zM532.5 389.1h1.4v1.4h-1.4zM548.8 411h1.4v1.4h-1.4zM488.4 418.2h1.4v1.4h-1.4zM479.1 421.2h1.4v1.4h-1.4zM549 419h1.4v1.4h-1.4zM501.2 453.1h1.4v1.4h-1.4zM498.4 427.5h1.4v1.4h-1.4zM575.1 365h1.4v1.4h-1.4zM447.8 449.4h1.4v1.4h-1.4zM554.3 383.7h1.4v1.4h-1.4zM465 428h1.4v1.4h-1.4zM513.3 403.2h1.4v1.4h-1.4zM521.6 413.9h1.4v1.4h-1.4zM497.5 403.3h1.4v1.4h-1.4zM577.7 379.5h1.4v1.4h-1.4zM569.1 379.3h1.4v1.4h-1.4zM556.2 372.9h1.4v1.4h-1.4zM601.3 385.6h1.4v1.4h-1.4zM446.8 460.5h1.4v1.4h-1.4zM469 450.6h1.4v1.4h-1.4zM451 452.4h1.4v1.4h-1.4zM511.8 413h1.4v1.4h-1.4zM498.8 447h1.4v1.4h-1.4zM470.4 425.7h1.4v1.4h-1.4zM585.5 367.7h1.4v1.4h-1.4zM477.9 434.3h1.4v1.4h-1.4zM560.3 418h1.4v1.4h-1.4zM450.4 445.5h1.4v1.4h-1.4zM503.2 404.7h1.4v1.4h-1.4zM582.9 375.1h1.4v1.4h-1.4zM569.5 389.2h1.4v1.4h-1.4zM505.6 432.2h1.4v1.4h-1.4zM589 399.8h1.4v1.4h-1.4zM534.8 421.2h1.4v1.4h-1.4zM479.7 421.6h1.4v1.4h-1.4zM455.9 446.8h1.4v1.4h-1.4zM563.8 380.3h1.4v1.4h-1.4zM522.7 422.1h1.4v1.4h-1.4zM502.2 441.5h1.4v1.4h-1.4zM593.1 392.9h1.4v1.4h-1.4zM547 380.9h1.4v1.4h-1.4zM466.4 453.1h1.4v1.4h-1.4zM565.8 396.9h1.4v1.4h-1.4zM506.1 438.9h1.4v1.4h-1.4zM529.7 419.5h1.4v1.4h-1.4zM546.3 391.7h1.4v1.4h-1.4zM565.1 389.3h1.4v1.4h-1.4zM535.5 424h1.4v1.4h-1.4zM512.5 404.8h1.4v1.4h-1.4zM537.7 396h1.4v1.4h-1.4zM476.4 445.8h1.4v1.4h-1.4zM493.9 426.3h1.4v1.4h-1.4zM517.6 409.2h1.4v1.4h-1.4zM478.7 419.5h1.4v1.4h-1.4zM497.3 440.4h1.4v1.4h-1.4zM574.2 372h1.4v1.4h-1.4zM569.1 413.9h1.4v1.4h-1.4zM514.9 402.3h1.4v1.4h-1.4zM474.2 451.1h1.4v1.4h-1.4zM463 448.5h1.4v1.4h-1.4zM456.7 438.9h1.4v1.4h-1.4zM584.3 407.9h1.4v1.4h-1.4zM460.4 446.5h1.4v1.4h-1.4zM529.2 389.5h1.4v1.4h-1.4zM504.6 416.9h1.4v1.4h-1.4zM503.7 432.7h1.4v1.4h-1.4zM495.3 404.2h1.4v1.4h-1.4zM484.8 443.8h1.4v1.4h-1.4zM522.4 386.3h1.4v1.4h-1.4zM543.6 385.6h1.4v1.4h-1.4zM541.5 429.9h1.4v1.4h-1.4zM556.8 363.5h1.4v1.4h-1.4zM523.6 387.5h1.4v1.4h-1.4zM461.3 447h1.4v1.4h-1.4zM509.2 425.1h1.4v1.4h-1.4zM558.4 386.2h1.4v1.4h-1.4zM570.1 403.1h1.4v1.4h-1.4zM458.4 444h1.4v1.4h-1.4zM459.7 439.3h1.4v1.4h-1.4zM469.1 429.8h1.4v1.4h-1.4zM536.6 367.6h1.4v1.4h-1.4zM482.3 434.6h1.4v1.4h-1.4zM532.1 424.8h1.4v1.4h-1.4zM479.2 434.1h1.4v1.4h-1.4zM461.2 440.1h1.4v1.4h-1.4zM538 433.4h1.4v1.4h-1.4zM570.5 380.8h1.4v1.4h-1.4zM437.7 449.9h1.4v1.4h-1.4zM489.8 460h1.4v1.4h-1.4zM497.6 410.8h1.4v1.4h-1.4zM465.4 429.5h1.4v1.4h-1.4zM584.8 373h1.4v1.4h-1.4zM564.1 405.5h1.4v1.4h-1.4zM492.7 431.2h1.4v1.4h-1.4zM524.5 385.2h1.4v1.4h-1.4zM584.5 351h1.4v1.4h-1.4zM487.4 422.2h1.4v1.4h-1.4zM463 442.8h1.4v1.4h-1.4zM542.4 395.4h1.4v1.4h-1.4zM486.9 430.7h1.4v1.4h-1.4zM568.7 396h1.4v1.4h-1.4zM540.3 422.3h1.4v1.4h-1.4zM602.5 386.8h1.4v1.4h-1.4zM535.2 400h1.4v1.4h-1.4zM470.2 435.6h1.4v1.4h-1.4zM450 444.8h1.4v1.4h-1.4zM568.6 379.3h1.4v1.4h-1.4zM501.7 439.9h1.4v1.4h-1.4zM575 369.1h1.4v1.4h-1.4zM412.5 460.3h1.4v1.4h-1.4zM479.3 447h1.4v1.4h-1.4zM559.5 406.1h1.4v1.4h-1.4zM506.5 412.1h1.4v1.4h-1.4zM545.9 410.5h1.4v1.4h-1.4zM454.9 452.9h1.4v1.4h-1.4zM520.5 399.2h1.4v1.4h-1.4zM494 410.7h1.4v1.4h-1.4zM438.5 451.9h1.4v1.4h-1.4zM554.2 391.1h1.4v1.4h-1.4zM495.3 445.3h1.4v1.4h-1.4zM498.9 403.5h1.4v1.4h-1.4zM568.7 360h1.4v1.4h-1.4zM501.8 437.7h1.4v1.4h-1.4zM555.3 390.3h1.4v1.4h-1.4zM500.3 440.4h1.4v1.4h-1.4zM514.6 417.5h1.4v1.4h-1.4zM507.4 424.1h1.4v1.4h-1.4zM528.6 373.5h1.4v1.4h-1.4zM536.5 407.7h1.4v1.4h-1.4zM538 364.9h1.4v1.4h-1.4zM578.4 353.4h1.4v1.4h-1.4zM519.2 410.1h1.4v1.4h-1.4zM556.5 409.3h1.4v1.4h-1.4zM439.9 457.1h1.4v1.4h-1.4zM489.7 435.7h1.4v1.4h-1.4zM499.1 443.9h1.4v1.4h-1.4zM550.9 431.5h1.4v1.4h-1.4zM591.1 386.7h1.4v1.4h-1.4zM517.9 398.1h1.4v1.4h-1.4zM541 407.2h1.4v1.4h-1.4zM533.9 378.9h1.4v1.4h-1.4zM465.4 448.7h1.4v1.4h-1.4zM477.4 431.2h1.4v1.4h-1.4zM503 450.9h1.4v1.4h-1.4zM539.3 432.5h1.4v1.4h-1.4zM542.3 396.7h1.4v1.4h-1.4zM458.4 440.8h1.4v1.4h-1.4zM430.6 455.9h1.4v1.4h-1.4zM497.5 438h1.4v1.4h-1.4zM434.2 450.2h1.4v1.4h-1.4zM496.9 424.6h1.4v1.4h-1.4zM562.4 378.8h1.4v1.4h-1.4zM539.1 404.6h1.4v1.4h-1.4zM447.6 442.3h1.4v1.4h-1.4zM483.3 457.6h1.4v1.4h-1.4zM489.2 444.6h1.4v1.4h-1.4zM458 439.6h1.4v1.4h-1.4zM508.8 387.9h1.4v1.4h-1.4zM534.4 376.4h1.4v1.4h-1.4zM494.4 427.1h1.4v1.4h-1.4zM448.5 454.4h1.4v1.4h-1.4zM586.6 395.5h1.4v1.4h-1.4zM464.9 432.4h1.4v1.4h-1.4zM508.3 439.5h1.4v1.4h-1.4zM549 406.3h1.4v1.4h-1.4zM550.6 387.1h1.4v1.4h-1.4zM436.2 455.2h1.4v1.4h-1.4zM547.9 409.6h1.4v1.4h-1.4zM535 397h1.4v1.4h-1.4zM546.2 384.3h1.4v1.4h-1.4zM457.7 449.4h1.4v1.4h-1.4zM510.1 403h1.4v1.4h-1.4zM557.8 379.6h1.4v1.4h-1.4zM569.1 421.2h1.4v1.4h-1.4zM539.1 416.5h1.4v1.4h-1.4zM454.7 456.2h1.4v1.4h-1.4zM476.1 446.6h1.4v1.4h-1.4zM466.6 455h1.4v1.4h-1.4zM574.7 433.2h1.4v1.4h-1.4zM540.4 418.4h1.4v1.4h-1.4zM551.7 385.7h1.4v1.4h-1.4zM477.2 450.9h1.4v1.4h-1.4zM526.2 428.3h1.4v1.4h-1.4zM556.9 389.6h1.4v1.4h-1.4zM490.8 443.5h1.4v1.4h-1.4zM490.3 434.3h1.4v1.4h-1.4zM546.9 414.5h1.4v1.4h-1.4zM437 454.9h1.4v1.4h-1.4zM529.1 402.3h1.4v1.4h-1.4zM541.8 395.3h1.4v1.4h-1.4zM470.9 459.2h1.4v1.4h-1.4zM430.2 462.2h1.4v1.4h-1.4zM570.5 378.4h1.4v1.4h-1.4zM584.3 368.9h1.4v1.4h-1.4zM543.9 427.9h1.4v1.4h-1.4zM502.4 417.9h1.4v1.4h-1.4zM441.6 451h1.4v1.4h-1.4zM571.2 376.3h1.4v1.4h-1.4zM589.3 382h1.4v1.4h-1.4zM460.6 449.8h1.4v1.4h-1.4zM476.5 440.6h1.4v1.4h-1.4zM576.9 386.4h1.4v1.4h-1.4zM444.3 456.4h1.4v1.4h-1.4zM588.9 371.4h1.4v1.4h-1.4zM463.4 444.7h1.4v1.4h-1.4zM578.4 387.3h1.4v1.4h-1.4zM481.3 449.2h1.4v1.4h-1.4zM575.4 413.6h1.4v1.4h-1.4zM447.8 452.9h1.4v1.4h-1.4zM468 450.6h1.4v1.4h-1.4zM564.6 398.8h1.4v1.4h-1.4zM561.1 383.2h1.4v1.4h-1.4zM533.9 410h1.4v1.4h-1.4zM418.3 454.8h1.4v1.4h-1.4zM465.1 454.6h1.4v1.4h-1.4zM507 404.2h1.4v1.4h-1.4zM465.1 430.6h1.4v1.4h-1.4zM495.8 429h1.4v1.4h-1.4zM492.4 418.9h1.4v1.4h-1.4zM482.5 429.8h1.4v1.4h-1.4zM476.8 435h1.4v1.4h-1.4zM453.1 449.7h1.4v1.4h-1.4zM566.9 387.5h1.4v1.4h-1.4zM508.4 423.1h1.4v1.4h-1.4zM481.5 451.3h1.4v1.4h-1.4zM489 415.7h1.4v1.4h-1.4zM530.3 399.8h1.4v1.4h-1.4zM512.1 405.2h1.4v1.4h-1.4zM545 363.1h1.4v1.4h-1.4zM466.4 431.3h1.4v1.4h-1.4zM520.7 429.1h1.4v1.4h-1.4zM574.7 414.3h1.4v1.4h-1.4zM499 402h1.4v1.4h-1.4zM522.2 434.9h1.4v1.4h-1.4zM487.7 427.6h1.4v1.4h-1.4zM505.4 439.2h1.4v1.4h-1.4zM476.2 425.6h1.4v1.4h-1.4zM498.2 440.3h1.4v1.4h-1.4zM571.9 381h1.4v1.4h-1.4zM467.5 434.9h1.4v1.4h-1.4zM437.2 445h1.4v1.4h-1.4zM501.4 428.6h1.4v1.4h-1.4zM536.4 395.4h1.4v1.4h-1.4zM479.1 430.3h1.4v1.4h-1.4zM513.8 420.7h1.4v1.4h-1.4zM492.5 432.9h1.4v1.4h-1.4zM480.4 434.3h1.4v1.4h-1.4zM477.3 446.5h1.4v1.4h-1.4zM453.1 455.7h1.4v1.4h-1.4zM479.8 431.2h1.4v1.4h-1.4zM518.7 429.2h1.4v1.4h-1.4zM524 373.1h1.4v1.4h-1.4zM555.6 389.3h1.4v1.4h-1.4zM564.4 413.5h1.4v1.4h-1.4zM483.7 444.3h1.4v1.4h-1.4zM559.9 382h1.4v1.4h-1.4zM464.1 445.6h1.4v1.4h-1.4zM458.5 459.8h1.4v1.4h-1.4zM548.3 428.3h1.4v1.4h-1.4zM530.8 425.7h1.4v1.4h-1.4zM474.4 449.5h1.4v1.4h-1.4zM465.3 453.9h1.4v1.4h-1.4zM548 369.6h1.4v1.4h-1.4zM501.6 414.7h1.4v1.4h-1.4zM454.4 453.8h1.4v1.4h-1.4zM469.5 450.5h1.4v1.4h-1.4zM546.7 388.3h1.4v1.4h-1.4zM562.5 376.6h1.4v1.4h-1.4zM577.5 414.6h1.4v1.4h-1.4zM559.3 413.1h1.4v1.4h-1.4zM492.4 443.1h1.4v1.4h-1.4zM475.4 446.8h1.4v1.4h-1.4zM471.7 436.5h1.4v1.4h-1.4zM503.5 441.1h1.4v1.4h-1.4zM459.2 450.4h1.4v1.4h-1.4zM451.2 443.9h1.4v1.4h-1.4zM528.8 376.5h1.4v1.4h-1.4zM532.9 375.6h1.4v1.4h-1.4zM449.6 444.9h1.4v1.4h-1.4zM567.4 404.8h1.4v1.4h-1.4zM581.8 412.7h1.4v1.4h-1.4zM484 452.1h1.4v1.4h-1.4zM497 426.3h1.4v1.4h-1.4zM541.6 412h1.4v1.4h-1.4zM550 421.2h1.4v1.4h-1.4zM497.3 446.9h1.4v1.4h-1.4zM469.9 429.9h1.4v1.4h-1.4zM592.2 393.4h1.4v1.4h-1.4zM542.5 404.6h1.4v1.4h-1.4zM568.5 423.3h1.4v1.4h-1.4zM535.9 440.4h1.4v1.4h-1.4zM443.4 447.9h1.4v1.4h-1.4zM548.9 411.5h1.4v1.4h-1.4zM559.7 406.4h1.4v1.4h-1.4zM534 397h1.4v1.4h-1.4zM474.7 432.4h1.4v1.4h-1.4zM568.9 376.9h1.4v1.4h-1.4zM588.3 374.4h1.4v1.4h-1.4zM450.7 448.1h1.4v1.4h-1.4zM469.6 440.6h1.4v1.4h-1.4zM484.4 447.2h1.4v1.4h-1.4zM547.3 422h1.4v1.4h-1.4zM484.2 431.7h1.4v1.4h-1.4zM455.4 451.5h1.4v1.4h-1.4zM499.9 423.8h1.4v1.4h-1.4zM550.2 376.3h1.4v1.4h-1.4zM502.8 408.7h1.4v1.4h-1.4zM484.9 454.5h1.4v1.4h-1.4zM468 435.2h1.4v1.4h-1.4zM523.6 392.9h1.4v1.4h-1.4zM567.9 418.4h1.4v1.4h-1.4zM540.9 414.5h1.4v1.4h-1.4zM475.6 438.2h1.4v1.4h-1.4zM477.5 447h1.4v1.4h-1.4zM478.7 459.3h1.4v1.4h-1.4zM575.8 405.4h1.4v1.4h-1.4zM541.8 406.1h1.4v1.4h-1.4zM458.6 455.2h1.4v1.4h-1.4zM525 390.1h1.4v1.4h-1.4zM520.9 401.6h1.4v1.4h-1.4zM560.6 427.2h1.4v1.4h-1.4zM554.7 404.6h1.4v1.4h-1.4zM602.4 380.2h1.4v1.4h-1.4zM503.6 413.2h1.4v1.4h-1.4zM550 388.4h1.4v1.4h-1.4zM560.3 368.7h1.4v1.4h-1.4zM445.3 456.2h1.4v1.4h-1.4zM511.6 411.7h1.4v1.4h-1.4zM558.5 399.8h1.4v1.4h-1.4zM463.8 430.3h1.4v1.4h-1.4zM497.4 429.3h1.4v1.4h-1.4zM590.4 382.8h1.4v1.4h-1.4zM499.1 427h1.4v1.4h-1.4zM526.6 414.5h1.4v1.4h-1.4zM553.1 385.7h1.4v1.4h-1.4zM572.1 398.8h1.4v1.4h-1.4zM520.5 459.7h1.4v1.4h-1.4zM453.1 447.6h1.4v1.4h-1.4zM582 393h1.4v1.4h-1.4zM512.7 397.9h1.4v1.4h-1.4zM459.5 439.8h1.4v1.4h-1.4zM427.8 455.9h1.4v1.4h-1.4zM510.4 400.7h1.4v1.4h-1.4zM523.9 428.3h1.4v1.4h-1.4zM495.1 418.3h1.4v1.4h-1.4zM494.9 415h1.4v1.4h-1.4zM492.5 404.2h1.4v1.4h-1.4zM538.1 436.2h1.4v1.4h-1.4zM441.4 457.5h1.4v1.4h-1.4zM515.3 390.4h1.4v1.4h-1.4zM481.7 422.2h1.4v1.4h-1.4zM561.5 411.7h1.4v1.4h-1.4zM446.2 443.2h1.4v1.4h-1.4zM519.9 412.8h1.4v1.4h-1.4zM437.8 456.8h1.4v1.4h-1.4zM511.8 389.8h1.4v1.4h-1.4zM508.7 395.2h1.4v1.4h-1.4zM609.1 363.7h1.4v1.4h-1.4zM445.1 452.8h1.4v1.4h-1.4zM566.3 378.3h1.4v1.4h-1.4zM537.2 379.2h1.4v1.4h-1.4zM546.3 419.1h1.4v1.4h-1.4zM528.9 400.6h1.4v1.4h-1.4zM522.7 423.9h1.4v1.4h-1.4zM497.4 420h1.4v1.4h-1.4zM454.9 458.7h1.4v1.4h-1.4zM548.1 372.4h1.4v1.4h-1.4zM571 410.3h1.4v1.4h-1.4zM531.6 381.2h1.4v1.4h-1.4zM516.8 429.5h1.4v1.4h-1.4zM501.9 434.9h1.4v1.4h-1.4zM444.6 445.8h1.4v1.4h-1.4zM504.4 426.9h1.4v1.4h-1.4zM453 453.6h1.4v1.4h-1.4zM519.9 413.2h1.4v1.4h-1.4zM552.4 396.6h1.4v1.4h-1.4zM453.2 443.5h1.4v1.4h-1.4zM483.6 440.5h1.4v1.4h-1.4zM517.4 393.1h1.4v1.4h-1.4zM491.1 453h1.4v1.4h-1.4zM451.2 449.2h1.4v1.4h-1.4zM535 411h1.4v1.4h-1.4zM505.9 393.7h1.4v1.4h-1.4zM587.1 358.2h1.4v1.4h-1.4zM436.8 445h1.4v1.4h-1.4zM548.4 376.1h1.4v1.4h-1.4zM498.4 425.7h1.4v1.4h-1.4zM482.2 437.6h1.4v1.4h-1.4zM518.9 400.6h1.4v1.4h-1.4zM489.8 447.7h1.4v1.4h-1.4zM520.5 403.7h1.4v1.4h-1.4zM534.6 416.9h1.4v1.4h-1.4zM525.8 439.2h1.4v1.4h-1.4zM575.4 388.4h1.4v1.4h-1.4zM507.9 436.7h1.4v1.4h-1.4zM455.6 461.5h1.4v1.4h-1.4zM528.3 427.2h1.4v1.4h-1.4zM458.5 460.5h1.4v1.4h-1.4zM470.4 435.4h1.4v1.4h-1.4zM463.6 442.9h1.4v1.4h-1.4zM495.6 447.7h1.4v1.4h-1.4zM510.1 437.2h1.4v1.4h-1.4zM458.4 435.2h1.4v1.4h-1.4zM555.5 403.2h1.4v1.4h-1.4zM581.1 414.8h1.4v1.4h-1.4zM567.7 403.4h1.4v1.4h-1.4zM518.8 431.7h1.4v1.4h-1.4zM535.7 396.2h1.4v1.4h-1.4zM532.4 397.5h1.4v1.4h-1.4zM461.2 439h1.4v1.4h-1.4zM546.8 413.7h1.4v1.4h-1.4zM492.7 434.3h1.4v1.4h-1.4zM500.3 421.7h1.4v1.4h-1.4zM543.6 406h1.4v1.4h-1.4zM572.4 392h1.4v1.4h-1.4zM468.1 452.8h1.4v1.4h-1.4zM478.6 444.6h1.4v1.4h-1.4zM497.8 413.7h1.4v1.4h-1.4zM504.1 431.1h1.4v1.4h-1.4zM503.4 431.1h1.4v1.4h-1.4zM468.7 436.8h1.4v1.4h-1.4zM483.5 455.6h1.4v1.4h-1.4zM503.6 411.6h1.4v1.4h-1.4zM435.2 454.7h1.4v1.4h-1.4zM557.3 390.1h1.4v1.4h-1.4zM510.7 413.2h1.4v1.4h-1.4zM443.3 457.3h1.4v1.4h-1.4zM465.1 437.8h1.4v1.4h-1.4zM506.3 416.5h1.4v1.4h-1.4zM457.9 437.2h1.4v1.4h-1.4zM554.5 424.1h1.4v1.4h-1.4zM489.6 407.3h1.4v1.4h-1.4zM432.4 445.4h1.4v1.4h-1.4zM546.4 417.8h1.4v1.4h-1.4zM521.8 418.2h1.4v1.4h-1.4zM490.6 427.2h1.4v1.4h-1.4zM483 433.5h1.4v1.4h-1.4zM587.1 385.6h1.4v1.4h-1.4zM540.8 422.9h1.4v1.4h-1.4zM544.5 405.3h1.4v1.4h-1.4zM533.2 398.2h1.4v1.4h-1.4zM509.8 432.5h1.4v1.4h-1.4zM517 406.9h1.4v1.4h-1.4zM442 462.3h1.4v1.4h-1.4zM454.2 437.2h1.4v1.4h-1.4zM467.9 433h1.4v1.4h-1.4zM479.2 427.6h1.4v1.4h-1.4zM509.3 450.6h1.4v1.4h-1.4zM422.8 457.7h1.4v1.4h-1.4zM496 439.4h1.4v1.4h-1.4zM463.2 431.6h1.4v1.4h-1.4zM425.9 453.4h1.4v1.4h-1.4zM592.9 386.4h1.4v1.4h-1.4zM442.4 452.3h1.4v1.4h-1.4zM514.9 410h1.4v1.4h-1.4zM564.9 390.6h1.4v1.4h-1.4zM472.1 450.3h1.4v1.4h-1.4zM434 451.8h1.4v1.4h-1.4zM590.8 412.3h1.4v1.4h-1.4zM523.9 440.1h1.4v1.4h-1.4zM517.8 432.3h1.4v1.4h-1.4zM440.6 455.7h1.4v1.4h-1.4zM491.5 416.4h1.4v1.4h-1.4zM516.4 415.6h1.4v1.4h-1.4zM483.2 428.9h1.4v1.4h-1.4zM553.4 404.8h1.4v1.4h-1.4zM581.1 391.7h1.4v1.4h-1.4zM534 429.6h1.4v1.4h-1.4zM537.9 369.2h1.4v1.4h-1.4zM603 400.5h1.4v1.4h-1.4zM526.1 419h1.4v1.4h-1.4zM508.7 424h1.4v1.4h-1.4zM522.5 393h1.4v1.4h-1.4zM484 432.8h1.4v1.4h-1.4zM485.5 412.2h1.4v1.4h-1.4zM530.6 380.1h1.4v1.4h-1.4zM579 390h1.4v1.4h-1.4zM488.1 409.5h1.4v1.4h-1.4zM473.8 450h1.4v1.4h-1.4zM514.2 400.3h1.4v1.4h-1.4zM448.1 449.3h1.4v1.4h-1.4zM523.2 398.3h1.4v1.4h-1.4zM522.7 418.8h1.4v1.4h-1.4zM477.8 445h1.4v1.4h-1.4zM452.9 438.1h1.4v1.4h-1.4zM462 449.6h1.4v1.4h-1.4zM531.4 412.2h1.4v1.4h-1.4zM530.6 389.8h1.4v1.4h-1.4zM538.3 371.7h1.4v1.4h-1.4zM541.6 412.1h1.4v1.4h-1.4zM487.1 438.1h1.4v1.4h-1.4zM482 433.4h1.4v1.4h-1.4zM541.5 400.2h1.4v1.4h-1.4zM437.6 457.5h1.4v1.4h-1.4zM495.1 439.2h1.4v1.4h-1.4zM510.5 447.7h1.4v1.4h-1.4zM441.9 454.5h1.4v1.4h-1.4zM490.7 441h1.4v1.4h-1.4zM517.1 448.9h1.4v1.4h-1.4zM491.2 454.9h1.4v1.4h-1.4zM516.2 413.2h1.4v1.4h-1.4zM512.6 447.9h1.4v1.4h-1.4zM510.3 414.1h1.4v1.4h-1.4zM460.9 430.9h1.4v1.4h-1.4zM512 425.9h1.4v1.4h-1.4zM539.6 413.5h1.4v1.4h-1.4zM427 458.6h1.4v1.4h-1.4zM506.7 442.8h1.4v1.4h-1.4zM566.1 389h1.4v1.4h-1.4zM579.1 405.2h1.4v1.4h-1.4zM515.4 435.3h1.4v1.4h-1.4zM512.4 402h1.4v1.4h-1.4zM500.4 412.2h1.4v1.4h-1.4zM460.1 435h1.4v1.4h-1.4zM540.9 402.9h1.4v1.4h-1.4zM534.2 405.8h1.4v1.4h-1.4zM461.4 433.9h1.4v1.4h-1.4zM510.8 444.2h1.4v1.4h-1.4zM471.8 445.9h1.4v1.4h-1.4zM526.8 371.8h1.4v1.4h-1.4zM487.3 456h1.4v1.4h-1.4zM584.2 354.7h1.4v1.4h-1.4zM548.3 374.1h1.4v1.4h-1.4zM552.3 388.1h1.4v1.4h-1.4zM562.1 423.7h1.4v1.4h-1.4zM602.3 387.3h1.4v1.4h-1.4zM542.4 420.3h1.4v1.4h-1.4zM591.7 370.6h1.4v1.4h-1.4zM481.6 426.6h1.4v1.4h-1.4zM534.2 429.8h1.4v1.4h-1.4zM553.4 417.7h1.4v1.4h-1.4zM534.6 428.9h1.4v1.4h-1.4zM492.6 441h1.4v1.4h-1.4zM465.4 440h1.4v1.4h-1.4zM487.9 413.2h1.4v1.4h-1.4zM465.4 446.9h1.4v1.4h-1.4zM527.6 400.7h1.4v1.4h-1.4zM471.5 454.9h1.4v1.4h-1.4zM573 384.4h1.4v1.4h-1.4zM512.8 440.2h1.4v1.4h-1.4zM481.4 454.3h1.4v1.4h-1.4zM447.9 443.9h1.4v1.4h-1.4zM533.9 421.6h1.4v1.4h-1.4zM537.4 418.8h1.4v1.4h-1.4zM583.5 360.9h1.4v1.4h-1.4zM445.1 450.1h1.4v1.4h-1.4zM539.8 372.4h1.4v1.4h-1.4zM426.7 460.6h1.4v1.4h-1.4zM553 412.3h1.4v1.4h-1.4zM495.3 427.7h1.4v1.4h-1.4zM436.5 460.1h1.4v1.4h-1.4zM479.9 427.1h1.4v1.4h-1.4zM504.8 423h1.4v1.4h-1.4zM512.2 399.6h1.4v1.4h-1.4zM451.9 448.9h1.4v1.4h-1.4zM553.9 378.7h1.4v1.4h-1.4zM536.7 434.2h1.4v1.4h-1.4zM539.5 377h1.4v1.4h-1.4zM561.7 395.2h1.4v1.4h-1.4zM472.5 456.8h1.4v1.4h-1.4zM518.2 408.3h1.4v1.4h-1.4zM475.7 424.3h1.4v1.4h-1.4zM460.2 432.6h1.4v1.4h-1.4zM541.5 362.2h1.4v1.4h-1.4zM473.9 453.8h1.4v1.4h-1.4zM495.5 422.1h1.4v1.4h-1.4zM480.3 426.1h1.4v1.4h-1.4zM565.7 399.5h1.4v1.4h-1.4zM541.7 424.5h1.4v1.4h-1.4zM551.9 391.8h1.4v1.4h-1.4zM434.4 459.8h1.4v1.4h-1.4zM451 443.3h1.4v1.4h-1.4zM460.9 453.8h1.4v1.4h-1.4zM473.7 448h1.4v1.4h-1.4zM569.4 378.5h1.4v1.4h-1.4zM607 404.1h1.4v1.4h-1.4zM500.5 452.1h1.4v1.4h-1.4zM478.8 432.6h1.4v1.4h-1.4zM564.6 422.6h1.4v1.4h-1.4zM449.2 460.5h1.4v1.4h-1.4zM527.2 393.3h1.4v1.4h-1.4zM500.9 447.3h1.4v1.4h-1.4zM471.9 441.9h1.4v1.4h-1.4zM516.6 394.2h1.4v1.4h-1.4zM452.1 439.5h1.4v1.4h-1.4zM541.6 380.5h1.4v1.4h-1.4zM456.1 449.9h1.4v1.4h-1.4zM556.2 399.7h1.4v1.4h-1.4zM531.6 439.1h1.4v1.4h-1.4zM518.4 421h1.4v1.4h-1.4zM475.2 424.2h1.4v1.4h-1.4zM485.4 448.8h1.4v1.4h-1.4zM496.7 455.7h1.4v1.4h-1.4zM556.5 374.3h1.4v1.4h-1.4zM456.7 446h1.4v1.4h-1.4zM481.2 446.4h1.4v1.4h-1.4zM550.3 406.9h1.4v1.4h-1.4zM501 449.1h1.4v1.4h-1.4zM517.4 395.4h1.4v1.4h-1.4zM467.1 433.6h1.4v1.4h-1.4zM444.9 440.7h1.4v1.4h-1.4zM458.8 449h1.4v1.4h-1.4zM517.1 428.7h1.4v1.4h-1.4zM467.8 429.5h1.4v1.4h-1.4zM534 423h1.4v1.4h-1.4zM559.8 373.3h1.4v1.4h-1.4zM535.1 399.7h1.4v1.4h-1.4zM508.8 437.4h1.4v1.4h-1.4zM484.6 436.8h1.4v1.4h-1.4zM496.1 443.9h1.4v1.4h-1.4zM538.5 432h1.4v1.4h-1.4zM517.1 397.2h1.4v1.4h-1.4zM506.5 413.5h1.4v1.4h-1.4zM521.8 410.2h1.4v1.4h-1.4zM497.4 432.4h1.4v1.4h-1.4zM499.2 430.1h1.4v1.4h-1.4zM448.7 449.2h1.4v1.4h-1.4zM502 408.8h1.4v1.4h-1.4zM559 392.7h1.4v1.4h-1.4zM534.6 396.3h1.4v1.4h-1.4zM536.5 416.3h1.4v1.4h-1.4zM497.9 437.4h1.4v1.4h-1.4zM437.7 457.4h1.4v1.4h-1.4zM544.3 386.8h1.4v1.4h-1.4zM546.2 423.7h1.4v1.4h-1.4zM531.4 414.4h1.4v1.4h-1.4zM465 431.8h1.4v1.4h-1.4zM547.4 385.2h1.4v1.4h-1.4zM499.8 422.1h1.4v1.4h-1.4zM603.3 401.9h1.4v1.4h-1.4zM468.7 442h1.4v1.4h-1.4zM582.3 400.1h1.4v1.4h-1.4zM599 371.1h1.4v1.4h-1.4zM567.9 340.1h1.4v1.4h-1.4zM590.5 292.7h1.4v1.4h-1.4zM566.9 338.5h1.4v1.4h-1.4zM587.6 296h1.4v1.4h-1.4zM540.8 363.5h1.4v1.4h-1.4zM583 303.7h1.4v1.4h-1.4zM574.6 331.9h1.4v1.4h-1.4zM545.3 369.5h1.4v1.4h-1.4zM565.4 335h1.4v1.4h-1.4zM565.3 348.8h1.4v1.4h-1.4zM583.6 305.4h1.4v1.4h-1.4zM568.2 326.7h1.4v1.4h-1.4zM550.1 367.1h1.4v1.4h-1.4zM581.9 324.9h1.4v1.4h-1.4zM538.4 371.8h1.4v1.4h-1.4zM547.9 354.2h1.4v1.4h-1.4zM581.9 313.6h1.4v1.4h-1.4zM563 338.9h1.4v1.4h-1.4zM564.7 344.9h1.4v1.4h-1.4zM564.5 346.9h1.4v1.4h-1.4zM537.2 373.6h1.4v1.4h-1.4zM551.2 352.9h1.4v1.4h-1.4zM532.3 378.6h1.4v1.4h-1.4zM579.7 316.6h1.4v1.4h-1.4zM545.8 365.1h1.4v1.4h-1.4zM595.1 285.4h1.4v1.4h-1.4zM598.2 288.2h1.4v1.4h-1.4zM551.5 358.9h1.4v1.4h-1.4zM536 379.2h1.4v1.4h-1.4zM566.2 339.5h1.4v1.4h-1.4zM542.6 366.1h1.4v1.4h-1.4zM545.9 366.4h1.4v1.4h-1.4zM562.3 349.3h1.4v1.4h-1.4zM590.6 296.7h1.4v1.4h-1.4zM544.6 367h1.4v1.4h-1.4zM590.7 286.6h1.4v1.4h-1.4zM533.4 377.3h1.4v1.4h-1.4zM544.9 373.1h1.4v1.4h-1.4zM596.2 279.3h1.4v1.4h-1.4zM577.7 307.8h1.4v1.4h-1.4zM583.9 310.8h1.4v1.4h-1.4zM566.1 333.4h1.4v1.4h-1.4zM569.7 338.9h1.4v1.4h-1.4zM578.8 326.1h1.4v1.4h-1.4zM550.8 362.3h1.4v1.4h-1.4zM543.7 372.9h1.4v1.4h-1.4zM562.6 347.7h1.4v1.4h-1.4zM543.8 369.3h1.4v1.4h-1.4zM559.5 349.6h1.4v1.4h-1.4zM583.4 314.8h1.4v1.4h-1.4zM586.7 299.1h1.4v1.4h-1.4zM556.8 354h1.4v1.4h-1.4zM575 326.2h1.4v1.4h-1.4zM554.7 351.6h1.4v1.4h-1.4zM569.3 344.8h1.4v1.4h-1.4zM539.2 365.5h1.4v1.4h-1.4zM552.4 361.4h1.4v1.4h-1.4zM556.5 345.2h1.4v1.4h-1.4zM578.7 318.8h1.4v1.4h-1.4zM575.2 334h1.4v1.4h-1.4zM588 290.1h1.4v1.4h-1.4zM563.5 348.5h1.4v1.4h-1.4zM549.5 366.5h1.4v1.4h-1.4zM544.5 363.5h1.4v1.4h-1.4zM577.3 313.3h1.4v1.4h-1.4zM550.6 362.1h1.4v1.4h-1.4zM562 338.7h1.4v1.4h-1.4zM563.2 340.1h1.4v1.4h-1.4zM589.5 295.9h1.4v1.4h-1.4zM533 392.1h1.4v1.4h-1.4zM579.2 326.7h1.4v1.4h-1.4zM603.5 274.3h1.4v1.4h-1.4zM553.5 363.7h1.4v1.4h-1.4zM581.6 312.6h1.4v1.4h-1.4zM575.9 315.4h1.4v1.4h-1.4zM601.8 277.1h1.4v1.4h-1.4zM599.5 290.3h1.4v1.4h-1.4zM535.9 373.1h1.4v1.4h-1.4zM600.1 282.9h1.4v1.4h-1.4zM549.6 361.3h1.4v1.4h-1.4zM585 302.9h1.4v1.4h-1.4zM583.3 311.6h1.4v1.4h-1.4zM540.3 369.7h1.4v1.4h-1.4zM590.2 308.6h1.4v1.4h-1.4zM580.9 321.6h1.4v1.4h-1.4zM546.1 369.4h1.4v1.4h-1.4zM539.1 371.7h1.4v1.4h-1.4zM533.2 382.3h1.4v1.4h-1.4zM555.8 358.1h1.4v1.4h-1.4zM561.5 346.4h1.4v1.4h-1.4zM577.5 324.7h1.4v1.4h-1.4zM557.2 355.3h1.4v1.4h-1.4zM534 378.5h1.4v1.4h-1.4zM570.7 333h1.4v1.4h-1.4zM572.4 341.1h1.4v1.4h-1.4zM541.2 380h1.4v1.4h-1.4zM539.9 369.1h1.4v1.4h-1.4zM542.5 374.3h1.4v1.4h-1.4zM590.7 309.1h1.4v1.4h-1.4zM539.8 374.3h1.4v1.4h-1.4zM539.9 373h1.4v1.4h-1.4zM543.7 372.6h1.4v1.4h-1.4zM571.4 320.9h1.4v1.4h-1.4zM564 336.2h1.4v1.4h-1.4zM586.7 315.1h1.4v1.4h-1.4zM535.8 374.2h1.4v1.4h-1.4zM559.5 345.3h1.4v1.4h-1.4zM541.3 375.8h1.4v1.4h-1.4zM532.8 381.7h1.4v1.4h-1.4zM556.2 346.1h1.4v1.4h-1.4zM576.4 320.1h1.4v1.4h-1.4zM592.3 299.9h1.4v1.4h-1.4zM540.8 362.6h1.4v1.4h-1.4zM558.1 340.5h1.4v1.4h-1.4zM537.6 369.9h1.4v1.4h-1.4zM535.1 381.3h1.4v1.4h-1.4zM571 340.8h1.4v1.4h-1.4zM558.8 346.1h1.4v1.4h-1.4zM537.8 376.7h1.4v1.4h-1.4zM599 283.4h1.4v1.4h-1.4zM552.7 353.3h1.4v1.4h-1.4zM532.7 383.7h1.4v1.4h-1.4zM578.6 319.5h1.4v1.4h-1.4zM544.2 361.7h1.4v1.4h-1.4zM560.8 349.2h1.4v1.4h-1.4zM549.9 352.8h1.4v1.4h-1.4zM567.8 339.5h1.4v1.4h-1.4zM535.3 378.1h1.4v1.4h-1.4zM532.8 382.5h1.4v1.4h-1.4zM596.5 288.8h1.4v1.4h-1.4zM538.9 368.8h1.4v1.4h-1.4zM577.3 312.7h1.4v1.4h-1.4zM552.7 361.4h1.4v1.4h-1.4zM534.1 378.3h1.4v1.4h-1.4zM543.4 371.3h1.4v1.4h-1.4zM593.2 295.7h1.4v1.4h-1.4zM544.2 366.6h1.4v1.4h-1.4zM566.5 349.8h1.4v1.4h-1.4zM547.7 365.9h1.4v1.4h-1.4zM539.9 372h1.4v1.4h-1.4zM600 285.5h1.4v1.4h-1.4zM557.7 358h1.4v1.4h-1.4zM557.3 356.5h1.4v1.4h-1.4zM575.7 323.7h1.4v1.4h-1.4zM566.2 345.6h1.4v1.4h-1.4zM584 318.5h1.4v1.4h-1.4zM570.6 334.6h1.4v1.4h-1.4zM587.3 302.3h1.4v1.4h-1.4zM588.3 310.2h1.4v1.4h-1.4zM587.5 300.1h1.4v1.4h-1.4zM572.4 337.3h1.4v1.4h-1.4zM559.2 349.1h1.4v1.4h-1.4zM572.8 348.9h1.4v1.4h-1.4zM556.7 359.3h1.4v1.4h-1.4zM564.5 341h1.4v1.4h-1.4zM574 328.4h1.4v1.4h-1.4zM587.1 311.7h1.4v1.4h-1.4zM564.8 340.2h1.4v1.4h-1.4zM576.2 329.4h1.4v1.4h-1.4zM576.8 329.9h1.4v1.4h-1.4zM578.9 320h1.4v1.4h-1.4zM540.2 372.5h1.4v1.4h-1.4zM560.7 349.1h1.4v1.4h-1.4zM555.2 352.4h1.4v1.4h-1.4zM552.4 368.3h1.4v1.4h-1.4zM593 293h1.4v1.4h-1.4zM579.2 323.5h1.4v1.4h-1.4zM571.5 325h1.4v1.4h-1.4zM532.1 386.9h1.4v1.4h-1.4zM590.8 314.8h1.4v1.4h-1.4zM592.4 290.7h1.4v1.4h-1.4zM598.3 297.3h1.4v1.4h-1.4zM535.9 377.1h1.4v1.4h-1.4zM552.6 346.3h1.4v1.4h-1.4zM562.8 341.9h1.4v1.4h-1.4zM561 343.2h1.4v1.4h-1.4zM557.9 339h1.4v1.4h-1.4zM581.1 307.9h1.4v1.4h-1.4zM537.1 379.1h1.4v1.4h-1.4zM566.2 339.5h1.4v1.4h-1.4zM409.2 458.9h1.4v1.4h-1.4zM407.6 457.9h1.4v1.4h-1.4zM407.9 461.9h1.4v1.4h-1.4zM420.8 452.4h1.4v1.4h-1.4zM420.9 457.6h1.4v1.4h-1.4zM395.1 467.1h1.4v1.4h-1.4zM399.5 460.8h1.4v1.4h-1.4zM396.8 462.8h1.4v1.4h-1.4zM412.9 457.2h1.4v1.4h-1.4zM415.9 458.8h1.4v1.4h-1.4zM421.2 454.4h1.4v1.4h-1.4zM401.2 465.6h1.4v1.4h-1.4zM413.6 461.1h1.4v1.4h-1.4zM419 458h1.4v1.4h-1.4zM398.2 465.4h1.4v1.4h-1.4zM404.8 462.4h1.4v1.4h-1.4zM413.6 455.1h1.4v1.4h-1.4zM407.8 463h1.4v1.4h-1.4zM409.3 457.7h1.4v1.4h-1.4zM414.9 454.5h1.4v1.4h-1.4zM405 464.1h1.4v1.4h-1.4zM408.7 460h1.4v1.4h-1.4zM418.2 459.3h1.4v1.4h-1.4zM404.8 463.4h1.4v1.4h-1.4zM420.1 452.8h1.4v1.4h-1.4zM395.3 465.4h1.4v1.4h-1.4zM401.8 462h1.4v1.4h-1.4zM413.5 456h1.4v1.4h-1.4zM413.7 456.7h1.4v1.4h-1.4zM400.6 464.4h1.4v1.4h-1.4zM403.9 463.6h1.4v1.4h-1.4zM417.8 457.9h1.4v1.4h-1.4zM409.9 461.3h1.4v1.4h-1.4zM413.9 456.7h1.4v1.4h-1.4zM398.7 461.4h1.4v1.4h-1.4zM417 455.3h1.4v1.4h-1.4zM421.1 451.9h1.4v1.4h-1.4zM401.7 464.3h1.4v1.4h-1.4zM417.5 458.6h1.4v1.4h-1.4zM416 458.1h1.4v1.4h-1.4zM589.9 371.5h1.4v1.4h-1.4zM624.3 385.1h1.4v1.4h-1.4zM637.4 375.4h1.4v1.4h-1.4zM591.4 373.7h1.4v1.4h-1.4zM614.4 369.3h1.4v1.4h-1.4zM625.6 391.2h1.4v1.4h-1.4zM601.5 387.5h1.4v1.4h-1.4zM614.9 382.6h1.4v1.4h-1.4zM604.8 386.8h1.4v1.4h-1.4zM594.6 362.7h1.4v1.4h-1.4zM619.9 358.3h1.4v1.4h-1.4zM624.8 384.9h1.4v1.4h-1.4zM603.6 366.9h1.4v1.4h-1.4zM617 369.4h1.4v1.4h-1.4zM606.6 365.4h1.4v1.4h-1.4zM617.2 372h1.4v1.4h-1.4zM601.5 359.8h1.4v1.4h-1.4zM638.1 366.6h1.4v1.4h-1.4zM605.7 368.5h1.4v1.4h-1.4zM627.9 395.1h1.4v1.4h-1.4zM621.9 358.3h1.4v1.4h-1.4zM635.5 362.1h1.4v1.4h-1.4zM608.9 373.7h1.4v1.4h-1.4zM601.8 362.5h1.4v1.4h-1.4zM617.5 374.8h1.4v1.4h-1.4zM591.2 361.5h1.4v1.4h-1.4zM629.1 358.8h1.4v1.4h-1.4zM625.7 394.1h1.4v1.4h-1.4zM634.4 374.2h1.4v1.4h-1.4zM637.9 385.2h1.4v1.4h-1.4zM605.8 385.3h1.4v1.4h-1.4zM638.8 377.7h1.4v1.4h-1.4zM633.3 394.2h1.4v1.4h-1.4zM620.3 379.2h1.4v1.4h-1.4zM619.7 359.1h1.4v1.4h-1.4zM599.8 359.5h1.4v1.4h-1.4zM636.7 358.1h1.4v1.4h-1.4zM606.9 394.8h1.4v1.4h-1.4zM613.4 359.9h1.4v1.4h-1.4zM600.2 368.3h1.4v1.4h-1.4zM595.7 359.9h1.4v1.4h-1.4zM614.9 370.7h1.4v1.4h-1.4zM621.9 365.2h1.4v1.4h-1.4zM634.3 382.8h1.4v1.4h-1.4zM604.6 377.8h1.4v1.4h-1.4zM603.8 391.6h1.4v1.4h-1.4zM619.4 393.1h1.4v1.4h-1.4zM592.8 376.5h1.4v1.4h-1.4zM627 382.8h1.4v1.4h-1.4zM621.7 364.9h1.4v1.4h-1.4zM625.1 378.8h1.4v1.4h-1.4zM623.3 391.9h1.4v1.4h-1.4zM601.4 363.9h1.4v1.4h-1.4zM637.6 393h1.4v1.4h-1.4zM627.8 364.8h1.4v1.4h-1.4zM627.6 367.8h1.4v1.4h-1.4zM625.6 381.7h1.4v1.4h-1.4zM630.2 369.3h1.4v1.4h-1.4zM621.3 381.7h1.4v1.4h-1.4zM628.6 362.2h1.4v1.4h-1.4z" fill="#4766ab"/><path d="M292 493 V177.8 H736.5" fill="none" stroke="#5a5a5a" stroke-width="1.2"/><line x1="291.2" y1="493.6" x2="737.6" y2="493.6" stroke="#111" stroke-width="2"/><line x1="736.6" y1="177.2" x2="736.6" y2="494.6" stroke="#111" stroke-width="2"/><line x1="292" y1="494.5" x2="292" y2="498.5" stroke="#888" stroke-width="0.8"/><line x1="299.9" y1="494.5" x2="299.9" y2="496.5" stroke="#888" stroke-width="0.8"/><line x1="307.9" y1="494.5" x2="307.9" y2="496.5" stroke="#888" stroke-width="0.8"/><line x1="315.8" y1="494.5" x2="315.8" y2="496.5" stroke="#888" stroke-width="0.8"/><line x1="323.8" y1="494.5" x2="323.8" y2="498.5" stroke="#888" stroke-width="0.8"/><line x1="331.7" y1="494.5" x2="331.7" y2="496.5" stroke="#888" stroke-width="0.8"/><line x1="339.6" y1="494.5" x2="339.6" y2="496.5" stroke="#888" stroke-width="0.8"/><line x1="347.6" y1="494.5" x2="347.6" y2="496.5" stroke="#888" stroke-width="0.8"/><line x1="355.5" y1="494.5" x2="355.5" y2="498.5" stroke="#888" stroke-width="0.8"/><line x1="363.4" y1="494.5" x2="363.4" y2="496.5" stroke="#888" stroke-width="0.8"/><line x1="371.4" y1="494.5" x2="371.4" y2="496.5" stroke="#888" stroke-width="0.8"/><line x1="379.3" y1="494.5" x2="379.3" y2="496.5" stroke="#888" stroke-width="0.8"/><line x1="387.2" y1="494.5" x2="387.2" y2="498.5" stroke="#888" stroke-width="0.8"/><line x1="395.2" y1="494.5" x2="395.2" y2="496.5" stroke="#888" stroke-width="0.8"/><line x1="403.1" y1="494.5" x2="403.1" y2="496.5" stroke="#888" stroke-width="0.8"/><line x1="411.1" y1="494.5" x2="411.1" y2="496.5" stroke="#888" stroke-width="0.8"/><line x1="419" y1="494.5" x2="419" y2="498.5" stroke="#888" stroke-width="0.8"/><line x1="426.9" y1="494.5" x2="426.9" y2="496.5" stroke="#888" stroke-width="0.8"/><line x1="434.9" y1="494.5" x2="434.9" y2="496.5" stroke="#888" stroke-width="0.8"/><line x1="442.8" y1="494.5" x2="442.8" y2="496.5" stroke="#888" stroke-width="0.8"/><line x1="450.8" y1="494.5" x2="450.8" y2="498.5" stroke="#888" stroke-width="0.8"/><line x1="458.7" y1="494.5" x2="458.7" y2="496.5" stroke="#888" stroke-width="0.8"/><line x1="466.6" y1="494.5" x2="466.6" y2="496.5" stroke="#888" stroke-width="0.8"/><line x1="474.6" y1="494.5" x2="474.6" y2="496.5" stroke="#888" stroke-width="0.8"/><line x1="482.5" y1="494.5" x2="482.5" y2="498.5" stroke="#888" stroke-width="0.8"/><line x1="490.4" y1="494.5" x2="490.4" y2="496.5" stroke="#888" stroke-width="0.8"/><line x1="498.4" y1="494.5" x2="498.4" y2="496.5" stroke="#888" stroke-width="0.8"/><line x1="506.3" y1="494.5" x2="506.3" y2="496.5" stroke="#888" stroke-width="0.8"/><line x1="514.2" y1="494.5" x2="514.2" y2="498.5" stroke="#888" stroke-width="0.8"/><line x1="522.2" y1="494.5" x2="522.2" y2="496.5" stroke="#888" stroke-width="0.8"/><line x1="530.1" y1="494.5" x2="530.1" y2="496.5" stroke="#888" stroke-width="0.8"/><line x1="538.1" y1="494.5" x2="538.1" y2="496.5" stroke="#888" stroke-width="0.8"/><line x1="546" y1="494.5" x2="546" y2="498.5" stroke="#888" stroke-width="0.8"/><line x1="553.9" y1="494.5" x2="553.9" y2="496.5" stroke="#888" stroke-width="0.8"/><line x1="561.9" y1="494.5" x2="561.9" y2="496.5" stroke="#888" stroke-width="0.8"/><line x1="569.8" y1="494.5" x2="569.8" y2="496.5" stroke="#888" stroke-width="0.8"/><line x1="577.8" y1="494.5" x2="577.8" y2="498.5" stroke="#888" stroke-width="0.8"/><line x1="585.7" y1="494.5" x2="585.7" y2="496.5" stroke="#888" stroke-width="0.8"/><line x1="593.6" y1="494.5" x2="593.6" y2="496.5" stroke="#888" stroke-width="0.8"/><line x1="601.6" y1="494.5" x2="601.6" y2="496.5" stroke="#888" stroke-width="0.8"/><line x1="609.5" y1="494.5" x2="609.5" y2="498.5" stroke="#888" stroke-width="0.8"/><line x1="617.4" y1="494.5" x2="617.4" y2="496.5" stroke="#888" stroke-width="0.8"/><line x1="625.4" y1="494.5" x2="625.4" y2="496.5" stroke="#888" stroke-width="0.8"/><line x1="633.3" y1="494.5" x2="633.3" y2="496.5" stroke="#888" stroke-width="0.8"/><line x1="641.2" y1="494.5" x2="641.2" y2="498.5" stroke="#888" stroke-width="0.8"/><line x1="649.2" y1="494.5" x2="649.2" y2="496.5" stroke="#888" stroke-width="0.8"/><line x1="657.1" y1="494.5" x2="657.1" y2="496.5" stroke="#888" stroke-width="0.8"/><line x1="665.1" y1="494.5" x2="665.1" y2="496.5" stroke="#888" stroke-width="0.8"/><line x1="673" y1="494.5" x2="673" y2="498.5" stroke="#888" stroke-width="0.8"/><line x1="680.9" y1="494.5" x2="680.9" y2="496.5" stroke="#888" stroke-width="0.8"/><line x1="688.9" y1="494.5" x2="688.9" y2="496.5" stroke="#888" stroke-width="0.8"/><line x1="696.8" y1="494.5" x2="696.8" y2="496.5" stroke="#888" stroke-width="0.8"/><line x1="704.8" y1="494.5" x2="704.8" y2="498.5" stroke="#888" stroke-width="0.8"/><line x1="712.7" y1="494.5" x2="712.7" y2="496.5" stroke="#888" stroke-width="0.8"/><line x1="720.6" y1="494.5" x2="720.6" y2="496.5" stroke="#888" stroke-width="0.8"/><line x1="728.6" y1="494.5" x2="728.6" y2="496.5" stroke="#888" stroke-width="0.8"/><line x1="736.5" y1="494.5" x2="736.5" y2="498.5" stroke="#888" stroke-width="0.8"/><line x1="737.5" y1="471.3" x2="741.5" y2="471.3" stroke="#888" stroke-width="0.8"/><line x1="737.5" y1="450.4" x2="741.5" y2="450.4" stroke="#888" stroke-width="0.8"/><line x1="737.5" y1="429.4" x2="741.5" y2="429.4" stroke="#888" stroke-width="0.8"/><line x1="737.5" y1="408.4" x2="741.5" y2="408.4" stroke="#888" stroke-width="0.8"/><line x1="737.5" y1="387.5" x2="741.5" y2="387.5" stroke="#888" stroke-width="0.8"/><line x1="737.5" y1="366.5" x2="741.5" y2="366.5" stroke="#888" stroke-width="0.8"/><line x1="737.5" y1="345.5" x2="741.5" y2="345.5" stroke="#888" stroke-width="0.8"/><line x1="737.5" y1="324.6" x2="741.5" y2="324.6" stroke="#888" stroke-width="0.8"/><line x1="737.5" y1="303.6" x2="741.5" y2="303.6" stroke="#888" stroke-width="0.8"/><line x1="737.5" y1="282.6" x2="741.5" y2="282.6" stroke="#888" stroke-width="0.8"/><line x1="737.5" y1="261.7" x2="741.5" y2="261.7" stroke="#888" stroke-width="0.8"/><line x1="737.5" y1="240.7" x2="741.5" y2="240.7" stroke="#888" stroke-width="0.8"/><line x1="737.5" y1="219.7" x2="741.5" y2="219.7" stroke="#888" stroke-width="0.8"/><line x1="737.5" y1="198.8" x2="741.5" y2="198.8" stroke="#888" stroke-width="0.8"/><g font-family="Liberation Sans" font-size="9.5" fill="#222" letter-spacing="-0.2"><text x="293" y="509.5" text-anchor="middle">-20</text><text x="324.8" y="509.5" text-anchor="middle">-15</text><text x="356.5" y="509.5" text-anchor="middle">-10</text><text x="388.2" y="509.5" text-anchor="middle">-5</text><text x="420" y="509.5" text-anchor="middle">0</text><text x="451.8" y="509.5" text-anchor="middle">5</text><text x="483.5" y="509.5" text-anchor="middle">10</text><text x="515.2" y="509.5" text-anchor="middle">15</text><text x="547" y="509.5" text-anchor="middle">20</text><text x="578.8" y="509.5" text-anchor="middle">25</text><text x="610.5" y="509.5" text-anchor="middle">30</text><text x="642.2" y="509.5" text-anchor="middle">35</text><text x="674" y="509.5" text-anchor="middle">40</text><text x="705.8" y="509.5" text-anchor="middle">45</text><text x="737.5" y="509.5" text-anchor="middle">50</text><text x="745" y="474.7">0,002</text><text x="745" y="453.8">0,004</text><text x="745" y="432.8">0,006</text><text x="745" y="411.8">0,008</text><text x="745" y="390.9">0,01</text><text x="745" y="369.9">0,012</text><text x="745" y="348.9">0,014</text><text x="745" y="328">0,016</text><text x="745" y="307">0,018</text><text x="745" y="286">0,02</text><text x="745" y="265.1">0,022</text><text x="745" y="244.1">0,024</text><text x="745" y="223.1">0,026</text><text x="745" y="202.2">0,028</text><text x="518" y="519.3" text-anchor="middle">Température sèche (°C)</text><text transform="translate(771,337) rotate(90)" text-anchor="middle">Humidité absolue (kg/kgas)</text></g></svg>

<!-- bottom -->
<div class="a" style="left:1px;top:537px;width:798px;height:1px;background:#e6e6e6"></div>
<div class="a" style="left:4.5px;top:543px;width:146px;height:17.5px;box-sizing:border-box;background:#fdfdfd;border:1px solid #dedede;border-bottom-color:#cfcfcf;border-radius:3px"></div>
<svg class="a" style="left:8px;top:545.5px" width="12" height="14" viewBox="0 0 12 14">
<path d="M6 0.6 C9.3 0.6 11.4 2.6 11.4 5 C11.4 6.8 10 7.6 8.9 7.6 C8 7.6 7.4 8.3 7.7 9.4 C8.1 11 7.6 13.2 5.6 13.2 C2.6 13.2 0 10.2 0 6.6 C0 3.2 2.6 0.6 6 0.6Z" fill="#fbb605"/>
<rect x="5.1" y="1.7" width="1.8" height="1.7" rx="0.5" fill="#3e8ef0"/><rect x="1.9" y="3.4" width="1.8" height="1.7" rx="0.5" fill="#43a047"/><rect x="7.9" y="3.7" width="1.8" height="1.7" rx="0.5" fill="#8e44c8"/><rect x="1.4" y="6.6" width="1.8" height="1.7" rx="0.5" fill="#f24a1a"/><rect x="4.8" y="9.3" width="1.9" height="1.9" rx="0.5" fill="#fff"/>
</svg>
<div class="t" style="left:41px;top:546.5px">Configuration graphique</div>
</body></html>
